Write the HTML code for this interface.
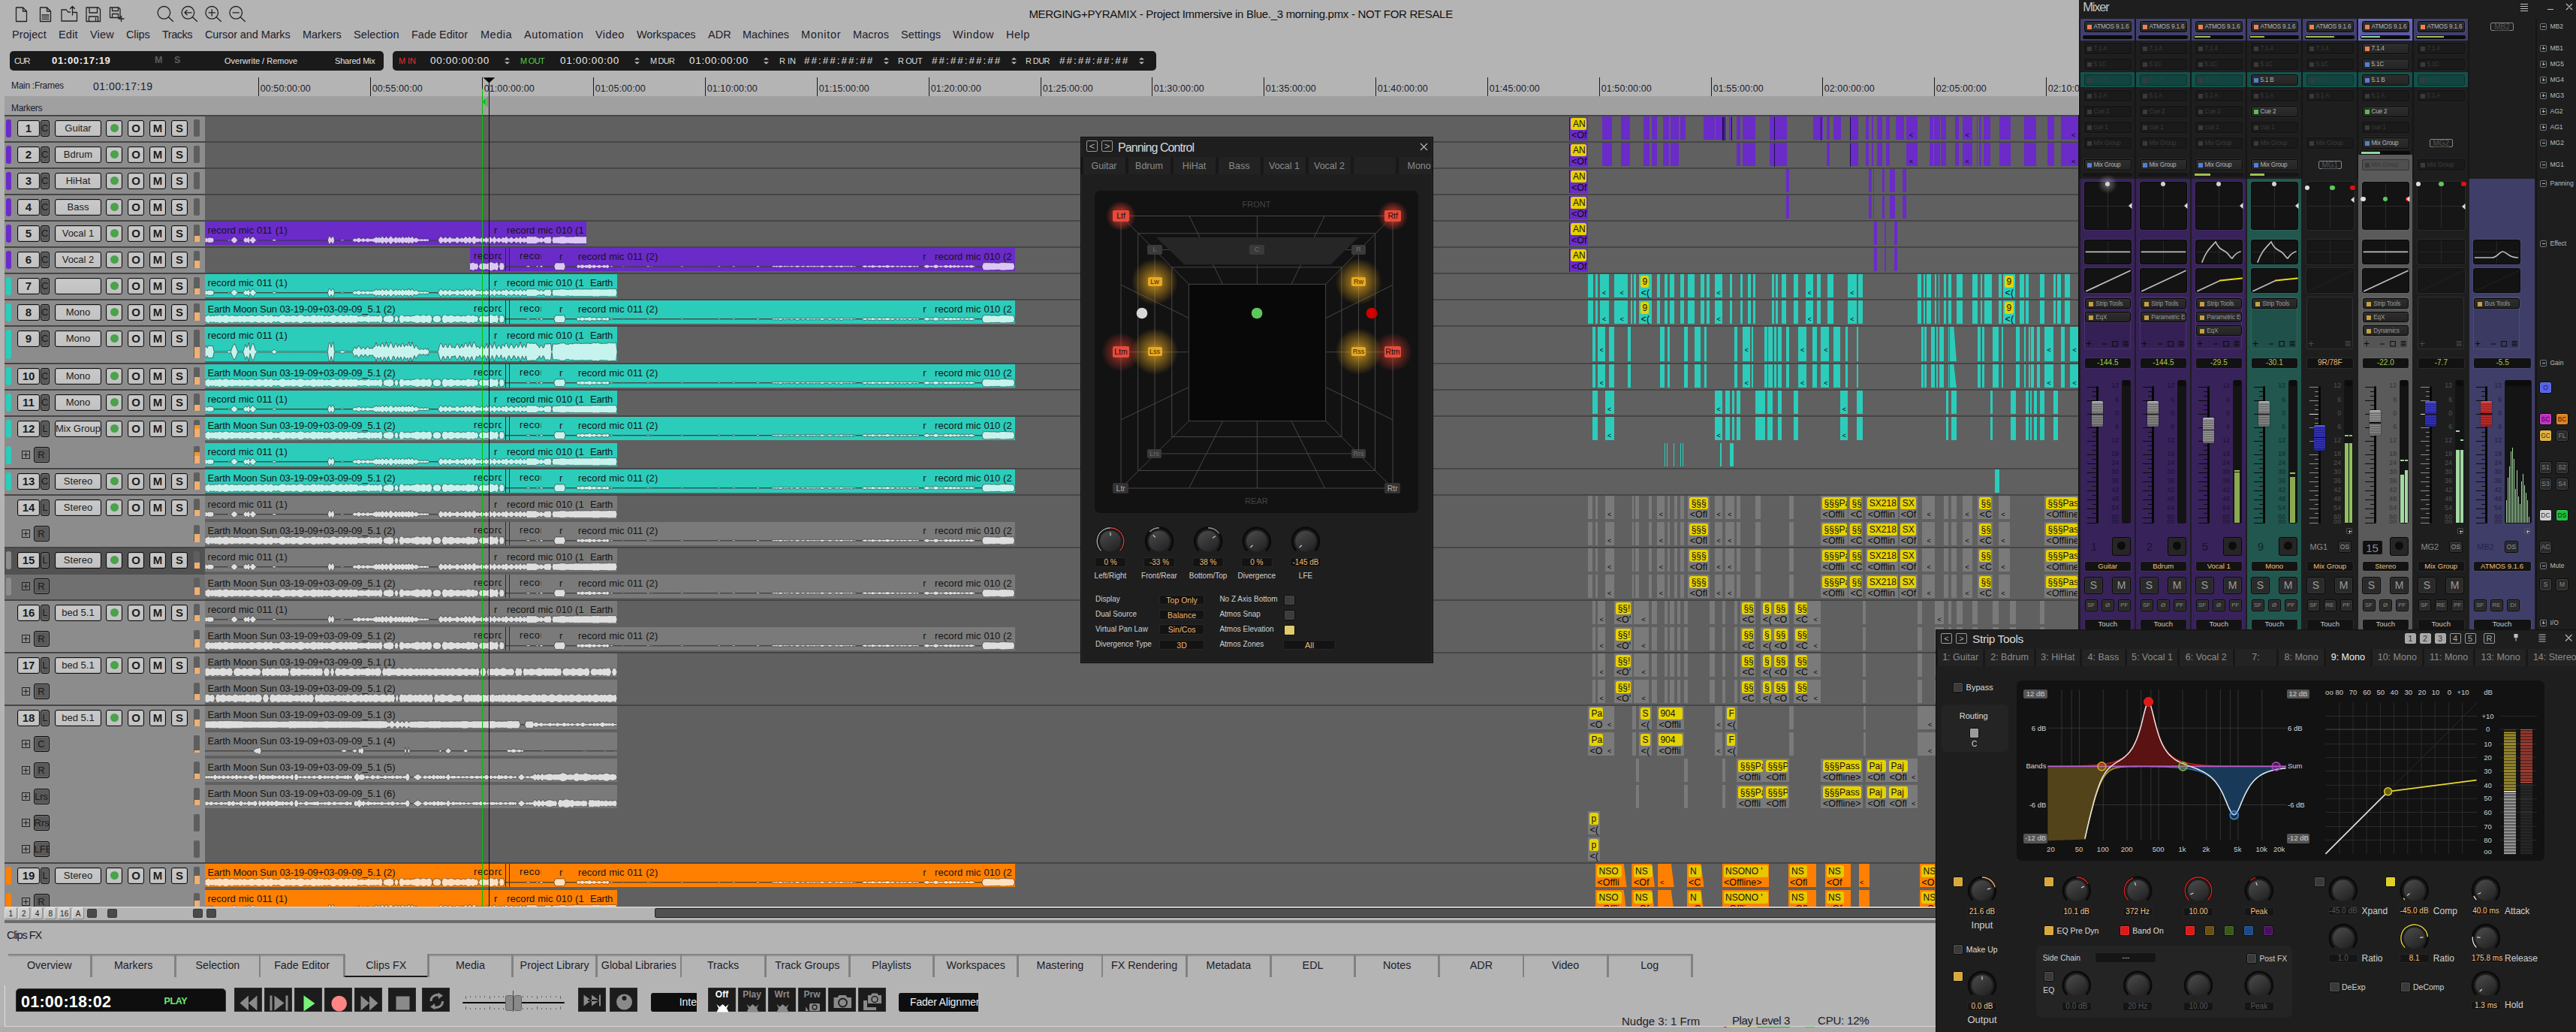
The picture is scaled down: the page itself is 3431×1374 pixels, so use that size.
<!DOCTYPE html><html><head><meta charset="utf-8"><title>Pyramix</title><style>
html,body{margin:0;padding:0;background:#b4b4b4}
body{width:3431px;height:1374px;position:relative;overflow:hidden;font-family:"Liberation Sans",sans-serif;font-size:12px;color:#111}
div{position:absolute;box-sizing:border-box}
.t{white-space:nowrap}
.b{border:1px solid #0c0c0c;border-radius:3px;background:linear-gradient(#c9c9c9,#c1c1c1);text-align:center;line-height:20px;font-size:13px;color:#1c1c1c;box-shadow:inset 0 0 0 1px rgba(120,120,120,.25);white-space:nowrap;overflow:hidden}
.b b{font-size:15px}
.n{font-size:13px}
.d{border:1px solid #0c0c0c;border-radius:3px;background:#595959;text-align:center;line-height:20px;font-size:13px;color:#1a1a1a;box-shadow:inset 0 0 0 1px rgba(255,255,255,.12);white-space:nowrap;overflow:hidden}
.g{display:inline-block;width:11px;height:11px;border-radius:6px;background:#4aa24a;vertical-align:-1px}
.pl{border:1px solid #222}
.pl:before{content:"";position:absolute;left:1px;right:1px;top:4px;height:1px;background:#222}
.pl:after{content:"";position:absolute;top:1px;bottom:1px;left:4px;width:1px;background:#222}
.ct{font-size:13px;line-height:18px;white-space:nowrap;color:#141414}
.yl{border-radius:2.5px;font-size:12px;line-height:16.5px;padding-left:2.5px;overflow:hidden;white-space:nowrap;color:#111}
.ys{font-size:12.5px;line-height:14px;overflow:hidden;white-space:nowrap;color:#0a0a0a}

.sq{border:1px solid #8c8c8c;border-top-color:#e8e8e8;border-left-color:#e0e0e0;background:linear-gradient(#d4d4d4,#c2c2c2);font-size:10px;line-height:15px;text-align:center;color:#222;border-radius:2px}
.tab{border-top:2px solid #858585;border-right:2px solid #858585;font-size:15px;line-height:29px;text-align:center;color:#222;white-space:nowrap;overflow:hidden}
.tb{background:#1c1c1c;border:1px solid #2c2c2c}
.tb svg{position:absolute;left:0;top:0}
.at{font-size:12px;font-weight:bold;line-height:13px;text-align:center;width:100%;top:2px;color:#8c8c8c}

.pt{font-size:12.5px;line-height:24px;color:#8c8c8c;text-align:center;background:#222;white-space:nowrap;overflow:hidden}
.sp{font-size:10.5px;line-height:14.5px;text-align:center;border-radius:2px;color:#111;white-space:nowrap}
.sps{font-size:9px;line-height:12px}
.vb{background:#131313;border-radius:2px;color:#f2b66e;font-size:10px;text-align:center;white-space:nowrap;box-shadow:0 0 0 1px #262626}
.cb{border:1px solid #0c0c0c;border-radius:2.5px;background:#3c3c3c;box-shadow:inset 0 0 0 1px rgba(255,255,255,.06)}
.nb{border:1px solid #9a9a9a;border-radius:2px;color:#aaa;font-size:13px;line-height:13px;text-align:center}

.mb{border:1px solid #080808;border-radius:2.5px;background:linear-gradient(#2e2e2e,#242424);font-size:8.2px;letter-spacing:-0.2px;line-height:13.5px;color:#b4b4b4;white-space:nowrap;overflow:hidden;padding-left:12px;box-shadow:0 0 0 1px rgba(255,255,255,.06)}
.mb i{position:absolute;left:3.5px;top:4px;width:6.300px;height:6.300px}
.mi{border:1px solid rgba(0,0,0,.35);border-radius:2.5px;background:rgba(0,0,0,.12);font-size:8.2px;letter-spacing:-0.2px;line-height:13.5px;color:#3a3a3a;white-space:nowrap;overflow:hidden;padding-left:12px;box-shadow:0 0 0 1px rgba(255,255,255,.025)}
.mi i{position:absolute;left:3.5px;top:4px;width:6.300px;height:6.300px;background:#3a3a3a}
.bx{background:#131313;border:1.5px solid #090909;border-radius:3px;box-shadow:0 0 0 1px rgba(255,255,255,.06)}
.gv{background:#121212;border-radius:2px;font-size:10px;line-height:12.500px;text-align:center;color:#a8c850;box-shadow:0 0 0 1px rgba(255,255,255,.05)}
.nm{background:#131313;border-radius:2px;font-size:9.5px;line-height:12.700px;text-align:center;color:#f0c080;white-space:nowrap;box-shadow:0 0 0 1px rgba(255,255,255,.05)}
.sm{background:#2a2a2a;border:1.5px solid #0a0a0a;border-radius:3px;font-size:14px;line-height:21px;text-align:center;color:#9a9a9a;box-shadow:inset 0 0 0 1px rgba(255,255,255,.05)}
.sf{background:#2a2a2a;border:1px solid #0a0a0a;border-radius:2.5px;font-size:8px;line-height:14px;text-align:center;color:#8a8a8a;box-shadow:inset 0 0 0 1px rgba(255,255,255,.05)}
.ol{border:1px solid #888;border-radius:2px;font-size:10px;line-height:9px;text-align:center;color:#555;text-decoration:underline}
.rl{font-size:8.5px;line-height:11px;color:#bdbdbd;white-space:nowrap}
.pm{width:9px;height:9px;border:1px solid #777;border-radius:1.5px}
.pm:before{content:"";position:absolute;left:1.5px;top:3px;width:4px;height:1px;background:#bbb}
.pp:after{content:"";position:absolute;left:3px;top:1.5px;width:1px;height:4px;background:#bbb}
.sn{font-size:8.7px;line-height:9px;text-align:right;width:14px;white-space:nowrap}
.cbt{border:1px solid #0a0a0a;border-radius:3px;font-size:8.5px;line-height:15px;text-align:center;box-shadow:inset 0 0 0 1px rgba(255,255,255,.12)}

.st{font-size:12.5px;line-height:23.400px;color:#8c8c8c;text-align:center;background:#232323;white-space:nowrap;overflow:hidden}
.nf{border:1px solid #aaa;background:#a8a8a8;border-radius:2px;color:#333;font-size:11px;line-height:13px;text-align:center}
.no{border:1px solid #9a9a9a;border-radius:2px;color:#aaa;font-size:11px;line-height:13px;text-align:center}
.led{border:1px solid #0c0c0c;border-radius:2.5px;box-shadow:inset 0 0 0 1px rgba(255,255,255,.12)}
.kv{background:#151515;border-radius:2px;color:#f5c080;font-size:10px;line-height:10.500px;text-align:center;white-space:nowrap;box-shadow:0 0 0 1px #262626}
.gl{font-size:9.5px;line-height:11px;color:#d0d0d0;white-space:nowrap}
.db{background:#555;border-radius:2px;font-size:9.5px;line-height:12.500px;color:#d0d0d0;text-align:center}
</style></head><body><div style="left:0px;top:0px;width:2768px;height:1374px;background:#b4b4b4;"></div><svg style="position:absolute;left:0;top:0" width="340" height="36" viewBox="0 0 340 36" stroke="#222" stroke-width="1.3" fill="none" stroke-linejoin="round" stroke-linecap="round"><path d="M21.5 10h9l5 5v13.5h-14z M30.5 10v5h5"/><path d="M53.5 10h9l5 5v13.5h-14z M62.5 10v5h5 M56 20h9 M56 22.7h9 M56 25.4h9"/><path d="M96.5 16.5h6v11.5h-20.5v-15h6.5l2 3h3 M96.5 20v-11 M93.5 11.5l3-3 3 3"/><path d="M115 10h16l2.500 2.500v16h-18.5z M119 10v7h10.500v-7 M118.500 28.500v-6.500h12v6.500 M127.500 24v3"/><path d="M146.500 10h11.500l2 2v11.500h-13.500z M149.500 10v4.500h8v-4.500 M149.500 23.500v-5h8v5 M158 25h7 M161.500 21.500v7"/><circle cx="218.400" cy="16.800" r="8.300"/><path d="M224.500 22.800l6 5.700"/><circle cx="250.400" cy="16.800" r="8.300"/><path d="M256.500 22.800l6 5.700 M246 16.800h9 M249 13.800l-3 3 3 3"/><circle cx="282.200" cy="16.800" r="8.300"/><path d="M288.300 22.800l6 5.700 M278 16.800h8.400 M282.200 12.600v8.400"/><circle cx="314.200" cy="16.800" r="8.300"/><path d="M320.300 22.800l6 5.700 M310 16.800h8.400"/></svg><div class="t" style="top:9.4px;font-size:15px;line-height:20px;color:#111;letter-spacing:-0.3px;left:1370.4px;">MERGING+PYRAMIX - Project Immersive in Blue._3 morning.pmx - NOT FOR RESALE</div><div class="t" style="top:36.5px;font-size:14.5px;line-height:19px;color:#1c1c2c;letter-spacing:0.1px;left:16px;">Project</div><div class="t" style="top:36.5px;font-size:14.5px;line-height:19px;color:#1c1c2c;letter-spacing:0.2px;left:78px;">Edit</div><div class="t" style="top:36.5px;font-size:14.5px;line-height:19px;color:#1c1c2c;letter-spacing:0.2px;left:120px;">View</div><div class="t" style="top:36.5px;font-size:14.5px;line-height:19px;color:#1c1c2c;letter-spacing:-0.1px;left:168px;">Clips</div><div class="t" style="top:36.5px;font-size:14.5px;line-height:19px;color:#1c1c2c;letter-spacing:-0.5px;left:216px;">Tracks</div><div class="t" style="top:36.5px;font-size:14.5px;line-height:19px;color:#1c1c2c;letter-spacing:-0.1px;left:273px;">Cursor and Marks</div><div class="t" style="top:36.5px;font-size:14.5px;line-height:19px;color:#1c1c2c;letter-spacing:-0.1px;left:403px;">Markers</div><div class="t" style="top:36.5px;font-size:14.5px;line-height:19px;color:#1c1c2c;letter-spacing:0.1px;left:471px;">Selection</div><div class="t" style="top:36.5px;font-size:14.5px;line-height:19px;color:#1c1c2c;letter-spacing:0px;left:548px;">Fade Editor</div><div class="t" style="top:36.5px;font-size:14.5px;line-height:19px;color:#1c1c2c;letter-spacing:0.5px;left:640px;">Media</div><div class="t" style="top:36.5px;font-size:14.5px;line-height:19px;color:#1c1c2c;letter-spacing:0.6px;left:698px;">Automation</div><div class="t" style="top:36.5px;font-size:14.5px;line-height:19px;color:#1c1c2c;letter-spacing:0.4px;left:793px;">Video</div><div class="t" style="top:36.5px;font-size:14.5px;line-height:19px;color:#1c1c2c;letter-spacing:-0.1px;left:848px;">Workspaces</div><div class="t" style="top:36.5px;font-size:14.5px;line-height:19px;color:#1c1c2c;letter-spacing:-0px;left:943px;">ADR</div><div class="t" style="top:36.5px;font-size:14.5px;line-height:19px;color:#1c1c2c;letter-spacing:-0px;left:989px;">Machines</div><div class="t" style="top:36.5px;font-size:14.5px;line-height:19px;color:#1c1c2c;letter-spacing:0.7px;left:1067px;">Monitor</div><div class="t" style="top:36.5px;font-size:14.5px;line-height:19px;color:#1c1c2c;letter-spacing:0.1px;left:1136px;">Macros</div><div class="t" style="top:36.5px;font-size:14.5px;line-height:19px;color:#1c1c2c;letter-spacing:0.1px;left:1200px;">Settings</div><div class="t" style="top:36.5px;font-size:14.5px;line-height:19px;color:#1c1c2c;letter-spacing:0.6px;left:1269px;">Window</div><div class="t" style="top:36.5px;font-size:14.5px;line-height:19px;color:#1c1c2c;letter-spacing:0.5px;left:1340px;">Help</div><div style="left:13px;top:68px;width:498px;height:26px;background:#1a1a1a;border-radius:5px"></div><div style="left:523px;top:68px;width:1017px;height:26px;background:#1a1a1a;border-radius:5px"></div><div class="t" style="top:73.5px;font-size:11px;line-height:14px;color:#ddd;letter-spacing:-1.2px;left:19px;">CUR</div><div class="t" style="top:72.3px;font-size:13px;line-height:17px;color:#eee;font-weight:bold;letter-spacing:0.7px;left:69px;">01:00:17:19</div><div class="t" style="top:72px;font-size:12.5px;line-height:16px;color:#5c5c5c;font-weight:bold;left:206px;">M</div><div class="t" style="top:72px;font-size:12.5px;line-height:16px;color:#5c5c5c;font-weight:bold;left:232px;">S</div><div class="t" style="top:74px;font-size:11px;line-height:14px;color:#e4e4e4;letter-spacing:-0px;left:299px;">Overwrite / Remove</div><div class="t" style="top:74px;font-size:11px;line-height:14px;color:#e4e4e4;letter-spacing:-0.2px;left:446px;">Shared Mix</div><div class="t" style="top:74px;font-size:11px;line-height:14px;color:#e03030;letter-spacing:-0.1px;left:531px;">M IN</div><div class="t" style="top:71.8px;font-size:13.5px;line-height:18px;color:#e6e6e6;letter-spacing:0.7px;left:573px;">00:00:00:00</div><svg style="position:absolute;left:671.5px;top:76px" width="8" height="10"><path d="M0 3.500l3.500-3 3.500 3z M0 6.500l3.500 3 3.500-3z" fill="#bbb"/></svg><div class="t" style="top:74px;font-size:11px;line-height:14px;color:#50d040;letter-spacing:-0.7px;left:693px;">M OUT</div><div class="t" style="top:71.8px;font-size:13.5px;line-height:18px;color:#e6e6e6;letter-spacing:0.7px;left:746px;">01:00:00:00</div><svg style="position:absolute;left:844.5px;top:76px" width="8" height="10"><path d="M0 3.500l3.500-3 3.500 3z M0 6.500l3.500 3 3.500-3z" fill="#bbb"/></svg><div class="t" style="top:74px;font-size:11px;line-height:14px;color:#ddd;letter-spacing:-0.8px;left:866px;">M DUR</div><div class="t" style="top:71.8px;font-size:13.5px;line-height:18px;color:#e6e6e6;letter-spacing:0.7px;left:918px;">01:00:00:00</div><svg style="position:absolute;left:1016.5px;top:76px" width="8" height="10"><path d="M0 3.500l3.500-3 3.500 3z M0 6.500l3.500 3 3.500-3z" fill="#bbb"/></svg><div class="t" style="top:74px;font-size:11px;line-height:14px;color:#ddd;letter-spacing:0px;left:1038px;">R IN</div><div class="t" style="top:71.8px;font-size:13.5px;line-height:18px;color:#e6e6e6;letter-spacing:2px;left:1071px;">##:##:##:##</div><svg style="position:absolute;left:1176.5px;top:76px" width="8" height="10"><path d="M0 3.500l3.500-3 3.500 3z M0 6.500l3.500 3 3.500-3z" fill="#bbb"/></svg><div class="t" style="top:74px;font-size:11px;line-height:14px;color:#ddd;letter-spacing:-0.4px;left:1196px;">R OUT</div><div class="t" style="top:71.8px;font-size:13.5px;line-height:18px;color:#e6e6e6;letter-spacing:2px;left:1241px;">##:##:##:##</div><svg style="position:absolute;left:1346.5px;top:76px" width="8" height="10"><path d="M0 3.500l3.500-3 3.500 3z M0 6.500l3.500 3 3.500-3z" fill="#bbb"/></svg><div class="t" style="top:74px;font-size:11px;line-height:14px;color:#ddd;letter-spacing:-0.6px;left:1366px;">R DUR</div><div class="t" style="top:71.8px;font-size:13.5px;line-height:18px;color:#e6e6e6;letter-spacing:2px;left:1411px;">##:##:##:##</div><svg style="position:absolute;left:1516.5px;top:76px" width="8" height="10"><path d="M0 3.500l3.500-3 3.500 3z M0 6.500l3.500 3 3.500-3z" fill="#bbb"/></svg><div class="t" style="top:105.7px;font-size:12px;line-height:16px;color:#1c1c2c;letter-spacing:-0.3px;left:15px;">Main :Frames</div><div class="t" style="top:106.3px;font-size:14px;line-height:18px;color:#1c1c2c;letter-spacing:0.5px;left:124px;">01:00:17:19</div><div style="left:344px;top:103px;width:1px;height:25px;background:#1a1a1a;"></div><div class="t" style="top:109.6px;font-size:12.5px;line-height:16px;color:#1c1c2c;letter-spacing:0.1px;left:346.7px;">00:50:00:00</div><div style="left:493px;top:103px;width:1px;height:25px;background:#1a1a1a;"></div><div class="t" style="top:109.6px;font-size:12.5px;line-height:16px;color:#1c1c2c;letter-spacing:0.1px;left:495.7px;">00:55:00:00</div><div style="left:642px;top:103px;width:1px;height:25px;background:#1a1a1a;"></div><div class="t" style="top:109.6px;font-size:12.5px;line-height:16px;color:#1c1c2c;letter-spacing:0.1px;left:644.7px;">01:00:00:00</div><div style="left:790px;top:103px;width:1px;height:25px;background:#1a1a1a;"></div><div class="t" style="top:109.6px;font-size:12.5px;line-height:16px;color:#1c1c2c;letter-spacing:0.1px;left:792.7px;">01:05:00:00</div><div style="left:939px;top:103px;width:1px;height:25px;background:#1a1a1a;"></div><div class="t" style="top:109.6px;font-size:12.5px;line-height:16px;color:#1c1c2c;letter-spacing:0.1px;left:941.7px;">01:10:00:00</div><div style="left:1088px;top:103px;width:1px;height:25px;background:#1a1a1a;"></div><div class="t" style="top:109.6px;font-size:12.5px;line-height:16px;color:#1c1c2c;letter-spacing:0.1px;left:1090.7px;">01:15:00:00</div><div style="left:1237px;top:103px;width:1px;height:25px;background:#1a1a1a;"></div><div class="t" style="top:109.6px;font-size:12.5px;line-height:16px;color:#1c1c2c;letter-spacing:0.1px;left:1239.7px;">01:20:00:00</div><div style="left:1386px;top:103px;width:1px;height:25px;background:#1a1a1a;"></div><div class="t" style="top:109.6px;font-size:12.5px;line-height:16px;color:#1c1c2c;letter-spacing:0.1px;left:1388.7px;">01:25:00:00</div><div style="left:1534px;top:103px;width:1px;height:25px;background:#1a1a1a;"></div><div class="t" style="top:109.6px;font-size:12.5px;line-height:16px;color:#1c1c2c;letter-spacing:0.1px;left:1536.7px;">01:30:00:00</div><div style="left:1683px;top:103px;width:1px;height:25px;background:#1a1a1a;"></div><div class="t" style="top:109.6px;font-size:12.5px;line-height:16px;color:#1c1c2c;letter-spacing:0.1px;left:1685.7px;">01:35:00:00</div><div style="left:1832px;top:103px;width:1px;height:25px;background:#1a1a1a;"></div><div class="t" style="top:109.6px;font-size:12.5px;line-height:16px;color:#1c1c2c;letter-spacing:0.1px;left:1834.7px;">01:40:00:00</div><div style="left:1981px;top:103px;width:1px;height:25px;background:#1a1a1a;"></div><div class="t" style="top:109.6px;font-size:12.5px;line-height:16px;color:#1c1c2c;letter-spacing:0.1px;left:1983.7px;">01:45:00:00</div><div style="left:2130px;top:103px;width:1px;height:25px;background:#1a1a1a;"></div><div class="t" style="top:109.6px;font-size:12.5px;line-height:16px;color:#1c1c2c;letter-spacing:0.1px;left:2132.7px;">01:50:00:00</div><div style="left:2279px;top:103px;width:1px;height:25px;background:#1a1a1a;"></div><div class="t" style="top:109.6px;font-size:12.5px;line-height:16px;color:#1c1c2c;letter-spacing:0.1px;left:2281.7px;">01:55:00:00</div><div style="left:2427px;top:103px;width:1px;height:25px;background:#1a1a1a;"></div><div class="t" style="top:109.6px;font-size:12.5px;line-height:16px;color:#1c1c2c;letter-spacing:0.1px;left:2429.7px;">02:00:00:00</div><div style="left:2576px;top:103px;width:1px;height:25px;background:#1a1a1a;"></div><div class="t" style="top:109.6px;font-size:12.5px;line-height:16px;color:#1c1c2c;letter-spacing:0.1px;left:2578.7px;">02:05:00:00</div><div style="left:2725px;top:103px;width:1px;height:25px;background:#1a1a1a;"></div><div class="t" style="top:109.6px;font-size:12.5px;line-height:16px;color:#1c1c2c;letter-spacing:0.1px;left:2727.7px;">02:10:00:00</div><div style="left:6px;top:128px;width:2762px;height:25.5px;background:#a0a0a0;"></div><div class="t" style="top:135.7px;font-size:12px;line-height:16px;color:#1c1c2c;letter-spacing:-0.3px;left:15px;">Markers</div><svg width="0" height="0" style="position:absolute"><defs><symbol id="wA" viewBox="0 0 549 10" preserveAspectRatio="none"><polygon points="0,3.1 1.5,1.8 3,3.1 4.5,2 6,2 7.5,2 9,2.2 10.5,2 12,4.8 13.5,4.8 15,4.8 16.5,4.8 18,4.8 19.5,4.8 21,4.8 22.5,4.8 24,4.8 25.5,4.8 27,4.8 28.5,4.8 30,4.8 31.5,4.4 33,4.4 34.5,4.8 36,3.2 37.5,1.9 39,1 40.5,1.9 42,3.2 43.5,4.8 45,4.8 46.5,4.8 48,4.8 49.5,4.8 51,4.8 52.5,2.9 54,1.3 55.5,2.9 57,2.3 58.5,0.4 60,4.2 61.5,2.6 63,1 64.5,1 66,2.6 67.5,4.2 69,4.8 70.5,4.8 72,4.8 73.5,4.8 75,4.8 76.5,4.8 78,4.8 79.5,4.8 81,4.8 82.5,4.8 84,4.8 85.5,4.8 87,4.8 88.5,4.8 90,4.6 91.5,3.9 93,3.9 94.5,4.6 96,4.8 97.5,4.8 99,4.8 100.5,4.8 102,4.8 103.5,4.8 105,4.8 106.5,4.8 108,4.8 109.5,4.8 111,4.8 112.5,4.8 114,4.8 115.5,4.8 117,4.8 118.5,4.8 120,4.8 121.5,4.8 123,4.8 124.5,4.8 126,4.8 127.5,4.8 129,4.8 130.5,4.8 132,4.8 133.5,4.8 135,4.8 136.5,4.8 138,4.8 139.5,4.8 141,4.8 142.5,4.8 144,4.8 145.5,4.8 147,4.8 148.5,4.8 150,4.8 151.5,4.8 153,4.8 154.5,4.8 156,4.8 157.5,4.8 159,4.8 160.5,4.8 162,4.8 163.5,4.8 165,0.6 166.5,0.5 168,2.8 169.5,1.2 171,0.1 172.5,4.8 174,4.8 175.5,4.8 177,4.8 178.5,4.8 180,4.7 181.5,4.5 183,4.2 184.5,4.5 186,4.7 187.5,4.8 189,4.8 190.5,4.8 192,4.8 193.5,4.8 195,4.8 196.5,4.8 198,3.5 199.5,2.5 201,3.5 202.5,3.3 204,2.1 205.5,2.1 207,3.3 208.5,3.7 210,2.7 211.5,2.7 213,3.7 214.5,3.5 216,2.5 217.5,2.5 219,3.5 220.5,3.2 222,3.2 223.5,3.4 225,2.3 226.5,2.3 228,0.3 229.5,2.3 231,1.6 232.5,1.6 234,2.5 235.5,0.7 237,0.7 238.5,2.5 240,2.1 241.5,0 243,2.1 244.5,2.8 246,1.2 247.5,0.1 249,1.2 250.5,2.8 252,2.7 253.5,1 255,1 256.5,2.7 258,1.5 259.5,1.5 261,2.6 262.5,0.9 264,0.9 265.5,2.6 267,1.5 268.5,1.5 270,2.1 271.5,0 273,2.1 274.5,2.1 276,0 277.5,2.1 279,3.2 280.5,1.9 282,1.9 283.5,3.2 285,3.8 286.5,3.8 288,3.5 289.5,3.5 291,4 292.5,3.4 294,3.4 295.5,4 297,3.2 298.5,4.8 300,4.8 301.5,4.8 303,4.8 304.5,4.8 306,4.8 307.5,4.8 309,4.8 310.5,4.8 312,2.6 313.5,0.8 315,0.8 316.5,2.6 318,2.8 319.5,1.2 321,1.2 322.5,2.8 324,2.8 325.5,1.1 327,1.1 328.5,2.8 330,2.7 331.5,2.7 333,3.2 334.5,1.9 336,0.9 337.5,1.9 339,3.2 340.5,2.8 342,1.2 343.5,2.8 345,2.5 346.5,0.7 348,0.7 349.5,2.5 351,2.1 352.5,0 354,2.1 355.5,2.8 357,1.1 358.5,0 360,1.1 361.5,2.8 363,2.4 364.5,2.4 366,3.4 367.5,2.3 369,1.5 370.5,2.3 372,3.4 373.5,2.5 375,0.7 376.5,3.2 378,1.8 379.5,0.9 381,1.8 382.5,3.2 384,2.1 385.5,0 387,2.1 388.5,3.5 390,2.4 391.5,1.6 393,2.4 394.5,3.5 396,1.5 397.5,1.5 399,2.5 400.5,0.7 402,0.7 403.5,2.5 405,3.2 406.5,1.9 408,1 409.5,1.9 411,3.2 412.5,2.9 414,1.4 415.5,1.4 417,2.9 418.5,2.1 420,0 421.5,2.1 423,3 424.5,1.5 426,1.5 427.5,3 429,0.5 430.5,0.6 432,0.7 433.5,0.8 435,0.7 436.5,0.8 438,0.9 439.5,0.7 441,0.7 442.5,1.8 444,1.8 445.5,3.1 447,1.7 448.5,1.7 450,3.1 451.5,2.8 453,1 454.5,1.1 456,1.1 457.5,1.1 459,0.9 460.5,0.9 462,4.8 463.5,1.1 465,1.1 466.5,1.2 468,1.2 469.5,1.1 471,1 472.5,1 474,0.6 475.5,0.7 477,0.6 478.5,0.7 480,0.9 481.5,1.4 483,1.1 484.5,1.4 486,0.8 487.5,1 489,1 490.5,1 492,0.8 493.5,0.7 495,0.8 496.5,0.8 498,0.7 499.5,0.9 501,0.9 502.5,0.9 504,0.8 505.5,0.8 507,0.8 508.5,0.8 510,0.7 511.5,0.9 513,0.9 514.5,0.9 516,0.7 517.5,0.5 519,0.5 520.5,0.7 522,0.5 523.5,0.4 525,0.7 526.5,0.8 528,0.9 529.5,0.9 531,0.7 532.5,0.9 534,0.7 535.5,0.8 537,0.6 538.5,0.4 540,0.6 541.5,0.6 543,0.6 544.5,0.7 546,0.5 547.5,0.4 549,4.8 549,5.2 547.5,9.6 546,9.5 544.5,9.3 543,9.4 541.5,9.4 540,9.4 538.5,9.6 537,9.4 535.5,9.2 534,9.3 532.5,9.1 531,9.3 529.5,9.1 528,9.1 526.5,9.2 525,9.3 523.5,9.6 522,9.5 520.5,9.3 519,9.5 517.5,9.5 516,9.3 514.5,9.1 513,9.1 511.5,9.1 510,9.3 508.5,9.2 507,9.2 505.5,9.2 504,9.2 502.5,9.1 501,9.1 499.5,9.1 498,9.3 496.5,9.2 495,9.2 493.5,9.3 492,9.2 490.5,9 489,9 487.5,9 486,9.2 484.5,8.6 483,8.9 481.5,8.6 480,9.1 478.5,9.3 477,9.4 475.5,9.3 474,9.4 472.5,9 471,9 469.5,8.9 468,8.8 466.5,8.8 465,8.9 463.5,8.9 462,5.2 460.5,9.1 459,9.1 457.5,8.9 456,8.9 454.5,8.9 453,9 451.5,7.2 450,6.9 448.5,8.3 447,8.3 445.5,6.9 444,8.2 442.5,8.2 441,9.3 439.5,9.3 438,9.1 436.5,9.2 435,9.3 433.5,9.2 432,9.3 430.5,9.4 429,9.5 427.5,7 426,8.5 424.5,8.5 423,7 421.5,7.9 420,10 418.5,7.9 417,7.1 415.5,8.6 414,8.6 412.5,7.1 411,6.8 409.5,8.1 408,9 406.5,8.1 405,6.8 403.5,7.5 402,9.3 400.5,9.3 399,7.5 397.5,8.5 396,8.5 394.5,6.5 393,7.6 391.5,8.4 390,7.6 388.5,6.5 387,7.9 385.5,10 384,7.9 382.5,6.8 381,8.2 379.5,9.1 378,8.2 376.5,6.8 375,9.3 373.5,7.5 372,6.6 370.5,7.7 369,8.5 367.5,7.7 366,6.6 364.5,7.6 363,7.6 361.5,7.2 360,8.9 358.5,10 357,8.9 355.5,7.2 354,7.9 352.5,10 351,7.9 349.5,7.5 348,9.3 346.5,9.3 345,7.5 343.5,7.2 342,8.8 340.5,7.2 339,6.8 337.5,8.1 336,9.1 334.5,8.1 333,6.8 331.5,7.3 330,7.3 328.5,7.2 327,8.9 325.5,8.9 324,7.2 322.5,7.2 321,8.8 319.5,8.8 318,7.2 316.5,7.4 315,9.2 313.5,9.2 312,7.4 310.5,5.2 309,5.2 307.5,5.2 306,5.2 304.5,5.2 303,5.2 301.5,5.2 300,5.2 298.5,5.2 297,6.8 295.5,6 294,6.6 292.5,6.6 291,6 289.5,6.5 288,6.5 286.5,6.2 285,6.2 283.5,6.8 282,8.1 280.5,8.1 279,6.8 277.5,7.9 276,10 274.5,7.9 273,7.9 271.5,10 270,7.9 268.5,8.5 267,8.5 265.5,7.4 264,9.1 262.5,9.1 261,7.4 259.5,8.5 258,8.5 256.5,7.3 255,9 253.5,9 252,7.3 250.5,7.2 249,8.8 247.5,9.9 246,8.8 244.5,7.2 243,7.9 241.5,10 240,7.9 238.5,7.5 237,9.3 235.5,9.3 234,7.5 232.5,8.4 231,8.4 229.5,7.7 228,9.7 226.5,7.7 225,7.7 223.5,6.6 222,6.8 220.5,6.8 219,6.5 217.5,7.5 216,7.5 214.5,6.5 213,6.3 211.5,7.3 210,7.3 208.5,6.3 207,6.7 205.5,7.9 204,7.9 202.5,6.7 201,6.5 199.5,7.5 198,6.5 196.5,5.2 195,5.2 193.5,5.2 192,5.2 190.5,5.2 189,5.2 187.5,5.2 186,5.3 184.5,5.5 183,5.8 181.5,5.5 180,5.3 178.5,5.2 177,5.2 175.5,5.2 174,5.2 172.5,5.2 171,9.9 169.5,8.8 168,7.2 166.5,9.5 165,9.4 163.5,5.2 162,5.2 160.5,5.2 159,5.2 157.5,5.2 156,5.2 154.5,5.2 153,5.2 151.5,5.2 150,5.2 148.5,5.2 147,5.2 145.5,5.2 144,5.2 142.5,5.2 141,5.2 139.5,5.2 138,5.2 136.5,5.2 135,5.2 133.5,5.2 132,5.2 130.5,5.2 129,5.2 127.5,5.2 126,5.2 124.5,5.2 123,5.2 121.5,5.2 120,5.2 118.5,5.2 117,5.2 115.5,5.2 114,5.2 112.5,5.2 111,5.2 109.5,5.2 108,5.2 106.5,5.2 105,5.2 103.5,5.2 102,5.2 100.5,5.2 99,5.2 97.5,5.2 96,5.2 94.5,5.4 93,6.1 91.5,6.1 90,5.4 88.5,5.2 87,5.2 85.5,5.2 84,5.2 82.5,5.2 81,5.2 79.5,5.2 78,5.2 76.5,5.2 75,5.2 73.5,5.2 72,5.2 70.5,5.2 69,5.2 67.5,5.8 66,7.4 64.5,9 63,9 61.5,7.4 60,5.8 58.5,9.6 57,7.7 55.5,7.1 54,8.7 52.5,7.1 51,5.2 49.5,5.2 48,5.2 46.5,5.2 45,5.2 43.5,5.2 42,6.8 40.5,8.1 39,9 37.5,8.1 36,6.8 34.5,5.2 33,5.6 31.5,5.6 30,5.2 28.5,5.2 27,5.2 25.5,5.2 24,5.2 22.5,5.2 21,5.2 19.5,5.2 18,5.2 16.5,5.2 15,5.2 13.5,5.2 12,5.2 10.5,8 9,7.8 7.5,8 6,8 4.5,8 3,6.9 1.5,8.2 0,6.9" stroke="#2a2a2a" stroke-width=".6" vector-effect="non-scaling-stroke"/></symbol><symbol id="wB" viewBox="0 0 1079 10" preserveAspectRatio="none"><polygon points="0,1.5 1.5,1.5 3,0.8 4.5,0 6,0.8 7.5,1.6 9,0.9 10.5,0.9 12,1.6 13.5,0.6 15,0.6 16.5,1.1 18,0.4 19.5,0.1 21,0.4 22.5,1.1 24,1.1 25.5,0.4 27,0.1 28.5,0.1 30,0.4 31.5,1.1 33,1.3 34.5,0.6 36,0.4 37.5,0.6 39,1.3 40.5,1 42,1 43.5,1.4 45,0.8 46.5,0.5 48,0.8 49.5,1.4 51,1 52.5,0.2 54,1 55.5,1.3 57,1.3 58.5,1.4 60,0.7 61.5,0.4 63,0.4 64.5,0.7 66,1.4 67.5,1.4 69,0.8 70.5,0.4 72,0.2 73.5,0.4 75,0.8 76.5,1.4 78,1 79.5,0.3 81,0 82.5,0.3 84,1 85.5,0.9 87,0.1 88.5,0.1 90,0.9 91.5,1.9 93,1.3 94.5,1 96,1.3 97.5,1.9 99,1.2 100.5,0.6 102,0.1 103.5,0 105,0.1 106.5,0.6 108,1.2 109.5,1.1 111,0.4 112.5,1.1 114,1.4 115.5,0.7 117,0.4 118.5,0.4 120,0.7 121.5,1.4 123,1.2 124.5,0.6 126,0.1 127.5,0 129,0.1 130.5,0.6 132,1.2 133.5,1.6 135,0.9 136.5,0.7 138,0.9 139.5,1.6 141,1.1 142.5,0.4 144,0.1 145.5,0.1 147,0.4 148.5,1.1 150,0.8 151.5,0 153,0.8 154.5,0.8 156,0 157.5,0.8 159,1.6 160.5,1 162,0.7 163.5,1 165,1.6 166.5,1.2 168,0.6 169.5,0.1 171,0 172.5,0.1 174,0.6 175.5,1.2 177,1.2 178.5,0.5 180,0.1 181.5,0.1 183,0.5 184.5,1.2 186,0.9 187.5,0.1 189,0.1 190.5,0.9 192,0.9 193.5,0.1 195,0.1 196.5,0.9 198,0.4 199.5,0.4 201,0.4 202.5,0.4 204,2 205.5,1.6 207,1.2 208.5,1.1 210,1.2 211.5,1.6 213,2 214.5,1.2 216,1.2 217.5,0.4 219,0.4 220.5,1.6 222,1 223.5,1 225,1.6 226.5,0.9 228,0.9 229.5,1.6 231,1.6 232.5,0.8 234,0 235.5,0.8 237,4.8 238.5,1.6 240,1.6 241.5,1 243,1 244.5,0.8 246,0 247.5,0.8 249,1 250.5,1 252,4.8 253.5,1.6 255,1 256.5,1.6 258,4.8 259.5,0.9 261,0.1 262.5,0.1 264,0.9 265.5,2 267,1.6 268.5,1.2 270,1.1 271.5,1.2 273,1.6 274.5,2 276,1.1 277.5,1.1 279,1.1 280.5,0.4 282,0.1 283.5,0.1 285,0.4 286.5,1.1 288,1 289.5,0.3 291,0 292.5,0.3 294,1 295.5,1 297,0.3 298.5,0 300,0.3 301.5,1 303,4.8 304.5,1.7 306,1.2 307.5,0.8 309,0.7 310.5,0.8 312,1.2 313.5,1.7 315,4.8 316.5,1 318,0.3 319.5,0 321,0.3 322.5,1 324,1.3 325.5,0.6 327,0.2 328.5,0.2 330,0.6 331.5,1.3 333,1.7 334.5,1.1 336,0.7 337.5,0.7 339,1.1 340.5,1.7 342,1.6 343.5,0.9 345,0.9 346.5,1.6 348,1.1 349.5,0.3 351,0.1 352.5,0.3 354,1.1 355.5,0.8 357,0 358.5,0.8 360,1.6 361.5,1 363,1.6 364.5,4.8 366,1.8 367.5,1.4 369,1 370.5,0.9 372,1 373.5,1.4 375,1.8 376.5,1.2 378,0.6 379.5,0.1 381,0 382.5,0.1 384,0.6 385.5,1.2 387,0.8 388.5,0 390,0.8 391.5,4.8 393,0.6 394.5,0.6 396,1.1 397.5,0.4 399,4.8 400.5,4.8 402,4.8 403.5,4.8 405,4.8 406.5,4.8 408,4.8 409.5,4.8 411,4.8 412.5,4.8 414,4.8 415.5,4.8 417,4.8 418.5,4.8 420,4.8 421.5,4.8 423,4.8 424.5,4.8 426,4.8 427.5,4.7 429,4.4 430.5,4 432,4.4 433.5,4.7 435,4.8 436.5,4.8 438,4.8 439.5,4.8 441,4.7 442.5,4 444,4.7 445.5,4.7 447,4.2 448.5,3.7 450,4.8 451.5,4.8 453,4.8 454.5,4.8 456,4.8 457.5,4.8 459,4.8 460.5,4.8 462,4.8 463.5,4.8 465,4.8 466.5,1 468,0.8 469.5,0.8 471,0.8 472.5,0.9 474,0.9 475.5,0.9 477,0.6 478.5,0.7 480,4.8 481.5,4.8 483,4.8 484.5,4.8 486,4.8 487.5,4.8 489,4.8 490.5,4.8 492,4.8 493.5,4.8 495,4.8 496.5,2.9 498,2.9 499.5,3.9 501,3.1 502.5,2.5 504,3.1 505.5,3.9 507,3 508.5,3 510,3.5 511.5,2.4 513,2.4 514.5,3.5 516,3.8 517.5,2.9 519,2.9 520.5,3.8 522,4.1 523.5,3.4 525,2.9 526.5,3.4 528,4.1 529.5,3.9 531,3.1 532.5,3.1 534,3.9 535.5,2.8 537,2.8 538.5,4.7 540,4.5 541.5,4.1 543,4.5 544.5,4.7 546,4.8 547.5,4.8 549,4.8 550.5,4.8 552,4.8 553.5,4.8 555,4.7 556.5,4.5 558,4.5 559.5,4.7 561,4.8 562.5,4.8 564,4.8 565.5,4.8 567,4.8 568.5,4.8 570,4.8 571.5,4.8 573,4.8 574.5,4.8 576,4.8 577.5,4.8 579,4.8 580.5,4.8 582,4.8 583.5,4.8 585,4.8 586.5,4.8 588,4.7 589.5,4.3 591,4.3 592.5,4.7 594,4.6 595.5,4.6 597,4.8 598.5,4.8 600,4.8 601.5,4.8 603,4.8 604.5,4.8 606,4.8 607.5,4.8 609,4.8 610.5,4.8 612,4.8 613.5,4.8 615,4.8 616.5,4.8 618,4.8 619.5,4.8 621,4.8 622.5,4.8 624,4.8 625.5,4.8 627,4.8 628.5,4.8 630,4.8 631.5,4.8 633,4.7 634.5,4.4 636,4.4 637.5,4.7 639,4.8 640.5,4.8 642,4.8 643.5,4.8 645,4.8 646.5,4.8 648,4.8 649.5,4.8 651,4.8 652.5,4.8 654,4.8 655.5,4.8 657,4.8 658.5,4.8 660,4.8 661.5,4.8 663,4.8 664.5,4.8 666,4.8 667.5,4.8 669,4.8 670.5,4.8 672,4.8 673.5,4.8 675,4.8 676.5,4.8 678,4.8 679.5,4.8 681,4.8 682.5,4.7 684,4.4 685.5,4.4 687,4.7 688.5,4.8 690,4.8 691.5,4.8 693,4.8 694.5,4.8 696,4.8 697.5,4.8 699,4.8 700.5,4.8 702,4.7 703.5,4.3 705,4.3 706.5,4.7 708,4.8 709.5,4.8 711,4.8 712.5,4.8 714,4.8 715.5,4.8 717,4.8 718.5,4.8 720,4.8 721.5,4.8 723,4.8 724.5,4.8 726,4.8 727.5,4.8 729,4.8 730.5,4.8 732,4.8 733.5,4.8 735,4.6 736.5,3.9 738,4.6 739.5,4.8 741,4.8 742.5,4.8 744,4.8 745.5,4.8 747,4.8 748.5,4.8 750,4.8 751.5,4.8 753,4.8 754.5,4.8 756,4.3 757.5,3.9 759,4.3 760.5,4 762,4 763.5,4.4 765,3.9 766.5,3.6 768,3.9 769.5,4.4 771,4.4 772.5,3.9 774,4.4 775.5,4.2 777,4.2 778.5,4.6 780,4.2 781.5,4 783,4.2 784.5,4.6 786,4.4 787.5,4 789,3.7 790.5,4 792,4.4 793.5,4.5 795,4.2 796.5,3.9 798,4.2 799.5,4.5 801,4.3 802.5,3.9 804,3.9 805.5,4.3 807,4.1 808.5,4.1 810,4.3 811.5,3.8 813,4.3 814.5,4.4 816,3.9 817.5,4.4 819,4.3 820.5,3.9 822,3.5 823.5,3.9 825,4.3 826.5,4.3 828,4.3 829.5,4.4 831,4 832.5,3.7 834,4 835.5,4.4 837,4.4 838.5,4.4 840,4.2 841.5,3.7 843,4.2 844.5,4.4 846,3.9 847.5,3.6 849,3.9 850.5,4.4 852,4.2 853.5,4.2 855,4.4 856.5,4 858,4.4 859.5,4.3 861,3.8 862.5,4.3 864,4.5 865.5,4.2 867,4.8 868.5,4.8 870,4.8 871.5,4.8 873,4.8 874.5,4.8 876,4.3 877.5,3.8 879,3.4 880.5,3.8 882,4.3 883.5,4.1 885,3.4 886.5,4.1 888,3.8 889.5,3 891,3.8 892.5,4 894,4 895.5,4.3 897,3.7 898.5,3.4 900,3.7 901.5,4.3 903,3.7 904.5,3.7 906,4.1 907.5,3.5 909,3 910.5,3.5 912,4.1 913.5,4.2 915,3.6 916.5,3.6 918,4.2 919.5,4.5 921,4.1 922.5,3.8 924,4.1 925.5,4.5 927,3.8 928.5,3.8 930,4.3 931.5,3.9 933,3.9 934.5,4.3 936,4.4 937.5,3.9 939,3.6 940.5,3.9 942,4.4 943.5,4.3 945,3.8 946.5,4.3 948,4.3 949.5,3.8 951,4.8 952.5,4.8 954,4.8 955.5,4.8 957,4.8 958.5,4 960,3.3 961.5,2.8 963,3.3 964.5,4 966,4.2 967.5,3.6 969,4.2 970.5,3.9 972,3.1 973.5,2.5 975,3.1 976.5,3.9 978,4.3 979.5,3.8 981,3.8 982.5,4.3 984,4.1 985.5,3.4 987,3 988.5,3.4 990,4.1 991.5,3.6 993,2.6 994.5,3.6 996,4 997.5,3.3 999,3.3 1000.5,4 1002,3.9 1003.5,3.1 1005,3.9 1006.5,4.3 1008,3.7 1009.5,3.7 1011,4.3 1012.5,4.1 1014,3.5 1015.5,3.5 1017,4.1 1018.5,3.9 1020,3.2 1021.5,3.2 1023,3.9 1024.5,4.1 1026,4.8 1027.5,4.8 1029,4.8 1030.5,4.8 1032,4.8 1033.5,4.8 1035,4.8 1036.5,0.9 1038,0.7 1039.5,0.7 1041,0.5 1042.5,0.6 1044,0.7 1045.5,0.6 1047,0.9 1048.5,0.9 1050,0.7 1051.5,0.7 1053,1 1054.5,1 1056,1 1057.5,1 1059,0.9 1060.5,0.4 1062,0.5 1063.5,0.5 1065,0.4 1066.5,0.6 1068,0.7 1069.5,0.7 1071,0.7 1072.5,0.9 1074,0.9 1075.5,0.9 1077,0.9 1078.5,4.8 1078.5,5.2 1077,9.1 1075.5,9.1 1074,9.1 1072.5,9.1 1071,9.3 1069.5,9.3 1068,9.3 1066.5,9.4 1065,9.6 1063.5,9.5 1062,9.5 1060.5,9.6 1059,9.1 1057.5,9 1056,9 1054.5,9 1053,9 1051.5,9.3 1050,9.3 1048.5,9.1 1047,9.1 1045.5,9.4 1044,9.3 1042.5,9.4 1041,9.5 1039.5,9.3 1038,9.3 1036.5,9.1 1035,5.2 1033.5,5.2 1032,5.2 1030.5,5.2 1029,5.2 1027.5,5.2 1026,5.2 1024.5,5.9 1023,6.1 1021.5,6.8 1020,6.8 1018.5,6.1 1017,5.9 1015.5,6.5 1014,6.5 1012.5,5.9 1011,5.7 1009.5,6.3 1008,6.3 1006.5,5.7 1005,6.1 1003.5,6.9 1002,6.1 1000.5,6 999,6.7 997.5,6.7 996,6 994.5,6.4 993,7.4 991.5,6.4 990,5.9 988.5,6.6 987,7 985.5,6.6 984,5.9 982.5,5.7 981,6.2 979.5,6.2 978,5.7 976.5,6.1 975,6.9 973.5,7.5 972,6.9 970.5,6.1 969,5.8 967.5,6.4 966,5.8 964.5,6 963,6.7 961.5,7.2 960,6.7 958.5,6 957,5.2 955.5,5.2 954,5.2 952.5,5.2 951,5.2 949.5,6.2 948,5.7 946.5,5.7 945,6.2 943.5,5.7 942,5.6 940.5,6.1 939,6.4 937.5,6.1 936,5.6 934.5,5.7 933,6.1 931.5,6.1 930,5.7 928.5,6.2 927,6.2 925.5,5.5 924,5.9 922.5,6.2 921,5.9 919.5,5.5 918,5.8 916.5,6.4 915,6.4 913.5,5.8 912,5.9 910.5,6.5 909,7 907.5,6.5 906,5.9 904.5,6.3 903,6.3 901.5,5.7 900,6.3 898.5,6.6 897,6.3 895.5,5.7 894,6 892.5,6 891,6.2 889.5,7 888,6.2 886.5,5.9 885,6.6 883.5,5.9 882,5.7 880.5,6.2 879,6.6 877.5,6.2 876,5.7 874.5,5.2 873,5.2 871.5,5.2 870,5.2 868.5,5.2 867,5.2 865.5,5.8 864,5.5 862.5,5.7 861,6.2 859.5,5.7 858,5.6 856.5,6 855,5.6 853.5,5.8 852,5.8 850.5,5.6 849,6.1 847.5,6.4 846,6.1 844.5,5.6 843,5.8 841.5,6.3 840,5.8 838.5,5.6 837,5.6 835.5,5.6 834,6 832.5,6.3 831,6 829.5,5.6 828,5.7 826.5,5.7 825,5.7 823.5,6.1 822,6.5 820.5,6.1 819,5.7 817.5,5.6 816,6.1 814.5,5.6 813,5.7 811.5,6.2 810,5.7 808.5,5.9 807,5.9 805.5,5.7 804,6.1 802.5,6.1 801,5.7 799.5,5.5 798,5.8 796.5,6.1 795,5.8 793.5,5.5 792,5.6 790.5,6 789,6.3 787.5,6 786,5.6 784.5,5.4 783,5.8 781.5,6 780,5.8 778.5,5.4 777,5.8 775.5,5.8 774,5.6 772.5,6.1 771,5.6 769.5,5.6 768,6.1 766.5,6.4 765,6.1 763.5,5.6 762,6 760.5,6 759,5.7 757.5,6.1 756,5.7 754.5,5.2 753,5.2 751.5,5.2 750,5.2 748.5,5.2 747,5.2 745.5,5.2 744,5.2 742.5,5.2 741,5.2 739.5,5.2 738,5.4 736.5,6.1 735,5.4 733.5,5.2 732,5.2 730.5,5.2 729,5.2 727.5,5.2 726,5.2 724.5,5.2 723,5.2 721.5,5.2 720,5.2 718.5,5.2 717,5.2 715.5,5.2 714,5.2 712.5,5.2 711,5.2 709.5,5.2 708,5.2 706.5,5.3 705,5.7 703.5,5.7 702,5.3 700.5,5.2 699,5.2 697.5,5.2 696,5.2 694.5,5.2 693,5.2 691.5,5.2 690,5.2 688.5,5.2 687,5.3 685.5,5.6 684,5.6 682.5,5.3 681,5.2 679.5,5.2 678,5.2 676.5,5.2 675,5.2 673.5,5.2 672,5.2 670.5,5.2 669,5.2 667.5,5.2 666,5.2 664.5,5.2 663,5.2 661.5,5.2 660,5.2 658.5,5.2 657,5.2 655.5,5.2 654,5.2 652.5,5.2 651,5.2 649.5,5.2 648,5.2 646.5,5.2 645,5.2 643.5,5.2 642,5.2 640.5,5.2 639,5.2 637.5,5.3 636,5.6 634.5,5.6 633,5.3 631.5,5.2 630,5.2 628.5,5.2 627,5.2 625.5,5.2 624,5.2 622.5,5.2 621,5.2 619.5,5.2 618,5.2 616.5,5.2 615,5.2 613.5,5.2 612,5.2 610.5,5.2 609,5.2 607.5,5.2 606,5.2 604.5,5.2 603,5.2 601.5,5.2 600,5.2 598.5,5.2 597,5.2 595.5,5.4 594,5.4 592.5,5.3 591,5.7 589.5,5.7 588,5.3 586.5,5.2 585,5.2 583.5,5.2 582,5.2 580.5,5.2 579,5.2 577.5,5.2 576,5.2 574.5,5.2 573,5.2 571.5,5.2 570,5.2 568.5,5.2 567,5.2 565.5,5.2 564,5.2 562.5,5.2 561,5.2 559.5,5.3 558,5.5 556.5,5.5 555,5.3 553.5,5.2 552,5.2 550.5,5.2 549,5.2 547.5,5.2 546,5.2 544.5,5.3 543,5.5 541.5,5.9 540,5.5 538.5,5.3 537,7.2 535.5,7.2 534,6.1 532.5,6.9 531,6.9 529.5,6.1 528,5.9 526.5,6.6 525,7.1 523.5,6.6 522,5.9 520.5,6.2 519,7.1 517.5,7.1 516,6.2 514.5,6.5 513,7.6 511.5,7.6 510,6.5 508.5,7 507,7 505.5,6.1 504,6.9 502.5,7.5 501,6.9 499.5,6.1 498,7.1 496.5,7.1 495,5.2 493.5,5.2 492,5.2 490.5,5.2 489,5.2 487.5,5.2 486,5.2 484.5,5.2 483,5.2 481.5,5.2 480,5.2 478.5,9.3 477,9.4 475.5,9.1 474,9.1 472.5,9.1 471,9.2 469.5,9.2 468,9.2 466.5,9 465,5.2 463.5,5.2 462,5.2 460.5,5.2 459,5.2 457.5,5.2 456,5.2 454.5,5.2 453,5.2 451.5,5.2 450,5.2 448.5,6.3 447,5.8 445.5,5.3 444,5.3 442.5,6 441,5.3 439.5,5.2 438,5.2 436.5,5.2 435,5.2 433.5,5.3 432,5.6 430.5,6 429,5.6 427.5,5.3 426,5.2 424.5,5.2 423,5.2 421.5,5.2 420,5.2 418.5,5.2 417,5.2 415.5,5.2 414,5.2 412.5,5.2 411,5.2 409.5,5.2 408,5.2 406.5,5.2 405,5.2 403.5,5.2 402,5.2 400.5,5.2 399,5.2 397.5,9.6 396,8.9 394.5,9.4 393,9.4 391.5,5.2 390,9.2 388.5,10 387,9.2 385.5,8.8 384,9.4 382.5,9.9 381,10 379.5,9.9 378,9.4 376.5,8.8 375,8.2 373.5,8.6 372,9 370.5,9.1 369,9 367.5,8.6 366,8.2 364.5,5.2 363,8.4 361.5,9 360,8.4 358.5,9.2 357,10 355.5,9.2 354,8.9 352.5,9.7 351,9.9 349.5,9.7 348,8.9 346.5,8.4 345,9.1 343.5,9.1 342,8.4 340.5,8.3 339,8.9 337.5,9.3 336,9.3 334.5,8.9 333,8.3 331.5,8.7 330,9.4 328.5,9.8 327,9.8 325.5,9.4 324,8.7 322.5,9 321,9.7 319.5,10 318,9.7 316.5,9 315,5.2 313.5,8.3 312,8.8 310.5,9.2 309,9.3 307.5,9.2 306,8.8 304.5,8.3 303,5.2 301.5,9 300,9.7 298.5,10 297,9.7 295.5,9 294,9 292.5,9.7 291,10 289.5,9.7 288,9 286.5,8.9 285,9.6 283.5,9.9 282,9.9 280.5,9.6 279,8.9 277.5,8.9 276,8.9 274.5,8 273,8.4 271.5,8.8 270,8.9 268.5,8.8 267,8.4 265.5,8 264,9.1 262.5,9.9 261,9.9 259.5,9.1 258,5.2 256.5,8.4 255,9 253.5,8.4 252,5.2 250.5,9 249,9 247.5,9.2 246,10 244.5,9.2 243,9 241.5,9 240,8.4 238.5,8.4 237,5.2 235.5,9.2 234,10 232.5,9.2 231,8.4 229.5,8.4 228,9.1 226.5,9.1 225,8.4 223.5,9 222,9 220.5,8.4 219,9.6 217.5,9.6 216,8.8 214.5,8.8 213,8 211.5,8.4 210,8.8 208.5,8.9 207,8.8 205.5,8.4 204,8 202.5,9.6 201,9.6 199.5,9.6 198,9.6 196.5,9.1 195,9.9 193.5,9.9 192,9.1 190.5,9.1 189,9.9 187.5,9.9 186,9.1 184.5,8.8 183,9.5 181.5,9.9 180,9.9 178.5,9.5 177,8.8 175.5,8.8 174,9.4 172.5,9.9 171,10 169.5,9.9 168,9.4 166.5,8.8 165,8.4 163.5,9 162,9.3 160.5,9 159,8.4 157.5,9.2 156,10 154.5,9.2 153,9.2 151.5,10 150,9.2 148.5,8.9 147,9.6 145.5,9.9 144,9.9 142.5,9.6 141,8.9 139.5,8.4 138,9.1 136.5,9.3 135,9.1 133.5,8.4 132,8.8 130.5,9.4 129,9.9 127.5,10 126,9.9 124.5,9.4 123,8.8 121.5,8.6 120,9.3 118.5,9.6 117,9.6 115.5,9.3 114,8.6 112.5,8.9 111,9.6 109.5,8.9 108,8.8 106.5,9.4 105,9.9 103.5,10 102,9.9 100.5,9.4 99,8.8 97.5,8.1 96,8.7 94.5,9 93,8.7 91.5,8.1 90,9.1 88.5,9.9 87,9.9 85.5,9.1 84,9 82.5,9.7 81,10 79.5,9.7 78,9 76.5,8.6 75,9.2 73.5,9.6 72,9.8 70.5,9.6 69,9.2 67.5,8.6 66,8.6 64.5,9.3 63,9.6 61.5,9.6 60,9.3 58.5,8.6 57,8.7 55.5,8.7 54,9 52.5,9.8 51,9 49.5,8.6 48,9.2 46.5,9.5 45,9.2 43.5,8.6 42,9 40.5,9 39,8.7 37.5,9.4 36,9.6 34.5,9.4 33,8.7 31.5,8.9 30,9.6 28.5,9.9 27,9.9 25.5,9.6 24,8.9 22.5,8.9 21,9.6 19.5,9.9 18,9.6 16.5,8.9 15,9.4 13.5,9.4 12,8.4 10.5,9.1 9,9.1 7.5,8.4 6,9.2 4.5,10 3,9.2 1.5,8.5 0,8.5" stroke="#2a2a2a" stroke-width=".6" vector-effect="non-scaling-stroke"/></symbol><symbol id="wE1" viewBox="0 0 549 10" preserveAspectRatio="none"><polygon points="0,1 1.5,0.3 3,0 4.5,0.3 6,1 7.5,1 9,0.3 10.5,0 12,0.3 13.5,1 15,0.9 16.5,0.2 18,0.9 19.5,1.2 21,0.6 22.5,0.1 24,0 25.5,0.1 27,0.6 28.5,1.2 30,1 31.5,0.3 33,0 34.5,0.3 36,1 37.5,4.8 39,1.2 40.5,0.6 42,0.1 43.5,0 45,0.1 46.5,0.6 48,1.2 49.5,1 51,0.3 52.5,0 54,0.3 55.5,1 57,1.1 58.5,0.4 60,0.1 61.5,0.1 63,0.4 64.5,1.1 66,1.5 67.5,0.9 69,0.5 70.5,0.5 72,0.9 73.5,1.5 75,4.8 76.5,0.8 78,0 79.5,0.8 81,0.9 82.5,0.1 84,0.1 85.5,0.9 87,1.2 88.5,0.5 90,0.1 91.5,0.1 93,0.5 94.5,1.2 96,0.4 97.5,0.4 99,0.9 100.5,0.1 102,0.1 103.5,0.9 105,0.4 106.5,0.4 108,0.8 109.5,0 111,0.8 112.5,4.8 114,1.1 115.5,0.4 117,0.1 118.5,0.1 120,0.4 121.5,1.1 123,0.9 124.5,0.1 126,0.1 127.5,0.9 129,1.6 130.5,1.1 132,0.7 133.5,0.6 135,0.7 136.5,1.1 138,1.6 139.5,0.4 141,0.4 142.5,1 144,0.3 145.5,0 147,0.3 148.5,1 150,0.8 151.5,0 153,0.8 154.5,0.4 156,0.4 157.5,4.8 159,1 160.5,0.3 162,0 163.5,0.3 165,1 166.5,4.8 168,0.8 169.5,0 171,0.8 172.5,4.8 174,1 175.5,0.3 177,0 178.5,0.3 180,1 181.5,1.2 183,0.6 184.5,0.2 186,0.2 187.5,0.6 189,1.2 190.5,1.2 192,0.6 193.5,0.1 195,0 196.5,0.1 198,0.6 199.5,1.2 201,1.3 202.5,0.6 204,0.3 205.5,0.6 207,1.3 208.5,1.3 210,0.6 211.5,1.3 213,1.1 214.5,0.4 216,0.1 217.5,0.1 219,0.4 220.5,1.1 222,0.9 223.5,0.2 225,0.9 226.5,1.1 228,0.4 229.5,0.1 231,0.1 232.5,0.4 234,1.1 235.5,4.8 237,0.8 238.5,0.1 240,0.8 241.5,1.1 243,0.4 244.5,0.1 246,0.1 247.5,0.4 249,1.1 250.5,0.8 252,0.8 253.5,1.2 255,0.6 256.5,0.2 258,0 259.5,0.2 261,0.6 262.5,1.2 264,0.9 265.5,0.1 267,0.1 268.5,0.9 270,1.1 271.5,0.4 273,0.1 274.5,0.1 276,0.4 277.5,1.1 279,1.2 280.5,0.5 282,0.2 283.5,0.5 285,1.2 286.5,0.8 288,0 289.5,0.8 291,1 292.5,0.2 294,1 295.5,1.2 297,0.6 298.5,0.2 300,0.2 301.5,0.6 303,1.2 304.5,1 306,0.3 307.5,0 309,0.3 310.5,1 312,0.8 313.5,0.8 315,1 316.5,0.2 318,0.2 319.5,1 321,0.9 322.5,0.1 324,0.1 325.5,0.9 327,1 328.5,0.3 330,0 331.5,0.3 333,1 334.5,1.2 336,0.6 337.5,0.1 339,0 340.5,0.1 342,0.6 343.5,1.2 345,1 346.5,0.3 348,0 349.5,0.3 351,1 352.5,1.5 354,0.8 355.5,0.5 357,0.5 358.5,0.8 360,1.5 361.5,0.8 363,0 364.5,0.8 366,4.8 367.5,1 369,0.3 370.5,0 372,0.3 373.5,1 375,4.8 376.5,0.8 378,0 379.5,0.8 381,1.1 382.5,0.4 384,1.1 385.5,1 387,0.3 388.5,0 390,0.3 391.5,1 393,1.2 394.5,0.6 396,0.1 397.5,0 399,0.1 400.5,0.6 402,1.2 403.5,1.5 405,0.9 406.5,0.6 408,0.6 409.5,0.9 411,1.5 412.5,4.8 414,0.9 415.5,0.1 417,0.1 418.5,0.9 420,0.4 421.5,0.4 423,4.8 424.5,0.4 426,0.4 427.5,0.8 429,0.8 430.5,1.6 432,1 433.5,0.6 435,0.5 436.5,0.6 438,1 439.5,1.6 441,1.2 442.5,0.6 444,0.1 445.5,0 447,0.1 448.5,0.6 450,1.2 451.5,0.9 453,0.1 454.5,0.1 456,0.9 457.5,0.4 459,0.4 460.5,0.4 462,0.4 463.5,1.1 465,0.4 466.5,0.1 468,0.1 469.5,0.4 471,1.1 472.5,0.4 474,0.4 475.5,4.8 477,1.4 478.5,0.9 480,0.5 481.5,0.3 483,0.5 484.5,0.9 486,1.4 487.5,1 489,0.3 490.5,0 492,0.3 493.5,1 495,1.2 496.5,0.6 498,0.1 499.5,0 501,0.1 502.5,0.6 504,1.2 505.5,1 507,0.3 508.5,0 510,0.3 511.5,1 513,4.8 514.5,1.5 516,0.9 517.5,0.6 519,0.6 520.5,0.9 522,1.5 523.5,1.5 525,0.8 526.5,0.6 528,0.8 529.5,1.5 531,0.4 532.5,0.4 534,1 535.5,0.3 537,0 538.5,0.3 540,1 541.5,4.8 543,1.1 544.5,0.4 546,0.4 547.5,1.1 549,4.8 549,5.2 547.5,8.9 546,9.6 544.5,9.6 543,8.9 541.5,5.2 540,9 538.5,9.7 537,10 535.5,9.7 534,9 532.5,9.6 531,9.6 529.5,8.5 528,9.2 526.5,9.4 525,9.2 523.5,8.5 522,8.5 520.5,9.1 519,9.4 517.5,9.4 516,9.1 514.5,8.5 513,5.2 511.5,9 510,9.7 508.5,10 507,9.7 505.5,9 504,8.8 502.5,9.4 501,9.9 499.5,10 498,9.9 496.5,9.4 495,8.8 493.5,9 492,9.7 490.5,10 489,9.7 487.5,9 486,8.6 484.5,9.1 483,9.5 481.5,9.7 480,9.5 478.5,9.1 477,8.6 475.5,5.2 474,9.6 472.5,9.6 471,8.9 469.5,9.6 468,9.9 466.5,9.9 465,9.6 463.5,8.9 462,9.6 460.5,9.6 459,9.6 457.5,9.6 456,9.1 454.5,9.9 453,9.9 451.5,9.1 450,8.8 448.5,9.4 447,9.9 445.5,10 444,9.9 442.5,9.4 441,8.8 439.5,8.4 438,9 436.5,9.4 435,9.5 433.5,9.4 432,9 430.5,8.4 429,9.2 427.5,9.2 426,9.6 424.5,9.6 423,5.2 421.5,9.6 420,9.6 418.5,9.1 417,9.9 415.5,9.9 414,9.1 412.5,5.2 411,8.5 409.5,9.1 408,9.4 406.5,9.4 405,9.1 403.5,8.5 402,8.8 400.5,9.4 399,9.9 397.5,10 396,9.9 394.5,9.4 393,8.8 391.5,9 390,9.7 388.5,10 387,9.7 385.5,9 384,8.9 382.5,9.6 381,8.9 379.5,9.2 378,10 376.5,9.2 375,5.2 373.5,9 372,9.7 370.5,10 369,9.7 367.5,9 366,5.2 364.5,9.2 363,10 361.5,9.2 360,8.5 358.5,9.2 357,9.5 355.5,9.5 354,9.2 352.5,8.5 351,9 349.5,9.7 348,10 346.5,9.7 345,9 343.5,8.8 342,9.4 340.5,9.9 339,10 337.5,9.9 336,9.4 334.5,8.8 333,9 331.5,9.7 330,10 328.5,9.7 327,9 325.5,9.1 324,9.9 322.5,9.9 321,9.1 319.5,9 318,9.8 316.5,9.8 315,9 313.5,9.2 312,9.2 310.5,9 309,9.7 307.5,10 306,9.7 304.5,9 303,8.8 301.5,9.4 300,9.8 298.5,9.8 297,9.4 295.5,8.8 294,9 292.5,9.8 291,9 289.5,9.2 288,10 286.5,9.2 285,8.8 283.5,9.5 282,9.8 280.5,9.5 279,8.8 277.5,8.9 276,9.6 274.5,9.9 273,9.9 271.5,9.6 270,8.9 268.5,9.1 267,9.9 265.5,9.9 264,9.1 262.5,8.8 261,9.4 259.5,9.8 258,10 256.5,9.8 255,9.4 253.5,8.8 252,9.2 250.5,9.2 249,8.9 247.5,9.6 246,9.9 244.5,9.9 243,9.6 241.5,8.9 240,9.2 238.5,9.9 237,9.2 235.5,5.2 234,8.9 232.5,9.6 231,9.9 229.5,9.9 228,9.6 226.5,8.9 225,9.1 223.5,9.8 222,9.1 220.5,8.9 219,9.6 217.5,9.9 216,9.9 214.5,9.6 213,8.9 211.5,8.7 210,9.4 208.5,8.7 207,8.7 205.5,9.4 204,9.7 202.5,9.4 201,8.7 199.5,8.8 198,9.4 196.5,9.9 195,10 193.5,9.9 192,9.4 190.5,8.8 189,8.8 187.5,9.4 186,9.8 184.5,9.8 183,9.4 181.5,8.8 180,9 178.5,9.7 177,10 175.5,9.7 174,9 172.5,5.2 171,9.2 169.5,10 168,9.2 166.5,5.2 165,9 163.5,9.7 162,10 160.5,9.7 159,9 157.5,5.2 156,9.6 154.5,9.6 153,9.2 151.5,10 150,9.2 148.5,9 147,9.7 145.5,10 144,9.7 142.5,9 141,9.6 139.5,9.6 138,8.4 136.5,8.9 135,9.3 133.5,9.4 132,9.3 130.5,8.9 129,8.4 127.5,9.1 126,9.9 124.5,9.9 123,9.1 121.5,8.9 120,9.6 118.5,9.9 117,9.9 115.5,9.6 114,8.9 112.5,5.2 111,9.2 109.5,10 108,9.2 106.5,9.6 105,9.6 103.5,9.1 102,9.9 100.5,9.9 99,9.1 97.5,9.6 96,9.6 94.5,8.8 93,9.5 91.5,9.9 90,9.9 88.5,9.5 87,8.8 85.5,9.1 84,9.9 82.5,9.9 81,9.1 79.5,9.2 78,10 76.5,9.2 75,5.2 73.5,8.5 72,9.1 70.5,9.5 69,9.5 67.5,9.1 66,8.5 64.5,8.9 63,9.6 61.5,9.9 60,9.9 58.5,9.6 57,8.9 55.5,9 54,9.7 52.5,10 51,9.7 49.5,9 48,8.8 46.5,9.4 45,9.9 43.5,10 42,9.9 40.5,9.4 39,8.8 37.5,5.2 36,9 34.5,9.7 33,10 31.5,9.7 30,9 28.5,8.8 27,9.4 25.5,9.9 24,10 22.5,9.9 21,9.4 19.5,8.8 18,9.1 16.5,9.8 15,9.1 13.5,9 12,9.7 10.5,10 9,9.7 7.5,9 6,9 4.5,9.7 3,10 1.5,9.7 0,9" stroke="#2a2a2a" stroke-width=".6" vector-effect="non-scaling-stroke"/></symbol><symbol id="wE2" viewBox="0 0 549 10" preserveAspectRatio="none"><polygon points="0,1 1.5,0.3 3,0 4.5,0.3 6,1 7.5,1.2 9,0.4 10.5,0.4 12,1.2 13.5,4.8 15,0.9 16.5,0.1 18,0.1 19.5,0.9 21,1 22.5,0.3 24,0 25.5,0.3 27,1 28.5,1.6 30,1 31.5,0.7 33,0.7 34.5,1 36,1.6 37.5,1 39,0.3 40.5,0 42,0.3 43.5,1 45,1.2 46.5,0.5 48,1.2 49.5,0.4 51,0.4 52.5,1.2 54,0.6 55.5,0.1 57,0 58.5,0.1 60,0.6 61.5,1.2 63,0.4 64.5,0.4 66,1.2 67.5,0.6 69,0.1 70.5,0 72,0.1 73.5,0.6 75,1.2 76.5,4.8 78,1 79.5,0.3 81,0 82.5,0.3 84,1 85.5,4.8 87,1 88.5,0.3 90,0 91.5,0.3 93,1 94.5,1.1 96,0.4 97.5,0.1 99,0.1 100.5,0.4 102,1.1 103.5,0.4 105,0.4 106.5,0.4 108,0.4 109.5,1.1 111,0.4 112.5,0.1 114,0.1 115.5,0.4 117,1.1 118.5,1.5 120,0.9 121.5,0.6 123,0.6 124.5,0.9 126,1.5 127.5,0.8 129,0 130.5,0.8 132,0.9 133.5,0.1 135,0.1 136.5,0.9 138,1 139.5,0.3 141,0 142.5,0.3 144,1 145.5,4.8 147,0.8 148.5,0 150,0.8 151.5,1.1 153,0.4 154.5,0.1 156,0.1 157.5,0.4 159,1.1 160.5,0.4 162,0.4 163.5,0.4 165,0.4 166.5,1.4 168,0.8 169.5,0.5 171,0.8 172.5,1.4 174,1.4 175.5,0.8 177,0.4 178.5,0.4 180,0.8 181.5,1.4 183,1.1 184.5,0.4 186,1.1 187.5,1 189,0.3 190.5,0 192,0.3 193.5,1 195,1.2 196.5,0.6 198,0.1 199.5,0 201,0.1 202.5,0.6 204,1.2 205.5,1 207,0.2 208.5,0.2 210,1 211.5,1 213,0.3 214.5,0 216,0.3 217.5,1 219,0.8 220.5,0 222,0.8 223.5,1.1 225,0.4 226.5,0.1 228,0.1 229.5,0.4 231,1.1 232.5,1.2 234,0.6 235.5,0.2 237,0.1 238.5,0.2 240,0.6 241.5,1.2 243,0.9 244.5,0.1 246,0.1 247.5,0.9 249,0.8 250.5,0 252,0.8 253.5,4.8 255,0.5 256.5,0.5 258,4.8 259.5,0.9 261,0.1 262.5,0.1 264,0.9 265.5,0.4 267,0.4 268.5,1.2 270,0.6 271.5,0.1 273,0 274.5,0.1 276,0.6 277.5,1.2 279,0.8 280.5,0 282,0.8 283.5,1 285,0.3 286.5,0 288,0.3 289.5,1 291,1 292.5,0.3 294,0 295.5,0.3 297,1 298.5,0.9 300,0.1 301.5,0.1 303,0.9 304.5,4.8 306,0.9 307.5,0.1 309,0.1 310.5,0.9 312,1.2 313.5,0.6 315,0.1 316.5,0 318,0.1 319.5,0.6 321,1.2 322.5,1.2 324,0.6 325.5,0.1 327,0 328.5,0.1 330,0.6 331.5,1.2 333,1.6 334.5,1.1 336,0.7 337.5,0.6 339,0.7 340.5,1.1 342,1.6 343.5,4.8 345,1.1 346.5,0.4 348,0.1 349.5,0.1 351,0.4 352.5,1.1 354,0.9 355.5,0.1 357,0.9 358.5,0.4 360,0.4 361.5,0.9 363,0.1 364.5,0.1 366,0.9 367.5,1.4 369,0.8 370.5,0.4 372,0.4 373.5,0.8 375,1.4 376.5,0.8 378,0 379.5,0.8 381,0.9 382.5,0.1 384,0.1 385.5,0.9 387,1.2 388.5,0.6 390,1.2 391.5,0.4 393,0.4 394.5,1 396,0.3 397.5,0 399,0.3 400.5,1 402,1 403.5,0.3 405,0 406.5,0.3 408,1 409.5,0.8 411,0 412.5,0.8 414,1.2 415.5,0.6 417,0.1 418.5,0 420,0.1 421.5,0.6 423,1.2 424.5,1.4 426,0.7 427.5,0.4 429,0.4 430.5,0.7 432,1.4 433.5,1.2 435,0.6 436.5,0.1 438,0 439.5,0.1 441,0.6 442.5,1.2 444,0.4 445.5,0.4 447,1.2 448.5,0.6 450,0.1 451.5,0 453,0.1 454.5,0.6 456,1.2 457.5,1.2 459,0.6 460.5,0.1 462,0 463.5,0.1 465,0.6 466.5,1.2 468,1.2 469.5,0.6 471,0.1 472.5,0 474,0.1 475.5,0.6 477,1.2 478.5,1.1 480,0.3 481.5,0.3 483,1.1 484.5,1.1 486,0.4 487.5,0.1 489,0.1 490.5,0.4 492,1.1 493.5,1.2 495,0.6 496.5,0.1 498,0 499.5,0.1 501,0.6 502.5,1.2 504,1.2 505.5,0.5 507,0.5 508.5,1.2 510,0.9 511.5,0.1 513,0.1 514.5,0.9 516,1.2 517.5,0.6 519,0.1 520.5,0 522,0.1 523.5,0.6 525,1.2 526.5,0.8 528,0 529.5,0.8 531,0.8 532.5,0 534,0.8 535.5,1.1 537,0.4 538.5,0.1 540,0.1 541.5,0.4 543,1.1 544.5,1 546,0.3 547.5,0 549,4.8 549,5.2 547.5,10 546,9.7 544.5,9 543,8.9 541.5,9.6 540,9.9 538.5,9.9 537,9.6 535.5,8.9 534,9.2 532.5,10 531,9.2 529.5,9.2 528,10 526.5,9.2 525,8.8 523.5,9.4 522,9.9 520.5,10 519,9.9 517.5,9.4 516,8.8 514.5,9.1 513,9.9 511.5,9.9 510,9.1 508.5,8.8 507,9.5 505.5,9.5 504,8.8 502.5,8.8 501,9.4 499.5,9.9 498,10 496.5,9.9 495,9.4 493.5,8.8 492,8.9 490.5,9.6 489,9.9 487.5,9.9 486,9.6 484.5,8.9 483,8.9 481.5,9.7 480,9.7 478.5,8.9 477,8.8 475.5,9.4 474,9.9 472.5,10 471,9.9 469.5,9.4 468,8.8 466.5,8.8 465,9.4 463.5,9.9 462,10 460.5,9.9 459,9.4 457.5,8.8 456,8.8 454.5,9.4 453,9.9 451.5,10 450,9.9 448.5,9.4 447,8.8 445.5,9.6 444,9.6 442.5,8.8 441,9.4 439.5,9.9 438,10 436.5,9.9 435,9.4 433.5,8.8 432,8.6 430.5,9.3 429,9.6 427.5,9.6 426,9.3 424.5,8.6 423,8.8 421.5,9.4 420,9.9 418.5,10 417,9.9 415.5,9.4 414,8.8 412.5,9.2 411,10 409.5,9.2 408,9 406.5,9.7 405,10 403.5,9.7 402,9 400.5,9 399,9.7 397.5,10 396,9.7 394.5,9 393,9.6 391.5,9.6 390,8.8 388.5,9.4 387,8.8 385.5,9.1 384,9.9 382.5,9.9 381,9.1 379.5,9.2 378,10 376.5,9.2 375,8.6 373.5,9.2 372,9.6 370.5,9.6 369,9.2 367.5,8.6 366,9.1 364.5,9.9 363,9.9 361.5,9.1 360,9.6 358.5,9.6 357,9.1 355.5,9.9 354,9.1 352.5,8.9 351,9.6 349.5,9.9 348,9.9 346.5,9.6 345,8.9 343.5,5.2 342,8.4 340.5,8.9 339,9.3 337.5,9.4 336,9.3 334.5,8.9 333,8.4 331.5,8.8 330,9.4 328.5,9.9 327,10 325.5,9.9 324,9.4 322.5,8.8 321,8.8 319.5,9.4 318,9.9 316.5,10 315,9.9 313.5,9.4 312,8.8 310.5,9.1 309,9.9 307.5,9.9 306,9.1 304.5,5.2 303,9.1 301.5,9.9 300,9.9 298.5,9.1 297,9 295.5,9.7 294,10 292.5,9.7 291,9 289.5,9 288,9.7 286.5,10 285,9.7 283.5,9 282,9.2 280.5,10 279,9.2 277.5,8.8 276,9.4 274.5,9.9 273,10 271.5,9.9 270,9.4 268.5,8.8 267,9.6 265.5,9.6 264,9.1 262.5,9.9 261,9.9 259.5,9.1 258,5.2 256.5,9.5 255,9.5 253.5,5.2 252,9.2 250.5,10 249,9.2 247.5,9.1 246,9.9 244.5,9.9 243,9.1 241.5,8.8 240,9.4 238.5,9.8 237,9.9 235.5,9.8 234,9.4 232.5,8.8 231,8.9 229.5,9.6 228,9.9 226.5,9.9 225,9.6 223.5,8.9 222,9.2 220.5,10 219,9.2 217.5,9 216,9.7 214.5,10 213,9.7 211.5,9 210,9 208.5,9.8 207,9.8 205.5,9 204,8.8 202.5,9.4 201,9.9 199.5,10 198,9.9 196.5,9.4 195,8.8 193.5,9 192,9.7 190.5,10 189,9.7 187.5,9 186,8.9 184.5,9.6 183,8.9 181.5,8.6 180,9.2 178.5,9.6 177,9.6 175.5,9.2 174,8.6 172.5,8.6 171,9.2 169.5,9.5 168,9.2 166.5,8.6 165,9.6 163.5,9.6 162,9.6 160.5,9.6 159,8.9 157.5,9.6 156,9.9 154.5,9.9 153,9.6 151.5,8.9 150,9.2 148.5,10 147,9.2 145.5,5.2 144,9 142.5,9.7 141,10 139.5,9.7 138,9 136.5,9.1 135,9.9 133.5,9.9 132,9.1 130.5,9.2 129,10 127.5,9.2 126,8.5 124.5,9.1 123,9.4 121.5,9.4 120,9.1 118.5,8.5 117,8.9 115.5,9.6 114,9.9 112.5,9.9 111,9.6 109.5,8.9 108,9.6 106.5,9.6 105,9.6 103.5,9.6 102,8.9 100.5,9.6 99,9.9 97.5,9.9 96,9.6 94.5,8.9 93,9 91.5,9.7 90,10 88.5,9.7 87,9 85.5,5.2 84,9 82.5,9.7 81,10 79.5,9.7 78,9 76.5,5.2 75,8.8 73.5,9.4 72,9.9 70.5,10 69,9.9 67.5,9.4 66,8.8 64.5,9.6 63,9.6 61.5,8.8 60,9.4 58.5,9.9 57,10 55.5,9.9 54,9.4 52.5,8.8 51,9.6 49.5,9.6 48,8.8 46.5,9.5 45,8.8 43.5,9 42,9.7 40.5,10 39,9.7 37.5,9 36,8.4 34.5,9 33,9.3 31.5,9.3 30,9 28.5,8.4 27,9 25.5,9.7 24,10 22.5,9.7 21,9 19.5,9.1 18,9.9 16.5,9.9 15,9.1 13.5,5.2 12,8.8 10.5,9.6 9,9.6 7.5,8.8 6,9 4.5,9.7 3,10 1.5,9.7 0,9" stroke="#2a2a2a" stroke-width=".6" vector-effect="non-scaling-stroke"/></symbol><symbol id="wE3" viewBox="0 0 549 10" preserveAspectRatio="none"><polygon points="0,0.8 1.5,0.8 3,0.8 4.5,0.9 6,0.9 7.5,0.8 9,0.8 10.5,0.6 12,0.6 13.5,0.7 15,0.8 16.5,1 18,0.7 19.5,0.4 21,0.4 22.5,0.6 24,0.6 25.5,0.4 27,0.6 28.5,0.3 30,0.5 31.5,0.4 33,0.5 34.5,0.5 36,0.6 37.5,0.6 39,0.7 40.5,0.6 42,0.6 43.5,0.6 45,0.6 46.5,0.8 48,0.6 49.5,0.7 51,1 52.5,1 54,1 55.5,1 57,1 58.5,0.9 60,0.9 61.5,0.9 63,1 64.5,1.1 66,1 67.5,1 69,1.2 70.5,1.1 72,1 73.5,0.9 75,1 76.5,1 78,0.9 79.5,0.9 81,0.9 82.5,1.1 84,0.8 85.5,1 87,0.7 88.5,0.8 90,0.8 91.5,1 93,0.8 94.5,0.8 96,1.1 97.5,1.1 99,1.2 100.5,1.2 102,1 103.5,1.1 105,1 106.5,1 108,1.1 109.5,1.1 111,1.2 112.5,0.5 114,0.5 115.5,0.7 117,0.6 118.5,0.6 120,0.4 121.5,0.9 123,0.7 124.5,0.8 126,0.6 127.5,0.9 129,0.8 130.5,0.7 132,0.8 133.5,0.7 135,0.8 136.5,0.9 138,0.8 139.5,0.6 141,0.7 142.5,0.7 144,0.9 145.5,0.9 147,0.9 148.5,0.7 150,1 151.5,1 153,1.1 154.5,1 156,1.1 157.5,0.8 159,0.9 160.5,0.7 162,0.7 163.5,0.5 165,1 166.5,0.9 168,1 169.5,0.8 171,1 172.5,0.8 174,0.9 175.5,1 177,1 178.5,1 180,0.7 181.5,0.7 183,1 184.5,0.8 186,1 187.5,0.7 189,0.9 190.5,0.9 192,0.9 193.5,0.9 195,0.9 196.5,1 198,1.1 199.5,1.1 201,0.9 202.5,1.1 204,0.9 205.5,1 207,0.9 208.5,0.5 210,0.7 211.5,0.6 213,0.8 214.5,0.6 216,0.8 217.5,0.5 219,0.7 220.5,0.6 222,0.7 223.5,0.6 225,0.7 226.5,0.7 228,0.4 229.5,0.8 231,0.5 232.5,0.5 234,0.4 235.5,0.8 237,0.7 238.5,0.8 240,0.9 241.5,0.7 243,2.1 244.5,2.1 246,2.8 247.5,1.1 249,0 250.5,1.1 252,2.8 253.5,2.8 255,1.1 256.5,0 258,1.1 259.5,2.8 261,2.1 262.5,0 264,2.1 265.5,2.9 267,1.3 268.5,0.3 270,1.3 271.5,2.9 273,1.2 274.5,1.2 276,1 277.5,1.2 279,1 280.5,1 282,1.1 283.5,1 285,0.8 286.5,0.7 288,0.9 289.5,0.8 291,0.8 292.5,1 294,1.1 295.5,1.1 297,1.2 298.5,0.8 300,0.6 301.5,0.7 303,0.8 304.5,0.6 306,0.5 307.5,0.6 309,0.8 310.5,0.6 312,0.5 313.5,0.9 315,1.1 316.5,1.2 318,1 319.5,0.9 321,1.1 322.5,1 324,1 325.5,0.9 327,0.9 328.5,0.8 330,0.8 331.5,1.1 333,0.9 334.5,1 336,0.8 337.5,0.9 339,1.1 340.5,0.8 342,0.8 343.5,0.5 345,0.5 346.5,0.5 348,0.5 349.5,0.6 351,1.1 352.5,1.2 354,1 355.5,1.2 357,0.7 358.5,0.6 360,0.8 361.5,0.7 363,0.8 364.5,0.7 366,0.8 367.5,0.6 369,0.8 370.5,0.8 372,0.9 373.5,0.9 375,0.8 376.5,0.7 378,0.6 379.5,0.3 381,0.7 382.5,0.4 384,0.5 385.5,0.5 387,1.2 388.5,1.2 390,1.1 391.5,0.9 393,1 394.5,1.1 396,1.1 397.5,1.1 399,0.8 400.5,1.1 402,1.1 403.5,0.4 405,0.4 406.5,0.5 408,0.3 409.5,0.8 411,0.7 412.5,0.6 414,0.5 415.5,0.6 417,0.8 418.5,0.6 420,4.8 421.5,4.8 423,4.8 424.5,4.8 426,4.8 427.5,1 429,0.9 430.5,1.1 432,0.9 433.5,0.9 435,0.9 436.5,0.7 438,3.5 439.5,2.4 441,1.7 442.5,2.4 444,3.5 445.5,3.5 447,2.4 448.5,2.4 450,3.5 451.5,3.8 453,3 454.5,3.8 456,3.5 457.5,3.5 459,2.6 460.5,2.6 462,3.9 463.5,3.2 465,3.2 466.5,3.9 468,3.3 469.5,2.1 471,3.3 472.5,3.5 474,3.5 475.5,3.7 477,2.8 478.5,2.2 480,2.8 481.5,3.7 483,2.9 484.5,2.9 486,4.1 487.5,3.4 489,2.9 490.5,3.4 492,4.1 493.5,4 495,3.2 496.5,2.7 498,3.2 499.5,4 501,3.4 502.5,2.2 504,2.2 505.5,3.4 507,3.7 508.5,3.7 510,4.1 511.5,3.4 513,3 514.5,3.4 516,4.1 517.5,2.8 519,2.8 520.5,3.7 522,2.8 523.5,2.8 525,3.7 526.5,3.5 528,2.4 529.5,1.7 531,2.4 532.5,3.5 534,3 535.5,3 537,3.7 538.5,2.7 540,3.7 541.5,3.5 543,2.4 544.5,3.5 546,4.1 547.5,3.5 549,4.8 549,5.2 547.5,6.5 546,5.9 544.5,6.5 543,7.6 541.5,6.5 540,6.3 538.5,7.3 537,6.3 535.5,7 534,7 532.5,6.5 531,7.6 529.5,8.3 528,7.6 526.5,6.5 525,6.3 523.5,7.2 522,7.2 520.5,6.3 519,7.2 517.5,7.2 516,5.9 514.5,6.6 513,7 511.5,6.6 510,5.9 508.5,6.3 507,6.3 505.5,6.6 504,7.8 502.5,7.8 501,6.6 499.5,6 498,6.8 496.5,7.3 495,6.8 493.5,6 492,5.9 490.5,6.6 489,7.1 487.5,6.6 486,5.9 484.5,7.1 483,7.1 481.5,6.3 480,7.2 478.5,7.8 477,7.2 475.5,6.3 474,6.5 472.5,6.5 471,6.7 469.5,7.9 468,6.7 466.5,6.1 465,6.8 463.5,6.8 462,6.1 460.5,7.4 459,7.4 457.5,6.5 456,6.5 454.5,6.2 453,7 451.5,6.2 450,6.5 448.5,7.6 447,7.6 445.5,6.5 444,6.5 442.5,7.6 441,8.3 439.5,7.6 438,6.5 436.5,9.3 435,9.1 433.5,9.1 432,9.1 430.5,8.9 429,9.1 427.5,9 426,5.2 424.5,5.2 423,5.2 421.5,5.2 420,5.2 418.5,9.4 417,9.2 415.5,9.4 414,9.5 412.5,9.4 411,9.3 409.5,9.2 408,9.7 406.5,9.5 405,9.6 403.5,9.6 402,8.9 400.5,8.9 399,9.2 397.5,8.9 396,8.9 394.5,8.9 393,9 391.5,9.1 390,8.9 388.5,8.8 387,8.8 385.5,9.5 384,9.5 382.5,9.6 381,9.3 379.5,9.7 378,9.4 376.5,9.3 375,9.2 373.5,9.1 372,9.1 370.5,9.2 369,9.2 367.5,9.4 366,9.2 364.5,9.3 363,9.2 361.5,9.3 360,9.2 358.5,9.4 357,9.3 355.5,8.8 354,9 352.5,8.8 351,8.9 349.5,9.4 348,9.5 346.5,9.5 345,9.5 343.5,9.5 342,9.2 340.5,9.2 339,8.9 337.5,9.1 336,9.2 334.5,9 333,9.1 331.5,8.9 330,9.2 328.5,9.2 327,9.1 325.5,9.1 324,9 322.5,9 321,8.9 319.5,9.1 318,9 316.5,8.8 315,8.9 313.5,9.1 312,9.5 310.5,9.4 309,9.2 307.5,9.4 306,9.5 304.5,9.4 303,9.2 301.5,9.3 300,9.4 298.5,9.2 297,8.8 295.5,8.9 294,8.9 292.5,9 291,9.2 289.5,9.2 288,9.1 286.5,9.3 285,9.2 283.5,9 282,8.9 280.5,9 279,9 277.5,8.8 276,9 274.5,8.8 273,8.8 271.5,7.1 270,8.7 268.5,9.7 267,8.7 265.5,7.1 264,7.9 262.5,10 261,7.9 259.5,7.2 258,8.9 256.5,10 255,8.9 253.5,7.2 252,7.2 250.5,8.9 249,10 247.5,8.9 246,7.2 244.5,7.9 243,7.9 241.5,9.3 240,9.1 238.5,9.2 237,9.3 235.5,9.2 234,9.6 232.5,9.5 231,9.5 229.5,9.2 228,9.6 226.5,9.3 225,9.3 223.5,9.4 222,9.3 220.5,9.4 219,9.3 217.5,9.5 216,9.2 214.5,9.4 213,9.2 211.5,9.4 210,9.3 208.5,9.5 207,9.1 205.5,9 204,9.1 202.5,8.9 201,9.1 199.5,8.9 198,8.9 196.5,9 195,9.1 193.5,9.1 192,9.1 190.5,9.1 189,9.1 187.5,9.3 186,9 184.5,9.2 183,9 181.5,9.3 180,9.3 178.5,9 177,9 175.5,9 174,9.1 172.5,9.2 171,9 169.5,9.2 168,9 166.5,9.1 165,9 163.5,9.5 162,9.3 160.5,9.3 159,9.1 157.5,9.2 156,8.9 154.5,9 153,8.9 151.5,9 150,9 148.5,9.3 147,9.1 145.5,9.1 144,9.1 142.5,9.3 141,9.3 139.5,9.4 138,9.2 136.5,9.1 135,9.2 133.5,9.3 132,9.2 130.5,9.3 129,9.2 127.5,9.1 126,9.4 124.5,9.2 123,9.3 121.5,9.1 120,9.6 118.5,9.4 117,9.4 115.5,9.3 114,9.5 112.5,9.5 111,8.8 109.5,8.9 108,8.9 106.5,9 105,9 103.5,8.9 102,9 100.5,8.8 99,8.8 97.5,8.9 96,8.9 94.5,9.2 93,9.2 91.5,9 90,9.2 88.5,9.2 87,9.3 85.5,9 84,9.2 82.5,8.9 81,9.1 79.5,9.1 78,9.1 76.5,9 75,9 73.5,9.1 72,9 70.5,8.9 69,8.8 67.5,9 66,9 64.5,8.9 63,9 61.5,9.1 60,9.1 58.5,9.1 57,9 55.5,9 54,9 52.5,9 51,9 49.5,9.3 48,9.4 46.5,9.2 45,9.4 43.5,9.4 42,9.4 40.5,9.4 39,9.3 37.5,9.4 36,9.4 34.5,9.5 33,9.5 31.5,9.6 30,9.5 28.5,9.7 27,9.4 25.5,9.6 24,9.4 22.5,9.4 21,9.6 19.5,9.6 18,9.3 16.5,9 15,9.2 13.5,9.3 12,9.4 10.5,9.4 9,9.2 7.5,9.2 6,9.1 4.5,9.1 3,9.2 1.5,9.2 0,9.2" stroke="#2a2a2a" stroke-width=".6" vector-effect="non-scaling-stroke"/></symbol><symbol id="wE4" viewBox="0 0 549 10" preserveAspectRatio="none"><polygon points="0,4.7 1.5,4.7 3,4.7 4.5,4.8 6,4.8 7.5,4.8 9,4.8 10.5,4.8 12,4.8 13.5,4.8 15,4.8 16.5,4.8 18,4.8 19.5,4.8 21,4.8 22.5,4.8 24,4.8 25.5,4.8 27,4.8 28.5,4.8 30,4.8 31.5,4.8 33,4.8 34.5,4.8 36,4.8 37.5,4.8 39,4.8 40.5,4.8 42,4.8 43.5,4.8 45,4.7 46.5,4.7 48,4.7 49.5,4.7 51,4.8 52.5,4.8 54,4.8 55.5,4.8 57,4.7 58.5,4.5 60,4.7 61.5,4.8 63,4.8 64.5,4.8 66,3.5 67.5,2.5 69,1.7 70.5,2.5 72,0.7 73.5,0.9 75,4.8 76.5,4.8 78,4.8 79.5,4.8 81,4.8 82.5,4.8 84,4.8 85.5,4.8 87,4.8 88.5,4.8 90,4.8 91.5,4.8 93,4.8 94.5,4.8 96,4.8 97.5,4.8 99,4.8 100.5,4.8 102,4.8 103.5,4.8 105,4.8 106.5,4.8 108,4.8 109.5,4.8 111,4.8 112.5,4.8 114,4.7 115.5,4.7 117,4.7 118.5,4.5 120,4.7 121.5,4.7 123,4.7 124.5,4.8 126,4.8 127.5,4.8 129,4.8 130.5,4.8 132,4.8 133.5,4.8 135,4.8 136.5,4.8 138,4.8 139.5,4.8 141,4.8 142.5,4.8 144,4.8 145.5,4.8 147,4.8 148.5,4.8 150,4.8 151.5,4.8 153,4.8 154.5,4.8 156,4.8 157.5,4.8 159,4.8 160.5,4.8 162,4.8 163.5,4.8 165,4.8 166.5,4.8 168,4.8 169.5,4.8 171,4.8 172.5,4.8 174,4.8 175.5,4.8 177,4.8 178.5,4.8 180,4.8 181.5,4.7 183,4 184.5,3.3 186,3.3 187.5,4 189,4.7 190.5,4.8 192,4.8 193.5,4.8 195,4.8 196.5,4.5 198,3.6 199.5,2.8 201,3.6 202.5,4.5 204,4.8 205.5,1.2 207,3 208.5,1.5 210,0.5 211.5,4.8 213,4.8 214.5,4.8 216,4.8 217.5,4.8 219,4.8 220.5,4.8 222,4.8 223.5,4.8 225,4.8 226.5,4.8 228,4.8 229.5,4.8 231,4.8 232.5,4.8 234,4.8 235.5,4.8 237,4.8 238.5,4.8 240,4.8 241.5,4.8 243,4.8 244.5,4.8 246,4.8 247.5,4.8 249,4.8 250.5,4.8 252,4.8 253.5,4.8 255,4.8 256.5,4.8 258,4.8 259.5,4.8 261,4.8 262.5,4.8 264,4.8 265.5,4.8 267,0.8 268.5,4.8 270,4.8 271.5,1.1 273,4.8 274.5,4.8 276,4.8 277.5,4.8 279,4.8 280.5,4.8 282,4.8 283.5,4.8 285,4.8 286.5,4.8 288,4.8 289.5,4.8 291,4.8 292.5,4.8 294,4.8 295.5,4.8 297,4.8 298.5,4.8 300,4.8 301.5,4.8 303,4.8 304.5,4.8 306,4.8 307.5,4.8 309,4.8 310.5,4.8 312,4.5 313.5,3.5 315,4.5 316.5,4.8 318,4.8 319.5,4.8 321,4.2 322.5,2.8 324,1.2 325.5,2.7 327,4.2 328.5,4.8 330,4.8 331.5,4.8 333,4.8 334.5,4.8 336,4.8 337.5,4.8 339,4.8 340.5,4.8 342,4.8 343.5,4.8 345,4.4 346.5,3.1 348,3.1 349.5,4.4 351,4.8 352.5,4.8 354,4.8 355.5,4.8 357,4.8 358.5,4.8 360,4.8 361.5,4.8 363,4.8 364.5,4.8 366,4.8 367.5,4.8 369,4.8 370.5,4.8 372,4.8 373.5,4.8 375,4.8 376.5,4.8 378,4.8 379.5,4.8 381,4.8 382.5,4.8 384,4.8 385.5,4.8 387,4.8 388.5,4.8 390,4.8 391.5,4.8 393,4.8 394.5,4.8 396,4.8 397.5,4.8 399,4.8 400.5,4.8 402,4.8 403.5,3.7 405,2.8 406.5,3.7 408,3.8 409.5,3 411,2.4 412.5,3 414,3.8 415.5,4.1 417,3.5 418.5,3 420,3.5 421.5,4.1 423,3.4 424.5,4.8 426,4.8 427.5,4.8 429,4.8 430.5,4.8 432,4.8 433.5,4.8 435,4.8 436.5,4.8 438,4.8 439.5,4.8 441,4.8 442.5,4.8 444,4.8 445.5,4.8 447,4.8 448.5,4.7 450,4.3 451.5,4.7 453,4.8 454.5,4.8 456,4.8 457.5,4.8 459,4.8 460.5,4.8 462,4.8 463.5,4.8 465,4.8 466.5,4.8 468,4.8 469.5,4.8 471,4.8 472.5,4.8 474,4.8 475.5,4.8 477,4.8 478.5,4.8 480,4.8 481.5,4.8 483,4.8 484.5,4.8 486,4.8 487.5,4.8 489,4.8 490.5,4.8 492,4.8 493.5,4.8 495,4.8 496.5,4.8 498,4.8 499.5,4.8 501,4.8 502.5,4.8 504,4.6 505.5,4.6 507,4.6 508.5,4.6 510,4.8 511.5,4.8 513,4.8 514.5,4.7 516,4.7 517.5,4.7 519,4.7 520.5,4.8 522,4.8 523.5,4.8 525,4.8 526.5,4.8 528,4.8 529.5,4.7 531,4.7 532.5,4.4 534,4.7 535.5,4.7 537,4.8 538.5,4.8 540,4.8 541.5,4.8 543,4.8 544.5,4.8 546,4.6 547.5,4.6 549,4.8 549,5.2 547.5,5.4 546,5.4 544.5,5.2 543,5.2 541.5,5.2 540,5.2 538.5,5.2 537,5.2 535.5,5.3 534,5.3 532.5,5.6 531,5.3 529.5,5.3 528,5.2 526.5,5.2 525,5.2 523.5,5.2 522,5.2 520.5,5.2 519,5.3 517.5,5.3 516,5.3 514.5,5.3 513,5.2 511.5,5.2 510,5.2 508.5,5.4 507,5.4 505.5,5.4 504,5.4 502.5,5.2 501,5.2 499.5,5.2 498,5.2 496.5,5.2 495,5.2 493.5,5.2 492,5.2 490.5,5.2 489,5.2 487.5,5.2 486,5.2 484.5,5.2 483,5.2 481.5,5.2 480,5.2 478.5,5.2 477,5.2 475.5,5.2 474,5.2 472.5,5.2 471,5.2 469.5,5.2 468,5.2 466.5,5.2 465,5.2 463.5,5.2 462,5.2 460.5,5.2 459,5.2 457.5,5.2 456,5.2 454.5,5.2 453,5.2 451.5,5.3 450,5.7 448.5,5.3 447,5.2 445.5,5.2 444,5.2 442.5,5.2 441,5.2 439.5,5.2 438,5.2 436.5,5.2 435,5.2 433.5,5.2 432,5.2 430.5,5.2 429,5.2 427.5,5.2 426,5.2 424.5,5.2 423,6.6 421.5,5.9 420,6.5 418.5,7 417,6.5 415.5,5.9 414,6.2 412.5,7 411,7.6 409.5,7 408,6.2 406.5,6.3 405,7.2 403.5,6.3 402,5.2 400.5,5.2 399,5.2 397.5,5.2 396,5.2 394.5,5.2 393,5.2 391.5,5.2 390,5.2 388.5,5.2 387,5.2 385.5,5.2 384,5.2 382.5,5.2 381,5.2 379.5,5.2 378,5.2 376.5,5.2 375,5.2 373.5,5.2 372,5.2 370.5,5.2 369,5.2 367.5,5.2 366,5.2 364.5,5.2 363,5.2 361.5,5.2 360,5.2 358.5,5.2 357,5.2 355.5,5.2 354,5.2 352.5,5.2 351,5.2 349.5,5.6 348,6.9 346.5,6.9 345,5.6 343.5,5.2 342,5.2 340.5,5.2 339,5.2 337.5,5.2 336,5.2 334.5,5.2 333,5.2 331.5,5.2 330,5.2 328.5,5.2 327,5.8 325.5,7.2 324,8.8 322.5,7.2 321,5.8 319.5,5.2 318,5.2 316.5,5.2 315,5.5 313.5,6.5 312,5.5 310.5,5.2 309,5.2 307.5,5.2 306,5.2 304.5,5.2 303,5.2 301.5,5.2 300,5.2 298.5,5.2 297,5.2 295.5,5.2 294,5.2 292.5,5.2 291,5.2 289.5,5.2 288,5.2 286.5,5.2 285,5.2 283.5,5.2 282,5.2 280.5,5.2 279,5.2 277.5,5.2 276,5.2 274.5,5.2 273,5.2 271.5,8.9 270,5.2 268.5,5.2 267,9.2 265.5,5.2 264,5.2 262.5,5.2 261,5.2 259.5,5.2 258,5.2 256.5,5.2 255,5.2 253.5,5.2 252,5.2 250.5,5.2 249,5.2 247.5,5.2 246,5.2 244.5,5.2 243,5.2 241.5,5.2 240,5.2 238.5,5.2 237,5.2 235.5,5.2 234,5.2 232.5,5.2 231,5.2 229.5,5.2 228,5.2 226.5,5.2 225,5.2 223.5,5.2 222,5.2 220.5,5.2 219,5.2 217.5,5.2 216,5.2 214.5,5.2 213,5.2 211.5,5.2 210,9.5 208.5,8.5 207,7 205.5,8.8 204,5.2 202.5,5.5 201,6.4 199.5,7.2 198,6.3 196.5,5.5 195,5.2 193.5,5.2 192,5.2 190.5,5.2 189,5.3 187.5,6 186,6.7 184.5,6.7 183,6 181.5,5.3 180,5.2 178.5,5.2 177,5.2 175.5,5.2 174,5.2 172.5,5.2 171,5.2 169.5,5.2 168,5.2 166.5,5.2 165,5.2 163.5,5.2 162,5.2 160.5,5.2 159,5.2 157.5,5.2 156,5.2 154.5,5.2 153,5.2 151.5,5.2 150,5.2 148.5,5.2 147,5.2 145.5,5.2 144,5.2 142.5,5.2 141,5.2 139.5,5.2 138,5.2 136.5,5.2 135,5.2 133.5,5.2 132,5.2 130.5,5.2 129,5.2 127.5,5.2 126,5.2 124.5,5.2 123,5.3 121.5,5.3 120,5.3 118.5,5.5 117,5.3 115.5,5.3 114,5.3 112.5,5.2 111,5.2 109.5,5.2 108,5.2 106.5,5.2 105,5.2 103.5,5.2 102,5.2 100.5,5.2 99,5.2 97.5,5.2 96,5.2 94.5,5.2 93,5.2 91.5,5.2 90,5.2 88.5,5.2 87,5.2 85.5,5.2 84,5.2 82.5,5.2 81,5.2 79.5,5.2 78,5.2 76.5,5.2 75,5.2 73.5,9.1 72,9.3 70.5,7.5 69,8.3 67.5,7.5 66,6.5 64.5,5.2 63,5.2 61.5,5.2 60,5.3 58.5,5.5 57,5.3 55.5,5.2 54,5.2 52.5,5.2 51,5.2 49.5,5.3 48,5.3 46.5,5.3 45,5.3 43.5,5.2 42,5.2 40.5,5.2 39,5.2 37.5,5.2 36,5.2 34.5,5.2 33,5.2 31.5,5.2 30,5.2 28.5,5.2 27,5.2 25.5,5.2 24,5.2 22.5,5.2 21,5.2 19.5,5.2 18,5.2 16.5,5.2 15,5.2 13.5,5.2 12,5.2 10.5,5.2 9,5.2 7.5,5.2 6,5.2 4.5,5.2 3,5.3 1.5,5.3 0,5.3" stroke="#2a2a2a" stroke-width=".6" vector-effect="non-scaling-stroke"/></symbol><symbol id="wE5" viewBox="0 0 549 10" preserveAspectRatio="none"><polygon points="0,3.7 1.5,2.8 3,3.7 4.5,3.2 6,3.2 7.5,3.7 9,2.8 10.5,3.7 12,2.8 13.5,1.2 15,2.8 16.5,3.7 18,2.7 19.5,2.7 21,3.7 22.5,3.5 24,2.4 25.5,2.4 27,3.5 28.5,3.6 30,2.6 31.5,2.6 33,3.6 34.5,3.6 36,2.5 37.5,2.5 39,3.6 40.5,2.8 42,1.2 43.5,2.8 45,3.7 46.5,2.7 48,2.7 49.5,3.7 51,3.8 52.5,3 54,2.4 55.5,3 57,3.8 58.5,3.3 60,2.1 61.5,1.3 63,2.1 64.5,3.3 66,3.9 67.5,3.2 69,2.6 70.5,4.8 72,0.8 73.5,0.9 75,3.5 76.5,2.4 78,1.6 79.5,2.4 81,3.5 82.5,2.5 84,2.5 85.5,2.9 87,2.9 88.5,2.8 90,1.2 91.5,2.8 93,2.8 94.5,2.8 96,3.7 97.5,2.8 99,2.2 100.5,2.8 102,3.7 103.5,1.9 105,1.9 106.5,3.8 108,3 109.5,2.4 111,3 112.5,3.8 114,3.2 115.5,1.9 117,1 118.5,4.8 120,1 121.5,1.2 123,1.1 124.5,4 126,3.3 127.5,3.3 129,4 130.5,3.8 132,2.9 133.5,2.9 135,3.8 136.5,3.8 138,2.8 139.5,2.8 141,3.8 142.5,3.9 144,3.1 145.5,2.6 147,3.1 148.5,3.9 150,3.6 151.5,2.6 153,1.9 154.5,2.6 156,3.6 157.5,3.7 159,2.7 160.5,2.7 162,3.7 163.5,2.9 165,2.9 166.5,3.9 168,3.1 169.5,2.5 171,3.1 172.5,3.9 174,3.3 175.5,2.1 177,2.1 178.5,3.3 180,3.3 181.5,3.3 183,3.2 184.5,3.2 186,2.6 187.5,2.6 189,3.2 190.5,1.8 192,3.2 193.5,3.5 195,2.5 196.5,4.8 198,4.8 199.5,2.8 201,1.1 202.5,0 204,1.1 205.5,2.8 207,1.5 208.5,1.5 210,1.5 211.5,1.5 213,4 214.5,3.3 216,2.7 217.5,3.3 219,4 220.5,3.7 222,2.7 223.5,2 225,2.7 226.5,3.7 228,3.5 229.5,2.4 231,2.4 232.5,3.5 234,3.6 235.5,3.6 237,3.9 238.5,3 240,2.4 241.5,3 243,3.9 244.5,3 246,3 247.5,3.6 249,2.6 250.5,2.6 252,3.6 253.5,3.6 255,2.6 256.5,2.6 258,3.6 259.5,2.8 261,2.8 262.5,4.1 264,3.5 265.5,3.1 267,3.5 268.5,0.7 270,0.6 271.5,0.9 273,4.8 274.5,4.8 276,4.8 277.5,4.6 279,3.7 280.5,2.8 282,1.9 283.5,1 285,1.9 286.5,2.8 288,3.7 289.5,4.6 291,3.7 292.5,2.7 294,2.7 295.5,3.7 297,3.6 298.5,2.6 300,2.6 301.5,3.6 303,3 304.5,1.5 306,3 307.5,3.4 309,2.3 310.5,2.3 312,3.4 313.5,2.7 315,2.7 316.5,3.4 318,2.2 319.5,3.4 321,4.1 322.5,2.3 324,0.5 325.5,2.3 327,4.1 328.5,3.1 330,3.1 331.5,3 333,3 334.5,4.1 336,3.4 337.5,3 339,3.4 340.5,4.1 342,3.8 343.5,3 345,3.8 346.5,4 348,3.2 349.5,3.2 351,4 352.5,4 354,3.2 355.5,2.7 357,3.2 358.5,4 360,3.5 361.5,2.8 363,2.8 364.5,3.5 366,3.5 367.5,3.3 369,2 370.5,3.3 372,3.6 373.5,2.5 375,1.8 376.5,2.5 378,3.6 379.5,3.4 381,2.2 382.5,3.4 384,3.8 385.5,2.9 387,2.9 388.5,3.8 390,3 391.5,1.6 393,3 394.5,2.6 396,2.6 397.5,3.7 399,2.8 400.5,2.2 402,2.8 403.5,3.7 405,3.7 406.5,2.7 408,2.7 409.5,3.7 411,4.1 412.5,3.5 414,3.1 415.5,4.8 417,4.4 418.5,3.3 420,2.1 421.5,1 423,2.1 424.5,3.3 426,4.4 427.5,4 429,3.2 430.5,3.2 432,4 433.5,3.8 435,2.9 436.5,2.9 438,2.1 439.5,0 441,2.1 442.5,2.1 444,0 445.5,2.1 447,2.5 448.5,0.7 450,0.7 451.5,2.5 453,1.5 454.5,1.8 456,1.2 457.5,0.9 459,0.8 460.5,0.9 462,1.2 463.5,1.8 465,1.6 466.5,1 468,1.6 469.5,1.3 471,1.3 472.5,1.2 474,0.6 475.5,0.1 477,0 478.5,0.1 480,0.6 481.5,1.2 483,2.1 484.5,1.6 486,1.4 487.5,1.4 489,1.6 490.5,2.1 492,1 493.5,0.3 495,0 496.5,0.3 498,1 499.5,1.4 501,0.8 502.5,1.4 504,1 505.5,0.3 507,0 508.5,0.3 510,1 511.5,1.1 513,1.1 514.5,2.1 516,1.7 517.5,1.4 519,1.3 520.5,1.4 522,1.7 523.5,2.1 525,0.9 526.5,0.9 528,1.3 529.5,1.3 531,1.2 532.5,0.6 534,0.2 535.5,0.2 537,0.6 538.5,1.2 540,1.7 541.5,1.1 543,0.8 544.5,1.1 546,1.7 547.5,1.6 549,4.8 549,5.2 547.5,8.4 546,8.3 544.5,8.9 543,9.2 541.5,8.9 540,8.3 538.5,8.8 537,9.4 535.5,9.8 534,9.8 532.5,9.4 531,8.8 529.5,8.7 528,8.7 526.5,9.1 525,9.1 523.5,7.9 522,8.3 520.5,8.6 519,8.7 517.5,8.6 516,8.3 514.5,7.9 513,8.9 511.5,8.9 510,9 508.5,9.7 507,10 505.5,9.7 504,9 502.5,8.6 501,9.2 499.5,8.6 498,9 496.5,9.7 495,10 493.5,9.7 492,9 490.5,7.9 489,8.4 487.5,8.6 486,8.6 484.5,8.4 483,7.9 481.5,8.8 480,9.4 478.5,9.9 477,10 475.5,9.9 474,9.4 472.5,8.8 471,8.7 469.5,8.7 468,8.4 466.5,9 465,8.4 463.5,8.2 462,8.8 460.5,9.1 459,9.2 457.5,9.1 456,8.8 454.5,8.2 453,8.5 451.5,7.5 450,9.3 448.5,9.3 447,7.5 445.5,7.9 444,10 442.5,7.9 441,7.9 439.5,10 438,7.9 436.5,7.1 435,7.1 433.5,6.2 432,6 430.5,6.8 429,6.8 427.5,6 426,5.6 424.5,6.7 423,7.9 421.5,9 420,7.9 418.5,6.7 417,5.6 415.5,5.2 414,6.9 412.5,6.5 411,5.9 409.5,6.3 408,7.3 406.5,7.3 405,6.3 403.5,6.3 402,7.2 400.5,7.8 399,7.2 397.5,6.3 396,7.4 394.5,7.4 393,7 391.5,8.4 390,7 388.5,6.2 387,7.1 385.5,7.1 384,6.2 382.5,6.6 381,7.8 379.5,6.6 378,6.4 376.5,7.5 375,8.2 373.5,7.5 372,6.4 370.5,6.7 369,8 367.5,6.7 366,6.5 364.5,6.5 363,7.2 361.5,7.2 360,6.5 358.5,6 357,6.8 355.5,7.3 354,6.8 352.5,6 351,6 349.5,6.8 348,6.8 346.5,6 345,6.2 343.5,7 342,6.2 340.5,5.9 339,6.6 337.5,7 336,6.6 334.5,5.9 333,7 331.5,7 330,6.9 328.5,6.9 327,5.9 325.5,7.7 324,9.5 322.5,7.7 321,5.9 319.5,6.6 318,7.8 316.5,6.6 315,7.3 313.5,7.3 312,6.6 310.5,7.7 309,7.7 307.5,6.6 306,7 304.5,8.5 303,7 301.5,6.4 300,7.4 298.5,7.4 297,6.4 295.5,6.3 294,7.3 292.5,7.3 291,6.3 289.5,5.4 288,6.3 286.5,7.2 285,8.1 283.5,9 282,8.1 280.5,7.2 279,6.3 277.5,5.4 276,5.2 274.5,5.2 273,5.2 271.5,9.1 270,9.4 268.5,9.3 267,6.5 265.5,6.9 264,6.5 262.5,5.9 261,7.2 259.5,7.2 258,6.4 256.5,7.4 255,7.4 253.5,6.4 252,6.4 250.5,7.4 249,7.4 247.5,6.4 246,7 244.5,7 243,6.1 241.5,7 240,7.6 238.5,7 237,6.1 235.5,6.4 234,6.4 232.5,6.5 231,7.6 229.5,7.6 228,6.5 226.5,6.3 225,7.3 223.5,8 222,7.3 220.5,6.3 219,6 217.5,6.7 216,7.3 214.5,6.7 213,6 211.5,8.5 210,8.5 208.5,8.5 207,8.5 205.5,7.2 204,8.9 202.5,10 201,8.9 199.5,7.2 198,5.2 196.5,5.2 195,7.5 193.5,6.5 192,6.8 190.5,8.2 189,6.8 187.5,7.4 186,7.4 184.5,6.8 183,6.8 181.5,6.7 180,6.7 178.5,6.7 177,7.9 175.5,7.9 174,6.7 172.5,6.1 171,6.9 169.5,7.5 168,6.9 166.5,6.1 165,7.1 163.5,7.1 162,6.3 160.5,7.3 159,7.3 157.5,6.3 156,6.4 154.5,7.4 153,8.1 151.5,7.4 150,6.4 148.5,6.1 147,6.9 145.5,7.4 144,6.9 142.5,6.1 141,6.2 139.5,7.2 138,7.2 136.5,6.2 135,6.2 133.5,7.1 132,7.1 130.5,6.2 129,6 127.5,6.7 126,6.7 124.5,6 123,8.9 121.5,8.8 120,9 118.5,5.2 117,9 115.5,8.1 114,6.8 112.5,6.2 111,7 109.5,7.6 108,7 106.5,6.2 105,8.1 103.5,8.1 102,6.3 100.5,7.2 99,7.8 97.5,7.2 96,6.3 94.5,7.2 93,7.2 91.5,7.2 90,8.8 88.5,7.2 87,7.1 85.5,7.1 84,7.5 82.5,7.5 81,6.5 79.5,7.6 78,8.4 76.5,7.6 75,6.5 73.5,9.1 72,9.2 70.5,5.2 69,7.4 67.5,6.8 66,6.1 64.5,6.7 63,7.9 61.5,8.7 60,7.9 58.5,6.7 57,6.2 55.5,7 54,7.6 52.5,7 51,6.2 49.5,6.3 48,7.3 46.5,7.3 45,6.3 43.5,7.2 42,8.8 40.5,7.2 39,6.4 37.5,7.5 36,7.5 34.5,6.4 33,6.4 31.5,7.4 30,7.4 28.5,6.4 27,6.5 25.5,7.6 24,7.6 22.5,6.5 21,6.3 19.5,7.3 18,7.3 16.5,6.3 15,7.2 13.5,8.8 12,7.2 10.5,6.3 9,7.2 7.5,6.3 6,6.8 4.5,6.8 3,6.3 1.5,7.2 0,6.3" stroke="#2a2a2a" stroke-width=".6" vector-effect="non-scaling-stroke"/></symbol><symbol id="wE6" viewBox="0 0 549 10" preserveAspectRatio="none"><polygon points="0,3.5 1.5,2.3 3,2.3 4.5,3.5 6,3.5 7.5,2.4 9,2.4 10.5,3.5 12,4 13.5,3.3 15,2.8 16.5,3.3 18,4 19.5,3.7 21,2.7 22.5,2.7 24,3.7 25.5,3.7 27,2.8 28.5,3.7 30,3.2 31.5,1.8 33,1.8 34.5,3.2 36,2.7 37.5,1.1 39,2.7 40.5,3.9 42,3 43.5,3 45,3.9 46.5,2.7 48,1.1 49.5,2.7 51,3.9 52.5,3.1 54,3.1 55.5,3.9 57,2.9 58.5,1.3 60,2.9 61.5,2.8 63,2.8 64.5,3 66,1.5 67.5,1.5 69,3 70.5,4.8 72,1.1 73.5,1.2 75,3.5 76.5,2.4 78,1.6 79.5,2.4 81,3.5 82.5,2.4 84,0.5 85.5,2.4 87,3.1 88.5,1.8 90,1.8 91.5,3.1 93,2.7 94.5,1.1 96,1.1 97.5,2.7 99,2.4 100.5,2.4 102,3 103.5,1.5 105,3 106.5,3.4 108,2.3 109.5,2.3 111,3.4 112.5,3.4 114,2.3 115.5,1.5 117,2.3 118.5,4.8 120,0.8 121.5,1 123,0.8 124.5,4.1 126,3.5 127.5,3.1 129,3.5 130.5,4.1 132,3.7 133.5,2.7 135,2 136.5,2.7 138,3.7 139.5,3.2 141,3.2 142.5,3.1 144,3.1 145.5,2.6 147,2.6 148.5,3.1 150,1.7 151.5,3.1 153,4 154.5,3.3 156,3.3 157.5,4 159,2.9 160.5,2.9 162,3.7 163.5,2.8 165,2.2 166.5,2.8 168,3.7 169.5,3.8 171,2.9 172.5,2.3 174,2.9 175.5,3.8 177,3.4 178.5,3.4 180,2.9 181.5,2.9 183,3.4 184.5,3.4 186,3.7 187.5,2.8 189,2.1 190.5,2.8 192,3.7 193.5,2.8 195,2.8 196.5,4.8 198,4.8 199.5,1.5 201,1.5 202.5,2.8 204,1.1 205.5,0 207,1.1 208.5,2.8 210,2.5 211.5,0.7 213,3.4 214.5,3.4 216,3.1 217.5,1.7 219,3.1 220.5,3 222,3 223.5,3.7 225,2.8 226.5,2.8 228,3.7 229.5,3.2 231,3.2 232.5,3.8 234,3 235.5,2.4 237,3 238.5,3.8 240,3.6 241.5,3.6 243,3.5 244.5,2.4 246,3.5 247.5,3.3 249,2.1 250.5,2.1 252,3.3 253.5,4.1 255,3.4 256.5,2.9 258,3.4 259.5,4.1 261,3.8 262.5,2.9 264,3.8 265.5,3.3 267,3.3 268.5,0.9 270,1.1 271.5,0.9 273,4.8 274.5,4.8 276,4.8 277.5,4.6 279,3.7 280.5,2.8 282,1.9 283.5,1 285,1.9 286.5,2.8 288,3.7 289.5,4.6 291,3.7 292.5,2.7 294,2 295.5,2.7 297,3.7 298.5,3.3 300,2.1 301.5,3.3 303,3.3 304.5,2 306,2 307.5,3.3 309,2.8 310.5,1.2 312,2.8 313.5,3 315,1.6 316.5,3 318,2.8 319.5,2.8 321,4.1 322.5,2.3 324,0.5 325.5,2.3 327,4.1 328.5,3.6 330,2.5 331.5,2.5 333,3.6 334.5,3.2 336,3.2 337.5,3.7 339,2.8 340.5,2.8 342,3.7 343.5,3.7 345,2.7 346.5,3.7 348,4.2 349.5,3.6 351,3.1 352.5,3.6 354,4.2 355.5,4 357,3.3 358.5,2.8 360,3.3 361.5,2.8 363,2.8 364.5,3.8 366,2.9 367.5,2.2 369,2.9 370.5,3.8 372,2.9 373.5,2.9 375,4 376.5,3.3 378,3.3 379.5,4 381,2.8 382.5,2.8 384,3.1 385.5,3.1 387,3.8 388.5,2.9 390,3.8 391.5,3.7 393,2.8 394.5,2.8 396,3.7 397.5,4.1 399,3.5 400.5,3 402,3.5 403.5,4.1 405,3.5 406.5,2.4 408,3.5 409.5,3 411,3 412.5,3.6 414,2.6 415.5,4.8 417,4.4 418.5,3.3 420,2.1 421.5,1 423,2.1 424.5,3.3 426,4.4 427.5,3.9 429,3 430.5,3.9 432,3.2 433.5,3.2 435,3.5 436.5,3.5 438,2.1 439.5,0 441,2.1 442.5,2.5 444,0.7 445.5,0.7 447,2.5 448.5,2.1 450,0 451.5,2.1 453,2.8 454.5,1.7 456,1.2 457.5,0.9 459,0.7 460.5,0.9 462,1.2 463.5,1.7 465,1.9 466.5,1.4 468,1.9 469.5,4.8 471,1.1 472.5,0.4 474,0.4 475.5,1.1 477,1.2 478.5,0.6 480,0.1 481.5,0 483,0.1 484.5,0.6 486,1.2 487.5,0.8 489,0 490.5,0.8 492,2.2 493.5,1.8 495,1.5 496.5,1.4 498,1.5 499.5,1.8 501,2.2 502.5,1.6 504,1 505.5,1.6 507,1.6 508.5,1.6 510,4.8 511.5,0.4 513,0.4 514.5,1 516,0.3 517.5,1 519,1.4 520.5,0.8 522,1.4 523.5,0.7 525,0.7 526.5,2 528,1.4 529.5,1.4 531,2 532.5,1.5 534,0.9 535.5,1.5 537,2.3 538.5,1.8 540,1.6 541.5,1.8 543,2.3 544.5,1.5 546,1.5 547.5,0.9 549,4.8 549,5.2 547.5,9.1 546,8.5 544.5,8.5 543,7.7 541.5,8.2 540,8.4 538.5,8.2 537,7.7 535.5,8.5 534,9.1 532.5,8.5 531,8 529.5,8.6 528,8.6 526.5,8 525,9.3 523.5,9.3 522,8.6 520.5,9.2 519,8.6 517.5,9 516,9.7 514.5,9 513,9.6 511.5,9.6 510,5.2 508.5,8.4 507,8.4 505.5,8.4 504,9 502.5,8.4 501,7.8 499.5,8.2 498,8.5 496.5,8.6 495,8.5 493.5,8.2 492,7.8 490.5,9.2 489,10 487.5,9.2 486,8.8 484.5,9.4 483,9.9 481.5,10 480,9.9 478.5,9.4 477,8.8 475.5,8.9 474,9.6 472.5,9.6 471,8.9 469.5,5.2 468,8.1 466.5,8.6 465,8.1 463.5,8.3 462,8.8 460.5,9.1 459,9.3 457.5,9.1 456,8.8 454.5,8.3 453,7.2 451.5,7.9 450,10 448.5,7.9 447,7.5 445.5,9.3 444,9.3 442.5,7.5 441,7.9 439.5,10 438,7.9 436.5,6.5 435,6.5 433.5,6.8 432,6.8 430.5,6.1 429,7 427.5,6.1 426,5.6 424.5,6.7 423,7.9 421.5,9 420,7.9 418.5,6.7 417,5.6 415.5,5.2 414,7.4 412.5,6.4 411,7 409.5,7 408,6.5 406.5,7.6 405,6.5 403.5,5.9 402,6.5 400.5,7 399,6.5 397.5,5.9 396,6.3 394.5,7.2 393,7.2 391.5,6.3 390,6.2 388.5,7.1 387,6.2 385.5,6.9 384,6.9 382.5,7.2 381,7.2 379.5,6 378,6.7 376.5,6.7 375,6 373.5,7.1 372,7.1 370.5,6.2 369,7.1 367.5,7.8 366,7.1 364.5,6.2 363,7.2 361.5,7.2 360,6.7 358.5,7.2 357,6.7 355.5,6 354,5.8 352.5,6.4 351,6.9 349.5,6.4 348,5.8 346.5,6.3 345,7.3 343.5,6.3 342,6.3 340.5,7.2 339,7.2 337.5,6.3 336,6.8 334.5,6.8 333,6.4 331.5,7.5 330,7.5 328.5,6.4 327,5.9 325.5,7.7 324,9.5 322.5,7.7 321,5.9 319.5,7.2 318,7.2 316.5,7 315,8.4 313.5,7 312,7.2 310.5,8.8 309,7.2 307.5,6.7 306,8 304.5,8 303,6.7 301.5,6.7 300,7.9 298.5,6.7 297,6.3 295.5,7.3 294,8 292.5,7.3 291,6.3 289.5,5.4 288,6.3 286.5,7.2 285,8.1 283.5,9 282,8.1 280.5,7.2 279,6.3 277.5,5.4 276,5.2 274.5,5.2 273,5.2 271.5,9.1 270,8.9 268.5,9.1 267,6.7 265.5,6.7 264,6.2 262.5,7.1 261,6.2 259.5,5.9 258,6.6 256.5,7.1 255,6.6 253.5,5.9 252,6.7 250.5,7.9 249,7.9 247.5,6.7 246,6.5 244.5,7.6 243,6.5 241.5,6.4 240,6.4 238.5,6.2 237,7 235.5,7.6 234,7 232.5,6.2 231,6.8 229.5,6.8 228,6.3 226.5,7.2 225,7.2 223.5,6.3 222,7 220.5,7 219,6.9 217.5,8.3 216,6.9 214.5,6.6 213,6.6 211.5,9.3 210,7.5 208.5,7.2 207,8.9 205.5,10 204,8.9 202.5,7.2 201,8.5 199.5,8.5 198,5.2 196.5,5.2 195,7.2 193.5,7.2 192,6.3 190.5,7.2 189,7.9 187.5,7.2 186,6.3 184.5,6.6 183,6.6 181.5,7.1 180,7.1 178.5,6.6 177,6.6 175.5,6.2 174,7.1 172.5,7.7 171,7.1 169.5,6.2 168,6.3 166.5,7.2 165,7.8 163.5,7.2 162,6.3 160.5,7.1 159,7.1 157.5,6 156,6.7 154.5,6.7 153,6 151.5,6.9 150,8.3 148.5,6.9 147,7.4 145.5,7.4 144,6.9 142.5,6.9 141,6.8 139.5,6.8 138,6.3 136.5,7.3 135,8 133.5,7.3 132,6.3 130.5,5.9 129,6.5 127.5,6.9 126,6.5 124.5,5.9 123,9.2 121.5,9 120,9.2 118.5,5.2 117,7.7 115.5,8.5 114,7.7 112.5,6.6 111,6.6 109.5,7.7 108,7.7 106.5,6.6 105,7 103.5,8.5 102,7 100.5,7.6 99,7.6 97.5,7.3 96,8.9 94.5,8.9 93,7.3 91.5,6.9 90,8.2 88.5,8.2 87,6.9 85.5,7.6 84,9.5 82.5,7.6 81,6.5 79.5,7.6 78,8.4 76.5,7.6 75,6.5 73.5,8.8 72,8.9 70.5,5.2 69,7 67.5,8.5 66,8.5 64.5,7 63,7.2 61.5,7.2 60,7.1 58.5,8.7 57,7.1 55.5,6.1 54,6.9 52.5,6.9 51,6.1 49.5,7.3 48,8.9 46.5,7.3 45,6.1 43.5,7 42,7 40.5,6.1 39,7.3 37.5,8.9 36,7.3 34.5,6.8 33,8.2 31.5,8.2 30,6.8 28.5,6.3 27,7.2 25.5,6.3 24,6.3 22.5,7.3 21,7.3 19.5,6.3 18,6 16.5,6.7 15,7.2 13.5,6.7 12,6 10.5,6.5 9,7.6 7.5,7.6 6,6.5 4.5,6.5 3,7.7 1.5,7.7 0,6.5" stroke="#2a2a2a" stroke-width=".6" vector-effect="non-scaling-stroke"/></symbol></defs></svg><div style="left:273px;top:153.5px;width:2495px;height:1054px;background:#606060;"></div><div style="left:6px;top:153.5px;width:267px;height:1054px;background:#8c8c8c;"></div><div style="left:6px;top:154.5px;width:267px;height:35px;background:#8c8c8c;"></div><div style="left:8px;top:159px;width:7px;height:24px;background:#6a2bc9;border-radius:3px"></div><div class="b" style="left:23px;top:159.5px;width:30px;height:22px;"><b>1</b></div><div class="d" style="left:53.5px;top:159.5px;width:12.5px;height:22px;">C</div><div class="b n" style="left:73px;top:159.5px;width:62px;height:22px;">Guitar</div><div class="b" style="left:141px;top:159.5px;width:22px;height:22px;"><i class="g"></i></div><div class="b" style="left:170px;top:159.5px;width:22px;height:22px;"><b>O</b></div><div class="b" style="left:199px;top:159.5px;width:22px;height:22px;"><b>M</b></div><div class="b" style="left:228px;top:159.5px;width:22px;height:22px;"><b>S</b></div><div style="left:258px;top:159px;width:8px;height:23px;background:#5e5e5e;border-radius:2px"></div><div style="left:6px;top:189.5px;width:267px;height:35px;background:#8c8c8c;"></div><div style="left:8px;top:194px;width:7px;height:24px;background:#6a2bc9;border-radius:3px"></div><div class="b" style="left:23px;top:194.5px;width:30px;height:22px;"><b>2</b></div><div class="d" style="left:53.5px;top:194.5px;width:12.5px;height:22px;">C</div><div class="b n" style="left:73px;top:194.5px;width:62px;height:22px;">Bdrum</div><div class="b" style="left:141px;top:194.5px;width:22px;height:22px;"><i class="g"></i></div><div class="b" style="left:170px;top:194.5px;width:22px;height:22px;"><b>O</b></div><div class="b" style="left:199px;top:194.5px;width:22px;height:22px;"><b>M</b></div><div class="b" style="left:228px;top:194.5px;width:22px;height:22px;"><b>S</b></div><div style="left:258px;top:194px;width:8px;height:23px;background:#5e5e5e;border-radius:2px"></div><div style="left:6px;top:224.5px;width:267px;height:35px;background:#8c8c8c;"></div><div style="left:8px;top:229px;width:7px;height:24px;background:#6a2bc9;border-radius:3px"></div><div class="b" style="left:23px;top:229.5px;width:30px;height:22px;"><b>3</b></div><div class="d" style="left:53.5px;top:229.5px;width:12.5px;height:22px;">C</div><div class="b n" style="left:73px;top:229.5px;width:62px;height:22px;">HiHat</div><div class="b" style="left:141px;top:229.5px;width:22px;height:22px;"><i class="g"></i></div><div class="b" style="left:170px;top:229.5px;width:22px;height:22px;"><b>O</b></div><div class="b" style="left:199px;top:229.5px;width:22px;height:22px;"><b>M</b></div><div class="b" style="left:228px;top:229.5px;width:22px;height:22px;"><b>S</b></div><div style="left:258px;top:229px;width:8px;height:23px;background:#5e5e5e;border-radius:2px"></div><div style="left:6px;top:259.5px;width:267px;height:35px;background:#8c8c8c;"></div><div style="left:8px;top:264px;width:7px;height:24px;background:#6a2bc9;border-radius:3px"></div><div class="b" style="left:23px;top:264.5px;width:30px;height:22px;"><b>4</b></div><div class="d" style="left:53.5px;top:264.5px;width:12.5px;height:22px;">C</div><div class="b n" style="left:73px;top:264.5px;width:62px;height:22px;">Bass</div><div class="b" style="left:141px;top:264.5px;width:22px;height:22px;"><i class="g"></i></div><div class="b" style="left:170px;top:264.5px;width:22px;height:22px;"><b>O</b></div><div class="b" style="left:199px;top:264.5px;width:22px;height:22px;"><b>M</b></div><div class="b" style="left:228px;top:264.5px;width:22px;height:22px;"><b>S</b></div><div style="left:258px;top:264px;width:8px;height:23px;background:#5e5e5e;border-radius:2px"></div><div style="left:6px;top:294.5px;width:267px;height:35px;background:#8c8c8c;"></div><div style="left:8px;top:299px;width:7px;height:24px;background:#6a2bc9;border-radius:3px"></div><div class="b" style="left:23px;top:299.5px;width:30px;height:22px;"><b>5</b></div><div class="d" style="left:53.5px;top:299.5px;width:12.5px;height:22px;">C</div><div class="b n" style="left:73px;top:299.5px;width:62px;height:22px;">Vocal 1</div><div class="b" style="left:141px;top:299.5px;width:22px;height:22px;"><i class="g"></i></div><div class="b" style="left:170px;top:299.5px;width:22px;height:22px;"><b>O</b></div><div class="b" style="left:199px;top:299.5px;width:22px;height:22px;"><b>M</b></div><div class="b" style="left:228px;top:299.5px;width:22px;height:22px;"><b>S</b></div><div style="left:258px;top:299px;width:8px;height:23px;background:#5e5e5e;border-radius:2px"></div><div style="left:258.5px;top:314px;width:7px;height:8px;background:#f0b070;"></div><div style="left:273px;top:295px;width:508px;height:31px;background:#6a2bc9;"></div><div style="left:273px;top:319.4px;width:508px;height:0.8px;background:#333;"></div><svg style="position:absolute;left:273px;top:314px;overflow:hidden" width="508" height="11.5"><use href="#wA" width="549" height="11.5" fill="#dcc8f4"/></svg><div class="t" style="top:297.8px;font-size:13px;line-height:17px;color:#141414;letter-spacing:0.1px;left:276.5px;">record mic 011 (1)</div><div class="t" style="top:297.8px;font-size:13px;line-height:17px;color:#141414;left:658px;">r</div><div class="t" style="top:297.8px;font-size:13px;line-height:17px;color:#141414;letter-spacing:0.1px;left:675px;">record mic 010 (1</div><div style="left:6px;top:329.5px;width:267px;height:35px;background:#8c8c8c;"></div><div style="left:8px;top:334px;width:7px;height:24px;background:#6a2bc9;border-radius:3px"></div><div class="b" style="left:23px;top:334.5px;width:30px;height:22px;"><b>6</b></div><div class="d" style="left:53.5px;top:334.5px;width:12.5px;height:22px;">C</div><div class="b n" style="left:73px;top:334.5px;width:62px;height:22px;">Vocal 2</div><div class="b" style="left:141px;top:334.5px;width:22px;height:22px;"><i class="g"></i></div><div class="b" style="left:170px;top:334.5px;width:22px;height:22px;"><b>O</b></div><div class="b" style="left:199px;top:334.5px;width:22px;height:22px;"><b>M</b></div><div class="b" style="left:228px;top:334.5px;width:22px;height:22px;"><b>S</b></div><div style="left:258px;top:334px;width:8px;height:23px;background:#5e5e5e;border-radius:2px"></div><div style="left:258.5px;top:347px;width:7px;height:10px;background:#f0b070;"></div><div style="left:626px;top:330px;width:726px;height:31px;background:#6a2bc9;"></div><div style="left:626px;top:354.4px;width:726px;height:0.8px;background:#333;"></div><svg style="position:absolute;left:626px;top:349px;overflow:hidden" width="726" height="11.5"><use href="#wB" x="-353" width="1079" height="11.5" fill="#dcc8f4"/></svg><div style="left:673px;top:330px;width:1.3px;height:31px;background:#2a2a2a;"></div><div style="left:677.5px;top:330px;width:1.3px;height:31px;background:#2a2a2a;"></div><div style="left:631px;top:332.3px;width:37px;height:18px;overflow:hidden"><span class="ct" style="letter-spacing:0.6px">record</span></div><div style="left:692px;top:332.3px;width:28.5px;height:18px;overflow:hidden"><span class="ct" style="letter-spacing:0.6px">record</span></div><div class="t" style="top:332.8px;font-size:13px;line-height:17px;color:#141414;left:745px;">r</div><div class="t" style="top:332.8px;font-size:13px;line-height:17px;color:#141414;letter-spacing:0.1px;left:770px;">record mic 011 (2)</div><div class="t" style="top:332.8px;font-size:13px;line-height:17px;color:#141414;left:1229.3px;">r</div><div class="t" style="top:332.8px;font-size:13px;line-height:17px;color:#141414;letter-spacing:0.1px;left:1245px;">record mic 010 (2</div><div style="left:6px;top:364.5px;width:267px;height:35px;background:#8c8c8c;"></div><div style="left:8px;top:369px;width:7px;height:24px;background:#2cccbb;border-radius:3px"></div><div class="b" style="left:23px;top:369.5px;width:30px;height:22px;"><b>7</b></div><div class="d" style="left:53.5px;top:369.5px;width:12.5px;height:22px;">C</div><div class="b n" style="left:73px;top:369.5px;width:62px;height:22px;"></div><div class="b" style="left:141px;top:369.5px;width:22px;height:22px;"><i class="g"></i></div><div class="b" style="left:170px;top:369.5px;width:22px;height:22px;"><b>O</b></div><div class="b" style="left:199px;top:369.5px;width:22px;height:22px;"><b>M</b></div><div class="b" style="left:228px;top:369.5px;width:22px;height:22px;"><b>S</b></div><div style="left:258px;top:369px;width:8px;height:23px;background:#5e5e5e;border-radius:2px"></div><div style="left:258.5px;top:384px;width:7px;height:8px;background:#f0b070;"></div><div style="left:273px;top:365px;width:549px;height:31px;background:#2cccbb;"></div><div style="left:273px;top:389.4px;width:549px;height:0.8px;background:#333;"></div><svg style="position:absolute;left:273px;top:384px" width="549" height="11.5"><use href="#wA" width="549" height="11.5" fill="#c6f3ed"/></svg><div class="t" style="top:367.8px;font-size:13px;line-height:17px;color:#141414;letter-spacing:0.1px;left:276.5px;">record mic 011 (1)</div><div class="t" style="top:367.8px;font-size:13px;line-height:17px;color:#141414;left:658px;">r</div><div class="t" style="top:367.8px;font-size:13px;line-height:17px;color:#141414;letter-spacing:0.1px;left:675px;">record mic 010 (1</div><div class="t" style="top:367.8px;font-size:13px;line-height:17px;color:#141414;letter-spacing:-0.2px;left:786px;">Earth</div><div style="left:6px;top:399.5px;width:267px;height:35px;background:#8c8c8c;"></div><div style="left:8px;top:404px;width:7px;height:24px;background:#2cccbb;border-radius:3px"></div><div class="b" style="left:23px;top:404.5px;width:30px;height:22px;"><b>8</b></div><div class="d" style="left:53.5px;top:404.5px;width:12.5px;height:22px;">C</div><div class="b n" style="left:73px;top:404.5px;width:62px;height:22px;">Mono</div><div class="b" style="left:141px;top:404.5px;width:22px;height:22px;"><i class="g"></i></div><div class="b" style="left:170px;top:404.5px;width:22px;height:22px;"><b>O</b></div><div class="b" style="left:199px;top:404.5px;width:22px;height:22px;"><b>M</b></div><div class="b" style="left:228px;top:404.5px;width:22px;height:22px;"><b>S</b></div><div style="left:258px;top:404px;width:8px;height:23px;background:#5e5e5e;border-radius:2px"></div><div style="left:258.5px;top:416px;width:7px;height:11px;background:#f0b070;"></div><div style="left:273px;top:400px;width:1079px;height:31px;background:#2cccbb;"></div><div style="left:273px;top:424.4px;width:1079px;height:0.8px;background:#333;"></div><svg style="position:absolute;left:273px;top:419px" width="1079" height="11.5"><use href="#wB" width="1079" height="11.5" fill="#c6f3ed"/></svg><div class="t" style="top:402.8px;font-size:13px;line-height:17px;color:#141414;letter-spacing:-0.1px;left:276.4px;">Earth Moon Sun 03-19-09+03-09-09_5.1 (2)</div><div style="left:673px;top:400px;width:1.3px;height:31px;background:#2a2a2a;"></div><div style="left:677.5px;top:400px;width:1.3px;height:31px;background:#2a2a2a;"></div><div style="left:631px;top:402.3px;width:37px;height:18px;overflow:hidden"><span class="ct" style="letter-spacing:0.6px">record</span></div><div style="left:692px;top:402.3px;width:28.5px;height:18px;overflow:hidden"><span class="ct" style="letter-spacing:0.6px">record</span></div><div class="t" style="top:402.8px;font-size:13px;line-height:17px;color:#141414;left:745px;">r</div><div class="t" style="top:402.8px;font-size:13px;line-height:17px;color:#141414;letter-spacing:0.1px;left:770px;">record mic 011 (2)</div><div class="t" style="top:402.8px;font-size:13px;line-height:17px;color:#141414;left:1229.3px;">r</div><div class="t" style="top:402.8px;font-size:13px;line-height:17px;color:#141414;letter-spacing:0.1px;left:1245px;">record mic 010 (2</div><div style="left:6px;top:434.5px;width:267px;height:50px;background:#8c8c8c;"></div><div style="left:8px;top:439px;width:7px;height:39px;background:#2cccbb;border-radius:3px"></div><div class="b" style="left:23px;top:439.5px;width:30px;height:22px;"><b>9</b></div><div class="d" style="left:53.5px;top:439.5px;width:12.5px;height:22px;">C</div><div class="b n" style="left:73px;top:439.5px;width:62px;height:22px;">Mono</div><div class="b" style="left:141px;top:439.5px;width:22px;height:22px;"><i class="g"></i></div><div class="b" style="left:170px;top:439.5px;width:22px;height:22px;"><b>O</b></div><div class="b" style="left:199px;top:439.5px;width:22px;height:22px;"><b>M</b></div><div class="b" style="left:228px;top:439.5px;width:22px;height:22px;"><b>S</b></div><div style="left:258px;top:439px;width:8px;height:38px;background:#5e5e5e;border-radius:2px"></div><div style="left:258.5px;top:462px;width:7px;height:15px;background:#f0b070;"></div><div style="left:273px;top:435px;width:549px;height:46px;background:#2cccbb;"></div><div style="left:273px;top:467.6px;width:549px;height:0.8px;background:#333;"></div><svg style="position:absolute;left:273px;top:454.5px" width="549" height="27"><use href="#wA" width="549" height="27" fill="#c6f3ed"/></svg><div class="t" style="top:437.8px;font-size:13px;line-height:17px;color:#141414;letter-spacing:0.1px;left:276.5px;">record mic 011 (1)</div><div class="t" style="top:437.8px;font-size:13px;line-height:17px;color:#141414;left:658px;">r</div><div class="t" style="top:437.8px;font-size:13px;line-height:17px;color:#141414;letter-spacing:0.1px;left:675px;">record mic 010 (1</div><div class="t" style="top:437.8px;font-size:13px;line-height:17px;color:#141414;letter-spacing:-0.2px;left:786px;">Earth</div><div style="left:6px;top:484.5px;width:267px;height:35px;background:#8c8c8c;"></div><div style="left:8px;top:489px;width:7px;height:24px;background:#2cccbb;border-radius:3px"></div><div class="b" style="left:23px;top:489.5px;width:30px;height:22px;"><b>10</b></div><div class="d" style="left:53.5px;top:489.5px;width:12.5px;height:22px;">C</div><div class="b n" style="left:73px;top:489.5px;width:62px;height:22px;">Mono</div><div class="b" style="left:141px;top:489.5px;width:22px;height:22px;"><i class="g"></i></div><div class="b" style="left:170px;top:489.5px;width:22px;height:22px;"><b>O</b></div><div class="b" style="left:199px;top:489.5px;width:22px;height:22px;"><b>M</b></div><div class="b" style="left:228px;top:489.5px;width:22px;height:22px;"><b>S</b></div><div style="left:258px;top:489px;width:8px;height:23px;background:#5e5e5e;border-radius:2px"></div><div style="left:258.5px;top:502px;width:7px;height:10px;background:#f0b070;"></div><div style="left:273px;top:485px;width:1079px;height:31px;background:#2cccbb;"></div><div style="left:273px;top:509.4px;width:1079px;height:0.8px;background:#333;"></div><svg style="position:absolute;left:273px;top:504px" width="1079" height="11.5"><use href="#wB" width="1079" height="11.5" fill="#c6f3ed"/></svg><div class="t" style="top:487.8px;font-size:13px;line-height:17px;color:#141414;letter-spacing:-0.1px;left:276.4px;">Earth Moon Sun 03-19-09+03-09-09_5.1 (2)</div><div style="left:673px;top:485px;width:1.3px;height:31px;background:#2a2a2a;"></div><div style="left:677.5px;top:485px;width:1.3px;height:31px;background:#2a2a2a;"></div><div style="left:631px;top:487.3px;width:37px;height:18px;overflow:hidden"><span class="ct" style="letter-spacing:0.6px">record</span></div><div style="left:692px;top:487.3px;width:28.5px;height:18px;overflow:hidden"><span class="ct" style="letter-spacing:0.6px">record</span></div><div class="t" style="top:487.8px;font-size:13px;line-height:17px;color:#141414;left:745px;">r</div><div class="t" style="top:487.8px;font-size:13px;line-height:17px;color:#141414;letter-spacing:0.1px;left:770px;">record mic 011 (2)</div><div class="t" style="top:487.8px;font-size:13px;line-height:17px;color:#141414;left:1229.3px;">r</div><div class="t" style="top:487.8px;font-size:13px;line-height:17px;color:#141414;letter-spacing:0.1px;left:1245px;">record mic 010 (2</div><div style="left:6px;top:519.5px;width:267px;height:35px;background:#8c8c8c;"></div><div style="left:8px;top:524px;width:7px;height:24px;background:#2cccbb;border-radius:3px"></div><div class="b" style="left:23px;top:524.5px;width:30px;height:22px;"><b>11</b></div><div class="d" style="left:53.5px;top:524.5px;width:12.5px;height:22px;">C</div><div class="b n" style="left:73px;top:524.5px;width:62px;height:22px;">Mono</div><div class="b" style="left:141px;top:524.5px;width:22px;height:22px;"><i class="g"></i></div><div class="b" style="left:170px;top:524.5px;width:22px;height:22px;"><b>O</b></div><div class="b" style="left:199px;top:524.5px;width:22px;height:22px;"><b>M</b></div><div class="b" style="left:228px;top:524.5px;width:22px;height:22px;"><b>S</b></div><div style="left:258px;top:524px;width:8px;height:23px;background:#5e5e5e;border-radius:2px"></div><div style="left:258.5px;top:539px;width:7px;height:8px;background:#f0b070;"></div><div style="left:273px;top:520px;width:549px;height:31px;background:#2cccbb;"></div><div style="left:273px;top:544.4px;width:549px;height:0.8px;background:#333;"></div><svg style="position:absolute;left:273px;top:539px" width="549" height="11.5"><use href="#wA" width="549" height="11.5" fill="#c6f3ed"/></svg><div class="t" style="top:522.8px;font-size:13px;line-height:17px;color:#141414;letter-spacing:0.1px;left:276.5px;">record mic 011 (1)</div><div class="t" style="top:522.8px;font-size:13px;line-height:17px;color:#141414;left:658px;">r</div><div class="t" style="top:522.8px;font-size:13px;line-height:17px;color:#141414;letter-spacing:0.1px;left:675px;">record mic 010 (1</div><div class="t" style="top:522.8px;font-size:13px;line-height:17px;color:#141414;letter-spacing:-0.2px;left:786px;">Earth</div><div style="left:6px;top:554.5px;width:267px;height:35px;background:#8c8c8c;"></div><div style="left:8px;top:559px;width:7px;height:24px;background:#2cccbb;border-radius:3px"></div><div class="b" style="left:23px;top:559.5px;width:30px;height:22px;"><b>12</b></div><div class="d" style="left:53.5px;top:559.5px;width:12.5px;height:22px;">L</div><div class="b n" style="left:73px;top:559.5px;width:62px;height:22px;">Mix Group</div><div class="b" style="left:141px;top:559.5px;width:22px;height:22px;"><i class="g"></i></div><div class="b" style="left:170px;top:559.5px;width:22px;height:22px;"><b>O</b></div><div class="b" style="left:199px;top:559.5px;width:22px;height:22px;"><b>M</b></div><div class="b" style="left:228px;top:559.5px;width:22px;height:22px;"><b>S</b></div><div style="left:258px;top:559px;width:8px;height:23px;background:#5e5e5e;border-radius:2px"></div><div style="left:258.5px;top:566px;width:7px;height:16px;background:#f0b070;"></div><div style="left:258.5px;top:566px;width:7px;height:5px;background:#ff9428;"></div><div style="left:273px;top:555px;width:1079px;height:31px;background:#2cccbb;"></div><div style="left:273px;top:579.4px;width:1079px;height:0.8px;background:#333;"></div><svg style="position:absolute;left:273px;top:574px" width="1079" height="11.5"><use href="#wB" width="1079" height="11.5" fill="#c6f3ed"/></svg><div class="t" style="top:557.8px;font-size:13px;line-height:17px;color:#141414;letter-spacing:-0.1px;left:276.4px;">Earth Moon Sun 03-19-09+03-09-09_5.1 (2)</div><div style="left:673px;top:555px;width:1.3px;height:31px;background:#2a2a2a;"></div><div style="left:677.5px;top:555px;width:1.3px;height:31px;background:#2a2a2a;"></div><div style="left:631px;top:557.3px;width:37px;height:18px;overflow:hidden"><span class="ct" style="letter-spacing:0.6px">record</span></div><div style="left:692px;top:557.3px;width:28.5px;height:18px;overflow:hidden"><span class="ct" style="letter-spacing:0.6px">record</span></div><div class="t" style="top:557.8px;font-size:13px;line-height:17px;color:#141414;left:745px;">r</div><div class="t" style="top:557.8px;font-size:13px;line-height:17px;color:#141414;letter-spacing:0.1px;left:770px;">record mic 011 (2)</div><div class="t" style="top:557.8px;font-size:13px;line-height:17px;color:#141414;left:1229.3px;">r</div><div class="t" style="top:557.8px;font-size:13px;line-height:17px;color:#141414;letter-spacing:0.1px;left:1245px;">record mic 010 (2</div><div style="left:6px;top:589.5px;width:267px;height:35px;background:#8c8c8c;"></div><div style="left:8px;top:594px;width:7px;height:24px;background:#2cccbb;border-radius:3px"></div><div class="pl" style="left:29px;top:600px;width:11px;height:11px;"></div><div class="d" style="left:44.5px;top:595px;width:21px;height:21px;">R</div><div style="left:258px;top:594px;width:8px;height:23px;background:#5e5e5e;border-radius:2px"></div><div style="left:258.5px;top:602px;width:7px;height:15px;background:#f0b070;"></div><div style="left:258.5px;top:602px;width:7px;height:5px;background:#ff9428;"></div><div style="left:273px;top:590px;width:549px;height:31px;background:#2cccbb;"></div><div style="left:273px;top:614.4px;width:549px;height:0.8px;background:#333;"></div><svg style="position:absolute;left:273px;top:609px" width="549" height="11.5"><use href="#wA" width="549" height="11.5" fill="#c6f3ed"/></svg><div class="t" style="top:592.8px;font-size:13px;line-height:17px;color:#141414;letter-spacing:0.1px;left:276.5px;">record mic 011 (1)</div><div class="t" style="top:592.8px;font-size:13px;line-height:17px;color:#141414;left:658px;">r</div><div class="t" style="top:592.8px;font-size:13px;line-height:17px;color:#141414;letter-spacing:0.1px;left:675px;">record mic 010 (1</div><div class="t" style="top:592.8px;font-size:13px;line-height:17px;color:#141414;letter-spacing:-0.2px;left:786px;">Earth</div><div style="left:6px;top:624.5px;width:267px;height:35px;background:#8c8c8c;"></div><div style="left:8px;top:629px;width:7px;height:24px;background:#2cccbb;border-radius:3px"></div><div class="b" style="left:23px;top:629.5px;width:30px;height:22px;"><b>13</b></div><div class="d" style="left:53.5px;top:629.5px;width:12.5px;height:22px;">C</div><div class="b n" style="left:73px;top:629.5px;width:62px;height:22px;">Stereo</div><div class="b" style="left:141px;top:629.5px;width:22px;height:22px;"><i class="g"></i></div><div class="b" style="left:170px;top:629.5px;width:22px;height:22px;"><b>O</b></div><div class="b" style="left:199px;top:629.5px;width:22px;height:22px;"><b>M</b></div><div class="b" style="left:228px;top:629.5px;width:22px;height:22px;"><b>S</b></div><div style="left:258px;top:629px;width:8px;height:23px;background:#5e5e5e;border-radius:2px"></div><div style="left:258.5px;top:641px;width:7px;height:11px;background:#f0b070;"></div><div style="left:273px;top:625px;width:1079px;height:31px;background:#2cccbb;"></div><div style="left:273px;top:649.4px;width:1079px;height:0.8px;background:#333;"></div><svg style="position:absolute;left:273px;top:644px" width="1079" height="11.5"><use href="#wB" width="1079" height="11.5" fill="#c6f3ed"/></svg><div class="t" style="top:627.8px;font-size:13px;line-height:17px;color:#141414;letter-spacing:-0.1px;left:276.4px;">Earth Moon Sun 03-19-09+03-09-09_5.1 (2)</div><div style="left:673px;top:625px;width:1.3px;height:31px;background:#2a2a2a;"></div><div style="left:677.5px;top:625px;width:1.3px;height:31px;background:#2a2a2a;"></div><div style="left:631px;top:627.3px;width:37px;height:18px;overflow:hidden"><span class="ct" style="letter-spacing:0.6px">record</span></div><div style="left:692px;top:627.3px;width:28.5px;height:18px;overflow:hidden"><span class="ct" style="letter-spacing:0.6px">record</span></div><div class="t" style="top:627.8px;font-size:13px;line-height:17px;color:#141414;left:745px;">r</div><div class="t" style="top:627.8px;font-size:13px;line-height:17px;color:#141414;letter-spacing:0.1px;left:770px;">record mic 011 (2)</div><div class="t" style="top:627.8px;font-size:13px;line-height:17px;color:#141414;left:1229.3px;">r</div><div class="t" style="top:627.8px;font-size:13px;line-height:17px;color:#141414;letter-spacing:0.1px;left:1245px;">record mic 010 (2</div><div style="left:6px;top:659.5px;width:267px;height:35px;background:#8c8c8c;"></div><div style="left:8px;top:664px;width:7px;height:24px;background:#8c8c8c;border-radius:3px"></div><div class="b" style="left:23px;top:664.5px;width:30px;height:22px;"><b>14</b></div><div class="d" style="left:53.5px;top:664.5px;width:12.5px;height:22px;">L</div><div class="b n" style="left:73px;top:664.5px;width:62px;height:22px;">Stereo</div><div class="b" style="left:141px;top:664.5px;width:22px;height:22px;"><i class="g"></i></div><div class="b" style="left:170px;top:664.5px;width:22px;height:22px;"><b>O</b></div><div class="b" style="left:199px;top:664.5px;width:22px;height:22px;"><b>M</b></div><div class="b" style="left:228px;top:664.5px;width:22px;height:22px;"><b>S</b></div><div style="left:258px;top:664px;width:8px;height:23px;background:#5e5e5e;border-radius:2px"></div><div style="left:258.5px;top:679px;width:7px;height:8px;background:#f0b070;"></div><div style="left:273px;top:660px;width:549px;height:31px;background:#7a7a7a;"></div><div style="left:273px;top:684.4px;width:549px;height:0.8px;background:#333;"></div><svg style="position:absolute;left:273px;top:679px" width="549" height="11.5"><use href="#wA" width="549" height="11.5" fill="#dedede"/></svg><div class="t" style="top:662.8px;font-size:13px;line-height:17px;color:#141414;letter-spacing:0.1px;left:276.5px;">record mic 011 (1)</div><div class="t" style="top:662.8px;font-size:13px;line-height:17px;color:#141414;left:658px;">r</div><div class="t" style="top:662.8px;font-size:13px;line-height:17px;color:#141414;letter-spacing:0.1px;left:675px;">record mic 010 (1</div><div class="t" style="top:662.8px;font-size:13px;line-height:17px;color:#141414;letter-spacing:-0.2px;left:786px;">Earth</div><div style="left:6px;top:694.5px;width:267px;height:35px;background:#8c8c8c;"></div><div style="left:8px;top:699px;width:7px;height:24px;background:#8c8c8c;border-radius:3px"></div><div class="pl" style="left:29px;top:705px;width:11px;height:11px;"></div><div class="d" style="left:44.5px;top:700px;width:21px;height:21px;">R</div><div style="left:258px;top:699px;width:8px;height:23px;background:#5e5e5e;border-radius:2px"></div><div style="left:258.5px;top:711px;width:7px;height:11px;background:#f0b070;"></div><div style="left:273px;top:695px;width:1079px;height:31px;background:#7a7a7a;"></div><div style="left:273px;top:719.4px;width:1079px;height:0.8px;background:#333;"></div><svg style="position:absolute;left:273px;top:714px" width="1079" height="11.5"><use href="#wB" width="1079" height="11.5" fill="#dedede"/></svg><div class="t" style="top:697.8px;font-size:13px;line-height:17px;color:#141414;letter-spacing:-0.1px;left:276.4px;">Earth Moon Sun 03-19-09+03-09-09_5.1 (2)</div><div style="left:673px;top:695px;width:1.3px;height:31px;background:#2a2a2a;"></div><div style="left:677.5px;top:695px;width:1.3px;height:31px;background:#2a2a2a;"></div><div style="left:631px;top:697.3px;width:37px;height:18px;overflow:hidden"><span class="ct" style="letter-spacing:0.6px">record</span></div><div style="left:692px;top:697.3px;width:28.5px;height:18px;overflow:hidden"><span class="ct" style="letter-spacing:0.6px">record</span></div><div class="t" style="top:697.8px;font-size:13px;line-height:17px;color:#141414;left:745px;">r</div><div class="t" style="top:697.8px;font-size:13px;line-height:17px;color:#141414;letter-spacing:0.1px;left:770px;">record mic 011 (2)</div><div class="t" style="top:697.8px;font-size:13px;line-height:17px;color:#141414;left:1229.3px;">r</div><div class="t" style="top:697.8px;font-size:13px;line-height:17px;color:#141414;letter-spacing:0.1px;left:1245px;">record mic 010 (2</div><div style="left:6px;top:729.5px;width:267px;height:35px;background:#525252;"></div><div style="left:8px;top:734px;width:7px;height:24px;background:#8c8c8c;border-radius:3px"></div><div class="b" style="left:23px;top:734.5px;width:30px;height:22px;"><b>15</b></div><div class="d" style="left:53.5px;top:734.5px;width:12.5px;height:22px;">L</div><div class="b n" style="left:73px;top:734.5px;width:62px;height:22px;">Stereo</div><div class="b" style="left:141px;top:734.5px;width:22px;height:22px;"><i class="g"></i></div><div class="b" style="left:170px;top:734.5px;width:22px;height:22px;"><b>O</b></div><div class="b" style="left:199px;top:734.5px;width:22px;height:22px;"><b>M</b></div><div class="b" style="left:228px;top:734.5px;width:22px;height:22px;"><b>S</b></div><div style="left:258px;top:734px;width:8px;height:23px;background:#5e5e5e;border-radius:2px"></div><div style="left:258.5px;top:749px;width:7px;height:8px;background:#f0b070;"></div><div style="left:273px;top:730px;width:549px;height:31px;background:#7a7a7a;"></div><div style="left:273px;top:754.4px;width:549px;height:0.8px;background:#333;"></div><svg style="position:absolute;left:273px;top:749px" width="549" height="11.5"><use href="#wA" width="549" height="11.5" fill="#dedede"/></svg><div class="t" style="top:732.8px;font-size:13px;line-height:17px;color:#141414;letter-spacing:0.1px;left:276.5px;">record mic 011 (1)</div><div class="t" style="top:732.8px;font-size:13px;line-height:17px;color:#141414;left:658px;">r</div><div class="t" style="top:732.8px;font-size:13px;line-height:17px;color:#141414;letter-spacing:0.1px;left:675px;">record mic 010 (1</div><div class="t" style="top:732.8px;font-size:13px;line-height:17px;color:#141414;letter-spacing:-0.2px;left:786px;">Earth</div><div style="left:6px;top:764.5px;width:267px;height:35px;background:#707070;"></div><div style="left:8px;top:769px;width:7px;height:24px;background:#8c8c8c;border-radius:3px"></div><div class="pl" style="left:29px;top:775px;width:11px;height:11px;"></div><div class="d" style="left:44.5px;top:770px;width:21px;height:21px;">R</div><div style="left:258px;top:769px;width:8px;height:23px;background:#5e5e5e;border-radius:2px"></div><div style="left:258.5px;top:782px;width:7px;height:10px;background:#f0b070;"></div><div style="left:273px;top:765px;width:1079px;height:31px;background:#7a7a7a;"></div><div style="left:273px;top:789.4px;width:1079px;height:0.8px;background:#333;"></div><svg style="position:absolute;left:273px;top:784px" width="1079" height="11.5"><use href="#wB" width="1079" height="11.5" fill="#dedede"/></svg><div class="t" style="top:767.8px;font-size:13px;line-height:17px;color:#141414;letter-spacing:-0.1px;left:276.4px;">Earth Moon Sun 03-19-09+03-09-09_5.1 (2)</div><div style="left:673px;top:765px;width:1.3px;height:31px;background:#2a2a2a;"></div><div style="left:677.5px;top:765px;width:1.3px;height:31px;background:#2a2a2a;"></div><div style="left:631px;top:767.3px;width:37px;height:18px;overflow:hidden"><span class="ct" style="letter-spacing:0.6px">record</span></div><div style="left:692px;top:767.3px;width:28.5px;height:18px;overflow:hidden"><span class="ct" style="letter-spacing:0.6px">record</span></div><div class="t" style="top:767.8px;font-size:13px;line-height:17px;color:#141414;left:745px;">r</div><div class="t" style="top:767.8px;font-size:13px;line-height:17px;color:#141414;letter-spacing:0.1px;left:770px;">record mic 011 (2)</div><div class="t" style="top:767.8px;font-size:13px;line-height:17px;color:#141414;left:1229.3px;">r</div><div class="t" style="top:767.8px;font-size:13px;line-height:17px;color:#141414;letter-spacing:0.1px;left:1245px;">record mic 010 (2</div><div style="left:6px;top:799.5px;width:267px;height:35px;background:#8c8c8c;"></div><div style="left:8px;top:804px;width:7px;height:24px;background:#8c8c8c;border-radius:3px"></div><div class="b" style="left:23px;top:804.5px;width:30px;height:22px;"><b>16</b></div><div class="d" style="left:53.5px;top:804.5px;width:12.5px;height:22px;">L</div><div class="b n" style="left:73px;top:804.5px;width:62px;height:22px;">bed 5.1</div><div class="b" style="left:141px;top:804.5px;width:22px;height:22px;"><i class="g"></i></div><div class="b" style="left:170px;top:804.5px;width:22px;height:22px;"><b>O</b></div><div class="b" style="left:199px;top:804.5px;width:22px;height:22px;"><b>M</b></div><div class="b" style="left:228px;top:804.5px;width:22px;height:22px;"><b>S</b></div><div style="left:258px;top:804px;width:8px;height:23px;background:#5e5e5e;border-radius:2px"></div><div style="left:258.5px;top:819px;width:7px;height:8px;background:#f0b070;"></div><div style="left:273px;top:800px;width:549px;height:31px;background:#7a7a7a;"></div><div style="left:273px;top:824.4px;width:549px;height:0.8px;background:#333;"></div><svg style="position:absolute;left:273px;top:819px" width="549" height="11.5"><use href="#wA" width="549" height="11.5" fill="#dedede"/></svg><div class="t" style="top:802.8px;font-size:13px;line-height:17px;color:#141414;letter-spacing:0.1px;left:276.5px;">record mic 011 (1)</div><div class="t" style="top:802.8px;font-size:13px;line-height:17px;color:#141414;left:658px;">r</div><div class="t" style="top:802.8px;font-size:13px;line-height:17px;color:#141414;letter-spacing:0.1px;left:675px;">record mic 010 (1</div><div class="t" style="top:802.8px;font-size:13px;line-height:17px;color:#141414;letter-spacing:-0.2px;left:786px;">Earth</div><div style="left:6px;top:834.5px;width:267px;height:35px;background:#8c8c8c;"></div><div style="left:8px;top:839px;width:7px;height:24px;background:#8c8c8c;border-radius:3px"></div><div class="pl" style="left:29px;top:845px;width:11px;height:11px;"></div><div class="d" style="left:44.5px;top:840px;width:21px;height:21px;">R</div><div style="left:258px;top:839px;width:8px;height:23px;background:#5e5e5e;border-radius:2px"></div><div style="left:258.5px;top:851px;width:7px;height:11px;background:#f0b070;"></div><div style="left:273px;top:835px;width:1079px;height:31px;background:#7a7a7a;"></div><div style="left:273px;top:859.4px;width:1079px;height:0.8px;background:#333;"></div><svg style="position:absolute;left:273px;top:854px" width="1079" height="11.5"><use href="#wB" width="1079" height="11.5" fill="#dedede"/></svg><div class="t" style="top:837.8px;font-size:13px;line-height:17px;color:#141414;letter-spacing:-0.1px;left:276.4px;">Earth Moon Sun 03-19-09+03-09-09_5.1 (2)</div><div style="left:673px;top:835px;width:1.3px;height:31px;background:#2a2a2a;"></div><div style="left:677.5px;top:835px;width:1.3px;height:31px;background:#2a2a2a;"></div><div style="left:631px;top:837.3px;width:37px;height:18px;overflow:hidden"><span class="ct" style="letter-spacing:0.6px">record</span></div><div style="left:692px;top:837.3px;width:28.5px;height:18px;overflow:hidden"><span class="ct" style="letter-spacing:0.6px">record</span></div><div class="t" style="top:837.8px;font-size:13px;line-height:17px;color:#141414;left:745px;">r</div><div class="t" style="top:837.8px;font-size:13px;line-height:17px;color:#141414;letter-spacing:0.1px;left:770px;">record mic 011 (2)</div><div class="t" style="top:837.8px;font-size:13px;line-height:17px;color:#141414;left:1229.3px;">r</div><div class="t" style="top:837.8px;font-size:13px;line-height:17px;color:#141414;letter-spacing:0.1px;left:1245px;">record mic 010 (2</div><div style="left:6px;top:869.5px;width:267px;height:35px;background:#8c8c8c;"></div><div style="left:8px;top:874px;width:7px;height:24px;background:#8c8c8c;border-radius:3px"></div><div class="b" style="left:23px;top:874.5px;width:30px;height:22px;"><b>17</b></div><div class="d" style="left:53.5px;top:874.5px;width:12.5px;height:22px;">L</div><div class="b n" style="left:73px;top:874.5px;width:62px;height:22px;">bed 5.1</div><div class="b" style="left:141px;top:874.5px;width:22px;height:22px;"><i class="g"></i></div><div class="b" style="left:170px;top:874.5px;width:22px;height:22px;"><b>O</b></div><div class="b" style="left:199px;top:874.5px;width:22px;height:22px;"><b>M</b></div><div class="b" style="left:228px;top:874.5px;width:22px;height:22px;"><b>S</b></div><div style="left:258px;top:874px;width:8px;height:23px;background:#5e5e5e;border-radius:2px"></div><div style="left:258.5px;top:889px;width:7px;height:8px;background:#f0b070;"></div><div style="left:273px;top:870px;width:549px;height:31px;background:#7a7a7a;"></div><div style="left:273px;top:894.4px;width:549px;height:0.8px;background:#333;"></div><svg style="position:absolute;left:273px;top:889px" width="549" height="11.5"><use href="#wE1" width="549" height="11.5" fill="#dedede"/></svg><div class="t" style="top:872.8px;font-size:13px;line-height:17px;color:#141414;letter-spacing:-0.1px;left:276.4px;">Earth Moon Sun 03-19-09+03-09-09_5.1 (1)</div><div style="left:6px;top:904.5px;width:267px;height:35px;background:#8c8c8c;"></div><div style="left:8px;top:909px;width:7px;height:24px;background:#8c8c8c;border-radius:3px"></div><div class="pl" style="left:29px;top:915px;width:11px;height:11px;"></div><div class="d" style="left:44.5px;top:910px;width:21px;height:21px;">R</div><div style="left:258px;top:909px;width:8px;height:23px;background:#5e5e5e;border-radius:2px"></div><div style="left:258.5px;top:924px;width:7px;height:8px;background:#f0b070;"></div><div style="left:273px;top:905px;width:549px;height:31px;background:#7a7a7a;"></div><div style="left:273px;top:929.4px;width:549px;height:0.8px;background:#333;"></div><svg style="position:absolute;left:273px;top:924px" width="549" height="11.5"><use href="#wE2" width="549" height="11.5" fill="#dedede"/></svg><div class="t" style="top:907.8px;font-size:13px;line-height:17px;color:#141414;letter-spacing:-0.1px;left:276.4px;">Earth Moon Sun 03-19-09+03-09-09_5.1 (2)</div><div style="left:6px;top:939.5px;width:267px;height:35px;background:#8c8c8c;"></div><div style="left:8px;top:944px;width:7px;height:24px;background:#8c8c8c;border-radius:3px"></div><div class="b" style="left:23px;top:944.5px;width:30px;height:22px;"><b>18</b></div><div class="d" style="left:53.5px;top:944.5px;width:12.5px;height:22px;">L</div><div class="b n" style="left:73px;top:944.5px;width:62px;height:22px;">bed 5.1</div><div class="b" style="left:141px;top:944.5px;width:22px;height:22px;"><i class="g"></i></div><div class="b" style="left:170px;top:944.5px;width:22px;height:22px;"><b>O</b></div><div class="b" style="left:199px;top:944.5px;width:22px;height:22px;"><b>M</b></div><div class="b" style="left:228px;top:944.5px;width:22px;height:22px;"><b>S</b></div><div style="left:258px;top:944px;width:8px;height:23px;background:#5e5e5e;border-radius:2px"></div><div style="left:258.5px;top:958px;width:7px;height:9px;background:#f0b070;"></div><div style="left:273px;top:940px;width:549px;height:31px;background:#7a7a7a;"></div><div style="left:273px;top:964.4px;width:549px;height:0.8px;background:#333;"></div><svg style="position:absolute;left:273px;top:959px" width="549" height="11.5"><use href="#wE3" width="549" height="11.5" fill="#dedede"/></svg><div class="t" style="top:942.8px;font-size:13px;line-height:17px;color:#141414;letter-spacing:-0.1px;left:276.4px;">Earth Moon Sun 03-19-09+03-09-09_5.1 (3)</div><div style="left:6px;top:974.5px;width:267px;height:35px;background:#8c8c8c;"></div><div style="left:8px;top:979px;width:7px;height:24px;background:#8c8c8c;border-radius:3px"></div><div class="pl" style="left:29px;top:985px;width:11px;height:11px;"></div><div class="d" style="left:44.5px;top:980px;width:21px;height:21px;">C</div><div style="left:258px;top:979px;width:8px;height:23px;background:#5e5e5e;border-radius:2px"></div><div style="left:258.5px;top:999px;width:7px;height:3px;background:#f0b070;"></div><div style="left:273px;top:975px;width:549px;height:31px;background:#7a7a7a;"></div><div style="left:273px;top:999.4px;width:549px;height:0.8px;background:#333;"></div><svg style="position:absolute;left:273px;top:994px" width="549" height="11.5"><use href="#wE4" width="549" height="11.5" fill="#dedede"/></svg><div class="t" style="top:977.8px;font-size:13px;line-height:17px;color:#141414;letter-spacing:-0.1px;left:276.4px;">Earth Moon Sun 03-19-09+03-09-09_5.1 (4)</div><div style="left:6px;top:1009.5px;width:267px;height:35px;background:#8c8c8c;"></div><div style="left:8px;top:1014px;width:7px;height:24px;background:#8c8c8c;border-radius:3px"></div><div class="pl" style="left:29px;top:1020px;width:11px;height:11px;"></div><div class="d" style="left:44.5px;top:1015px;width:21px;height:21px;">R</div><div style="left:258px;top:1014px;width:8px;height:23px;background:#5e5e5e;border-radius:2px"></div><div style="left:258.5px;top:1030px;width:7px;height:7px;background:#f0b070;"></div><div style="left:273px;top:1010px;width:549px;height:31px;background:#7a7a7a;"></div><div style="left:273px;top:1034.3px;width:549px;height:0.8px;background:#333;"></div><svg style="position:absolute;left:273px;top:1029px" width="549" height="11.5"><use href="#wE5" width="549" height="11.5" fill="#dedede"/></svg><div class="t" style="top:1012.8px;font-size:13px;line-height:17px;color:#141414;letter-spacing:-0.1px;left:276.4px;">Earth Moon Sun 03-19-09+03-09-09_5.1 (5)</div><div style="left:6px;top:1044.5px;width:267px;height:35px;background:#8c8c8c;"></div><div style="left:8px;top:1049px;width:7px;height:24px;background:#8c8c8c;border-radius:3px"></div><div class="pl" style="left:29px;top:1055px;width:11px;height:11px;"></div><div class="d" style="left:44.5px;top:1050px;width:21px;height:21px;">Lrs</div><div style="left:258px;top:1049px;width:8px;height:23px;background:#5e5e5e;border-radius:2px"></div><div style="left:258.5px;top:1065px;width:7px;height:7px;background:#f0b070;"></div><div style="left:273px;top:1045px;width:549px;height:31px;background:#7a7a7a;"></div><div style="left:273px;top:1069.3px;width:549px;height:0.8px;background:#333;"></div><svg style="position:absolute;left:273px;top:1064px" width="549" height="11.5"><use href="#wE6" width="549" height="11.5" fill="#dedede"/></svg><div class="t" style="top:1047.8px;font-size:13px;line-height:17px;color:#141414;letter-spacing:-0.1px;left:276.4px;">Earth Moon Sun 03-19-09+03-09-09_5.1 (6)</div><div style="left:6px;top:1079.5px;width:267px;height:35px;background:#8c8c8c;"></div><div style="left:8px;top:1084px;width:7px;height:24px;background:#8c8c8c;border-radius:3px"></div><div class="pl" style="left:29px;top:1090px;width:11px;height:11px;"></div><div class="d" style="left:44.5px;top:1085px;width:21px;height:21px;">Rrs</div><div style="left:258px;top:1084px;width:8px;height:23px;background:#5e5e5e;border-radius:2px"></div><div style="left:6px;top:1114.5px;width:267px;height:35px;background:#8c8c8c;"></div><div style="left:8px;top:1119px;width:7px;height:24px;background:#8c8c8c;border-radius:3px"></div><div class="pl" style="left:29px;top:1125px;width:11px;height:11px;"></div><div class="d" style="left:44.5px;top:1120px;width:21px;height:21px;">LFE</div><div style="left:258px;top:1119px;width:8px;height:23px;background:#5e5e5e;border-radius:2px"></div><div style="left:6px;top:1149.5px;width:267px;height:35px;background:#8c8c8c;"></div><div style="left:8px;top:1154px;width:7px;height:24px;background:#ff8000;border-radius:3px"></div><div class="b" style="left:23px;top:1154.5px;width:30px;height:22px;"><b>19</b></div><div class="d" style="left:53.5px;top:1154.5px;width:12.5px;height:22px;">L</div><div class="b n" style="left:73px;top:1154.5px;width:62px;height:22px;">Stereo</div><div class="b" style="left:141px;top:1154.5px;width:22px;height:22px;"><i class="g"></i></div><div class="b" style="left:170px;top:1154.5px;width:22px;height:22px;"><b>O</b></div><div class="b" style="left:199px;top:1154.5px;width:22px;height:22px;"><b>M</b></div><div class="b" style="left:228px;top:1154.5px;width:22px;height:22px;"><b>S</b></div><div style="left:258px;top:1154px;width:8px;height:23px;background:#5e5e5e;border-radius:2px"></div><div style="left:258.5px;top:1166px;width:7px;height:11px;background:#f0b070;"></div><div style="left:273px;top:1150px;width:1079px;height:31px;background:#ff8000;"></div><div style="left:273px;top:1174.3px;width:1079px;height:0.8px;background:#333;"></div><svg style="position:absolute;left:273px;top:1169px" width="1079" height="11.5"><use href="#wB" width="1079" height="11.5" fill="#ffdfc0"/></svg><div class="t" style="top:1152.8px;font-size:13px;line-height:17px;color:#141414;letter-spacing:-0.1px;left:276.4px;">Earth Moon Sun 03-19-09+03-09-09_5.1 (2)</div><div style="left:673px;top:1150px;width:1.3px;height:31px;background:#2a2a2a;"></div><div style="left:677.5px;top:1150px;width:1.3px;height:31px;background:#2a2a2a;"></div><div style="left:631px;top:1152.3px;width:37px;height:18px;overflow:hidden"><span class="ct" style="letter-spacing:0.6px">record</span></div><div style="left:692px;top:1152.3px;width:28.5px;height:18px;overflow:hidden"><span class="ct" style="letter-spacing:0.6px">record</span></div><div class="t" style="top:1152.8px;font-size:13px;line-height:17px;color:#141414;left:745px;">r</div><div class="t" style="top:1152.8px;font-size:13px;line-height:17px;color:#141414;letter-spacing:0.1px;left:770px;">record mic 011 (2)</div><div class="t" style="top:1152.8px;font-size:13px;line-height:17px;color:#141414;left:1229.3px;">r</div><div class="t" style="top:1152.8px;font-size:13px;line-height:17px;color:#141414;letter-spacing:0.1px;left:1245px;">record mic 010 (2</div><div style="left:6px;top:1184.5px;width:267px;height:24px;background:#8c8c8c;"></div><div style="left:8px;top:1189px;width:7px;height:19px;background:#ff8000;border-radius:3px"></div><div class="pl" style="left:29px;top:1195px;width:11px;height:11px;"></div><div class="d" style="left:44.5px;top:1190px;width:21px;height:21px;">R</div><div style="left:258px;top:1189px;width:8px;height:18px;background:#5e5e5e;border-radius:2px"></div><div style="left:258.5px;top:1199px;width:7px;height:8px;background:#f0b070;"></div><div style="left:273px;top:1185px;width:549px;height:24px;background:#ff8000;"></div><div style="left:273px;top:1209.3px;width:549px;height:0.8px;background:#333;"></div><svg style="position:absolute;left:273px;top:1204px" width="549" height="11.5"><use href="#wA" width="549" height="11.5" fill="#ffdfc0"/></svg><div class="t" style="top:1187.8px;font-size:13px;line-height:17px;color:#141414;letter-spacing:0.1px;left:276.5px;">record mic 011 (1)</div><div class="t" style="top:1187.8px;font-size:13px;line-height:17px;color:#141414;left:658px;">r</div><div class="t" style="top:1187.8px;font-size:13px;line-height:17px;color:#141414;letter-spacing:0.1px;left:675px;">record mic 010 (1</div><div class="t" style="top:1187.8px;font-size:13px;line-height:17px;color:#141414;letter-spacing:-0.2px;left:786px;">Earth</div><div style="left:6px;top:153px;width:2762px;height:2px;background:#464646;"></div><div style="left:6px;top:188px;width:2762px;height:2px;background:#464646;"></div><div style="left:6px;top:223px;width:2762px;height:2px;background:#464646;"></div><div style="left:6px;top:258px;width:2762px;height:2px;background:#464646;"></div><div style="left:6px;top:293px;width:2762px;height:2px;background:#464646;"></div><div style="left:6px;top:328px;width:2762px;height:2px;background:#464646;"></div><div style="left:6px;top:363px;width:2762px;height:2px;background:#464646;"></div><div style="left:6px;top:398px;width:2762px;height:2px;background:#464646;"></div><div style="left:6px;top:433px;width:2762px;height:2px;background:#464646;"></div><div style="left:6px;top:483px;width:2762px;height:2px;background:#464646;"></div><div style="left:6px;top:518px;width:2762px;height:2px;background:#464646;"></div><div style="left:6px;top:553px;width:2762px;height:2px;background:#464646;"></div><div style="left:6px;top:623px;width:2762px;height:2px;background:#464646;"></div><div style="left:6px;top:658px;width:2762px;height:2px;background:#464646;"></div><div style="left:6px;top:728px;width:2762px;height:2px;background:#464646;"></div><div style="left:6px;top:798px;width:2762px;height:2px;background:#464646;"></div><div style="left:6px;top:868px;width:2762px;height:2px;background:#464646;"></div><div style="left:6px;top:938px;width:2762px;height:2px;background:#464646;"></div><div style="left:6px;top:1148px;width:2762px;height:2px;background:#464646;"></div><div style="left:6px;top:153px;width:2762px;height:2px;background:#464646;"></div><div style="left:2090.2px;top:155.5px;width:24.8px;height:31px;background:#6a2bc9;border-left:1px solid #222"></div><div class="yl" style="left:2092.4px;top:156.7px;width:20.6px;height:16.3px;background:#e6d200;">AN</div><div class="ys" style="left:2093px;top:172.5px;width:22px;height:14px;">&lt;Of</div><div style="left:2090.2px;top:190.5px;width:24.8px;height:31px;background:#6a2bc9;border-left:1px solid #222"></div><div class="yl" style="left:2092.4px;top:191.7px;width:20.6px;height:16.3px;background:#e6d200;">AN</div><div class="ys" style="left:2093px;top:207.5px;width:22px;height:14px;">&lt;Of</div><div style="left:2090.2px;top:225.5px;width:24.8px;height:31px;background:#6a2bc9;border-left:1px solid #222"></div><div class="yl" style="left:2092.4px;top:226.7px;width:20.6px;height:16.3px;background:#e6d200;">AN</div><div class="ys" style="left:2093px;top:242.5px;width:22px;height:14px;">&lt;Of</div><div style="left:2090.2px;top:260.5px;width:24.8px;height:31px;background:#6a2bc9;border-left:1px solid #222"></div><div class="yl" style="left:2092.4px;top:261.7px;width:20.6px;height:16.3px;background:#e6d200;">AN</div><div class="ys" style="left:2093px;top:277.5px;width:22px;height:14px;">&lt;Of</div><div style="left:2090.2px;top:295.5px;width:24.8px;height:31px;background:#6a2bc9;border-left:1px solid #222"></div><div class="yl" style="left:2092.4px;top:296.7px;width:20.6px;height:16.3px;background:#e6d200;">AN</div><div class="ys" style="left:2093px;top:312.5px;width:22px;height:14px;">&lt;Of</div><div style="left:2090.2px;top:330.5px;width:24.8px;height:31px;background:#6a2bc9;border-left:1px solid #222"></div><div class="yl" style="left:2092.4px;top:331.7px;width:20.6px;height:16.3px;background:#e6d200;">AN</div><div class="ys" style="left:2093px;top:347.5px;width:22px;height:14px;">&lt;Of</div><div style="left:2133.9px;top:155px;width:13px;height:31px;background:#6a2bc9;"></div><div style="left:2158.9px;top:155px;width:12.1px;height:31px;background:#6a2bc9;"></div><div style="left:2188.9px;top:155px;width:8.1px;height:31px;background:#6a2bc9;"></div><div style="left:2200px;top:155px;width:7.1px;height:31px;background:#6a2bc9;"></div><div style="left:2214.9px;top:155px;width:8.1px;height:31px;background:#6a2bc9;"></div><div style="left:2225px;top:155px;width:11px;height:31px;background:#6a2bc9;"></div><div style="left:2238px;top:155px;width:7px;height:31px;background:#6a2bc9;"></div><div style="left:2269.1px;top:155px;width:14.9px;height:31px;background:#6a2bc9;"></div><div style="left:2285.1px;top:155px;width:13.4px;height:31px;background:#6a2bc9;"></div><div style="left:2303.2px;top:155px;width:3.4px;height:31px;background:#6a2bc9;"></div><div style="left:2313px;top:155px;width:5.1px;height:31px;background:#6a2bc9;"></div><div style="left:2320.9px;top:155px;width:17.3px;height:31px;background:#6a2bc9;"></div><div style="left:2356.9px;top:155px;width:23.2px;height:31px;background:#6a2bc9;"></div><div style="left:2414.9px;top:155px;width:13.4px;height:31px;background:#6a2bc9;"></div><div style="left:2420px;top:155px;width:8.1px;height:31px;background:#6a2bc9;"></div><div style="left:2432.8px;top:155px;width:4.3px;height:31px;background:#6a2bc9;"></div><div style="left:2442px;top:155px;width:10px;height:31px;background:#6a2bc9;"></div><div style="left:2464.1px;top:155px;width:10.9px;height:31px;background:#6a2bc9;"></div><div style="left:2485px;top:155px;width:4.1px;height:31px;background:#6a2bc9;"></div><div style="left:2493.1px;top:155px;width:1.9px;height:31px;background:#6a2bc9;"></div><div style="left:2499.9px;top:155px;width:7.1px;height:31px;background:#6a2bc9;"></div><div style="left:2511.9px;top:155px;width:5.1px;height:31px;background:#6a2bc9;"></div><div style="left:2524.9px;top:155px;width:11.1px;height:31px;background:#6a2bc9;"></div><div style="left:2539px;top:155px;width:14.9px;height:31px;background:#6a2bc9;"></div><div class="t" style="top:173.5px;font-size:9px;line-height:12px;color:#0a0a0a;left:2542.8px;max-width:11.1px;overflow:hidden">&lt;</div><div style="left:2569.9px;top:155px;width:5.1px;height:31px;background:#6a2bc9;"></div><div style="left:2576px;top:155px;width:8.1px;height:31px;background:#6a2bc9;"></div><div style="left:2585px;top:155px;width:6.8px;height:31px;background:#6a2bc9;"></div><div style="left:2604px;top:155px;width:4.9px;height:31px;background:#6a2bc9;"></div><div style="left:2614px;top:155px;width:12.8px;height:31px;background:#6a2bc9;"></div><div class="t" style="top:173.5px;font-size:9px;line-height:12px;color:#0a0a0a;left:2617.4px;max-width:9.4px;overflow:hidden">&lt;</div><div style="left:2632.7px;top:155px;width:1.3px;height:31px;background:#6a2bc9;"></div><div style="left:2635.9px;top:155px;width:3px;height:31px;background:#6a2bc9;"></div><div style="left:2642.1px;top:155px;width:8.8px;height:31px;background:#6a2bc9;"></div><div style="left:2663px;top:155px;width:14.9px;height:31px;background:#6a2bc9;"></div><div style="left:2696.1px;top:155px;width:15.7px;height:31px;background:#6a2bc9;"></div><div style="left:2727px;top:155px;width:8.9px;height:31px;background:#6a2bc9;"></div><div style="left:2745.1px;top:155px;width:23.2px;height:31px;background:#6a2bc9;"></div><div class="t" style="top:173.5px;font-size:9px;line-height:12px;color:#0a0a0a;left:2759.1px;max-width:9.2px;overflow:hidden">&lt;</div><div style="left:2293.8px;top:155.5px;width:1px;height:31px;background:#1c1050;"></div><div style="left:2294.9px;top:155.5px;width:1px;height:31px;background:#1c1050;"></div><div style="left:2297.4px;top:155.5px;width:1px;height:31px;background:#1c1050;"></div><div style="left:2305.5px;top:155.5px;width:1px;height:31px;background:#1c1050;"></div><div style="left:2362.7px;top:155.5px;width:1px;height:31px;background:#1c1050;"></div><div style="left:2425.3px;top:155.5px;width:1px;height:31px;background:#1c1050;"></div><div style="left:2425.3px;top:155.5px;width:1px;height:31px;background:#1c1050;"></div><div style="left:2464.3px;top:155.5px;width:1px;height:31px;background:#1c1050;"></div><div style="left:2133.9px;top:190px;width:13px;height:31px;background:#6a2bc9;"></div><div style="left:2158.9px;top:190px;width:12.1px;height:31px;background:#6a2bc9;"></div><div style="left:2188.9px;top:190px;width:8.1px;height:31px;background:#6a2bc9;"></div><div style="left:2200px;top:190px;width:7.1px;height:31px;background:#6a2bc9;"></div><div style="left:2214.9px;top:190px;width:8.1px;height:31px;background:#6a2bc9;"></div><div style="left:2225px;top:190px;width:11px;height:31px;background:#6a2bc9;"></div><div style="left:2313px;top:190px;width:5.1px;height:31px;background:#6a2bc9;"></div><div style="left:2320.9px;top:190px;width:17.3px;height:31px;background:#6a2bc9;"></div><div style="left:2356.9px;top:190px;width:23.2px;height:31px;background:#6a2bc9;"></div><div style="left:2432.8px;top:190px;width:4.3px;height:31px;background:#6a2bc9;"></div><div style="left:2464.1px;top:190px;width:10.9px;height:31px;background:#6a2bc9;"></div><div style="left:2485px;top:190px;width:4.1px;height:31px;background:#6a2bc9;"></div><div style="left:2493.1px;top:190px;width:1.9px;height:31px;background:#6a2bc9;"></div><div style="left:2499.9px;top:190px;width:7.1px;height:31px;background:#6a2bc9;"></div><div style="left:2511.9px;top:190px;width:5.1px;height:31px;background:#6a2bc9;"></div><div style="left:2539px;top:190px;width:14.9px;height:31px;background:#6a2bc9;"></div><div class="t" style="top:208.5px;font-size:9px;line-height:12px;color:#0a0a0a;left:2542.8px;max-width:11.1px;overflow:hidden">&lt;</div><div style="left:2569.9px;top:190px;width:5.1px;height:31px;background:#6a2bc9;"></div><div style="left:2576px;top:190px;width:8.1px;height:31px;background:#6a2bc9;"></div><div style="left:2585px;top:190px;width:6.8px;height:31px;background:#6a2bc9;"></div><div style="left:2604px;top:190px;width:4.9px;height:31px;background:#6a2bc9;"></div><div style="left:2614px;top:190px;width:12.8px;height:31px;background:#6a2bc9;"></div><div class="t" style="top:208.5px;font-size:9px;line-height:12px;color:#0a0a0a;left:2617.4px;max-width:9.4px;overflow:hidden">&lt;</div><div style="left:2632.7px;top:190px;width:1.3px;height:31px;background:#6a2bc9;"></div><div style="left:2635.9px;top:190px;width:3px;height:31px;background:#6a2bc9;"></div><div style="left:2642.1px;top:190px;width:8.8px;height:31px;background:#6a2bc9;"></div><div style="left:2663px;top:190px;width:14.9px;height:31px;background:#6a2bc9;"></div><div style="left:2696.1px;top:190px;width:15.7px;height:31px;background:#6a2bc9;"></div><div style="left:2727px;top:190px;width:8.9px;height:31px;background:#6a2bc9;"></div><div style="left:2745.1px;top:190px;width:23.2px;height:31px;background:#6a2bc9;"></div><div class="t" style="top:208.5px;font-size:9px;line-height:12px;color:#0a0a0a;left:2759.1px;max-width:9.2px;overflow:hidden">&lt;</div><div style="left:2362.7px;top:190.5px;width:1px;height:31px;background:#1c1050;"></div><div style="left:2464.3px;top:190.5px;width:1px;height:31px;background:#1c1050;"></div><div style="left:2379.1px;top:225px;width:3.8px;height:31px;background:#6a2bc9;"></div><div style="left:2489.1px;top:225px;width:3.8px;height:31px;background:#6a2bc9;"></div><div style="left:2494.8px;top:225px;width:1.1px;height:31px;background:#6a2bc9;"></div><div style="left:2507px;top:225px;width:3px;height:31px;background:#6a2bc9;"></div><div style="left:2517px;top:225px;width:7px;height:31px;background:#6a2bc9;"></div><div style="left:2533.8px;top:225px;width:5.2px;height:31px;background:#6a2bc9;"></div><div style="left:2379.1px;top:260px;width:3.8px;height:31px;background:#6a2bc9;"></div><div style="left:2489.1px;top:260px;width:3.8px;height:31px;background:#6a2bc9;"></div><div style="left:2494.8px;top:260px;width:1.1px;height:31px;background:#6a2bc9;"></div><div style="left:2507px;top:260px;width:3px;height:31px;background:#6a2bc9;"></div><div style="left:2517px;top:260px;width:7px;height:31px;background:#6a2bc9;"></div><div style="left:2533.8px;top:260px;width:5.2px;height:31px;background:#6a2bc9;"></div><div style="left:2496.1px;top:295px;width:3.8px;height:31px;background:#6a2bc9;"></div><div style="left:2510px;top:295px;width:1.9px;height:31px;background:#6a2bc9;"></div><div style="left:2523px;top:295px;width:3.8px;height:31px;background:#6a2bc9;"></div><div style="left:2496.1px;top:330px;width:3.8px;height:31px;background:#6a2bc9;"></div><div style="left:2510px;top:330px;width:1.9px;height:31px;background:#6a2bc9;"></div><div style="left:2523px;top:330px;width:3.8px;height:31px;background:#6a2bc9;"></div><div style="left:2115px;top:365px;width:6.7px;height:31px;background:#2cccbb;"></div><div style="left:2124.9px;top:365px;width:2.9px;height:31px;background:#2cccbb;"></div><div style="left:2131px;top:365px;width:11.9px;height:31px;background:#2cccbb;"></div><div class="t" style="top:383.5px;font-size:9px;line-height:12px;color:#0a0a0a;left:2134.1px;max-width:8.8px;overflow:hidden">&lt;</div><div style="left:2149.9px;top:365px;width:17.7px;height:31px;background:#2cccbb;"></div><div class="t" style="top:383.5px;font-size:9px;line-height:12px;color:#0a0a0a;left:2157.6px;max-width:10px;overflow:hidden">&lt;</div><div style="left:2172.3px;top:365px;width:1.7px;height:31px;background:#2cccbb;"></div><div style="left:2176px;top:365px;width:3px;height:31px;background:#2cccbb;"></div><div style="left:2183px;top:365px;width:16.9px;height:31px;background:#2cccbb;"></div><div class="yl" style="left:2185.1px;top:366.7px;width:11.3px;height:16.3px;background:#e6d200;">9</div><div class="ys" style="left:2185.6px;top:382.5px;width:13.3px;height:14px;">&lt;(</div><div style="left:2206.9px;top:365px;width:3.7px;height:31px;background:#2cccbb;"></div><div style="left:2217.3px;top:365px;width:3.5px;height:31px;background:#2cccbb;"></div><div style="left:2223.7px;top:365px;width:6.1px;height:31px;background:#2cccbb;"></div><div style="left:2238px;top:365px;width:4.6px;height:31px;background:#2cccbb;"></div><div style="left:2247.8px;top:365px;width:9.1px;height:31px;background:#2cccbb;"></div><div style="left:2264.7px;top:365px;width:5.2px;height:31px;background:#2cccbb;"></div><div style="left:2272.6px;top:365px;width:4px;height:31px;background:#2cccbb;"></div><div style="left:2283.9px;top:365px;width:9.9px;height:31px;background:#2cccbb;"></div><div class="t" style="top:383.5px;font-size:9px;line-height:12px;color:#0a0a0a;left:2286.4px;max-width:7.4px;overflow:hidden">&lt;</div><div style="left:2304.2px;top:365px;width:2.7px;height:31px;background:#2cccbb;"></div><div style="left:2317.9px;top:365px;width:2.9px;height:31px;background:#2cccbb;"></div><div style="left:2328.1px;top:365px;width:4.3px;height:31px;background:#2cccbb;"></div><div style="left:2335.1px;top:365px;width:2.6px;height:31px;background:#2cccbb;"></div><div style="left:2360.1px;top:365px;width:2.9px;height:31px;background:#2cccbb;"></div><div style="left:2365.3px;top:365px;width:2.6px;height:31px;background:#2cccbb;"></div><div style="left:2373.1px;top:365px;width:5.9px;height:31px;background:#2cccbb;"></div><div style="left:2389.1px;top:365px;width:5.6px;height:31px;background:#2cccbb;"></div><div style="left:2405.1px;top:365px;width:9.9px;height:31px;background:#2cccbb;"></div><div class="t" style="top:383.5px;font-size:9px;line-height:12px;color:#0a0a0a;left:2407.6px;max-width:7.4px;overflow:hidden">&lt;</div><div style="left:2419.9px;top:365px;width:5px;height:31px;background:#2cccbb;"></div><div style="left:2434.1px;top:365px;width:7.8px;height:31px;background:#2cccbb;"></div><div style="left:2461.1px;top:365px;width:11.9px;height:31px;background:#2cccbb;"></div><div class="t" style="top:383.5px;font-size:9px;line-height:12px;color:#0a0a0a;left:2464.2px;max-width:8.8px;overflow:hidden">&lt;</div><div style="left:2475.1px;top:365px;width:5.8px;height:31px;background:#2cccbb;"></div><div style="left:2554.1px;top:365px;width:5px;height:31px;background:#2cccbb;"></div><div style="left:2562px;top:365px;width:2px;height:31px;background:#2cccbb;"></div><div style="left:2566px;top:365px;width:5.9px;height:31px;background:#2cccbb;"></div><div style="left:2577.1px;top:365px;width:1.7px;height:31px;background:#2cccbb;"></div><div style="left:2581.5px;top:365px;width:1.7px;height:31px;background:#2cccbb;"></div><div style="left:2588.7px;top:365px;width:3.2px;height:31px;background:#2cccbb;"></div><div style="left:2595.1px;top:365px;width:3.8px;height:31px;background:#2cccbb;"></div><div style="left:2605.9px;top:365px;width:7.8px;height:31px;background:#2cccbb;"></div><div style="left:2627.1px;top:365px;width:6.7px;height:31px;background:#2cccbb;"></div><div style="left:2638.1px;top:365px;width:1.8px;height:31px;background:#2cccbb;"></div><div style="left:2643.1px;top:365px;width:9.9px;height:31px;background:#2cccbb;"></div><div style="left:2661.7px;top:365px;width:4.1px;height:31px;background:#2cccbb;"></div><div style="left:2668.4px;top:365px;width:15.4px;height:31px;background:#2cccbb;"></div><div class="yl" style="left:2670.1px;top:366.7px;width:11.6px;height:16.3px;background:#e6d200;">9</div><div class="ys" style="left:2670.6px;top:382.5px;width:12.2px;height:14px;">&lt;(</div><div style="left:2689.9px;top:365px;width:5.8px;height:31px;background:#2cccbb;"></div><div style="left:2698px;top:365px;width:3.8px;height:31px;background:#2cccbb;"></div><div style="left:2716.9px;top:365px;width:5.8px;height:31px;background:#2cccbb;"></div><div style="left:2734.9px;top:365px;width:2.7px;height:31px;background:#2cccbb;"></div><div style="left:2740.2px;top:365px;width:4.6px;height:31px;background:#2cccbb;"></div><div style="left:2750.1px;top:365px;width:6.9px;height:31px;background:#2cccbb;"></div><div style="left:2115px;top:400px;width:6.7px;height:31px;background:#2cccbb;"></div><div style="left:2124.9px;top:400px;width:2.9px;height:31px;background:#2cccbb;"></div><div style="left:2131px;top:400px;width:11.9px;height:31px;background:#2cccbb;"></div><div class="t" style="top:418.5px;font-size:9px;line-height:12px;color:#0a0a0a;left:2134.1px;max-width:8.8px;overflow:hidden">&lt;</div><div style="left:2149.9px;top:400px;width:17.7px;height:31px;background:#2cccbb;"></div><div class="t" style="top:418.5px;font-size:9px;line-height:12px;color:#0a0a0a;left:2157.6px;max-width:10px;overflow:hidden">&lt;</div><div style="left:2172.3px;top:400px;width:1.7px;height:31px;background:#2cccbb;"></div><div style="left:2176px;top:400px;width:3px;height:31px;background:#2cccbb;"></div><div style="left:2183px;top:400px;width:16.9px;height:31px;background:#2cccbb;"></div><div class="yl" style="left:2185.1px;top:401.7px;width:11.3px;height:16.3px;background:#e6d200;">9</div><div class="ys" style="left:2185.6px;top:417.5px;width:13.3px;height:14px;">&lt;(</div><div style="left:2206.9px;top:400px;width:3.7px;height:31px;background:#2cccbb;"></div><div style="left:2217.3px;top:400px;width:3.5px;height:31px;background:#2cccbb;"></div><div style="left:2223.7px;top:400px;width:6.1px;height:31px;background:#2cccbb;"></div><div style="left:2238px;top:400px;width:4.6px;height:31px;background:#2cccbb;"></div><div style="left:2247.8px;top:400px;width:9.1px;height:31px;background:#2cccbb;"></div><div style="left:2264.7px;top:400px;width:5.2px;height:31px;background:#2cccbb;"></div><div style="left:2272.6px;top:400px;width:4px;height:31px;background:#2cccbb;"></div><div style="left:2283.9px;top:400px;width:9.9px;height:31px;background:#2cccbb;"></div><div class="t" style="top:418.5px;font-size:9px;line-height:12px;color:#0a0a0a;left:2286.4px;max-width:7.4px;overflow:hidden">&lt;</div><div style="left:2304.2px;top:400px;width:2.7px;height:31px;background:#2cccbb;"></div><div style="left:2317.9px;top:400px;width:2.9px;height:31px;background:#2cccbb;"></div><div style="left:2328.1px;top:400px;width:4.3px;height:31px;background:#2cccbb;"></div><div style="left:2335.1px;top:400px;width:2.6px;height:31px;background:#2cccbb;"></div><div style="left:2360.1px;top:400px;width:2.9px;height:31px;background:#2cccbb;"></div><div style="left:2365.3px;top:400px;width:2.6px;height:31px;background:#2cccbb;"></div><div style="left:2373.1px;top:400px;width:5.9px;height:31px;background:#2cccbb;"></div><div style="left:2389.1px;top:400px;width:5.6px;height:31px;background:#2cccbb;"></div><div style="left:2405.1px;top:400px;width:9.9px;height:31px;background:#2cccbb;"></div><div class="t" style="top:418.5px;font-size:9px;line-height:12px;color:#0a0a0a;left:2407.6px;max-width:7.4px;overflow:hidden">&lt;</div><div style="left:2419.9px;top:400px;width:5px;height:31px;background:#2cccbb;"></div><div style="left:2434.1px;top:400px;width:7.8px;height:31px;background:#2cccbb;"></div><div style="left:2461.1px;top:400px;width:11.9px;height:31px;background:#2cccbb;"></div><div class="t" style="top:418.5px;font-size:9px;line-height:12px;color:#0a0a0a;left:2464.2px;max-width:8.8px;overflow:hidden">&lt;</div><div style="left:2475.1px;top:400px;width:5.8px;height:31px;background:#2cccbb;"></div><div style="left:2554.1px;top:400px;width:5px;height:31px;background:#2cccbb;"></div><div style="left:2562px;top:400px;width:2px;height:31px;background:#2cccbb;"></div><div style="left:2566px;top:400px;width:5.9px;height:31px;background:#2cccbb;"></div><div style="left:2577.1px;top:400px;width:1.7px;height:31px;background:#2cccbb;"></div><div style="left:2581.5px;top:400px;width:1.7px;height:31px;background:#2cccbb;"></div><div style="left:2588.7px;top:400px;width:3.2px;height:31px;background:#2cccbb;"></div><div style="left:2595.1px;top:400px;width:3.8px;height:31px;background:#2cccbb;"></div><div style="left:2605.9px;top:400px;width:7.8px;height:31px;background:#2cccbb;"></div><div style="left:2627.1px;top:400px;width:6.7px;height:31px;background:#2cccbb;"></div><div style="left:2638.1px;top:400px;width:1.8px;height:31px;background:#2cccbb;"></div><div style="left:2643.1px;top:400px;width:9.9px;height:31px;background:#2cccbb;"></div><div style="left:2661.7px;top:400px;width:4.1px;height:31px;background:#2cccbb;"></div><div style="left:2668.4px;top:400px;width:15.4px;height:31px;background:#2cccbb;"></div><div class="yl" style="left:2670.1px;top:401.7px;width:11.6px;height:16.3px;background:#e6d200;">9</div><div class="ys" style="left:2670.6px;top:417.5px;width:12.2px;height:14px;">&lt;(</div><div style="left:2689.9px;top:400px;width:5.8px;height:31px;background:#2cccbb;"></div><div style="left:2698px;top:400px;width:3.8px;height:31px;background:#2cccbb;"></div><div style="left:2716.9px;top:400px;width:5.8px;height:31px;background:#2cccbb;"></div><div style="left:2734.9px;top:400px;width:2.7px;height:31px;background:#2cccbb;"></div><div style="left:2740.2px;top:400px;width:4.6px;height:31px;background:#2cccbb;"></div><div style="left:2750.1px;top:400px;width:6.9px;height:31px;background:#2cccbb;"></div><div style="left:2121.1px;top:435px;width:3.8px;height:46px;background:#2cccbb;"></div><div style="left:2128.1px;top:435px;width:9.9px;height:46px;background:#2cccbb;"></div><div class="t" style="top:459.5px;font-size:9px;line-height:12px;color:#0a0a0a;left:2130.6px;max-width:7.4px;overflow:hidden">&lt;</div><div style="left:2142.9px;top:435px;width:7px;height:46px;background:#2cccbb;"></div><div style="left:2168.2px;top:435px;width:3.8px;height:46px;background:#2cccbb;"></div><div style="left:2210.9px;top:435px;width:6.1px;height:46px;background:#2cccbb;"></div><div style="left:2221.1px;top:435px;width:2.9px;height:46px;background:#2cccbb;"></div><div style="left:2242.9px;top:435px;width:4.9px;height:46px;background:#2cccbb;"></div><div style="left:2257.2px;top:435px;width:7.5px;height:46px;background:#2cccbb;"></div><div style="left:2269.9px;top:435px;width:2.9px;height:46px;background:#2cccbb;"></div><div style="left:2310.3px;top:435px;width:3.5px;height:46px;background:#2cccbb;"></div><div style="left:2321.1px;top:435px;width:9.9px;height:46px;background:#2cccbb;"></div><div class="t" style="top:459.5px;font-size:9px;line-height:12px;color:#0a0a0a;left:2323.6px;max-width:7.4px;overflow:hidden">&lt;</div><div style="left:2332.7px;top:435px;width:2.4px;height:46px;background:#2cccbb;"></div><div style="left:2349.6px;top:435px;width:4.1px;height:46px;background:#2cccbb;"></div><div style="left:2354.8px;top:435px;width:5.8px;height:46px;background:#2cccbb;"></div><div style="left:2362.7px;top:435px;width:3.5px;height:46px;background:#2cccbb;"></div><div style="left:2367.9px;top:435px;width:4.9px;height:46px;background:#2cccbb;"></div><div style="left:2379px;top:435px;width:3.7px;height:46px;background:#2cccbb;"></div><div style="left:2394.9px;top:435px;width:10.8px;height:46px;background:#2cccbb;"></div><div class="t" style="top:459.5px;font-size:9px;line-height:12px;color:#0a0a0a;left:2398px;max-width:7.7px;overflow:hidden">&lt;</div><div style="left:2413.8px;top:435px;width:6.1px;height:46px;background:#2cccbb;"></div><div style="left:2424.8px;top:435px;width:11px;height:46px;background:#2cccbb;"></div><div class="t" style="top:459.5px;font-size:9px;line-height:12px;color:#0a0a0a;left:2429.3px;max-width:6.5px;overflow:hidden">&lt;</div><div style="left:2441.9px;top:435px;width:9px;height:46px;background:#2cccbb;"></div><div style="left:2457.9px;top:435px;width:2.9px;height:46px;background:#2cccbb;"></div><div style="left:2473px;top:435px;width:1.8px;height:46px;background:#2cccbb;"></div><div style="left:2559.1px;top:435px;width:2.6px;height:46px;background:#2cccbb;"></div><div style="left:2563.4px;top:435px;width:2.4px;height:46px;background:#2cccbb;"></div><div style="left:2572.2px;top:435px;width:4.9px;height:46px;background:#2cccbb;"></div><div style="left:2579.1px;top:435px;width:2.4px;height:46px;background:#2cccbb;"></div><div style="left:2583.2px;top:435px;width:5.5px;height:46px;background:#2cccbb;"></div><div style="left:2594.8px;top:435px;width:1.2px;height:46px;background:#2cccbb;"></div><div style="left:2596.9px;top:435px;width:9px;height:46px;background:#2cccbb;clip-path:polygon(0 0,60% 0,100% 100%,0 100%)"></div><div style="left:2634.1px;top:435px;width:4px;height:46px;background:#2cccbb;"></div><div style="left:2639.9px;top:435px;width:3.2px;height:46px;background:#2cccbb;"></div><div style="left:2654.1px;top:435px;width:7.9px;height:46px;background:#2cccbb;"></div><div style="left:2665.8px;top:435px;width:2px;height:46px;background:#2cccbb;"></div><div style="left:2684.9px;top:435px;width:5px;height:46px;background:#2cccbb;"></div><div style="left:2695.7px;top:435px;width:2px;height:46px;background:#2cccbb;"></div><div style="left:2701.8px;top:435px;width:2.3px;height:46px;background:#2cccbb;"></div><div style="left:2705.3px;top:435px;width:3.5px;height:46px;background:#2cccbb;"></div><div style="left:2712.8px;top:435px;width:3.8px;height:46px;background:#2cccbb;"></div><div style="left:2723px;top:435px;width:11.7px;height:46px;background:#2cccbb;"></div><div class="t" style="top:459.5px;font-size:9px;line-height:12px;color:#0a0a0a;left:2726.4px;max-width:8.3px;overflow:hidden">&lt;</div><div style="left:2745.1px;top:435px;width:4.7px;height:46px;background:#2cccbb;"></div><div style="left:2757px;top:435px;width:11.1px;height:46px;background:#2cccbb;"></div><div class="t" style="top:459.5px;font-size:9px;line-height:12px;color:#0a0a0a;left:2760.4px;max-width:7.7px;overflow:hidden">&lt;</div><div style="left:2121.1px;top:485px;width:3.8px;height:31px;background:#2cccbb;"></div><div style="left:2128.1px;top:485px;width:9.9px;height:31px;background:#2cccbb;"></div><div class="t" style="top:503.5px;font-size:9px;line-height:12px;color:#0a0a0a;left:2130.6px;max-width:7.4px;overflow:hidden">&lt;</div><div style="left:2142.9px;top:485px;width:7px;height:31px;background:#2cccbb;"></div><div style="left:2168.2px;top:485px;width:3.8px;height:31px;background:#2cccbb;"></div><div style="left:2210.9px;top:485px;width:6.1px;height:31px;background:#2cccbb;"></div><div style="left:2221.1px;top:485px;width:2.9px;height:31px;background:#2cccbb;"></div><div style="left:2242.9px;top:485px;width:4.9px;height:31px;background:#2cccbb;"></div><div style="left:2257.2px;top:485px;width:7.5px;height:31px;background:#2cccbb;"></div><div style="left:2269.9px;top:485px;width:2.9px;height:31px;background:#2cccbb;"></div><div style="left:2310.3px;top:485px;width:3.5px;height:31px;background:#2cccbb;"></div><div style="left:2321.1px;top:485px;width:9.9px;height:31px;background:#2cccbb;"></div><div class="t" style="top:503.5px;font-size:9px;line-height:12px;color:#0a0a0a;left:2323.6px;max-width:7.4px;overflow:hidden">&lt;</div><div style="left:2332.7px;top:485px;width:2.4px;height:31px;background:#2cccbb;"></div><div style="left:2349.6px;top:485px;width:4.1px;height:31px;background:#2cccbb;"></div><div style="left:2354.8px;top:485px;width:5.8px;height:31px;background:#2cccbb;"></div><div style="left:2362.7px;top:485px;width:3.5px;height:31px;background:#2cccbb;"></div><div style="left:2367.9px;top:485px;width:4.9px;height:31px;background:#2cccbb;"></div><div style="left:2379px;top:485px;width:3.7px;height:31px;background:#2cccbb;"></div><div style="left:2394.9px;top:485px;width:10.8px;height:31px;background:#2cccbb;"></div><div class="t" style="top:503.5px;font-size:9px;line-height:12px;color:#0a0a0a;left:2398px;max-width:7.7px;overflow:hidden">&lt;</div><div style="left:2413.8px;top:485px;width:6.1px;height:31px;background:#2cccbb;"></div><div style="left:2424.8px;top:485px;width:11px;height:31px;background:#2cccbb;"></div><div class="t" style="top:503.5px;font-size:9px;line-height:12px;color:#0a0a0a;left:2429.3px;max-width:6.5px;overflow:hidden">&lt;</div><div style="left:2441.9px;top:485px;width:9px;height:31px;background:#2cccbb;"></div><div style="left:2457.9px;top:485px;width:2.9px;height:31px;background:#2cccbb;"></div><div style="left:2473px;top:485px;width:1.8px;height:31px;background:#2cccbb;"></div><div style="left:2559.1px;top:485px;width:2.6px;height:31px;background:#2cccbb;"></div><div style="left:2563.4px;top:485px;width:2.4px;height:31px;background:#2cccbb;"></div><div style="left:2572.2px;top:485px;width:4.9px;height:31px;background:#2cccbb;"></div><div style="left:2579.1px;top:485px;width:2.4px;height:31px;background:#2cccbb;"></div><div style="left:2583.2px;top:485px;width:5.5px;height:31px;background:#2cccbb;"></div><div style="left:2594.8px;top:485px;width:1.2px;height:31px;background:#2cccbb;"></div><div style="left:2596.9px;top:485px;width:9px;height:31px;background:#2cccbb;clip-path:polygon(0 0,60% 0,100% 100%,0 100%)"></div><div style="left:2634.1px;top:485px;width:4px;height:31px;background:#2cccbb;"></div><div style="left:2639.9px;top:485px;width:3.2px;height:31px;background:#2cccbb;"></div><div style="left:2654.1px;top:485px;width:7.9px;height:31px;background:#2cccbb;"></div><div style="left:2665.8px;top:485px;width:2px;height:31px;background:#2cccbb;"></div><div style="left:2684.9px;top:485px;width:5px;height:31px;background:#2cccbb;"></div><div style="left:2695.7px;top:485px;width:2px;height:31px;background:#2cccbb;"></div><div style="left:2701.8px;top:485px;width:2.3px;height:31px;background:#2cccbb;"></div><div style="left:2705.3px;top:485px;width:3.5px;height:31px;background:#2cccbb;"></div><div style="left:2712.8px;top:485px;width:3.8px;height:31px;background:#2cccbb;"></div><div style="left:2723px;top:485px;width:11.7px;height:31px;background:#2cccbb;"></div><div class="t" style="top:503.5px;font-size:9px;line-height:12px;color:#0a0a0a;left:2726.4px;max-width:8.3px;overflow:hidden">&lt;</div><div style="left:2745.1px;top:485px;width:4.7px;height:31px;background:#2cccbb;"></div><div style="left:2757px;top:485px;width:11.1px;height:31px;background:#2cccbb;"></div><div class="t" style="top:503.5px;font-size:9px;line-height:12px;color:#0a0a0a;left:2760.4px;max-width:7.7px;overflow:hidden">&lt;</div><div style="left:2121.1px;top:520px;width:6.7px;height:31px;background:#2cccbb;"></div><div style="left:2138px;top:520px;width:11.9px;height:31px;background:#2cccbb;"></div><div class="t" style="top:538.5px;font-size:9px;line-height:12px;color:#0a0a0a;left:2141.1px;max-width:8.8px;overflow:hidden">&lt;</div><div style="left:2283.9px;top:520px;width:9.9px;height:31px;background:#2cccbb;"></div><div class="t" style="top:538.5px;font-size:9px;line-height:12px;color:#0a0a0a;left:2286.4px;max-width:7.4px;overflow:hidden">&lt;</div><div style="left:2298.1px;top:520px;width:5.6px;height:31px;background:#2cccbb;"></div><div style="left:2307.2px;top:520px;width:2.9px;height:31px;background:#2cccbb;"></div><div style="left:2312.7px;top:520px;width:4.9px;height:31px;background:#2cccbb;"></div><div style="left:2338px;top:520px;width:12.8px;height:31px;background:#2cccbb;"></div><div style="left:2353.7px;top:520px;width:6.9px;height:31px;background:#2cccbb;"></div><div style="left:2367.9px;top:520px;width:4.9px;height:31px;background:#2cccbb;"></div><div style="left:2389.1px;top:520px;width:5.6px;height:31px;background:#2cccbb;"></div><div style="left:2450.9px;top:520px;width:9.9px;height:31px;background:#2cccbb;"></div><div class="t" style="top:538.5px;font-size:9px;line-height:12px;color:#0a0a0a;left:2453.7px;max-width:7.1px;overflow:hidden">&lt;</div><div style="left:2473px;top:520px;width:7.9px;height:31px;background:#2cccbb;"></div><div style="left:2591.9px;top:520px;width:2.9px;height:31px;background:#2cccbb;"></div><div style="left:2598.9px;top:520px;width:7px;height:31px;background:#2cccbb;"></div><div style="left:2651.2px;top:520px;width:2.6px;height:31px;background:#2cccbb;"></div><div style="left:2678px;top:520px;width:6.9px;height:31px;background:#2cccbb;"></div><div style="left:2697.7px;top:520px;width:4.1px;height:31px;background:#2cccbb;"></div><div style="left:2703.8px;top:520px;width:1.8px;height:31px;background:#2cccbb;"></div><div style="left:2708.8px;top:520px;width:4px;height:31px;background:#2cccbb;"></div><div style="left:2716.9px;top:520px;width:5.8px;height:31px;background:#2cccbb;"></div><div style="left:2734.9px;top:520px;width:5.9px;height:31px;background:#2cccbb;"></div><div style="left:2121.1px;top:555px;width:6.7px;height:31px;background:#2cccbb;"></div><div style="left:2138px;top:555px;width:11.9px;height:31px;background:#2cccbb;"></div><div class="t" style="top:573.5px;font-size:9px;line-height:12px;color:#0a0a0a;left:2141.1px;max-width:8.8px;overflow:hidden">&lt;</div><div style="left:2283.9px;top:555px;width:9.9px;height:31px;background:#2cccbb;"></div><div class="t" style="top:573.5px;font-size:9px;line-height:12px;color:#0a0a0a;left:2286.4px;max-width:7.4px;overflow:hidden">&lt;</div><div style="left:2298.1px;top:555px;width:5.6px;height:31px;background:#2cccbb;"></div><div style="left:2307.2px;top:555px;width:2.9px;height:31px;background:#2cccbb;"></div><div style="left:2312.7px;top:555px;width:4.9px;height:31px;background:#2cccbb;"></div><div style="left:2338px;top:555px;width:12.8px;height:31px;background:#2cccbb;"></div><div style="left:2353.7px;top:555px;width:6.9px;height:31px;background:#2cccbb;"></div><div style="left:2367.9px;top:555px;width:4.9px;height:31px;background:#2cccbb;"></div><div style="left:2389.1px;top:555px;width:5.6px;height:31px;background:#2cccbb;"></div><div style="left:2450.9px;top:555px;width:9.9px;height:31px;background:#2cccbb;"></div><div class="t" style="top:573.5px;font-size:9px;line-height:12px;color:#0a0a0a;left:2453.7px;max-width:7.1px;overflow:hidden">&lt;</div><div style="left:2473px;top:555px;width:7.9px;height:31px;background:#2cccbb;"></div><div style="left:2591.9px;top:555px;width:2.9px;height:31px;background:#2cccbb;"></div><div style="left:2598.9px;top:555px;width:7px;height:31px;background:#2cccbb;"></div><div style="left:2651.2px;top:555px;width:2.6px;height:31px;background:#2cccbb;"></div><div style="left:2678px;top:555px;width:6.9px;height:31px;background:#2cccbb;"></div><div style="left:2697.7px;top:555px;width:4.1px;height:31px;background:#2cccbb;"></div><div style="left:2703.8px;top:555px;width:1.8px;height:31px;background:#2cccbb;"></div><div style="left:2708.8px;top:555px;width:4px;height:31px;background:#2cccbb;"></div><div style="left:2716.9px;top:555px;width:5.8px;height:31px;background:#2cccbb;"></div><div style="left:2734.9px;top:555px;width:5.9px;height:31px;background:#2cccbb;"></div><div style="left:2217px;top:590px;width:0.9px;height:31px;background:#2cccbb;"></div><div style="left:2219.7px;top:590px;width:1.1px;height:31px;background:#2cccbb;"></div><div style="left:2229.2px;top:590px;width:0.6px;height:31px;background:#2cccbb;"></div><div style="left:2238.3px;top:590px;width:1.1px;height:31px;background:#2cccbb;"></div><div style="left:2240.9px;top:590px;width:0.8px;height:31px;background:#2cccbb;"></div><div style="left:2291.2px;top:590px;width:1.4px;height:31px;background:#2cccbb;"></div><div style="left:2304.2px;top:590px;width:4.4px;height:31px;background:#2cccbb;"></div><div style="left:2657px;top:625px;width:5.8px;height:31px;background:#2cccbb;"></div><div style="left:2115px;top:660px;width:5.8px;height:31px;background:#7a7a7a;"></div><div style="left:2124.9px;top:660px;width:2.9px;height:31px;background:#7a7a7a;"></div><div style="left:2138px;top:660px;width:11.9px;height:31px;background:#7a7a7a;"></div><div class="t" style="top:678.5px;font-size:9px;line-height:12px;color:#0a0a0a;left:2141.1px;max-width:8.8px;overflow:hidden">&lt;</div><div style="left:2174.3px;top:660px;width:1.7px;height:31px;background:#7a7a7a;"></div><div style="left:2178.1px;top:660px;width:4.9px;height:31px;background:#7a7a7a;"></div><div style="left:2196.4px;top:660px;width:3.5px;height:31px;background:#7a7a7a;"></div><div style="left:2206.9px;top:660px;width:10.1px;height:31px;background:#7a7a7a;"></div><div class="t" style="top:678.5px;font-size:9px;line-height:12px;color:#0a0a0a;left:2209.7px;max-width:7.3px;overflow:hidden">&lt;</div><div style="left:2221.1px;top:660px;width:2.9px;height:31px;background:#7a7a7a;"></div><div style="left:2229.8px;top:660px;width:4.1px;height:31px;background:#7a7a7a;"></div><div style="left:2238px;top:660px;width:4.9px;height:31px;background:#7a7a7a;"></div><div style="left:2247.8px;top:660px;width:29.1px;height:31px;background:#7a7a7a;"></div><div class="yl" style="left:2250.2px;top:661.7px;width:24.7px;height:16.3px;background:#e6d200;">§§§</div><div class="ys" style="left:2250.7px;top:677.5px;width:25.2px;height:14px;">&lt;Ofl</div><div style="left:2283.9px;top:660px;width:9.9px;height:31px;background:#7a7a7a;"></div><div class="t" style="top:678.5px;font-size:9px;line-height:12px;color:#0a0a0a;left:2286.4px;max-width:7.4px;overflow:hidden">&lt;</div><div style="left:2298.1px;top:660px;width:12px;height:31px;background:#7a7a7a;"></div><div class="t" style="top:678.5px;font-size:9px;line-height:12px;color:#0a0a0a;left:2301.2px;max-width:8.9px;overflow:hidden">&lt;</div><div style="left:2313.3px;top:660px;width:4.3px;height:31px;background:#7a7a7a;"></div><div style="left:2338px;top:660px;width:6.9px;height:31px;background:#7a7a7a;"></div><div style="left:2383px;top:660px;width:5.8px;height:31px;background:#7a7a7a;"></div><div style="left:2424.8px;top:660px;width:36px;height:31px;background:#7a7a7a;"></div><div class="yl" style="left:2427.1px;top:661.7px;width:32.6px;height:16.3px;background:#e6d200;">§§§Pa</div><div class="ys" style="left:2427.6px;top:677.5px;width:32.2px;height:14px;">&lt;Offli</div><div style="left:2462px;top:660px;width:18.9px;height:31px;background:#7a7a7a;"></div><div class="yl" style="left:2464px;top:661.7px;width:14.8px;height:16.3px;background:#e6d200;">§§</div><div class="ys" style="left:2464.5px;top:677.5px;width:15.4px;height:14px;">&lt;C</div><div style="left:2485.2px;top:660px;width:42.8px;height:31px;background:#7a7a7a;"></div><div class="yl" style="left:2487.3px;top:661.7px;width:39.5px;height:16.3px;background:#e6d200;">SX218</div><div class="ys" style="left:2487.8px;top:677.5px;width:39.2px;height:14px;">&lt;Offlin</div><div style="left:2529.7px;top:660px;width:24.4px;height:31px;background:#7a7a7a;"></div><div class="yl" style="left:2531.2px;top:661.7px;width:20.9px;height:16.3px;background:#e6d200;">SX</div><div class="ys" style="left:2531.7px;top:677.5px;width:21.4px;height:14px;">&lt;Of</div><div style="left:2559.9px;top:660px;width:16.9px;height:31px;background:#7a7a7a;"></div><div class="t" style="top:678.5px;font-size:9px;line-height:12px;color:#0a0a0a;left:2566.5px;max-width:10.3px;overflow:hidden">&lt;</div><div style="left:2589px;top:660px;width:5.8px;height:31px;background:#7a7a7a;"></div><div style="left:2598.9px;top:660px;width:7px;height:31px;background:#7a7a7a;"></div><div style="left:2614px;top:660px;width:12.8px;height:31px;background:#7a7a7a;"></div><div class="t" style="top:678.5px;font-size:9px;line-height:12px;color:#0a0a0a;left:2617.4px;max-width:9.4px;overflow:hidden">&lt;</div><div style="left:2634.1px;top:660px;width:19.7px;height:31px;background:#7a7a7a;"></div><div class="yl" style="left:2636.1px;top:661.7px;width:16px;height:16.3px;background:#e6d200;">§§</div><div class="ys" style="left:2636.6px;top:677.5px;width:16.2px;height:14px;">&lt;C</div><div style="left:2661.7px;top:660px;width:15.1px;height:31px;background:#7a7a7a;"></div><div class="t" style="top:678.5px;font-size:9px;line-height:12px;color:#0a0a0a;left:2665.4px;max-width:11.4px;overflow:hidden">&lt;</div><div style="left:2723px;top:660px;width:45.1px;height:31px;background:#7a7a7a;"></div><div class="yl" style="left:2725.1px;top:661.7px;width:42.1px;height:16.3px;background:#e6d200;">§§§Pas</div><div class="ys" style="left:2725.6px;top:677.5px;width:41.5px;height:14px;">&lt;Offline</div><div style="left:2115px;top:695px;width:5.8px;height:31px;background:#7a7a7a;"></div><div style="left:2124.9px;top:695px;width:2.9px;height:31px;background:#7a7a7a;"></div><div style="left:2138px;top:695px;width:11.9px;height:31px;background:#7a7a7a;"></div><div class="t" style="top:713.5px;font-size:9px;line-height:12px;color:#0a0a0a;left:2141.1px;max-width:8.8px;overflow:hidden">&lt;</div><div style="left:2174.3px;top:695px;width:1.7px;height:31px;background:#7a7a7a;"></div><div style="left:2178.1px;top:695px;width:4.9px;height:31px;background:#7a7a7a;"></div><div style="left:2196.4px;top:695px;width:3.5px;height:31px;background:#7a7a7a;"></div><div style="left:2206.9px;top:695px;width:10.1px;height:31px;background:#7a7a7a;"></div><div class="t" style="top:713.5px;font-size:9px;line-height:12px;color:#0a0a0a;left:2209.7px;max-width:7.3px;overflow:hidden">&lt;</div><div style="left:2221.1px;top:695px;width:2.9px;height:31px;background:#7a7a7a;"></div><div style="left:2229.8px;top:695px;width:4.1px;height:31px;background:#7a7a7a;"></div><div style="left:2238px;top:695px;width:4.9px;height:31px;background:#7a7a7a;"></div><div style="left:2247.8px;top:695px;width:29.1px;height:31px;background:#7a7a7a;"></div><div class="yl" style="left:2250.2px;top:696.7px;width:24.7px;height:16.3px;background:#e6d200;">§§§</div><div class="ys" style="left:2250.7px;top:712.5px;width:25.2px;height:14px;">&lt;Ofl</div><div style="left:2283.9px;top:695px;width:9.9px;height:31px;background:#7a7a7a;"></div><div class="t" style="top:713.5px;font-size:9px;line-height:12px;color:#0a0a0a;left:2286.4px;max-width:7.4px;overflow:hidden">&lt;</div><div style="left:2298.1px;top:695px;width:12px;height:31px;background:#7a7a7a;"></div><div class="t" style="top:713.5px;font-size:9px;line-height:12px;color:#0a0a0a;left:2301.2px;max-width:8.9px;overflow:hidden">&lt;</div><div style="left:2313.3px;top:695px;width:4.3px;height:31px;background:#7a7a7a;"></div><div style="left:2338px;top:695px;width:6.9px;height:31px;background:#7a7a7a;"></div><div style="left:2383px;top:695px;width:5.8px;height:31px;background:#7a7a7a;"></div><div style="left:2424.8px;top:695px;width:36px;height:31px;background:#7a7a7a;"></div><div class="yl" style="left:2427.1px;top:696.7px;width:32.6px;height:16.3px;background:#e6d200;">§§§Pa</div><div class="ys" style="left:2427.6px;top:712.5px;width:32.2px;height:14px;">&lt;Offli</div><div style="left:2462px;top:695px;width:18.9px;height:31px;background:#7a7a7a;"></div><div class="yl" style="left:2464px;top:696.7px;width:14.8px;height:16.3px;background:#e6d200;">§§</div><div class="ys" style="left:2464.5px;top:712.5px;width:15.4px;height:14px;">&lt;C</div><div style="left:2485.2px;top:695px;width:42.8px;height:31px;background:#7a7a7a;"></div><div class="yl" style="left:2487.3px;top:696.7px;width:39.5px;height:16.3px;background:#e6d200;">SX218</div><div class="ys" style="left:2487.8px;top:712.5px;width:39.2px;height:14px;">&lt;Offlin</div><div style="left:2529.7px;top:695px;width:24.4px;height:31px;background:#7a7a7a;"></div><div class="yl" style="left:2531.2px;top:696.7px;width:20.9px;height:16.3px;background:#e6d200;">SX</div><div class="ys" style="left:2531.7px;top:712.5px;width:21.4px;height:14px;">&lt;Of</div><div style="left:2559.9px;top:695px;width:16.9px;height:31px;background:#7a7a7a;"></div><div class="t" style="top:713.5px;font-size:9px;line-height:12px;color:#0a0a0a;left:2566.5px;max-width:10.3px;overflow:hidden">&lt;</div><div style="left:2589px;top:695px;width:5.8px;height:31px;background:#7a7a7a;"></div><div style="left:2598.9px;top:695px;width:7px;height:31px;background:#7a7a7a;"></div><div style="left:2614px;top:695px;width:12.8px;height:31px;background:#7a7a7a;"></div><div class="t" style="top:713.5px;font-size:9px;line-height:12px;color:#0a0a0a;left:2617.4px;max-width:9.4px;overflow:hidden">&lt;</div><div style="left:2634.1px;top:695px;width:19.7px;height:31px;background:#7a7a7a;"></div><div class="yl" style="left:2636.1px;top:696.7px;width:16px;height:16.3px;background:#e6d200;">§§</div><div class="ys" style="left:2636.6px;top:712.5px;width:16.2px;height:14px;">&lt;C</div><div style="left:2661.7px;top:695px;width:15.1px;height:31px;background:#7a7a7a;"></div><div class="t" style="top:713.5px;font-size:9px;line-height:12px;color:#0a0a0a;left:2665.4px;max-width:11.4px;overflow:hidden">&lt;</div><div style="left:2723px;top:695px;width:45.1px;height:31px;background:#7a7a7a;"></div><div class="yl" style="left:2725.1px;top:696.7px;width:42.1px;height:16.3px;background:#e6d200;">§§§Pas</div><div class="ys" style="left:2725.6px;top:712.5px;width:41.5px;height:14px;">&lt;Offline</div><div style="left:2115px;top:730px;width:5.8px;height:31px;background:#7a7a7a;"></div><div style="left:2124.9px;top:730px;width:2.9px;height:31px;background:#7a7a7a;"></div><div style="left:2138px;top:730px;width:11.9px;height:31px;background:#7a7a7a;"></div><div class="t" style="top:748.5px;font-size:9px;line-height:12px;color:#0a0a0a;left:2141.1px;max-width:8.8px;overflow:hidden">&lt;</div><div style="left:2174.3px;top:730px;width:1.7px;height:31px;background:#7a7a7a;"></div><div style="left:2178.1px;top:730px;width:4.9px;height:31px;background:#7a7a7a;"></div><div style="left:2196.4px;top:730px;width:3.5px;height:31px;background:#7a7a7a;"></div><div style="left:2206.9px;top:730px;width:10.1px;height:31px;background:#7a7a7a;"></div><div class="t" style="top:748.5px;font-size:9px;line-height:12px;color:#0a0a0a;left:2209.7px;max-width:7.3px;overflow:hidden">&lt;</div><div style="left:2221.1px;top:730px;width:2.9px;height:31px;background:#7a7a7a;"></div><div style="left:2229.8px;top:730px;width:4.1px;height:31px;background:#7a7a7a;"></div><div style="left:2238px;top:730px;width:4.9px;height:31px;background:#7a7a7a;"></div><div style="left:2247.8px;top:730px;width:29.1px;height:31px;background:#7a7a7a;"></div><div class="yl" style="left:2250.2px;top:731.7px;width:24.7px;height:16.3px;background:#e6d200;">§§§</div><div class="ys" style="left:2250.7px;top:747.5px;width:25.2px;height:14px;">&lt;Ofl</div><div style="left:2283.9px;top:730px;width:9.9px;height:31px;background:#7a7a7a;"></div><div class="t" style="top:748.5px;font-size:9px;line-height:12px;color:#0a0a0a;left:2286.4px;max-width:7.4px;overflow:hidden">&lt;</div><div style="left:2298.1px;top:730px;width:12px;height:31px;background:#7a7a7a;"></div><div class="t" style="top:748.5px;font-size:9px;line-height:12px;color:#0a0a0a;left:2301.2px;max-width:8.9px;overflow:hidden">&lt;</div><div style="left:2313.3px;top:730px;width:4.3px;height:31px;background:#7a7a7a;"></div><div style="left:2338px;top:730px;width:6.9px;height:31px;background:#7a7a7a;"></div><div style="left:2383px;top:730px;width:5.8px;height:31px;background:#7a7a7a;"></div><div style="left:2424.8px;top:730px;width:36px;height:31px;background:#7a7a7a;"></div><div class="yl" style="left:2427.1px;top:731.7px;width:32.6px;height:16.3px;background:#e6d200;">§§§Pa</div><div class="ys" style="left:2427.6px;top:747.5px;width:32.2px;height:14px;">&lt;Offli</div><div style="left:2462px;top:730px;width:18.9px;height:31px;background:#7a7a7a;"></div><div class="yl" style="left:2464px;top:731.7px;width:14.8px;height:16.3px;background:#e6d200;">§§</div><div class="ys" style="left:2464.5px;top:747.5px;width:15.4px;height:14px;">&lt;C</div><div style="left:2485.2px;top:730px;width:42.8px;height:31px;background:#7a7a7a;"></div><div class="yl" style="left:2487.3px;top:731.7px;width:39.5px;height:16.3px;background:#e6d200;">SX218</div><div class="ys" style="left:2487.8px;top:747.5px;width:39.2px;height:14px;">&lt;Offlin</div><div style="left:2529.7px;top:730px;width:24.4px;height:31px;background:#7a7a7a;"></div><div class="yl" style="left:2531.2px;top:731.7px;width:20.9px;height:16.3px;background:#e6d200;">SX</div><div class="ys" style="left:2531.7px;top:747.5px;width:21.4px;height:14px;">&lt;Of</div><div style="left:2559.9px;top:730px;width:16.9px;height:31px;background:#7a7a7a;"></div><div class="t" style="top:748.5px;font-size:9px;line-height:12px;color:#0a0a0a;left:2566.5px;max-width:10.3px;overflow:hidden">&lt;</div><div style="left:2589px;top:730px;width:5.8px;height:31px;background:#7a7a7a;"></div><div style="left:2598.9px;top:730px;width:7px;height:31px;background:#7a7a7a;"></div><div style="left:2614px;top:730px;width:12.8px;height:31px;background:#7a7a7a;"></div><div class="t" style="top:748.5px;font-size:9px;line-height:12px;color:#0a0a0a;left:2617.4px;max-width:9.4px;overflow:hidden">&lt;</div><div style="left:2634.1px;top:730px;width:19.7px;height:31px;background:#7a7a7a;"></div><div class="yl" style="left:2636.1px;top:731.7px;width:16px;height:16.3px;background:#e6d200;">§§</div><div class="ys" style="left:2636.6px;top:747.5px;width:16.2px;height:14px;">&lt;C</div><div style="left:2661.7px;top:730px;width:15.1px;height:31px;background:#7a7a7a;"></div><div class="t" style="top:748.5px;font-size:9px;line-height:12px;color:#0a0a0a;left:2665.4px;max-width:11.4px;overflow:hidden">&lt;</div><div style="left:2723px;top:730px;width:45.1px;height:31px;background:#7a7a7a;"></div><div class="yl" style="left:2725.1px;top:731.7px;width:42.1px;height:16.3px;background:#e6d200;">§§§Pas</div><div class="ys" style="left:2725.6px;top:747.5px;width:41.5px;height:14px;">&lt;Offline</div><div style="left:2115px;top:765px;width:5.8px;height:31px;background:#7a7a7a;"></div><div style="left:2124.9px;top:765px;width:2.9px;height:31px;background:#7a7a7a;"></div><div style="left:2138px;top:765px;width:11.9px;height:31px;background:#7a7a7a;"></div><div class="t" style="top:783.5px;font-size:9px;line-height:12px;color:#0a0a0a;left:2141.1px;max-width:8.8px;overflow:hidden">&lt;</div><div style="left:2174.3px;top:765px;width:1.7px;height:31px;background:#7a7a7a;"></div><div style="left:2178.1px;top:765px;width:4.9px;height:31px;background:#7a7a7a;"></div><div style="left:2196.4px;top:765px;width:3.5px;height:31px;background:#7a7a7a;"></div><div style="left:2206.9px;top:765px;width:10.1px;height:31px;background:#7a7a7a;"></div><div class="t" style="top:783.5px;font-size:9px;line-height:12px;color:#0a0a0a;left:2209.7px;max-width:7.3px;overflow:hidden">&lt;</div><div style="left:2221.1px;top:765px;width:2.9px;height:31px;background:#7a7a7a;"></div><div style="left:2229.8px;top:765px;width:4.1px;height:31px;background:#7a7a7a;"></div><div style="left:2238px;top:765px;width:4.9px;height:31px;background:#7a7a7a;"></div><div style="left:2247.8px;top:765px;width:29.1px;height:31px;background:#7a7a7a;"></div><div class="yl" style="left:2250.2px;top:766.7px;width:24.7px;height:16.3px;background:#e6d200;">§§§</div><div class="ys" style="left:2250.7px;top:782.5px;width:25.2px;height:14px;">&lt;Ofl</div><div style="left:2283.9px;top:765px;width:9.9px;height:31px;background:#7a7a7a;"></div><div class="t" style="top:783.5px;font-size:9px;line-height:12px;color:#0a0a0a;left:2286.4px;max-width:7.4px;overflow:hidden">&lt;</div><div style="left:2298.1px;top:765px;width:12px;height:31px;background:#7a7a7a;"></div><div class="t" style="top:783.5px;font-size:9px;line-height:12px;color:#0a0a0a;left:2301.2px;max-width:8.9px;overflow:hidden">&lt;</div><div style="left:2313.3px;top:765px;width:4.3px;height:31px;background:#7a7a7a;"></div><div style="left:2338px;top:765px;width:6.9px;height:31px;background:#7a7a7a;"></div><div style="left:2383px;top:765px;width:5.8px;height:31px;background:#7a7a7a;"></div><div style="left:2424.8px;top:765px;width:36px;height:31px;background:#7a7a7a;"></div><div class="yl" style="left:2427.1px;top:766.7px;width:32.6px;height:16.3px;background:#e6d200;">§§§Pa</div><div class="ys" style="left:2427.6px;top:782.5px;width:32.2px;height:14px;">&lt;Offli</div><div style="left:2462px;top:765px;width:18.9px;height:31px;background:#7a7a7a;"></div><div class="yl" style="left:2464px;top:766.7px;width:14.8px;height:16.3px;background:#e6d200;">§§</div><div class="ys" style="left:2464.5px;top:782.5px;width:15.4px;height:14px;">&lt;C</div><div style="left:2485.2px;top:765px;width:42.8px;height:31px;background:#7a7a7a;"></div><div class="yl" style="left:2487.3px;top:766.7px;width:39.5px;height:16.3px;background:#e6d200;">SX218</div><div class="ys" style="left:2487.8px;top:782.5px;width:39.2px;height:14px;">&lt;Offlin</div><div style="left:2529.7px;top:765px;width:24.4px;height:31px;background:#7a7a7a;"></div><div class="yl" style="left:2531.2px;top:766.7px;width:20.9px;height:16.3px;background:#e6d200;">SX</div><div class="ys" style="left:2531.7px;top:782.5px;width:21.4px;height:14px;">&lt;Of</div><div style="left:2559.9px;top:765px;width:16.9px;height:31px;background:#7a7a7a;"></div><div class="t" style="top:783.5px;font-size:9px;line-height:12px;color:#0a0a0a;left:2566.5px;max-width:10.3px;overflow:hidden">&lt;</div><div style="left:2589px;top:765px;width:5.8px;height:31px;background:#7a7a7a;"></div><div style="left:2598.9px;top:765px;width:7px;height:31px;background:#7a7a7a;"></div><div style="left:2614px;top:765px;width:12.8px;height:31px;background:#7a7a7a;"></div><div class="t" style="top:783.5px;font-size:9px;line-height:12px;color:#0a0a0a;left:2617.4px;max-width:9.4px;overflow:hidden">&lt;</div><div style="left:2634.1px;top:765px;width:19.7px;height:31px;background:#7a7a7a;"></div><div class="yl" style="left:2636.1px;top:766.7px;width:16px;height:16.3px;background:#e6d200;">§§</div><div class="ys" style="left:2636.6px;top:782.5px;width:16.2px;height:14px;">&lt;C</div><div style="left:2661.7px;top:765px;width:15.1px;height:31px;background:#7a7a7a;"></div><div class="t" style="top:783.5px;font-size:9px;line-height:12px;color:#0a0a0a;left:2665.4px;max-width:11.4px;overflow:hidden">&lt;</div><div style="left:2723px;top:765px;width:45.1px;height:31px;background:#7a7a7a;"></div><div class="yl" style="left:2725.1px;top:766.7px;width:42.1px;height:16.3px;background:#e6d200;">§§§Pas</div><div class="ys" style="left:2725.6px;top:782.5px;width:41.5px;height:14px;">&lt;Offline</div><div style="left:2121.1px;top:800px;width:3.8px;height:31px;background:#7a7a7a;"></div><div style="left:2128.1px;top:800px;width:9.9px;height:31px;background:#7a7a7a;"></div><div class="t" style="top:818.5px;font-size:9px;line-height:12px;color:#0a0a0a;left:2130.6px;max-width:7.4px;overflow:hidden">&lt;</div><div style="left:2149.9px;top:800px;width:24.1px;height:31px;background:#7a7a7a;"></div><div class="yl" style="left:2152.2px;top:801.7px;width:19.8px;height:16.3px;background:#e6d200;">§§!</div><div class="ys" style="left:2152.7px;top:817.5px;width:20.3px;height:14px;">&lt;O&#x27;</div><div style="left:2176px;top:800px;width:20.1px;height:31px;background:#7a7a7a;"></div><div class="t" style="top:818.5px;font-size:9px;line-height:12px;color:#0a0a0a;left:2186.4px;max-width:9.7px;overflow:hidden">&lt;</div><div style="left:2199.9px;top:800px;width:7px;height:31px;background:#7a7a7a;"></div><div style="left:2217px;top:800px;width:4.1px;height:31px;background:#7a7a7a;"></div><div style="left:2224px;top:800px;width:5.8px;height:31px;background:#7a7a7a;"></div><div style="left:2233.9px;top:800px;width:4.1px;height:31px;background:#7a7a7a;"></div><div style="left:2242.9px;top:800px;width:4.9px;height:31px;background:#7a7a7a;"></div><div style="left:2276.9px;top:800px;width:7px;height:31px;background:#7a7a7a;"></div><div style="left:2294.1px;top:800px;width:4px;height:31px;background:#7a7a7a;"></div><div style="left:2310.1px;top:800px;width:3.7px;height:31px;background:#7a7a7a;"></div><div style="left:2318.2px;top:800px;width:19.8px;height:31px;background:#7a7a7a;"></div><div class="yl" style="left:2319.9px;top:801.7px;width:16px;height:16.3px;background:#e6d200;">§§</div><div class="ys" style="left:2320.4px;top:817.5px;width:16.6px;height:14px;">&lt;C</div><div style="left:2344.9px;top:800px;width:38.1px;height:31px;background:#7a7a7a;"></div><div class="yl" style="left:2347.6px;top:801.7px;width:11.3px;height:16.3px;background:#e6d200;">§</div><div class="ys" style="left:2348.1px;top:817.5px;width:13.6px;height:14px;">&lt;(</div><div class="yl" style="left:2362.7px;top:801.7px;width:18.3px;height:16.3px;background:#e6d200;">§§</div><div class="ys" style="left:2363.2px;top:817.5px;width:18.8px;height:14px;">&lt;O</div><div style="left:2388.8px;top:800px;width:36.1px;height:31px;background:#7a7a7a;"></div><div class="yl" style="left:2391.2px;top:801.7px;width:15.7px;height:16.3px;background:#e6d200;">§§</div><div class="ys" style="left:2391.7px;top:817.5px;width:32.2px;height:14px;">&lt;C</div><div class="t" style="top:818.5px;font-size:9px;line-height:12px;color:#0a0a0a;left:2415.5px;max-width:9.4px;overflow:hidden">&lt;</div><div style="left:2481.2px;top:800px;width:3.7px;height:31px;background:#7a7a7a;"></div><div style="left:2554.1px;top:800px;width:5.8px;height:31px;background:#7a7a7a;"></div><div style="left:2576.8px;top:800px;width:12.2px;height:31px;background:#7a7a7a;"></div><div class="t" style="top:818.5px;font-size:9px;line-height:12px;color:#0a0a0a;left:2580.5px;max-width:8.5px;overflow:hidden">&lt;</div><div style="left:2594.8px;top:800px;width:4.1px;height:31px;background:#7a7a7a;"></div><div style="left:2605.9px;top:800px;width:8.1px;height:31px;background:#7a7a7a;"></div><div style="left:2626.8px;top:800px;width:7.3px;height:31px;background:#7a7a7a;"></div><div style="left:2653.8px;top:800px;width:7.9px;height:31px;background:#7a7a7a;"></div><div style="left:2676.8px;top:800px;width:8.1px;height:31px;background:#7a7a7a;"></div><div style="left:2716.9px;top:800px;width:5.8px;height:31px;background:#7a7a7a;"></div><div style="left:2121.1px;top:835px;width:3.8px;height:31px;background:#7a7a7a;"></div><div style="left:2128.1px;top:835px;width:9.9px;height:31px;background:#7a7a7a;"></div><div class="t" style="top:853.5px;font-size:9px;line-height:12px;color:#0a0a0a;left:2130.6px;max-width:7.4px;overflow:hidden">&lt;</div><div style="left:2149.9px;top:835px;width:24.1px;height:31px;background:#7a7a7a;"></div><div class="yl" style="left:2152.2px;top:836.7px;width:19.8px;height:16.3px;background:#e6d200;">§§!</div><div class="ys" style="left:2152.7px;top:852.5px;width:20.3px;height:14px;">&lt;O&#x27;</div><div style="left:2176px;top:835px;width:20.1px;height:31px;background:#7a7a7a;"></div><div class="t" style="top:853.5px;font-size:9px;line-height:12px;color:#0a0a0a;left:2186.4px;max-width:9.7px;overflow:hidden">&lt;</div><div style="left:2199.9px;top:835px;width:7px;height:31px;background:#7a7a7a;"></div><div style="left:2217px;top:835px;width:4.1px;height:31px;background:#7a7a7a;"></div><div style="left:2224px;top:835px;width:5.8px;height:31px;background:#7a7a7a;"></div><div style="left:2233.9px;top:835px;width:4.1px;height:31px;background:#7a7a7a;"></div><div style="left:2242.9px;top:835px;width:4.9px;height:31px;background:#7a7a7a;"></div><div style="left:2276.9px;top:835px;width:7px;height:31px;background:#7a7a7a;"></div><div style="left:2294.1px;top:835px;width:4px;height:31px;background:#7a7a7a;"></div><div style="left:2310.1px;top:835px;width:3.7px;height:31px;background:#7a7a7a;"></div><div style="left:2318.2px;top:835px;width:19.8px;height:31px;background:#7a7a7a;"></div><div class="yl" style="left:2319.9px;top:836.7px;width:16px;height:16.3px;background:#e6d200;">§§</div><div class="ys" style="left:2320.4px;top:852.5px;width:16.6px;height:14px;">&lt;C</div><div style="left:2344.9px;top:835px;width:38.1px;height:31px;background:#7a7a7a;"></div><div class="yl" style="left:2347.6px;top:836.7px;width:11.3px;height:16.3px;background:#e6d200;">§</div><div class="ys" style="left:2348.1px;top:852.5px;width:13.6px;height:14px;">&lt;(</div><div class="yl" style="left:2362.7px;top:836.7px;width:18.3px;height:16.3px;background:#e6d200;">§§</div><div class="ys" style="left:2363.2px;top:852.5px;width:18.8px;height:14px;">&lt;O</div><div style="left:2388.8px;top:835px;width:36.1px;height:31px;background:#7a7a7a;"></div><div class="yl" style="left:2391.2px;top:836.7px;width:15.7px;height:16.3px;background:#e6d200;">§§</div><div class="ys" style="left:2391.7px;top:852.5px;width:32.2px;height:14px;">&lt;C</div><div class="t" style="top:853.5px;font-size:9px;line-height:12px;color:#0a0a0a;left:2415.5px;max-width:9.4px;overflow:hidden">&lt;</div><div style="left:2481.2px;top:835px;width:3.7px;height:31px;background:#7a7a7a;"></div><div style="left:2554.1px;top:835px;width:5.8px;height:31px;background:#7a7a7a;"></div><div style="left:2576.8px;top:835px;width:12.2px;height:31px;background:#7a7a7a;"></div><div class="t" style="top:853.5px;font-size:9px;line-height:12px;color:#0a0a0a;left:2580.5px;max-width:8.5px;overflow:hidden">&lt;</div><div style="left:2594.8px;top:835px;width:4.1px;height:31px;background:#7a7a7a;"></div><div style="left:2605.9px;top:835px;width:8.1px;height:31px;background:#7a7a7a;"></div><div style="left:2626.8px;top:835px;width:7.3px;height:31px;background:#7a7a7a;"></div><div style="left:2653.8px;top:835px;width:7.9px;height:31px;background:#7a7a7a;"></div><div style="left:2676.8px;top:835px;width:8.1px;height:31px;background:#7a7a7a;"></div><div style="left:2716.9px;top:835px;width:5.8px;height:31px;background:#7a7a7a;"></div><div style="left:2121.1px;top:870px;width:3.8px;height:31px;background:#7a7a7a;"></div><div style="left:2128.1px;top:870px;width:9.9px;height:31px;background:#7a7a7a;"></div><div class="t" style="top:888.5px;font-size:9px;line-height:12px;color:#0a0a0a;left:2130.6px;max-width:7.4px;overflow:hidden">&lt;</div><div style="left:2149.9px;top:870px;width:24.1px;height:31px;background:#7a7a7a;"></div><div class="yl" style="left:2152.2px;top:871.7px;width:19.8px;height:16.3px;background:#e6d200;">§§!</div><div class="ys" style="left:2152.7px;top:887.5px;width:20.3px;height:14px;">&lt;O&#x27;</div><div style="left:2176px;top:870px;width:20.1px;height:31px;background:#7a7a7a;"></div><div class="t" style="top:888.5px;font-size:9px;line-height:12px;color:#0a0a0a;left:2186.4px;max-width:9.7px;overflow:hidden">&lt;</div><div style="left:2199.9px;top:870px;width:7px;height:31px;background:#7a7a7a;"></div><div style="left:2217px;top:870px;width:4.1px;height:31px;background:#7a7a7a;"></div><div style="left:2224px;top:870px;width:5.8px;height:31px;background:#7a7a7a;"></div><div style="left:2233.9px;top:870px;width:4.1px;height:31px;background:#7a7a7a;"></div><div style="left:2242.9px;top:870px;width:4.9px;height:31px;background:#7a7a7a;"></div><div style="left:2276.9px;top:870px;width:7px;height:31px;background:#7a7a7a;"></div><div style="left:2294.1px;top:870px;width:4px;height:31px;background:#7a7a7a;"></div><div style="left:2310.1px;top:870px;width:3.7px;height:31px;background:#7a7a7a;"></div><div style="left:2318.2px;top:870px;width:19.8px;height:31px;background:#7a7a7a;"></div><div class="yl" style="left:2319.9px;top:871.7px;width:16px;height:16.3px;background:#e6d200;">§§</div><div class="ys" style="left:2320.4px;top:887.5px;width:16.6px;height:14px;">&lt;C</div><div style="left:2344.9px;top:870px;width:38.1px;height:31px;background:#7a7a7a;"></div><div class="yl" style="left:2347.6px;top:871.7px;width:11.3px;height:16.3px;background:#e6d200;">§</div><div class="ys" style="left:2348.1px;top:887.5px;width:13.6px;height:14px;">&lt;(</div><div class="yl" style="left:2362.7px;top:871.7px;width:18.3px;height:16.3px;background:#e6d200;">§§</div><div class="ys" style="left:2363.2px;top:887.5px;width:18.8px;height:14px;">&lt;O</div><div style="left:2388.8px;top:870px;width:36.1px;height:31px;background:#7a7a7a;"></div><div class="yl" style="left:2391.2px;top:871.7px;width:15.7px;height:16.3px;background:#e6d200;">§§</div><div class="ys" style="left:2391.7px;top:887.5px;width:32.2px;height:14px;">&lt;C</div><div class="t" style="top:888.5px;font-size:9px;line-height:12px;color:#0a0a0a;left:2415.5px;max-width:9.4px;overflow:hidden">&lt;</div><div style="left:2481.2px;top:870px;width:3.7px;height:31px;background:#7a7a7a;"></div><div style="left:2554.1px;top:870px;width:5.8px;height:31px;background:#7a7a7a;"></div><div style="left:2576.8px;top:870px;width:12.2px;height:31px;background:#7a7a7a;"></div><div class="t" style="top:888.5px;font-size:9px;line-height:12px;color:#0a0a0a;left:2580.5px;max-width:8.5px;overflow:hidden">&lt;</div><div style="left:2594.8px;top:870px;width:4.1px;height:31px;background:#7a7a7a;"></div><div style="left:2605.9px;top:870px;width:8.1px;height:31px;background:#7a7a7a;"></div><div style="left:2626.8px;top:870px;width:7.3px;height:31px;background:#7a7a7a;"></div><div style="left:2653.8px;top:870px;width:7.9px;height:31px;background:#7a7a7a;"></div><div style="left:2676.8px;top:870px;width:8.1px;height:31px;background:#7a7a7a;"></div><div style="left:2716.9px;top:870px;width:5.8px;height:31px;background:#7a7a7a;"></div><div style="left:2121.1px;top:905px;width:3.8px;height:31px;background:#7a7a7a;"></div><div style="left:2128.1px;top:905px;width:9.9px;height:31px;background:#7a7a7a;"></div><div class="t" style="top:923.5px;font-size:9px;line-height:12px;color:#0a0a0a;left:2130.6px;max-width:7.4px;overflow:hidden">&lt;</div><div style="left:2149.9px;top:905px;width:24.1px;height:31px;background:#7a7a7a;"></div><div class="yl" style="left:2152.2px;top:906.7px;width:19.8px;height:16.3px;background:#e6d200;">§§!</div><div class="ys" style="left:2152.7px;top:922.5px;width:20.3px;height:14px;">&lt;O&#x27;</div><div style="left:2176px;top:905px;width:20.1px;height:31px;background:#7a7a7a;"></div><div class="t" style="top:923.5px;font-size:9px;line-height:12px;color:#0a0a0a;left:2186.4px;max-width:9.7px;overflow:hidden">&lt;</div><div style="left:2199.9px;top:905px;width:7px;height:31px;background:#7a7a7a;"></div><div style="left:2217px;top:905px;width:4.1px;height:31px;background:#7a7a7a;"></div><div style="left:2224px;top:905px;width:5.8px;height:31px;background:#7a7a7a;"></div><div style="left:2233.9px;top:905px;width:4.1px;height:31px;background:#7a7a7a;"></div><div style="left:2242.9px;top:905px;width:4.9px;height:31px;background:#7a7a7a;"></div><div style="left:2276.9px;top:905px;width:7px;height:31px;background:#7a7a7a;"></div><div style="left:2294.1px;top:905px;width:4px;height:31px;background:#7a7a7a;"></div><div style="left:2310.1px;top:905px;width:3.7px;height:31px;background:#7a7a7a;"></div><div style="left:2318.2px;top:905px;width:19.8px;height:31px;background:#7a7a7a;"></div><div class="yl" style="left:2319.9px;top:906.7px;width:16px;height:16.3px;background:#e6d200;">§§</div><div class="ys" style="left:2320.4px;top:922.5px;width:16.6px;height:14px;">&lt;C</div><div style="left:2344.9px;top:905px;width:38.1px;height:31px;background:#7a7a7a;"></div><div class="yl" style="left:2347.6px;top:906.7px;width:11.3px;height:16.3px;background:#e6d200;">§</div><div class="ys" style="left:2348.1px;top:922.5px;width:13.6px;height:14px;">&lt;(</div><div class="yl" style="left:2362.7px;top:906.7px;width:18.3px;height:16.3px;background:#e6d200;">§§</div><div class="ys" style="left:2363.2px;top:922.5px;width:18.8px;height:14px;">&lt;O</div><div style="left:2388.8px;top:905px;width:36.1px;height:31px;background:#7a7a7a;"></div><div class="yl" style="left:2391.2px;top:906.7px;width:15.7px;height:16.3px;background:#e6d200;">§§</div><div class="ys" style="left:2391.7px;top:922.5px;width:32.2px;height:14px;">&lt;C</div><div class="t" style="top:923.5px;font-size:9px;line-height:12px;color:#0a0a0a;left:2415.5px;max-width:9.4px;overflow:hidden">&lt;</div><div style="left:2481.2px;top:905px;width:3.7px;height:31px;background:#7a7a7a;"></div><div style="left:2554.1px;top:905px;width:5.8px;height:31px;background:#7a7a7a;"></div><div style="left:2576.8px;top:905px;width:12.2px;height:31px;background:#7a7a7a;"></div><div class="t" style="top:923.5px;font-size:9px;line-height:12px;color:#0a0a0a;left:2580.5px;max-width:8.5px;overflow:hidden">&lt;</div><div style="left:2594.8px;top:905px;width:4.1px;height:31px;background:#7a7a7a;"></div><div style="left:2605.9px;top:905px;width:8.1px;height:31px;background:#7a7a7a;"></div><div style="left:2626.8px;top:905px;width:7.3px;height:31px;background:#7a7a7a;"></div><div style="left:2653.8px;top:905px;width:7.9px;height:31px;background:#7a7a7a;"></div><div style="left:2676.8px;top:905px;width:8.1px;height:31px;background:#7a7a7a;"></div><div style="left:2716.9px;top:905px;width:5.8px;height:31px;background:#7a7a7a;"></div><div style="left:2115px;top:940px;width:34.9px;height:31px;background:#7a7a7a;"></div><div class="yl" style="left:2117px;top:941.7px;width:17.8px;height:16.3px;background:#e6d200;">Pa</div><div class="ys" style="left:2117.5px;top:957.5px;width:31.4px;height:14px;">&lt;O</div><div class="t" style="top:958.5px;font-size:9px;line-height:12px;color:#0a0a0a;left:2141.1px;max-width:8.8px;overflow:hidden">&lt;</div><div style="left:2174.3px;top:940px;width:4.7px;height:31px;background:#7a7a7a;"></div><div style="left:2183px;top:940px;width:16.9px;height:31px;background:#7a7a7a;"></div><div class="yl" style="left:2185.1px;top:941.7px;width:12.7px;height:16.3px;background:#e6d200;">S</div><div class="ys" style="left:2185.6px;top:957.5px;width:13.3px;height:14px;">&lt;(</div><div style="left:2206.9px;top:940px;width:36px;height:31px;background:#7a7a7a;"></div><div class="yl" style="left:2208.9px;top:941.7px;width:32px;height:16.3px;background:#e6d200;">904</div><div class="ys" style="left:2209.4px;top:957.5px;width:32.5px;height:14px;">&lt;Offli</div><div style="left:2283.9px;top:940px;width:9.9px;height:31px;background:#7a7a7a;"></div><div class="t" style="top:958.5px;font-size:9px;line-height:12px;color:#0a0a0a;left:2286.4px;max-width:7.4px;overflow:hidden">&lt;</div><div style="left:2298.1px;top:940px;width:15.7px;height:31px;background:#7a7a7a;"></div><div class="yl" style="left:2299.9px;top:941.7px;width:11px;height:16.3px;background:#e6d200;">F</div><div class="ys" style="left:2300.4px;top:957.5px;width:12.4px;height:14px;">&lt;(</div><div style="left:2383px;top:940px;width:5.8px;height:31px;background:#7a7a7a;"></div><div style="left:2481.5px;top:940px;width:3.2px;height:31px;background:#7a7a7a;"></div><div style="left:2554px;top:940px;width:23.5px;height:31px;background:#7a7a7a;"></div><div class="t" style="top:958.5px;font-size:9px;line-height:12px;color:#0a0a0a;left:2568px;max-width:9.5px;overflow:hidden">&lt;</div><div style="left:2115px;top:975px;width:34.9px;height:31px;background:#7a7a7a;"></div><div class="yl" style="left:2117px;top:976.7px;width:17.8px;height:16.3px;background:#e6d200;">Pa</div><div class="ys" style="left:2117.5px;top:992.5px;width:31.4px;height:14px;">&lt;O</div><div class="t" style="top:993.5px;font-size:9px;line-height:12px;color:#0a0a0a;left:2141.1px;max-width:8.8px;overflow:hidden">&lt;</div><div style="left:2174.3px;top:975px;width:4.7px;height:31px;background:#7a7a7a;"></div><div style="left:2183px;top:975px;width:16.9px;height:31px;background:#7a7a7a;"></div><div class="yl" style="left:2185.1px;top:976.7px;width:12.7px;height:16.3px;background:#e6d200;">S</div><div class="ys" style="left:2185.6px;top:992.5px;width:13.3px;height:14px;">&lt;(</div><div style="left:2206.9px;top:975px;width:36px;height:31px;background:#7a7a7a;"></div><div class="yl" style="left:2208.9px;top:976.7px;width:32px;height:16.3px;background:#e6d200;">904</div><div class="ys" style="left:2209.4px;top:992.5px;width:32.5px;height:14px;">&lt;Offli</div><div style="left:2283.9px;top:975px;width:9.9px;height:31px;background:#7a7a7a;"></div><div class="t" style="top:993.5px;font-size:9px;line-height:12px;color:#0a0a0a;left:2286.4px;max-width:7.4px;overflow:hidden">&lt;</div><div style="left:2298.1px;top:975px;width:15.7px;height:31px;background:#7a7a7a;"></div><div class="yl" style="left:2299.9px;top:976.7px;width:11px;height:16.3px;background:#e6d200;">F</div><div class="ys" style="left:2300.4px;top:992.5px;width:12.4px;height:14px;">&lt;(</div><div style="left:2383px;top:975px;width:5.8px;height:31px;background:#7a7a7a;"></div><div style="left:2481.5px;top:975px;width:3.2px;height:31px;background:#7a7a7a;"></div><div style="left:2554px;top:975px;width:23.5px;height:31px;background:#7a7a7a;"></div><div class="t" style="top:993.5px;font-size:9px;line-height:12px;color:#0a0a0a;left:2568px;max-width:9.5px;overflow:hidden">&lt;</div><div style="left:2179px;top:1010px;width:4px;height:31px;background:#7a7a7a;"></div><div style="left:2242.9px;top:1010px;width:4.9px;height:31px;background:#7a7a7a;"></div><div style="left:2294.1px;top:1010px;width:4px;height:31px;background:#7a7a7a;"></div><div style="left:2313.3px;top:1010px;width:69.4px;height:31px;background:#7a7a7a;"></div><div class="yl" style="left:2315.3px;top:1011.7px;width:32.3px;height:16.3px;background:#e6d200;">§§§Pa</div><div class="ys" style="left:2315.8px;top:1027.5px;width:35.1px;height:14px;">&lt;Offli</div><div class="yl" style="left:2351.9px;top:1011.7px;width:29.1px;height:16.3px;background:#e6d200;">§§§P</div><div class="ys" style="left:2352.4px;top:1027.5px;width:29.3px;height:14px;">&lt;Offl</div><div style="left:2425.3px;top:1010px;width:55.4px;height:31px;background:#7a7a7a;"></div><div class="yl" style="left:2427.5px;top:1011.7px;width:51.5px;height:16.3px;background:#e6d200;">§§§Pass</div><div class="ys" style="left:2428px;top:1027.5px;width:51.7px;height:14px;">&lt;Offline&gt;</div><div style="left:2484.7px;top:1010px;width:69.3px;height:31px;background:#7a7a7a;"></div><div class="yl" style="left:2487px;top:1011.7px;width:25px;height:16.3px;background:#e6d200;">Paj</div><div class="ys" style="left:2487.5px;top:1027.5px;width:27.5px;height:14px;">&lt;Ofl</div><div class="yl" style="left:2516px;top:1011.7px;width:25px;height:16.3px;background:#e6d200;">Paj</div><div class="ys" style="left:2516.5px;top:1027.5px;width:36.5px;height:14px;">&lt;Ofl</div><div class="t" style="top:1028.5px;font-size:9px;line-height:12px;color:#0a0a0a;left:2546px;max-width:8px;overflow:hidden">&lt;</div><div style="left:2179px;top:1045px;width:4px;height:31px;background:#7a7a7a;"></div><div style="left:2242.9px;top:1045px;width:4.9px;height:31px;background:#7a7a7a;"></div><div style="left:2294.1px;top:1045px;width:4px;height:31px;background:#7a7a7a;"></div><div style="left:2313.3px;top:1045px;width:69.4px;height:31px;background:#7a7a7a;"></div><div class="yl" style="left:2315.3px;top:1046.7px;width:32.3px;height:16.3px;background:#e6d200;">§§§Pa</div><div class="ys" style="left:2315.8px;top:1062.5px;width:35.1px;height:14px;">&lt;Offli</div><div class="yl" style="left:2351.9px;top:1046.7px;width:29.1px;height:16.3px;background:#e6d200;">§§§P</div><div class="ys" style="left:2352.4px;top:1062.5px;width:29.3px;height:14px;">&lt;Offl</div><div style="left:2425.3px;top:1045px;width:55.4px;height:31px;background:#7a7a7a;"></div><div class="yl" style="left:2427.5px;top:1046.7px;width:51.5px;height:16.3px;background:#e6d200;">§§§Pass</div><div class="ys" style="left:2428px;top:1062.5px;width:51.7px;height:14px;">&lt;Offline&gt;</div><div style="left:2484.7px;top:1045px;width:69.3px;height:31px;background:#7a7a7a;"></div><div class="yl" style="left:2487px;top:1046.7px;width:25px;height:16.3px;background:#e6d200;">Paj</div><div class="ys" style="left:2487.5px;top:1062.5px;width:27.5px;height:14px;">&lt;Ofl</div><div class="yl" style="left:2516px;top:1046.7px;width:25px;height:16.3px;background:#e6d200;">Paj</div><div class="ys" style="left:2516.5px;top:1062.5px;width:36.5px;height:14px;">&lt;Ofl</div><div class="t" style="top:1063.5px;font-size:9px;line-height:12px;color:#0a0a0a;left:2546px;max-width:8px;overflow:hidden">&lt;</div><div style="left:2115px;top:1080px;width:15.7px;height:31px;background:#7a7a7a;"></div><div class="yl" style="left:2117px;top:1081.7px;width:11.7px;height:16.3px;background:#e6d200;">p</div><div class="ys" style="left:2117.5px;top:1097.5px;width:12.2px;height:14px;">&lt;(</div><div style="left:2115px;top:1115px;width:15.7px;height:31px;background:#7a7a7a;"></div><div class="yl" style="left:2117px;top:1116.7px;width:11.7px;height:16.3px;background:#e6d200;">p</div><div class="ys" style="left:2117.5px;top:1132.5px;width:12.2px;height:14px;">&lt;(</div><div style="left:2124.7px;top:1150px;width:42px;height:31px;background:#ff8000;clip-path:polygon(0 0,calc(100% - 4px) 0,100% 100%,0 100%)"></div><div class="yl" style="left:2127px;top:1151.7px;width:33px;height:16.3px;background:#e8c800;">NSO</div><div class="ys" style="left:2127.5px;top:1167.5px;width:38.2px;height:14px;">&lt;Offli</div><div style="left:2173.4px;top:1150px;width:30.7px;height:31px;background:#ff8000;clip-path:polygon(0 0,calc(100% - 4px) 0,100% 100%,0 100%)"></div><div class="yl" style="left:2175.5px;top:1151.7px;width:25.5px;height:16.3px;background:#e8c800;">NS</div><div class="ys" style="left:2176px;top:1167.5px;width:27.1px;height:14px;">&lt;Of</div><div style="left:2208.1px;top:1150px;width:21.7px;height:31px;background:#ff8000;clip-path:polygon(0 0,calc(100% - 4px) 0,100% 100%,0 100%)"></div><div class="t" style="top:1168.5px;font-size:9px;line-height:12px;color:#0a0a0a;left:2211px;max-width:18.8px;overflow:hidden">&lt;</div><div style="left:2246.9px;top:1150px;width:22.7px;height:31px;background:#ff8000;clip-path:polygon(0 0,calc(100% - 4px) 0,100% 100%,0 100%)"></div><div class="yl" style="left:2248.5px;top:1151.7px;width:17.5px;height:16.3px;background:#e8c800;">N</div><div class="ys" style="left:2249px;top:1167.5px;width:19.6px;height:14px;">&lt;C</div><div style="left:2293.6px;top:1150px;width:62.4px;height:31px;background:#ff8000;"></div><div class="yl" style="left:2295.5px;top:1151.7px;width:59px;height:16.3px;background:#e8c800;">NSONO &#x27;</div><div class="ys" style="left:2296px;top:1167.5px;width:59px;height:14px;">&lt;Offline&gt;</div><div style="left:2381.8px;top:1150px;width:37px;height:31px;background:#ff8000;"></div><div class="yl" style="left:2383.5px;top:1151.7px;width:23.5px;height:16.3px;background:#e8c800;">NS</div><div class="ys" style="left:2384px;top:1167.5px;width:33.8px;height:14px;">&lt;Ofl</div><div style="left:2430.5px;top:1150px;width:34.7px;height:31px;background:#ff8000;"></div><div class="yl" style="left:2432.5px;top:1151.7px;width:23.5px;height:16.3px;background:#e8c800;">NS</div><div class="ys" style="left:2433px;top:1167.5px;width:31.2px;height:14px;">&lt;Of</div><div style="left:2475.6px;top:1150px;width:14.7px;height:31px;background:#ff8000;"></div><div class="t" style="top:1168.5px;font-size:9px;line-height:12px;color:#0a0a0a;left:2477px;max-width:13.3px;overflow:hidden">&lt;</div><div style="left:2557.4px;top:1150px;width:20.1px;height:31px;background:#ff8000;"></div><div class="yl" style="left:2559px;top:1151.7px;width:18px;height:16.3px;background:#e8c800;">NS</div><div class="ys" style="left:2559.5px;top:1167.5px;width:17px;height:14px;">&lt;O</div><div style="left:2124.7px;top:1185px;width:42px;height:31px;background:#ff8000;clip-path:polygon(0 0,calc(100% - 4px) 0,100% 100%,0 100%)"></div><div class="yl" style="left:2127px;top:1186.7px;width:33px;height:16.3px;background:#e8c800;">NSO</div><div class="ys" style="left:2127.5px;top:1202.5px;width:38.2px;height:14px;">&lt;Offli</div><div style="left:2173.4px;top:1185px;width:30.7px;height:31px;background:#ff8000;clip-path:polygon(0 0,calc(100% - 4px) 0,100% 100%,0 100%)"></div><div class="yl" style="left:2175.5px;top:1186.7px;width:25.5px;height:16.3px;background:#e8c800;">NS</div><div class="ys" style="left:2176px;top:1202.5px;width:27.1px;height:14px;">&lt;Of</div><div style="left:2208.1px;top:1185px;width:21.7px;height:31px;background:#ff8000;clip-path:polygon(0 0,calc(100% - 4px) 0,100% 100%,0 100%)"></div><div class="t" style="top:1203.5px;font-size:9px;line-height:12px;color:#0a0a0a;left:2211px;max-width:18.8px;overflow:hidden">&lt;</div><div style="left:2246.9px;top:1185px;width:22.7px;height:31px;background:#ff8000;clip-path:polygon(0 0,calc(100% - 4px) 0,100% 100%,0 100%)"></div><div class="yl" style="left:2248.5px;top:1186.7px;width:17.5px;height:16.3px;background:#e8c800;">N</div><div class="ys" style="left:2249px;top:1202.5px;width:19.6px;height:14px;">&lt;C</div><div style="left:2293.6px;top:1185px;width:62.4px;height:31px;background:#ff8000;"></div><div class="yl" style="left:2295.5px;top:1186.7px;width:59px;height:16.3px;background:#e8c800;">NSONO &#x27;</div><div class="ys" style="left:2296px;top:1202.5px;width:59px;height:14px;">&lt;Offline&gt;</div><div style="left:2381.8px;top:1185px;width:37px;height:31px;background:#ff8000;"></div><div class="yl" style="left:2383.5px;top:1186.7px;width:23.5px;height:16.3px;background:#e8c800;">NS</div><div class="ys" style="left:2384px;top:1202.5px;width:33.8px;height:14px;">&lt;Ofl</div><div style="left:2430.5px;top:1185px;width:34.7px;height:31px;background:#ff8000;"></div><div class="yl" style="left:2432.5px;top:1186.7px;width:23.5px;height:16.3px;background:#e8c800;">NS</div><div class="ys" style="left:2433px;top:1202.5px;width:31.2px;height:14px;">&lt;Of</div><div style="left:2475.6px;top:1185px;width:14.7px;height:31px;background:#ff8000;"></div><div class="t" style="top:1203.5px;font-size:9px;line-height:12px;color:#0a0a0a;left:2477px;max-width:13.3px;overflow:hidden">&lt;</div><div style="left:2557.4px;top:1185px;width:20.1px;height:31px;background:#ff8000;"></div><div class="yl" style="left:2559px;top:1186.7px;width:18px;height:16.3px;background:#e8c800;">NS</div><div class="ys" style="left:2559.5px;top:1202.5px;width:17px;height:14px;">&lt;O</div><div style="left:642px;top:118px;width:1.2px;height:1089.5px;background:#00c000;"></div><div style="left:650.8px;top:103px;width:1.3px;height:1104.5px;background:#0a0a0a;"></div><svg style="position:absolute;left:640px;top:102px" width="22" height="42"><path d="M3.600 1.200h15.600l-7.800 7.400z" fill="#0a0a0a"/><path d="M9 27v13" stroke="#00c000" stroke-width="1"/><path d="M6.700 28.500v10l-3.900-5z" fill="#00c000"/></svg><div style="left:0px;top:1206.7px;width:2768px;height:168px;background:#b4b4b4;"></div><div style="left:6px;top:1206.7px;width:2762px;height:2.3px;background:#cacaca;"></div><div class="sq" style="left:6px;top:1207.6px;width:16.7px;height:16.6px;border-radius:3px">1</div><div class="sq" style="left:24px;top:1207.6px;width:15.5px;height:16.6px;border-radius:3px">2</div><div class="sq" style="left:41.7px;top:1207.6px;width:15.7px;height:16.6px;border-radius:3px">4</div><div class="sq" style="left:59.4px;top:1207.6px;width:15.6px;height:16.6px;border-radius:3px">8</div><div class="sq" style="left:76.8px;top:1207.6px;width:17.7px;height:16.6px;border-radius:3px">16</div><div class="sq" style="left:95.8px;top:1207.6px;width:16.7px;height:16.6px;border-radius:3px">A</div><div style="left:116px;top:1209.6px;width:13px;height:12.2px;background:#4a4a4a;border-radius:2px;border:1px solid #3a3a3a"></div><div style="left:143px;top:1209.6px;width:13px;height:12.2px;background:#4a4a4a;border-radius:2px;border:1px solid #3a3a3a"></div><div style="left:257px;top:1209.6px;width:13px;height:12.2px;background:#4a4a4a;border-radius:2px;border:1px solid #3a3a3a"></div><div style="left:275px;top:1209.6px;width:13px;height:12.2px;background:#4a4a4a;border-radius:2px;border:1px solid #3a3a3a"></div><div style="left:872px;top:1209px;width:1710px;height:12.5px;background:#505050;border:1px solid #222;border-radius:2px"></div><div style="left:6px;top:1225px;width:2762px;height:3.6px;background:#6c6c6c;"></div><div class="t" style="top:1235.9px;font-size:14.5px;line-height:19px;color:#1c1c2c;letter-spacing:-1.1px;left:9px;">Clips FX</div><div style="left:11.2px;top:1270.3px;width:2243.6px;height:4px;background:linear-gradient(#7e7e7e,#8c8c8c 45%,#b4b4b4)"></div><div style="left:120.2px;top:1271px;width:2.8px;height:29.6px;background:#828282;"></div><div class="t" style="top:1276.2px;font-size:14.3px;line-height:19px;color:#1e1e2a;left:-134.3px;width:400px;text-align:center;">Overview</div><div style="left:232.4px;top:1271px;width:2.8px;height:29.6px;background:#828282;"></div><div class="t" style="top:1276.2px;font-size:14.3px;line-height:19px;color:#1e1e2a;left:-22.3px;width:400px;text-align:center;">Markers</div><div style="left:344.6px;top:1271px;width:2.8px;height:29.6px;background:#828282;"></div><div class="t" style="top:1276.2px;font-size:14.3px;line-height:19px;color:#1e1e2a;left:89.9px;width:400px;text-align:center;">Selection</div><div style="left:456.8px;top:1271px;width:2.8px;height:29.6px;background:#828282;"></div><div class="t" style="top:1276.2px;font-size:14.3px;line-height:19px;color:#1e1e2a;left:202.1px;width:400px;text-align:center;">Fade Editor</div><div style="left:459.6px;top:1270.3px;width:109.4px;height:4.3px;background:#b4b4b4;"></div><div style="left:459.1px;top:1298.8px;width:112.2px;height:1.8px;background:#1a1a1a;"></div><div style="left:569px;top:1271px;width:2.8px;height:29.6px;background:#828282;"></div><div class="t" style="top:1276.2px;font-size:14.3px;line-height:19px;color:#1e1e2a;left:314.3px;width:400px;text-align:center;">Clips FX</div><div style="left:681.2px;top:1271px;width:2.8px;height:29.6px;background:#828282;"></div><div class="t" style="top:1276.2px;font-size:14.3px;line-height:19px;color:#1e1e2a;left:426.5px;width:400px;text-align:center;">Media</div><div style="left:793.4px;top:1271px;width:2.8px;height:29.6px;background:#828282;"></div><div class="t" style="top:1276.2px;font-size:14.3px;line-height:19px;color:#1e1e2a;left:538.7px;width:400px;text-align:center;">Project Library</div><div style="left:905.6px;top:1271px;width:2.8px;height:29.6px;background:#828282;"></div><div class="t" style="top:1276.2px;font-size:14.3px;line-height:19px;color:#1e1e2a;left:650.9px;width:400px;text-align:center;">Global Libraries</div><div style="left:1017.8px;top:1271px;width:2.8px;height:29.6px;background:#828282;"></div><div class="t" style="top:1276.2px;font-size:14.3px;line-height:19px;color:#1e1e2a;left:763.1px;width:400px;text-align:center;">Tracks</div><div style="left:1130px;top:1271px;width:2.8px;height:29.6px;background:#828282;"></div><div class="t" style="top:1276.2px;font-size:14.3px;line-height:19px;color:#1e1e2a;left:875.3px;width:400px;text-align:center;">Track Groups</div><div style="left:1242.2px;top:1271px;width:2.8px;height:29.6px;background:#828282;"></div><div class="t" style="top:1276.2px;font-size:14.3px;line-height:19px;color:#1e1e2a;left:987.5px;width:400px;text-align:center;">Playlists</div><div style="left:1354.4px;top:1271px;width:2.8px;height:29.6px;background:#828282;"></div><div class="t" style="top:1276.2px;font-size:14.3px;line-height:19px;color:#1e1e2a;left:1099.7px;width:400px;text-align:center;">Workspaces</div><div style="left:1466.6px;top:1271px;width:2.8px;height:29.6px;background:#828282;"></div><div class="t" style="top:1276.2px;font-size:14.3px;line-height:19px;color:#1e1e2a;left:1211.9px;width:400px;text-align:center;">Mastering</div><div style="left:1578.8px;top:1271px;width:2.8px;height:29.6px;background:#828282;"></div><div class="t" style="top:1276.2px;font-size:14.3px;line-height:19px;color:#1e1e2a;left:1324.1px;width:400px;text-align:center;">FX Rendering</div><div style="left:1691px;top:1271px;width:2.8px;height:29.6px;background:#828282;"></div><div class="t" style="top:1276.2px;font-size:14.3px;line-height:19px;color:#1e1e2a;left:1436.3px;width:400px;text-align:center;">Metadata</div><div style="left:1803.2px;top:1271px;width:2.8px;height:29.6px;background:#828282;"></div><div class="t" style="top:1276.2px;font-size:14.3px;line-height:19px;color:#1e1e2a;left:1548.5px;width:400px;text-align:center;">EDL</div><div style="left:1915.4px;top:1271px;width:2.8px;height:29.6px;background:#828282;"></div><div class="t" style="top:1276.2px;font-size:14.3px;line-height:19px;color:#1e1e2a;left:1660.7px;width:400px;text-align:center;">Notes</div><div style="left:2027.6px;top:1271px;width:2.8px;height:29.6px;background:#828282;"></div><div class="t" style="top:1276.2px;font-size:14.3px;line-height:19px;color:#1e1e2a;left:1772.9px;width:400px;text-align:center;">ADR</div><div style="left:2139.8px;top:1271px;width:2.8px;height:29.6px;background:#828282;"></div><div class="t" style="top:1276.2px;font-size:14.3px;line-height:19px;color:#1e1e2a;left:1885.1px;width:400px;text-align:center;">Video</div><div style="left:2252px;top:1271px;width:2.8px;height:29.6px;background:#828282;"></div><div class="t" style="top:1276.2px;font-size:14.3px;line-height:19px;color:#1e1e2a;left:1997.3px;width:400px;text-align:center;">Log</div><div style="left:6px;top:1312px;width:1px;height:55px;background:#e0e0e0;"></div><div style="left:6px;top:1366px;width:2762px;height:1.3px;background:#d6d6d6;"></div><div style="left:0px;top:1367.3px;width:2768px;height:7px;background:#adadad;"></div><div style="left:20.5px;top:1315.5px;width:280.5px;height:31px;background:#0e0e0e;border-radius:5px 5px 0 0;border:1px solid #333"></div><div class="t" style="top:1320.2px;font-size:21.5px;line-height:28px;color:#fff;font-weight:bold;letter-spacing:0.3px;left:27.9px;">01:00:18:02</div><div class="t" style="top:1325.3px;font-size:12.5px;line-height:16px;color:#70e870;font-weight:bold;letter-spacing:-0.3px;left:218.4px;">PLAY</div><div class="tb" style="left:312px;top:1315px;width:37px;height:32px;"><svg width="37" height="32" viewBox="0 0 37 32"><path d="M18 9.500v20l-11.500-10z M29.500 9.500v20l-11.500-10z" fill="#8a8a8a"/></svg></div><div class="tb" style="left:352px;top:1315px;width:37px;height:32px;"><svg width="37" height="32" viewBox="0 0 37 32"><path d="M6.500 9.500h3v20h-3z M27.500 9.500h3v20h-3z M12.500 9.500v20l13-10z" fill="#8a8a8a"/></svg></div><div class="tb" style="left:392px;top:1315px;width:37px;height:32px;"><svg width="37" height="32" viewBox="0 0 37 32"><path d="M11.500 9.300v21.200l15-10.600z" fill="#7af07a"/></svg></div><div class="tb" style="left:432px;top:1315px;width:37px;height:32px;"><svg width="37" height="32" viewBox="0 0 37 32"><circle cx="18.700" cy="20.100" r="10.300" fill="#ff8484"/></svg></div><div class="tb" style="left:472px;top:1315px;width:37px;height:32px;"><svg width="37" height="32" viewBox="0 0 37 32"><path d="M7.500 9.500v20l11.500-10z M19 9.500v20l11.500-10z" fill="#8a8a8a"/></svg></div><div class="tb" style="left:517px;top:1315px;width:37px;height:32px;"><svg width="37" height="32" viewBox="0 0 37 32"><rect x="9.500" y="10.500" width="18" height="18" fill="#8a8a8a"/></svg></div><div class="tb" style="left:562px;top:1315px;width:37px;height:32px;"><svg width="37" height="32" viewBox="0 0 37 32"><path d="M11 17a8 8 0 0 1 13-6.500 M26.500 17a8 8 0 0 1-13 6.500" fill="none" stroke="#8a8a8a" stroke-width="3"/><path d="M20.500 5.500l6.500 4-6 4.500z M16.500 28.500l-6.500-4 6-4.500z" fill="#8a8a8a"/></svg></div><div style="left:616px;top:1333.5px;width:136px;height:2.4px;background:#0a0a0a;border-radius:1px"></div><div style="left:620px;top:1326px;width:0.8px;height:4px;background:#666;"></div><div style="left:620px;top:1340px;width:0.8px;height:4px;background:#666;"></div><div style="left:626.3px;top:1326px;width:0.8px;height:2px;background:#666;"></div><div style="left:626.3px;top:1342px;width:0.8px;height:2px;background:#666;"></div><div style="left:632.6px;top:1326px;width:0.8px;height:2px;background:#666;"></div><div style="left:632.6px;top:1342px;width:0.8px;height:2px;background:#666;"></div><div style="left:638.9px;top:1326px;width:0.8px;height:2px;background:#666;"></div><div style="left:638.9px;top:1342px;width:0.8px;height:2px;background:#666;"></div><div style="left:645.2px;top:1326px;width:0.8px;height:2px;background:#666;"></div><div style="left:645.2px;top:1342px;width:0.8px;height:2px;background:#666;"></div><div style="left:651.5px;top:1326px;width:0.8px;height:4px;background:#666;"></div><div style="left:651.5px;top:1340px;width:0.8px;height:4px;background:#666;"></div><div style="left:657.8px;top:1326px;width:0.8px;height:2px;background:#666;"></div><div style="left:657.8px;top:1342px;width:0.8px;height:2px;background:#666;"></div><div style="left:664.1px;top:1326px;width:0.8px;height:2px;background:#666;"></div><div style="left:664.1px;top:1342px;width:0.8px;height:2px;background:#666;"></div><div style="left:670.4px;top:1326px;width:0.8px;height:2px;background:#666;"></div><div style="left:670.4px;top:1342px;width:0.8px;height:2px;background:#666;"></div><div style="left:676.7px;top:1326px;width:0.8px;height:2px;background:#666;"></div><div style="left:676.7px;top:1342px;width:0.8px;height:2px;background:#666;"></div><div style="left:683px;top:1326px;width:0.8px;height:4px;background:#666;"></div><div style="left:683px;top:1340px;width:0.8px;height:4px;background:#666;"></div><div style="left:689.3px;top:1326px;width:0.8px;height:2px;background:#666;"></div><div style="left:689.3px;top:1342px;width:0.8px;height:2px;background:#666;"></div><div style="left:695.6px;top:1326px;width:0.8px;height:2px;background:#666;"></div><div style="left:695.6px;top:1342px;width:0.8px;height:2px;background:#666;"></div><div style="left:701.9px;top:1326px;width:0.8px;height:2px;background:#666;"></div><div style="left:701.9px;top:1342px;width:0.8px;height:2px;background:#666;"></div><div style="left:708.2px;top:1326px;width:0.8px;height:2px;background:#666;"></div><div style="left:708.2px;top:1342px;width:0.8px;height:2px;background:#666;"></div><div style="left:714.5px;top:1326px;width:0.8px;height:4px;background:#666;"></div><div style="left:714.5px;top:1340px;width:0.8px;height:4px;background:#666;"></div><div style="left:720.8px;top:1326px;width:0.8px;height:2px;background:#666;"></div><div style="left:720.8px;top:1342px;width:0.8px;height:2px;background:#666;"></div><div style="left:727.1px;top:1326px;width:0.8px;height:2px;background:#666;"></div><div style="left:727.1px;top:1342px;width:0.8px;height:2px;background:#666;"></div><div style="left:733.4px;top:1326px;width:0.8px;height:2px;background:#666;"></div><div style="left:733.4px;top:1342px;width:0.8px;height:2px;background:#666;"></div><div style="left:739.7px;top:1326px;width:0.8px;height:2px;background:#666;"></div><div style="left:739.7px;top:1342px;width:0.8px;height:2px;background:#666;"></div><div style="left:746px;top:1326px;width:0.8px;height:4px;background:#666;"></div><div style="left:746px;top:1340px;width:0.8px;height:4px;background:#666;"></div><div style="left:673px;top:1324.5px;width:10.5px;height:21px;background:#8a8a8a;border-radius:3px;border:1px solid #666"></div><div style="left:684px;top:1324.5px;width:10.5px;height:21px;background:#8a8a8a;border-radius:3px;border:1px solid #666"></div><div style="left:683.4px;top:1319px;width:1px;height:28px;background:#444;"></div><div class="tb" style="left:770px;top:1315px;width:37px;height:32px;"><svg width="37" height="32" viewBox="0 0 37 32"><path d="M6.500 8.500v15l10-7.500z M17 8.500v15l10-7.500z M12 15h16v2h-16z M27 8.500h2v15h-2z" fill="#8a8a8a"/></svg></div><div class="tb" style="left:812px;top:1315px;width:37px;height:32px;"><svg width="37" height="32" viewBox="0 0 37 32"><circle cx="18.500" cy="18" r="10.500" fill="#8a8a8a"/><circle cx="18.500" cy="13" r="3" fill="#1c1c1c"/></svg></div><div style="left:866.7px;top:1322px;width:61.3px;height:24.5px;background:#0e0e0e;border-radius:3px 0 0 3px;overflow:hidden"><div class="t" style="left:38px;top:3px;font-size:14px;line-height:18px;color:#eee">Inte</div></div><div class="tb" style="left:943px;top:1315px;width:37px;height:32px;"><div class="at" style="color:#fff">Off</div><svg width="37" height="32" viewBox="0 0 37 32"><path d="M10.500 21l4 3.500 4-3.500 4 3.500 4-3.500-2.500 5.500 2.500 5h-16l2.500-5z" fill="#fff"/></svg></div><div class="tb" style="left:983px;top:1315px;width:37px;height:32px;"><div class="at" style="color:#8a8a8a">Play</div><svg width="37" height="32" viewBox="0 0 37 32"><path d="M10.500 21l4 3.500 4-3.500 4 3.500 4-3.500-2.500 5.500 2.500 5h-16l2.500-5z" fill="#8a8a8a"/></svg></div><div class="tb" style="left:1023px;top:1315px;width:37px;height:32px;"><div class="at" style="color:#8a8a8a">Wrt</div><svg width="37" height="32" viewBox="0 0 37 32"><path d="M10.500 21l4 3.500 4-3.500 4 3.500 4-3.500-2.500 5.500 2.500 5h-16l2.500-5z" fill="#8a8a8a"/></svg></div><div class="tb" style="left:1063px;top:1315px;width:37px;height:32px;"><div class="at" style="color:#8a8a8a">Prw</div><svg width="37" height="32" viewBox="0 0 37 32"><rect x="14" y="20" width="14" height="10" rx="1.500" fill="#8a8a8a"/><circle cx="21" cy="25" r="3" fill="none" stroke="#1c1c1c" stroke-width="1.300"/><path d="M9 24l4 6h-4z" fill="#8a8a8a"/></svg></div><div class="tb" style="left:1103px;top:1315px;width:37px;height:32px;"><svg width="37" height="32" viewBox="0 0 37 32"><path d="M6.500 12h5l2-3h9l2 3h5.500v14h-23.500z" fill="#8a8a8a"/><circle cx="18.500" cy="19" r="5.500" fill="#8a8a8a" stroke="#1c1c1c" stroke-width="1.800"/></svg></div><div class="tb" style="left:1143px;top:1315px;width:37px;height:32px;"><svg width="37" height="32" viewBox="0 0 37 32"><path d="M12 9h4l1.500-2.500h7l1.500 2.500h4v11h-18z" fill="#8a8a8a"/><circle cx="21" cy="14.500" r="4" fill="#8a8a8a" stroke="#1c1c1c" stroke-width="1.500"/><path d="M6 16h5v9h12v4h-17z" fill="#8a8a8a"/></svg></div><div style="left:1196.6px;top:1322px;width:106.4px;height:24.5px;background:#0e0e0e;border-radius:3px 0 0 3px;overflow:hidden"><div class="t" style="left:15.500px;top:3px;font-size:14px;line-height:18px;color:#eee;letter-spacing:-0.2px">Fader Alignment</div></div><div class="t" style="top:1349.5px;font-size:15px;line-height:20px;color:#1c1c2c;letter-spacing:-0px;left:2160px;">Nudge 3: 1 Frm</div><div class="t" style="top:1348.5px;font-size:15px;line-height:20px;color:#1c1c2c;letter-spacing:-0.4px;left:2307px;">Play Level 3</div><div class="t" style="top:1348.5px;font-size:15px;line-height:20px;color:#1c1c2c;letter-spacing:-0.2px;left:2421px;">CPU: 12%</div><div style="left:2296px;top:1366.6px;width:4px;height:1.2px;background:#c02020;"></div><div style="left:2300px;top:1366.6px;width:40px;height:1.2px;background:#c8c020;"></div><div style="left:2340px;top:1366.6px;width:44px;height:1.2px;background:#20b020;"></div><div style="left:2404px;top:1366.6px;width:13px;height:1.2px;background:#30d030;"></div><div style="left:1439px;top:182.3px;width:470px;height:701px;background:#1e1e1e;border:1px solid #0a0a0a;box-shadow:0 0 0 1px #2a2a2a inset"></div><div class="nb" style="left:1447px;top:187.2px;width:15px;height:15px;">&lt;</div><div class="nb" style="left:1467px;top:187.2px;width:15px;height:15px;">&gt;</div><div class="t" style="top:185.5px;font-size:16px;line-height:21px;color:#d8d8d8;letter-spacing:-0.9px;left:1489px;">Panning Control</div><svg style="position:absolute;left:1891px;top:190px" width="11" height="11"><path d="M1 1l9 9M10 1l-9 9" stroke="#bbb" stroke-width="1.1"/></svg><div style="left:1440px;top:209.3px;width:468px;height:23px;background:#181818;"></div><div class="pt" style="left:1442.5px;top:209.3px;width:56px;height:23px;">Guitar</div><div class="pt" style="left:1502.5px;top:209.3px;width:56px;height:23px;">Bdrum</div><div class="pt" style="left:1562.5px;top:209.3px;width:56px;height:23px;">HiHat</div><div class="pt" style="left:1622.5px;top:209.3px;width:56px;height:23px;">Bass</div><div class="pt" style="left:1682.5px;top:209.3px;width:56px;height:23px;">Vocal 1</div><div class="pt" style="left:1742.5px;top:209.3px;width:56px;height:23px;">Vocal 2</div><div class="pt" style="left:1802.5px;top:209.3px;width:56px;height:23px;"></div><div class="pt" style="left:1862.5px;top:209.3px;width:45.5px;height:23px;text-align:left;padding-left:12px">Mono</div><div style="left:1458.2px;top:253.5px;width:431px;height:429.7px;background:#121212;border-radius:7px"></div><div class="t" style="top:265.4px;font-size:11px;line-height:14px;color:#444;left:1473.5px;width:400px;text-align:center;">FRONT</div><div class="t" style="top:659.5px;font-size:11px;line-height:14px;color:#444;left:1473.5px;width:400px;text-align:center;">REAR</div><svg style="position:absolute;left:1439px;top:182px" width="470" height="701" viewBox="1439 182 470 701"><defs><radialGradient id="gr"><stop offset="0" stop-color="#e84030" stop-opacity="1"/><stop offset="1" stop-color="#e84030" stop-opacity="0"/></radialGradient><radialGradient id="gy"><stop offset="0" stop-color="#e8a820" stop-opacity=".85"/><stop offset="1" stop-color="#e8a820" stop-opacity="0"/></radialGradient></defs><g fill="none" stroke="#4c4c4c" stroke-width="0.9"><rect x="1493" y="287.5" width="362" height="362.5"/><rect x="1515.7" y="310.7" width="315.9" height="315.7"/><rect x="1538" y="332.5" width="271.5" height="271.5"/><rect x="1560.8" y="355.8" width="226.1" height="225.8"/><path d="M1493 287.5L1583.4 378.4"/><path d="M1855 287.5L1765.7 378.4"/><path d="M1493 650L1583.4 560.6"/><path d="M1855 650L1765.7 560.6"/><path d="M1584 287.500L1628.500 378.400M1764.200 287.500L1720 378.400M1674.400 287.500V378.400M1628.700 560.600L1583.600 650M1720 560.600L1764.500 650M1674.400 560.600V650M1493 379.300L1583.400 423.500M1493 468.700H1583.400M1493 558.900L1583.400 515.500M1855 379.300L1765.700 423.500M1855 468.700H1765.700M1855 558.900L1765.700 515.500"/></g><rect x="1583.4" y="378.4" width="182.3" height="182.2" fill="#080808" stroke="#4c4c4c" stroke-width="0.9"/><path d="M1539.900 316H1809.200L1772.300 352.300H1577.600Z" fill="#262626"/><circle cx="1493" cy="287.5" r="20" fill="url(#gr)"/><circle cx="1855.2" cy="287.5" r="20" fill="url(#gr)"/><circle cx="1493" cy="468.7" r="26" fill="url(#gr)" opacity=".75"/><circle cx="1855" cy="468.7" r="26" fill="url(#gr)" opacity=".75"/><circle cx="1538" cy="375.2" r="31" fill="url(#gy)"/><circle cx="1809.5" cy="375.2" r="31" fill="url(#gy)"/><circle cx="1538" cy="468" r="31" fill="url(#gy)"/><circle cx="1809.5" cy="468" r="31" fill="url(#gy)"/><circle cx="1521" cy="417" r="7.300" fill="#d8d8d8"/><circle cx="1674.100" cy="417" r="7.300" fill="#5cc85c"/><circle cx="1827" cy="417" r="7.300" fill="#d00000"/></svg><div class="sp" style="left:1482.2px;top:280.2px;width:21.6px;height:14.6px;background:#e84a3a;">Ltf</div><div class="sp" style="left:1844.4px;top:280.2px;width:21.6px;height:14.6px;background:#e84a3a;">Rtf</div><div class="sp sps" style="left:1528.2px;top:326.2px;width:19.6px;height:12.6px;background:#3a3a3a;color:#6e6e6e">L</div><div class="sp sps" style="left:1664.3px;top:326.2px;width:19.6px;height:12.6px;background:#3a3a3a;color:#6e6e6e">C</div><div class="sp sps" style="left:1799.7px;top:326.2px;width:19.6px;height:12.6px;background:#3a3a3a;color:#6e6e6e">R</div><div class="sp sps" style="left:1528.5px;top:369.2px;width:19px;height:12px;background:#e8a820;color:#3a2a00">Lw</div><div class="sp sps" style="left:1800px;top:369.2px;width:19px;height:12px;background:#e8a820;color:#3a2a00">Rw</div><div class="sp" style="left:1482.2px;top:461.4px;width:21.6px;height:14.6px;background:#e84a3a;">Ltm</div><div class="sp" style="left:1844.2px;top:461.4px;width:21.6px;height:14.6px;background:#e84a3a;">Rtm</div><div class="sp sps" style="left:1528.5px;top:462px;width:19px;height:12px;background:#e8a820;color:#3a2a00">Lss</div><div class="sp sps" style="left:1800px;top:462px;width:19px;height:12px;background:#e8a820;color:#3a2a00">Rss</div><div class="sp sps" style="left:1527.7px;top:597.7px;width:19.6px;height:12.6px;background:#3a3a3a;color:#6e6e6e">Lrs</div><div class="sp sps" style="left:1799.8px;top:597.7px;width:19.6px;height:12.6px;background:#3a3a3a;color:#6e6e6e">Rrs</div><div class="sp" style="left:1481.9px;top:642.5px;width:21.6px;height:14.6px;background:#333;color:#aaa">Ltr</div><div class="sp" style="left:1843.9px;top:642.5px;width:21.6px;height:14.6px;background:#333;color:#aaa">Rtr</div><svg style="position:absolute;left:1439px;top:690px" width="470" height="60" viewBox="1439 690 470 60"><defs><linearGradient id="kgrad" x1="0" y1="0" x2="0.6" y2="1"><stop offset="0" stop-color="#4c4c4c"/><stop offset="1" stop-color="#262626"/></linearGradient></defs><path d="M1466.4 733.2A17.8 17.8 0 1 1 1491.6 733.2" fill="none" stroke="#0b0b0b" stroke-width="3.0"/><path d="M1466.4 733.2A17.8 17.8 0 0 1 1479.0 702.8" fill="none" stroke="#aaa" stroke-width="1.4"/><path d="M1479.0 702.8A17.8 17.8 0 0 1 1491.6 733.2" fill="none" stroke="#d04040" stroke-width="1.4"/><circle cx="1479.0" cy="720.6" r="13.8" fill="url(#kgrad)"/><path d="M1479.0 713.3L1479.0 708.8" stroke="#ddd" stroke-width="1.1"/><path d="M1531.4 733.2A17.8 17.8 0 1 1 1556.6 733.2" fill="none" stroke="#0b0b0b" stroke-width="3.0"/><path d="M1531.4 708.0A17.8 17.8 0 0 1 1544.0 702.8" fill="none" stroke="#999" stroke-width="1.4"/><circle cx="1544.0" cy="720.6" r="13.8" fill="url(#kgrad)"/><path d="M1538.8 715.4L1535.7 712.3" stroke="#ddd" stroke-width="1.1"/><path d="M1596.5 733.2A17.8 17.8 0 1 1 1621.7 733.2" fill="none" stroke="#0b0b0b" stroke-width="3.0"/><path d="M1609.1 702.8A17.8 17.8 0 0 1 1623.7 710.4" fill="none" stroke="#999" stroke-width="1.4"/><circle cx="1609.1" cy="720.6" r="13.8" fill="url(#kgrad)"/><path d="M1615.1 716.4L1618.8 713.8" stroke="#ddd" stroke-width="1.1"/><path d="M1661.2 733.2A17.8 17.8 0 1 1 1686.4 733.2" fill="none" stroke="#0b0b0b" stroke-width="3.0"/><circle cx="1673.8" cy="720.6" r="13.8" fill="url(#kgrad)"/><path d="M1668.6 725.8L1665.5 728.9" stroke="#ddd" stroke-width="1.1"/><path d="M1726.4 733.2A17.8 17.8 0 1 1 1751.6 733.2" fill="none" stroke="#0b0b0b" stroke-width="3.0"/><circle cx="1739.0" cy="720.6" r="13.8" fill="url(#kgrad)"/><path d="M1733.8 725.8L1730.7 728.9" stroke="#ddd" stroke-width="1.1"/></svg><div class="vb" style="left:1459px;top:742.7px;width:40px;height:11px;line-height:11.500px">0 %</div><div class="t" style="top:760.3px;font-size:10px;line-height:13px;color:#d0d0d0;left:1279px;width:400px;text-align:center;">Left/Right</div><div class="vb" style="left:1524px;top:742.7px;width:40px;height:11px;line-height:11.500px">-33 %</div><div class="t" style="top:760.3px;font-size:10px;line-height:13px;color:#d0d0d0;left:1344px;width:400px;text-align:center;">Front/Rear</div><div class="vb" style="left:1589.1px;top:742.7px;width:40px;height:11px;line-height:11.500px">38 %</div><div class="t" style="top:760.3px;font-size:10px;line-height:13px;color:#d0d0d0;left:1409.1px;width:400px;text-align:center;">Bottom/Top</div><div class="vb" style="left:1653.8px;top:742.7px;width:40px;height:11px;line-height:11.500px">0 %</div><div class="t" style="top:760.3px;font-size:10px;line-height:13px;color:#d0d0d0;left:1473.8px;width:400px;text-align:center;">Divergence</div><div class="vb" style="left:1719px;top:742.7px;width:40px;height:11px;line-height:11.500px">-145 dB</div><div class="t" style="top:760.3px;font-size:10px;line-height:13px;color:#d0d0d0;left:1539px;width:400px;text-align:center;">LFE</div><div class="t" style="top:791.3px;font-size:10px;line-height:13px;color:#d0d0d0;left:1459px;">Display</div><div class="vb" style="left:1544.7px;top:792.5px;width:58.8px;height:11.6px;line-height:12.500px;font-size:10.500px">Top Only</div><div class="t" style="top:791.3px;font-size:10px;line-height:13px;color:#d0d0d0;left:1624.4px;">No Z Axis Bottom</div><div class="t" style="top:811.4px;font-size:10px;line-height:13px;color:#d0d0d0;left:1459px;">Dual Source</div><div class="vb" style="left:1544.7px;top:812.6px;width:58.8px;height:11.6px;line-height:12.500px;font-size:10.500px">Balance</div><div class="t" style="top:811.4px;font-size:10px;line-height:13px;color:#d0d0d0;left:1624.4px;">Atmos Snap</div><div class="t" style="top:831.2px;font-size:10px;line-height:13px;color:#d0d0d0;left:1459px;">Virtual Pan Law</div><div class="vb" style="left:1544.7px;top:832.4px;width:58.8px;height:11.6px;line-height:12.500px;font-size:10.500px">Sin/Cos</div><div class="t" style="top:831.2px;font-size:10px;line-height:13px;color:#d0d0d0;left:1624.4px;">Atmos Elevation</div><div class="t" style="top:851.4px;font-size:10px;line-height:13px;color:#d0d0d0;left:1459px;">Divergence Type</div><div class="vb" style="left:1544.7px;top:852.6px;width:58.8px;height:11.6px;line-height:12.500px;font-size:10.500px">3D</div><div class="t" style="top:851.4px;font-size:10px;line-height:13px;color:#d0d0d0;left:1624.4px;">Atmos Zones</div><div class="cb" style="left:1709.7px;top:791.8px;width:15px;height:14.5px;"></div><div class="cb" style="left:1709.7px;top:811.9px;width:15px;height:14.5px;"></div><div class="cb" style="left:1709.7px;top:831.7px;width:15px;height:14.5px;background:#e0cc6a"></div><div class="vb" style="left:1709.7px;top:852.6px;width:68.8px;height:11.6px;line-height:12.500px;font-size:11px">All</div><div style="left:2768.5px;top:0px;width:662.5px;height:838px;background:#1e1e1e;"></div><div style="left:2767.5px;top:153px;width:1.5px;height:685px;background:#151515;"></div><div class="t" style="top:-1px;font-size:16.5px;line-height:21px;color:#c8c8c8;letter-spacing:-1.2px;left:2774.3px;">Mixer</div><svg style="position:absolute;left:3355px;top:2px" width="76" height="16"><path d="M2 3.500h10M2 6.500h10M2 9.500h10M2 12.500h10M38 10.500h8M63 3l8 8M71 3l-8 8" stroke="#c0c0c0" stroke-width="1.100" fill="none"/></svg><div style="left:2769.3px;top:24.9px;width:2px;height:213px;background:#161616;"></div><div style="left:2771.3px;top:24.9px;width:72px;height:29.3px;background:#413f70;"></div><div class="mb" style="left:2775.5px;top:27.9px;width:63.5px;height:15.1px;"><i style="background:#f08050"></i>ATMOS 9.1.6</div><div style="left:2774.3px;top:46.5px;width:65.6px;height:5.1px;background:#0b0b0b;border-radius:2.5px"></div><div style="left:2771.3px;top:96px;width:72px;height:20.3px;background:#145049;"></div><div class="mi" style="left:2775.5px;top:56.7px;width:63.5px;height:15px;"><i></i>7.1.4</div><div class="mi" style="left:2775.5px;top:77.9px;width:63.5px;height:15px;"><i></i>5.1C</div><div class="mi" style="left:2775.5px;top:98.8px;width:63.5px;height:15px;"><i></i>5.1 B</div><div class="mi" style="left:2775.5px;top:119.8px;width:63.5px;height:15px;"><i></i>5.1 A</div><div class="mi" style="left:2775.5px;top:140.7px;width:63.5px;height:15px;"><i></i>Cue 2</div><div class="mi" style="left:2775.5px;top:161.9px;width:63.5px;height:15px;"><i></i>cue 1</div><div class="mi" style="left:2775.5px;top:182.8px;width:63.5px;height:15px;"><i></i>Mix Group</div><div class="mb" style="left:2775.5px;top:211.6px;width:63.5px;height:15px;"><i style="background:#5080d8"></i>Mix Group</div><div style="left:2774.3px;top:230.3px;width:65.6px;height:5.1px;background:#151515;border-radius:2.5px"></div><div style="left:2771.3px;top:238.1px;width:72px;height:599.9px;background:#38225a;"></div><div style="left:2843.3px;top:24.9px;width:2px;height:213px;background:#161616;"></div><div style="left:2845.3px;top:24.9px;width:72px;height:29.3px;background:#413f70;"></div><div class="mb" style="left:2849.5px;top:27.9px;width:63.5px;height:15.1px;"><i style="background:#f08050"></i>ATMOS 9.1.6</div><div style="left:2848.3px;top:46.5px;width:65.6px;height:5.1px;background:#0b0b0b;border-radius:2.5px"></div><div style="left:2845.3px;top:96px;width:72px;height:20.3px;background:#145049;"></div><div class="mi" style="left:2849.5px;top:56.7px;width:63.5px;height:15px;"><i></i>7.1.4</div><div class="mi" style="left:2849.5px;top:77.9px;width:63.5px;height:15px;"><i></i>5.1C</div><div class="mi" style="left:2849.5px;top:98.8px;width:63.5px;height:15px;"><i></i>5.1 B</div><div class="mi" style="left:2849.5px;top:119.8px;width:63.5px;height:15px;"><i></i>5.1 A</div><div class="mi" style="left:2849.5px;top:140.7px;width:63.5px;height:15px;"><i></i>Cue 2</div><div class="mi" style="left:2849.5px;top:161.9px;width:63.5px;height:15px;"><i></i>cue 1</div><div class="mi" style="left:2849.5px;top:182.8px;width:63.5px;height:15px;"><i></i>Mix Group</div><div class="mb" style="left:2849.5px;top:211.6px;width:63.5px;height:15px;"><i style="background:#5080d8"></i>Mix Group</div><div style="left:2848.3px;top:230.3px;width:65.6px;height:5.1px;background:#151515;border-radius:2.5px"></div><div style="left:2845.3px;top:238.1px;width:72px;height:599.9px;background:#38225a;"></div><div style="left:2917.3px;top:24.9px;width:2px;height:213px;background:#161616;"></div><div style="left:2919.3px;top:24.9px;width:72px;height:29.3px;background:#413f70;"></div><div class="mb" style="left:2923.5px;top:27.9px;width:63.5px;height:15.1px;"><i style="background:#f08050"></i>ATMOS 9.1.6</div><div style="left:2922.3px;top:46.5px;width:65.6px;height:5.1px;background:#0b0b0b;border-radius:2.5px"></div><div style="left:2919.3px;top:96px;width:72px;height:20.3px;background:#145049;"></div><div class="mi" style="left:2923.5px;top:56.7px;width:63.5px;height:15px;"><i></i>7.1.4</div><div class="mi" style="left:2923.5px;top:77.9px;width:63.5px;height:15px;"><i></i>5.1C</div><div class="mi" style="left:2923.5px;top:98.8px;width:63.5px;height:15px;"><i></i>5.1 B</div><div class="mi" style="left:2923.5px;top:119.8px;width:63.5px;height:15px;"><i></i>5.1 A</div><div class="mi" style="left:2923.5px;top:140.7px;width:63.5px;height:15px;"><i></i>Cue 2</div><div class="mi" style="left:2923.5px;top:161.9px;width:63.5px;height:15px;"><i></i>cue 1</div><div class="mi" style="left:2923.5px;top:182.8px;width:63.5px;height:15px;"><i></i>Mix Group</div><div class="mb" style="left:2923.5px;top:211.6px;width:63.5px;height:15px;"><i style="background:#5080d8"></i>Mix Group</div><div style="left:2922.3px;top:230.3px;width:65.6px;height:5.1px;background:#151515;border-radius:2.5px"></div><div style="left:2919.3px;top:238.1px;width:72px;height:599.9px;background:#38225a;"></div><div style="left:2991.3px;top:24.9px;width:2px;height:213px;background:#161616;"></div><div style="left:2993.3px;top:24.9px;width:72px;height:29.3px;background:#413f70;"></div><div class="mb" style="left:2997.5px;top:27.9px;width:63.5px;height:15.1px;"><i style="background:#f08050"></i>ATMOS 9.1.6</div><div style="left:2996.3px;top:46.5px;width:65.6px;height:5.1px;background:#0b0b0b;border-radius:2.5px"></div><div style="left:2993.3px;top:96px;width:72px;height:20.3px;background:#145049;"></div><div class="mi" style="left:2997.5px;top:56.7px;width:63.5px;height:15px;"><i></i>7.1.4</div><div class="mi" style="left:2997.5px;top:77.9px;width:63.5px;height:15px;"><i></i>5.1C</div><div class="mb" style="left:2997.5px;top:98.8px;width:63.5px;height:15px;"><i style="background:#5080d8"></i>5.1 B</div><div class="mi" style="left:2997.5px;top:119.8px;width:63.5px;height:15px;"><i></i>5.1 A</div><div class="mb" style="left:2997.5px;top:140.7px;width:63.5px;height:15px;"><i style="background:#50c050"></i>Cue 2</div><div class="mi" style="left:2997.5px;top:161.9px;width:63.5px;height:15px;"><i></i>cue 1</div><div class="mi" style="left:2997.5px;top:182.8px;width:63.5px;height:15px;"><i></i>Mix Group</div><div class="mb" style="left:2997.5px;top:211.6px;width:63.5px;height:15px;"><i style="background:#5080d8"></i>Mix Group</div><div style="left:2996.3px;top:230.3px;width:65.6px;height:5.1px;background:#151515;border-radius:2.5px"></div><div style="left:2993.3px;top:238.1px;width:72px;height:599.9px;background:#21574f;"></div><div style="left:3065.3px;top:24.9px;width:2px;height:213px;background:#161616;"></div><div style="left:3067.3px;top:24.9px;width:72px;height:29.3px;background:#413f70;"></div><div class="mb" style="left:3071.5px;top:27.9px;width:63.5px;height:15.1px;"><i style="background:#f08050"></i>ATMOS 9.1.6</div><div style="left:3070.3px;top:46.5px;width:65.6px;height:5.1px;background:#0b0b0b;border-radius:2.5px"></div><div style="left:3067.3px;top:96px;width:72px;height:20.3px;background:#145049;"></div><div class="mi" style="left:3071.5px;top:56.7px;width:63.5px;height:15px;"><i></i>7.1.4</div><div class="mi" style="left:3071.5px;top:77.9px;width:63.5px;height:15px;"><i></i>5.1C</div><div class="mi" style="left:3071.5px;top:98.8px;width:63.5px;height:15px;"><i></i>5.1 B</div><div class="mi" style="left:3071.5px;top:119.8px;width:63.5px;height:15px;"><i></i>5.1 A</div><div class="mi" style="left:3071.5px;top:182.8px;width:63.5px;height:15px;"><i></i>Mix Group</div><div style="left:3067.3px;top:238.1px;width:72px;height:599.9px;background:#1e1e1e;"></div><div style="left:3139.3px;top:24.9px;width:2px;height:213px;background:#161616;"></div><div style="left:3141.3px;top:24.9px;width:72px;height:29.3px;background:#5b58a6;box-shadow:inset 0 0 6px rgba(160,150,255,.6)"></div><div class="mb" style="left:3145.5px;top:27.9px;width:63.5px;height:15.1px;"><i style="background:#f08050"></i>ATMOS 9.1.6</div><div style="left:3144.3px;top:46.5px;width:65.6px;height:5.1px;background:#0b0b0b;border-radius:2.5px"></div><div style="left:3141.3px;top:96px;width:72px;height:20.3px;background:#145049;"></div><div class="mb" style="left:3145.5px;top:56.7px;width:63.5px;height:15px;"><i style="background:#f08050"></i>7.1.4</div><div class="mb" style="left:3145.5px;top:77.9px;width:63.5px;height:15px;"><i style="background:#5080d8"></i>5.1C</div><div class="mb" style="left:3145.5px;top:98.8px;width:63.5px;height:15px;"><i style="background:#5080d8"></i>5.1 B</div><div class="mi" style="left:3145.5px;top:119.8px;width:63.5px;height:15px;"><i></i>5.1 A</div><div class="mb" style="left:3145.5px;top:140.7px;width:63.5px;height:15px;"><i style="background:#50c050"></i>Cue 2</div><div class="mi" style="left:3145.5px;top:161.9px;width:63.5px;height:15px;"><i></i>cue 1</div><div class="mb" style="left:3145.5px;top:182.8px;width:63.5px;height:15px;"><i style="background:#5080d8"></i>Mix Group</div><div style="left:3141.3px;top:206px;width:72px;height:632px;background:#5a5a5a;"></div><div class="mi" style="left:3145.5px;top:211.6px;width:63.5px;height:15px;"><i></i>Mix Group</div><div style="left:3213.3px;top:24.9px;width:2px;height:213px;background:#161616;"></div><div style="left:3215.3px;top:24.9px;width:72px;height:29.3px;background:#413f70;"></div><div class="mb" style="left:3219.5px;top:27.9px;width:63.5px;height:15.1px;"><i style="background:#f08050"></i>ATMOS 9.1.6</div><div style="left:3218.3px;top:46.5px;width:65.6px;height:5.1px;background:#0b0b0b;border-radius:2.5px"></div><div style="left:3215.3px;top:96px;width:72px;height:20.3px;background:#145049;"></div><div class="mi" style="left:3219.5px;top:56.7px;width:63.5px;height:15px;"><i></i>7.1.4</div><div class="mi" style="left:3219.5px;top:77.9px;width:63.5px;height:15px;"><i></i>5.1C</div><div class="mi" style="left:3219.5px;top:98.8px;width:63.5px;height:15px;"><i></i>5.1 B</div><div class="mi" style="left:3219.5px;top:119.8px;width:63.5px;height:15px;"><i></i>5.1 A</div><div class="mi" style="left:3219.5px;top:211.6px;width:63.5px;height:15px;"><i></i>Mix Group</div><div style="left:3215.3px;top:238.1px;width:72px;height:599.9px;background:#1e1e1e;"></div><div style="left:3287.3px;top:24.9px;width:2px;height:213px;background:#161616;"></div><div style="left:3289.3px;top:238.1px;width:87px;height:599.9px;background:#3f3e69;"></div><div style="left:2922.8px;top:47.5px;width:21px;height:2.8px;background:#a0c050;"></div><div style="left:2996.8px;top:47.5px;width:19px;height:2.8px;background:#a0c050;"></div><div style="left:3070.8px;top:47.5px;width:38px;height:2.8px;background:#a0c050;"></div><div style="left:3218.8px;top:47.5px;width:36px;height:2.8px;background:#a0c050;"></div><div style="left:3144.8px;top:47.5px;width:25px;height:2.8px;background:#90d8a0;"></div><div style="left:2922.8px;top:231.4px;width:21px;height:2.8px;background:#a0c050;"></div><div style="left:2996.8px;top:231.4px;width:19px;height:2.8px;background:#a0c050;"></div><div style="left:3144.3px;top:201px;width:65.6px;height:5.1px;background:#0b0b0b;border-radius:2.500px"></div><div style="left:3144.8px;top:202.1px;width:25px;height:2.8px;background:#90d8a0;"></div><div class="ol" style="left:3088px;top:213.6px;width:30.6px;height:11px;">MG1</div><div class="ol" style="left:3236px;top:184.8px;width:30.6px;height:11px;">MG2</div><div class="ol" style="left:3317.2px;top:29.5px;width:30.6px;height:11px;">MB2</div><div style="left:3376.5px;top:25px;width:2px;height:813px;background:#151515;"></div><div class="pm" style="left:3383px;top:30.5px;width:9px;height:9px;"></div><div class="rl" style="left:3396.5px;top:29.5px;width:34px;height:11px;">MB2</div><div class="pm pp" style="left:3383px;top:59.7px;width:9px;height:9px;"></div><div class="rl" style="left:3396.5px;top:58.7px;width:34px;height:11px;">MB1</div><div class="pm pp" style="left:3383px;top:80.9px;width:9px;height:9px;"></div><div class="rl" style="left:3396.5px;top:79.9px;width:34px;height:11px;">MG5</div><div class="pm pp" style="left:3383px;top:101.8px;width:9px;height:9px;"></div><div class="rl" style="left:3396.5px;top:100.8px;width:34px;height:11px;">MG4</div><div class="pm pp" style="left:3383px;top:122.8px;width:9px;height:9px;"></div><div class="rl" style="left:3396.5px;top:121.8px;width:34px;height:11px;">MG3</div><div class="pm pp" style="left:3383px;top:143.7px;width:9px;height:9px;"></div><div class="rl" style="left:3396.5px;top:142.7px;width:34px;height:11px;">AG2</div><div class="pm pp" style="left:3383px;top:164.9px;width:9px;height:9px;"></div><div class="rl" style="left:3396.5px;top:163.9px;width:34px;height:11px;">AG1</div><div class="pm" style="left:3383px;top:185.8px;width:9px;height:9px;"></div><div class="rl" style="left:3396.5px;top:184.8px;width:34px;height:11px;">MG2</div><div class="pm" style="left:3383px;top:214.6px;width:9px;height:9px;"></div><div class="rl" style="left:3396.5px;top:213.6px;width:34px;height:11px;">MG1</div><div class="pm" style="left:3383px;top:239.5px;width:9px;height:9px;"></div><div class="rl" style="left:3396.5px;top:238.5px;width:34px;height:11px;">Panning</div><div class="pm" style="left:3383px;top:319.5px;width:9px;height:9px;"></div><div class="rl" style="left:3396.5px;top:318.5px;width:34px;height:11px;">Effect</div><div class="pm" style="left:3383px;top:478.5px;width:9px;height:9px;"></div><div class="rl" style="left:3396.5px;top:477.5px;width:34px;height:11px;">Gain</div><div class="pm" style="left:3383px;top:749px;width:9px;height:9px;"></div><div class="rl" style="left:3396.5px;top:748px;width:34px;height:11px;">Mute</div><div class="pm pp" style="left:3383px;top:824.9px;width:9px;height:9px;"></div><div class="rl" style="left:3396.5px;top:823.9px;width:34px;height:11px;">I/O</div><div class="bx" style="left:2775.5px;top:241.6px;width:63.5px;height:64px;"></div><div style="left:2806.8px;top:243.5px;width:1px;height:60px;background:#2b2b2b;"></div><div style="left:2777.3px;top:273.7px;width:60px;height:1px;background:#2b2b2b;"></div><div style="left:2794.3px;top:231.7px;width:26px;height:26px;border-radius:13px;background:radial-gradient(rgba(255,255,255,.35),rgba(255,255,255,0) 70%)"></div><div style="left:2804.1px;top:241.5px;width:6.4px;height:6.4px;background:#d2d2d2;border-radius:4px"></div><svg style="position:absolute;left:2835.3px;top:270.2px" width="5" height="8"><path d="M4.500 0v8l-4.500-4z" fill="#ddd"/></svg><div class="bx" style="left:2849.5px;top:241.6px;width:63.5px;height:64px;"></div><div style="left:2880.8px;top:243.5px;width:1px;height:60px;background:#2b2b2b;"></div><div style="left:2851.3px;top:273.7px;width:60px;height:1px;background:#2b2b2b;"></div><div style="left:2878.1px;top:241.5px;width:6.4px;height:6.4px;background:#d2d2d2;border-radius:4px"></div><svg style="position:absolute;left:2909.3px;top:270.2px" width="5" height="8"><path d="M4.500 0v8l-4.500-4z" fill="#ddd"/></svg><div class="bx" style="left:2923.5px;top:241.6px;width:63.5px;height:64px;"></div><div style="left:2954.8px;top:243.5px;width:1px;height:60px;background:#2b2b2b;"></div><div style="left:2925.3px;top:273.7px;width:60px;height:1px;background:#2b2b2b;"></div><div style="left:2952.1px;top:241.5px;width:6.4px;height:6.4px;background:#d2d2d2;border-radius:4px"></div><svg style="position:absolute;left:2983.3px;top:270.2px" width="5" height="8"><path d="M4.500 0v8l-4.500-4z" fill="#ddd"/></svg><div class="bx" style="left:2997.5px;top:241.6px;width:63.5px;height:64px;"></div><div style="left:3028.8px;top:243.5px;width:1px;height:60px;background:#2b2b2b;"></div><div style="left:2999.3px;top:273.7px;width:60px;height:1px;background:#2b2b2b;"></div><div style="left:3026.1px;top:241.5px;width:6.4px;height:6.4px;background:#d2d2d2;border-radius:4px"></div><svg style="position:absolute;left:3057.3px;top:270.2px" width="5" height="8"><path d="M4.500 0v8l-4.500-4z" fill="#ddd"/></svg><div class="bx" style="left:3071.5px;top:241.6px;width:63.5px;height:64px;background:#161616;border-color:#121212"></div><div style="left:3102.8px;top:243.5px;width:1px;height:60px;background:#2b2b2b;"></div><div style="left:3073.3px;top:273.7px;width:60px;height:1px;background:#2b2b2b;"></div><div style="left:3069.8px;top:246.8px;width:6.4px;height:6.4px;background:#e0e0e0;border-radius:4px"></div><div style="left:3103.2px;top:246.8px;width:6.4px;height:6.4px;background:#5cc85c;border-radius:4px"></div><div style="left:3130.3px;top:246.8px;width:6.4px;height:6.4px;background:#e01010;border-radius:4px"></div><svg style="position:absolute;left:3131.3px;top:262px" width="5" height="8"><path d="M4.500 0v8l-4.500-4z" fill="#ddd"/></svg><div class="bx" style="left:3145.5px;top:241.6px;width:63.5px;height:64px;"></div><div style="left:3176.8px;top:243.5px;width:1px;height:60px;background:#2b2b2b;"></div><div style="left:3147.3px;top:273.7px;width:60px;height:1px;background:#2b2b2b;"></div><div style="left:3144.3px;top:261.5px;width:6.4px;height:6.4px;background:#e0e0e0;border-radius:4px"></div><div style="left:3174.1px;top:261.5px;width:6.4px;height:6.4px;background:#5cc85c;border-radius:4px"></div><div style="left:3203.8px;top:261.5px;width:6.4px;height:6.4px;background:#e01010;border-radius:4px"></div><svg style="position:absolute;left:3205.3px;top:261px" width="5" height="8"><path d="M4.500 0v8l-4.500-4z" fill="#ddd"/></svg><div class="bx" style="left:3219.5px;top:241.6px;width:63.5px;height:64px;background:#161616;border-color:#121212"></div><div style="left:3250.8px;top:243.5px;width:1px;height:60px;background:#2b2b2b;"></div><div style="left:3221.3px;top:273.7px;width:60px;height:1px;background:#2b2b2b;"></div><div style="left:3217.8px;top:241.5px;width:6.4px;height:6.4px;background:#e0e0e0;border-radius:4px"></div><div style="left:3248.2px;top:241.5px;width:6.4px;height:6.4px;background:#5cc85c;border-radius:4px"></div><div style="left:3278.3px;top:241.5px;width:6.4px;height:6.4px;background:#e01010;border-radius:4px"></div><svg style="position:absolute;left:3279.3px;top:270.5px" width="5" height="8"><path d="M4.500 0v8l-4.500-4z" fill="#ddd"/></svg><div class="bx" style="left:2775.5px;top:319.1px;width:63.5px;height:32.6px;"></div><div class="bx" style="left:2775.5px;top:357.3px;width:63.5px;height:32.7px;"></div><div style="left:2806.8px;top:321px;width:1px;height:29px;background:#262626;"></div><div style="left:2777.3px;top:335px;width:60px;height:1px;background:#262626;"></div><svg style="position:absolute;left:2775.5px;top:319px" width="64" height="72" fill="none" stroke-linecap="round"><path d="M2.500 16.400h58" stroke="#bcbcbc" stroke-width="1.900"/><path d="M3 68.500l58-27" stroke="#bcbcbc" stroke-width="1.900"/></svg><div class="bx" style="left:2849.5px;top:319.1px;width:63.5px;height:32.6px;"></div><div class="bx" style="left:2849.5px;top:357.3px;width:63.5px;height:32.7px;"></div><div style="left:2880.8px;top:321px;width:1px;height:29px;background:#262626;"></div><div style="left:2851.3px;top:335px;width:60px;height:1px;background:#262626;"></div><svg style="position:absolute;left:2849.5px;top:319px" width="64" height="72" fill="none" stroke-linecap="round"><path d="M2.500 16.400h58" stroke="#bcbcbc" stroke-width="1.900"/><path d="M3 68.500l58-27" stroke="#bcbcbc" stroke-width="1.900"/></svg><div class="bx" style="left:2923.5px;top:319.1px;width:63.5px;height:32.6px;"></div><div class="bx" style="left:2923.5px;top:357.3px;width:63.5px;height:32.7px;"></div><div style="left:2954.8px;top:321px;width:1px;height:29px;background:#262626;"></div><div style="left:2925.3px;top:335px;width:60px;height:1px;background:#262626;"></div><svg style="position:absolute;left:2923.5px;top:319px" width="64" height="72" fill="none" stroke-linecap="round"><path d="M9 30c5-14 10-18 18-27 4 9 8 10 13 13s6 8 9 9c4-6 7-8 11-9" stroke="#bcbcbc" stroke-width="1.700"/><path d="M3 68.500l30-14" stroke="#bcbcbc" stroke-width="1.900"/><path d="M33 54.500l29-3" stroke="#e8d820" stroke-width="1.900"/></svg><div class="bx" style="left:2997.5px;top:319.1px;width:63.5px;height:32.6px;"></div><div class="bx" style="left:2997.5px;top:357.3px;width:63.5px;height:32.7px;"></div><div style="left:3028.8px;top:321px;width:1px;height:29px;background:#262626;"></div><div style="left:2999.3px;top:335px;width:60px;height:1px;background:#262626;"></div><svg style="position:absolute;left:2997.5px;top:319px" width="64" height="72" fill="none" stroke-linecap="round"><path d="M9 30c5-14 10-18 18-27 4 9 8 10 13 13s6 8 9 9c4-6 7-8 11-9" stroke="#bcbcbc" stroke-width="1.700"/><path d="M3 68.500l30-14" stroke="#bcbcbc" stroke-width="1.900"/><path d="M33 54.500l29-3" stroke="#e8d820" stroke-width="1.900"/></svg><div class="bx" style="left:3071.5px;top:319.1px;width:63.5px;height:32.6px;background:#171717;border-color:#131313"></div><div class="bx" style="left:3071.5px;top:357.3px;width:63.5px;height:32.7px;background:#171717;border-color:#131313"></div><div style="left:3102.8px;top:321px;width:1px;height:29px;background:#262626;"></div><div style="left:3073.3px;top:335px;width:60px;height:1px;background:#262626;"></div><svg style="position:absolute;left:3071.5px;top:319px" width="64" height="72" fill="none" stroke-linecap="round"><path d="M3 68.500l58-27" stroke="#222" stroke-width="1"/></svg><div class="bx" style="left:3145.5px;top:319.1px;width:63.5px;height:32.6px;"></div><div class="bx" style="left:3145.5px;top:357.3px;width:63.5px;height:32.7px;"></div><div style="left:3176.8px;top:321px;width:1px;height:29px;background:#262626;"></div><div style="left:3147.3px;top:335px;width:60px;height:1px;background:#262626;"></div><svg style="position:absolute;left:3145.5px;top:319px" width="64" height="72" fill="none" stroke-linecap="round"><path d="M2.500 16.400h58" stroke="#bcbcbc" stroke-width="1.900"/><path d="M3 68.500l58-27" stroke="#bcbcbc" stroke-width="1.900"/></svg><div class="bx" style="left:3219.5px;top:319.1px;width:63.5px;height:32.6px;background:#171717;border-color:#131313"></div><div class="bx" style="left:3219.5px;top:357.3px;width:63.5px;height:32.7px;background:#171717;border-color:#131313"></div><div style="left:3250.8px;top:321px;width:1px;height:29px;background:#262626;"></div><div style="left:3221.3px;top:335px;width:60px;height:1px;background:#262626;"></div><svg style="position:absolute;left:3219.5px;top:319px" width="64" height="72" fill="none" stroke-linecap="round"><path d="M3 68.500l58-27" stroke="#222" stroke-width="1"/></svg><div class="bx" style="left:3293.5px;top:319.1px;width:63.5px;height:32.6px;"></div><div class="bx" style="left:3293.5px;top:357.3px;width:63.5px;height:32.7px;"></div><div style="left:3324.8px;top:321px;width:1px;height:29px;background:#262626;"></div><div style="left:3295.3px;top:335px;width:60px;height:1px;background:#262626;"></div><svg style="position:absolute;left:3293.5px;top:319px" width="64" height="72" fill="none" stroke-linecap="round"><path d="M2.500 24h22c8 0 10-8 15-8s7 8 20 8" stroke="#bcbcbc" stroke-width="1.700"/><path d="M3 68.500l58-27" stroke="#222" stroke-width="1"/></svg><div style="left:2775.8px;top:395.2px;width:62.7px;height:70px;border:1px solid rgba(255,255,255,.09);border-radius:3px;background:rgba(0,0,0,.06)"></div><div class="mb" style="left:2777.3px;top:397px;width:60.5px;height:13.5px;color:#9a9a9a;padding-left:13px"><i style="background:#c8a040;top:3.500px"></i>Strip Tools</div><div class="mb" style="left:2777.3px;top:415px;width:60.5px;height:13.5px;color:#9a9a9a;padding-left:13px"><i style="background:#c8a040;top:3.500px"></i>EqX</div><svg style="position:absolute;left:2775.3px;top:452px" width="64" height="12" stroke="#0c0c0c" fill="none" stroke-width="1"><path d="M3.600 5.500h7M7.100 2v7"/><path d="M52.700 2.500h7M52.700 4.500h7M52.700 6.500h7M52.700 8.500h7"/><path d="M25 6h6"/><rect x="38.800" y="2.500" width="6.500" height="6.500"/></svg><div style="left:2849.8px;top:395.2px;width:62.7px;height:70px;border:1px solid rgba(255,255,255,.09);border-radius:3px;background:rgba(0,0,0,.06)"></div><div class="mb" style="left:2851.3px;top:397px;width:60.5px;height:13.5px;color:#9a9a9a;padding-left:13px"><i style="background:#c8a040;top:3.500px"></i>Strip Tools</div><div class="mb" style="left:2851.3px;top:415px;width:60.5px;height:13.5px;color:#9a9a9a;padding-left:13px"><i style="background:#c8a040;top:3.500px"></i>Parametric Eq</div><svg style="position:absolute;left:2849.3px;top:452px" width="64" height="12" stroke="#0c0c0c" fill="none" stroke-width="1"><path d="M3.600 5.500h7M7.100 2v7"/><path d="M52.700 2.500h7M52.700 4.500h7M52.700 6.500h7M52.700 8.500h7"/><path d="M25 6h6"/><rect x="38.800" y="2.500" width="6.500" height="6.500"/></svg><div style="left:2923.8px;top:395.2px;width:62.7px;height:70px;border:1px solid rgba(255,255,255,.09);border-radius:3px;background:rgba(0,0,0,.06)"></div><div class="mb" style="left:2925.3px;top:397px;width:60.5px;height:13.5px;color:#9a9a9a;padding-left:13px"><i style="background:#c8a040;top:3.500px"></i>Strip Tools</div><div class="mb" style="left:2925.3px;top:415px;width:60.5px;height:13.5px;color:#9a9a9a;padding-left:13px"><i style="background:#c8a040;top:3.500px"></i>Parametric Eq</div><div class="mb" style="left:2925.3px;top:433px;width:60.5px;height:13.5px;color:#9a9a9a;padding-left:13px"><i style="background:#c8a040;top:3.500px"></i>EqX</div><svg style="position:absolute;left:2923.3px;top:452px" width="64" height="12" stroke="#0c0c0c" fill="none" stroke-width="1"><path d="M3.600 5.500h7M7.100 2v7"/><path d="M52.700 2.500h7M52.700 4.500h7M52.700 6.500h7M52.700 8.500h7"/><path d="M25 6h6"/><rect x="38.800" y="2.500" width="6.500" height="6.500"/></svg><div style="left:2997.8px;top:395.2px;width:62.7px;height:70px;border:1px solid rgba(255,255,255,.09);border-radius:3px;background:rgba(0,0,0,.06)"></div><div class="mb" style="left:2999.3px;top:397px;width:60.5px;height:13.5px;color:#9a9a9a;padding-left:13px"><i style="background:#c8a040;top:3.500px"></i>Strip Tools</div><svg style="position:absolute;left:2997.3px;top:452px" width="64" height="12" stroke="#0c0c0c" fill="none" stroke-width="1"><path d="M3.600 5.500h7M7.100 2v7"/><path d="M52.700 2.500h7M52.700 4.500h7M52.700 6.500h7M52.700 8.500h7"/><path d="M25 6h6"/><rect x="38.800" y="2.500" width="6.500" height="6.500"/></svg><div style="left:3071.8px;top:395.2px;width:62.7px;height:70px;border:1px solid rgba(255,255,255,.09);border-radius:3px;background:#1b1b1b"></div><svg style="position:absolute;left:3071.3px;top:452px" width="64" height="12" stroke="#4a4a4a" fill="none" stroke-width="1"><path d="M3.600 5.500h7M7.100 2v7"/><path d="M52.700 2.500h7M52.700 4.500h7M52.700 6.500h7M52.700 8.500h7"/></svg><div style="left:3145.8px;top:395.2px;width:62.7px;height:70px;border:1px solid rgba(255,255,255,.09);border-radius:3px;background:rgba(0,0,0,.06)"></div><div class="mb" style="left:3147.3px;top:397px;width:60.5px;height:13.5px;color:#9a9a9a;padding-left:13px"><i style="background:#c8a040;top:3.500px"></i>Strip Tools</div><div class="mb" style="left:3147.3px;top:415px;width:60.5px;height:13.5px;color:#9a9a9a;padding-left:13px"><i style="background:#c8a040;top:3.500px"></i>EqX</div><div class="mb" style="left:3147.3px;top:433px;width:60.5px;height:13.5px;color:#9a9a9a;padding-left:13px"><i style="background:#c8a040;top:3.500px"></i>Dynamics</div><svg style="position:absolute;left:3145.3px;top:452px" width="64" height="12" stroke="#0c0c0c" fill="none" stroke-width="1"><path d="M3.600 5.500h7M7.100 2v7"/><path d="M52.700 2.500h7M52.700 4.500h7M52.700 6.500h7M52.700 8.500h7"/><path d="M25 6h6"/><rect x="38.800" y="2.500" width="6.500" height="6.500"/></svg><div style="left:3219.8px;top:395.2px;width:62.7px;height:70px;border:1px solid rgba(255,255,255,.09);border-radius:3px;background:#1b1b1b"></div><svg style="position:absolute;left:3219.3px;top:452px" width="64" height="12" stroke="#4a4a4a" fill="none" stroke-width="1"><path d="M3.600 5.500h7M7.100 2v7"/><path d="M52.700 2.500h7M52.700 4.500h7M52.700 6.500h7M52.700 8.500h7"/></svg><div style="left:3293.8px;top:395.2px;width:62.7px;height:70px;border:1px solid rgba(255,255,255,.09);border-radius:3px;background:rgba(0,0,0,.06)"></div><div class="mb" style="left:3295.3px;top:397px;width:60.5px;height:13.5px;color:#9a9a9a;padding-left:13px"><i style="background:#c8a040;top:3.500px"></i>Bus Tools</div><svg style="position:absolute;left:3293.3px;top:452px" width="64" height="12" stroke="#0c0c0c" fill="none" stroke-width="1"><path d="M3.600 5.500h7M7.100 2v7"/><path d="M52.700 2.500h7M52.700 4.500h7M52.700 6.500h7M52.700 8.500h7"/><path d="M25 6h6"/><rect x="38.800" y="2.500" width="6.500" height="6.500"/></svg><div class="gv" style="left:2777.1px;top:477.4px;width:60.5px;height:12.4px;">-144.5</div><div class="gv" style="left:2851.1px;top:477.4px;width:60.5px;height:12.4px;">-144.5</div><div class="gv" style="left:2925.1px;top:477.4px;width:60.5px;height:12.4px;">-29.5</div><div class="gv" style="left:2999.1px;top:477.4px;width:60.5px;height:12.4px;">-30.1</div><div class="gv" style="left:3073.1px;top:477.4px;width:60.5px;height:12.4px;color:#f0b070">9R/78F</div><div class="gv" style="left:3147.1px;top:477.4px;width:60.5px;height:12.4px;">-22.0</div><div class="gv" style="left:3221.1px;top:477.4px;width:60.5px;height:12.4px;">-7.7</div><div class="gv" style="left:3295.1px;top:477.4px;width:76px;height:12.4px;">-5.5</div><div style="left:2792px;top:514px;width:3px;height:183px;background:#070707;border-radius:1.5px"></div><div style="left:2780.1px;top:514.6px;width:12px;height:1px;background:#0a0a0a;"></div><div class="sn" style="left:2808px;top:509.4px;width:14px;height:9px;color:#1c1030">12</div><div style="left:2787px;top:520.7px;width:5px;height:1px;background:#0a0a0a;"></div><div style="left:2787px;top:526.7px;width:5px;height:1px;background:#0a0a0a;"></div><div style="left:2780.1px;top:532.8px;width:12px;height:1px;background:#0a0a0a;"></div><div class="sn" style="left:2808px;top:527.6px;width:14px;height:9px;color:#1c1030">6</div><div style="left:2787px;top:538.8px;width:5px;height:1px;background:#0a0a0a;"></div><div style="left:2787px;top:544.7px;width:5px;height:1px;background:#0a0a0a;"></div><div style="left:2780.1px;top:550.7px;width:12px;height:1px;background:#0a0a0a;"></div><div class="sn" style="left:2808px;top:545.5px;width:14px;height:9px;color:#1c1030">0</div><div style="left:2787px;top:556.7px;width:5px;height:1px;background:#0a0a0a;"></div><div style="left:2787px;top:562.8px;width:5px;height:1px;background:#0a0a0a;"></div><div style="left:2780.1px;top:568.8px;width:12px;height:1px;background:#0a0a0a;"></div><div class="sn" style="left:2808px;top:563.6px;width:14px;height:9px;color:#1c1030">6</div><div style="left:2787px;top:574.9px;width:5px;height:1px;background:#0a0a0a;"></div><div style="left:2787px;top:580.9px;width:5px;height:1px;background:#0a0a0a;"></div><div style="left:2780.1px;top:587px;width:12px;height:1px;background:#0a0a0a;"></div><div class="sn" style="left:2808px;top:581.8px;width:14px;height:9px;color:#1c1030">12</div><div style="left:2787px;top:593px;width:5px;height:1px;background:#0a0a0a;"></div><div style="left:2787px;top:598.9px;width:5px;height:1px;background:#0a0a0a;"></div><div style="left:2780.1px;top:604.9px;width:12px;height:1px;background:#0a0a0a;"></div><div class="sn" style="left:2808px;top:599.7px;width:14px;height:9px;color:#1c1030">18</div><div style="left:2787px;top:611px;width:5px;height:1px;background:#0a0a0a;"></div><div style="left:2780.1px;top:617px;width:12px;height:1px;background:#0a0a0a;"></div><div class="sn" style="left:2808px;top:611.8px;width:14px;height:9px;color:#1c1030">24</div><div style="left:2787px;top:623px;width:5px;height:1px;background:#0a0a0a;"></div><div style="left:2780.1px;top:628.9px;width:12px;height:1px;background:#0a0a0a;"></div><div class="sn" style="left:2808px;top:623.7px;width:14px;height:9px;color:#1c1030">30</div><div style="left:2787px;top:635px;width:5px;height:1px;background:#0a0a0a;"></div><div style="left:2780.1px;top:641px;width:12px;height:1px;background:#0a0a0a;"></div><div class="sn" style="left:2808px;top:635.8px;width:14px;height:9px;color:#1c1030">36</div><div style="left:2787px;top:647px;width:5px;height:1px;background:#0a0a0a;"></div><div style="left:2780.1px;top:653.1px;width:12px;height:1px;background:#0a0a0a;"></div><div class="sn" style="left:2808px;top:647.9px;width:14px;height:9px;color:#1c1030">42</div><div style="left:2787px;top:659px;width:5px;height:1px;background:#0a0a0a;"></div><div style="left:2780.1px;top:664.9px;width:12px;height:1px;background:#0a0a0a;"></div><div class="sn" style="left:2808px;top:659.7px;width:14px;height:9px;color:#1c1030">48</div><div style="left:2787px;top:671px;width:5px;height:1px;background:#0a0a0a;"></div><div style="left:2780.1px;top:677px;width:12px;height:1px;background:#0a0a0a;"></div><div class="sn" style="left:2808px;top:671.8px;width:14px;height:9px;color:#1c1030">54</div><div style="left:2787px;top:683px;width:5px;height:1px;background:#0a0a0a;"></div><div style="left:2780.1px;top:689.1px;width:12px;height:1px;background:#0a0a0a;"></div><div class="sn" style="left:2808px;top:683.9px;width:14px;height:9px;color:#1c1030">60</div><div class="sn" style="left:2808px;top:689.5px;width:14px;height:9px;color:#1c1030">oo</div><div style="left:2780.1px;top:695.5px;width:12px;height:1px;background:#0a0a0a;"></div><div style="left:2786.3px;top:534.4px;width:15px;height:34px;border-radius:2px;background:repeating-linear-gradient(#8c8c8c 0 1.5px,#6a6a6a 1.5px 3px),#6a6a6a;border-top:2px solid #b0b0b0;border-bottom:2px solid #6a6a6a;box-shadow:0 0 2px rgba(0,0,0,.6)"></div><div style="left:2786.3px;top:550.8px;width:15px;height:1.2px;background:#0a0a0a;"></div><div style="left:2826px;top:505.8px;width:11.6px;height:191.5px;background:#141414;border-radius:3px"></div><div style="left:2826.5px;top:506.3px;width:10.6px;height:8px;background:#0c0c0c;border-radius:2.5px"></div><div style="left:2866px;top:514px;width:3px;height:183px;background:#070707;border-radius:1.5px"></div><div style="left:2854.1px;top:514.6px;width:12px;height:1px;background:#0a0a0a;"></div><div class="sn" style="left:2882px;top:509.4px;width:14px;height:9px;color:#1c1030">12</div><div style="left:2861px;top:520.7px;width:5px;height:1px;background:#0a0a0a;"></div><div style="left:2861px;top:526.7px;width:5px;height:1px;background:#0a0a0a;"></div><div style="left:2854.1px;top:532.8px;width:12px;height:1px;background:#0a0a0a;"></div><div class="sn" style="left:2882px;top:527.6px;width:14px;height:9px;color:#1c1030">6</div><div style="left:2861px;top:538.8px;width:5px;height:1px;background:#0a0a0a;"></div><div style="left:2861px;top:544.7px;width:5px;height:1px;background:#0a0a0a;"></div><div style="left:2854.1px;top:550.7px;width:12px;height:1px;background:#0a0a0a;"></div><div class="sn" style="left:2882px;top:545.5px;width:14px;height:9px;color:#1c1030">0</div><div style="left:2861px;top:556.7px;width:5px;height:1px;background:#0a0a0a;"></div><div style="left:2861px;top:562.8px;width:5px;height:1px;background:#0a0a0a;"></div><div style="left:2854.1px;top:568.8px;width:12px;height:1px;background:#0a0a0a;"></div><div class="sn" style="left:2882px;top:563.6px;width:14px;height:9px;color:#1c1030">6</div><div style="left:2861px;top:574.9px;width:5px;height:1px;background:#0a0a0a;"></div><div style="left:2861px;top:580.9px;width:5px;height:1px;background:#0a0a0a;"></div><div style="left:2854.1px;top:587px;width:12px;height:1px;background:#0a0a0a;"></div><div class="sn" style="left:2882px;top:581.8px;width:14px;height:9px;color:#1c1030">12</div><div style="left:2861px;top:593px;width:5px;height:1px;background:#0a0a0a;"></div><div style="left:2861px;top:598.9px;width:5px;height:1px;background:#0a0a0a;"></div><div style="left:2854.1px;top:604.9px;width:12px;height:1px;background:#0a0a0a;"></div><div class="sn" style="left:2882px;top:599.7px;width:14px;height:9px;color:#1c1030">18</div><div style="left:2861px;top:611px;width:5px;height:1px;background:#0a0a0a;"></div><div style="left:2854.1px;top:617px;width:12px;height:1px;background:#0a0a0a;"></div><div class="sn" style="left:2882px;top:611.8px;width:14px;height:9px;color:#1c1030">24</div><div style="left:2861px;top:623px;width:5px;height:1px;background:#0a0a0a;"></div><div style="left:2854.1px;top:628.9px;width:12px;height:1px;background:#0a0a0a;"></div><div class="sn" style="left:2882px;top:623.7px;width:14px;height:9px;color:#1c1030">30</div><div style="left:2861px;top:635px;width:5px;height:1px;background:#0a0a0a;"></div><div style="left:2854.1px;top:641px;width:12px;height:1px;background:#0a0a0a;"></div><div class="sn" style="left:2882px;top:635.8px;width:14px;height:9px;color:#1c1030">36</div><div style="left:2861px;top:647px;width:5px;height:1px;background:#0a0a0a;"></div><div style="left:2854.1px;top:653.1px;width:12px;height:1px;background:#0a0a0a;"></div><div class="sn" style="left:2882px;top:647.9px;width:14px;height:9px;color:#1c1030">42</div><div style="left:2861px;top:659px;width:5px;height:1px;background:#0a0a0a;"></div><div style="left:2854.1px;top:664.9px;width:12px;height:1px;background:#0a0a0a;"></div><div class="sn" style="left:2882px;top:659.7px;width:14px;height:9px;color:#1c1030">48</div><div style="left:2861px;top:671px;width:5px;height:1px;background:#0a0a0a;"></div><div style="left:2854.1px;top:677px;width:12px;height:1px;background:#0a0a0a;"></div><div class="sn" style="left:2882px;top:671.8px;width:14px;height:9px;color:#1c1030">54</div><div style="left:2861px;top:683px;width:5px;height:1px;background:#0a0a0a;"></div><div style="left:2854.1px;top:689.1px;width:12px;height:1px;background:#0a0a0a;"></div><div class="sn" style="left:2882px;top:683.9px;width:14px;height:9px;color:#1c1030">60</div><div class="sn" style="left:2882px;top:689.5px;width:14px;height:9px;color:#1c1030">oo</div><div style="left:2854.1px;top:695.5px;width:12px;height:1px;background:#0a0a0a;"></div><div style="left:2860.3px;top:534.4px;width:15px;height:34px;border-radius:2px;background:repeating-linear-gradient(#8c8c8c 0 1.5px,#6a6a6a 1.5px 3px),#6a6a6a;border-top:2px solid #b0b0b0;border-bottom:2px solid #6a6a6a;box-shadow:0 0 2px rgba(0,0,0,.6)"></div><div style="left:2860.3px;top:550.8px;width:15px;height:1.2px;background:#0a0a0a;"></div><div style="left:2900px;top:505.8px;width:11.6px;height:191.5px;background:#141414;border-radius:3px"></div><div style="left:2900.5px;top:506.3px;width:10.6px;height:8px;background:#0c0c0c;border-radius:2.5px"></div><div style="left:2940px;top:514px;width:3px;height:183px;background:#070707;border-radius:1.5px"></div><div style="left:2928.1px;top:514.6px;width:12px;height:1px;background:#0a0a0a;"></div><div class="sn" style="left:2956px;top:509.4px;width:14px;height:9px;color:#1c1030">12</div><div style="left:2935px;top:520.7px;width:5px;height:1px;background:#0a0a0a;"></div><div style="left:2935px;top:526.7px;width:5px;height:1px;background:#0a0a0a;"></div><div style="left:2928.1px;top:532.8px;width:12px;height:1px;background:#0a0a0a;"></div><div class="sn" style="left:2956px;top:527.6px;width:14px;height:9px;color:#1c1030">6</div><div style="left:2935px;top:538.8px;width:5px;height:1px;background:#0a0a0a;"></div><div style="left:2935px;top:544.7px;width:5px;height:1px;background:#0a0a0a;"></div><div style="left:2928.1px;top:550.7px;width:12px;height:1px;background:#0a0a0a;"></div><div class="sn" style="left:2956px;top:545.5px;width:14px;height:9px;color:#1c1030">0</div><div style="left:2935px;top:556.7px;width:5px;height:1px;background:#0a0a0a;"></div><div style="left:2935px;top:562.8px;width:5px;height:1px;background:#0a0a0a;"></div><div style="left:2928.1px;top:568.8px;width:12px;height:1px;background:#0a0a0a;"></div><div class="sn" style="left:2956px;top:563.6px;width:14px;height:9px;color:#1c1030">6</div><div style="left:2935px;top:574.9px;width:5px;height:1px;background:#0a0a0a;"></div><div style="left:2935px;top:580.9px;width:5px;height:1px;background:#0a0a0a;"></div><div style="left:2928.1px;top:587px;width:12px;height:1px;background:#0a0a0a;"></div><div class="sn" style="left:2956px;top:581.8px;width:14px;height:9px;color:#1c1030">12</div><div style="left:2935px;top:593px;width:5px;height:1px;background:#0a0a0a;"></div><div style="left:2935px;top:598.9px;width:5px;height:1px;background:#0a0a0a;"></div><div style="left:2928.1px;top:604.9px;width:12px;height:1px;background:#0a0a0a;"></div><div class="sn" style="left:2956px;top:599.7px;width:14px;height:9px;color:#1c1030">18</div><div style="left:2935px;top:611px;width:5px;height:1px;background:#0a0a0a;"></div><div style="left:2928.1px;top:617px;width:12px;height:1px;background:#0a0a0a;"></div><div class="sn" style="left:2956px;top:611.8px;width:14px;height:9px;color:#1c1030">24</div><div style="left:2935px;top:623px;width:5px;height:1px;background:#0a0a0a;"></div><div style="left:2928.1px;top:628.9px;width:12px;height:1px;background:#0a0a0a;"></div><div class="sn" style="left:2956px;top:623.7px;width:14px;height:9px;color:#1c1030">30</div><div style="left:2935px;top:635px;width:5px;height:1px;background:#0a0a0a;"></div><div style="left:2928.1px;top:641px;width:12px;height:1px;background:#0a0a0a;"></div><div class="sn" style="left:2956px;top:635.8px;width:14px;height:9px;color:#1c1030">36</div><div style="left:2935px;top:647px;width:5px;height:1px;background:#0a0a0a;"></div><div style="left:2928.1px;top:653.1px;width:12px;height:1px;background:#0a0a0a;"></div><div class="sn" style="left:2956px;top:647.9px;width:14px;height:9px;color:#1c1030">42</div><div style="left:2935px;top:659px;width:5px;height:1px;background:#0a0a0a;"></div><div style="left:2928.1px;top:664.9px;width:12px;height:1px;background:#0a0a0a;"></div><div class="sn" style="left:2956px;top:659.7px;width:14px;height:9px;color:#1c1030">48</div><div style="left:2935px;top:671px;width:5px;height:1px;background:#0a0a0a;"></div><div style="left:2928.1px;top:677px;width:12px;height:1px;background:#0a0a0a;"></div><div class="sn" style="left:2956px;top:671.8px;width:14px;height:9px;color:#1c1030">54</div><div style="left:2935px;top:683px;width:5px;height:1px;background:#0a0a0a;"></div><div style="left:2928.1px;top:689.1px;width:12px;height:1px;background:#0a0a0a;"></div><div class="sn" style="left:2956px;top:683.9px;width:14px;height:9px;color:#1c1030">60</div><div class="sn" style="left:2956px;top:689.5px;width:14px;height:9px;color:#1c1030">oo</div><div style="left:2928.1px;top:695.5px;width:12px;height:1px;background:#0a0a0a;"></div><div style="left:2934.3px;top:555.5px;width:15px;height:34px;border-radius:2px;background:repeating-linear-gradient(#8c8c8c 0 1.5px,#6a6a6a 1.5px 3px),#6a6a6a;border-top:2px solid #b0b0b0;border-bottom:2px solid #6a6a6a;box-shadow:0 0 2px rgba(0,0,0,.6)"></div><div style="left:2934.3px;top:571.9px;width:15px;height:1.2px;background:#0a0a0a;"></div><div style="left:2974px;top:505.8px;width:11.6px;height:191.5px;background:#141414;border-radius:3px"></div><div style="left:2974.5px;top:506.3px;width:10.6px;height:8px;background:#0c0c0c;border-radius:2.5px"></div><div style="left:3014px;top:514px;width:3px;height:183px;background:#070707;border-radius:1.5px"></div><div style="left:3002.1px;top:514.6px;width:12px;height:1px;background:#0a0a0a;"></div><div class="sn" style="left:3030px;top:509.4px;width:14px;height:9px;color:#0f2c28">12</div><div style="left:3009px;top:520.7px;width:5px;height:1px;background:#0a0a0a;"></div><div style="left:3009px;top:526.7px;width:5px;height:1px;background:#0a0a0a;"></div><div style="left:3002.1px;top:532.8px;width:12px;height:1px;background:#0a0a0a;"></div><div class="sn" style="left:3030px;top:527.6px;width:14px;height:9px;color:#0f2c28">6</div><div style="left:3009px;top:538.8px;width:5px;height:1px;background:#0a0a0a;"></div><div style="left:3009px;top:544.7px;width:5px;height:1px;background:#0a0a0a;"></div><div style="left:3002.1px;top:550.7px;width:12px;height:1px;background:#0a0a0a;"></div><div class="sn" style="left:3030px;top:545.5px;width:14px;height:9px;color:#0f2c28">0</div><div style="left:3009px;top:556.7px;width:5px;height:1px;background:#0a0a0a;"></div><div style="left:3009px;top:562.8px;width:5px;height:1px;background:#0a0a0a;"></div><div style="left:3002.1px;top:568.8px;width:12px;height:1px;background:#0a0a0a;"></div><div class="sn" style="left:3030px;top:563.6px;width:14px;height:9px;color:#0f2c28">6</div><div style="left:3009px;top:574.9px;width:5px;height:1px;background:#0a0a0a;"></div><div style="left:3009px;top:580.9px;width:5px;height:1px;background:#0a0a0a;"></div><div style="left:3002.1px;top:587px;width:12px;height:1px;background:#0a0a0a;"></div><div class="sn" style="left:3030px;top:581.8px;width:14px;height:9px;color:#0f2c28">12</div><div style="left:3009px;top:593px;width:5px;height:1px;background:#0a0a0a;"></div><div style="left:3009px;top:598.9px;width:5px;height:1px;background:#0a0a0a;"></div><div style="left:3002.1px;top:604.9px;width:12px;height:1px;background:#0a0a0a;"></div><div class="sn" style="left:3030px;top:599.7px;width:14px;height:9px;color:#0f2c28">18</div><div style="left:3009px;top:611px;width:5px;height:1px;background:#0a0a0a;"></div><div style="left:3002.1px;top:617px;width:12px;height:1px;background:#0a0a0a;"></div><div class="sn" style="left:3030px;top:611.8px;width:14px;height:9px;color:#0f2c28">24</div><div style="left:3009px;top:623px;width:5px;height:1px;background:#0a0a0a;"></div><div style="left:3002.1px;top:628.9px;width:12px;height:1px;background:#0a0a0a;"></div><div class="sn" style="left:3030px;top:623.7px;width:14px;height:9px;color:#0f2c28">30</div><div style="left:3009px;top:635px;width:5px;height:1px;background:#0a0a0a;"></div><div style="left:3002.1px;top:641px;width:12px;height:1px;background:#0a0a0a;"></div><div class="sn" style="left:3030px;top:635.8px;width:14px;height:9px;color:#0f2c28">36</div><div style="left:3009px;top:647px;width:5px;height:1px;background:#0a0a0a;"></div><div style="left:3002.1px;top:653.1px;width:12px;height:1px;background:#0a0a0a;"></div><div class="sn" style="left:3030px;top:647.9px;width:14px;height:9px;color:#0f2c28">42</div><div style="left:3009px;top:659px;width:5px;height:1px;background:#0a0a0a;"></div><div style="left:3002.1px;top:664.9px;width:12px;height:1px;background:#0a0a0a;"></div><div class="sn" style="left:3030px;top:659.7px;width:14px;height:9px;color:#0f2c28">48</div><div style="left:3009px;top:671px;width:5px;height:1px;background:#0a0a0a;"></div><div style="left:3002.1px;top:677px;width:12px;height:1px;background:#0a0a0a;"></div><div class="sn" style="left:3030px;top:671.8px;width:14px;height:9px;color:#0f2c28">54</div><div style="left:3009px;top:683px;width:5px;height:1px;background:#0a0a0a;"></div><div style="left:3002.1px;top:689.1px;width:12px;height:1px;background:#0a0a0a;"></div><div class="sn" style="left:3030px;top:683.9px;width:14px;height:9px;color:#0f2c28">60</div><div class="sn" style="left:3030px;top:689.5px;width:14px;height:9px;color:#0f2c28">oo</div><div style="left:3002.1px;top:695.5px;width:12px;height:1px;background:#0a0a0a;"></div><div style="left:3008.3px;top:534.4px;width:15px;height:34px;border-radius:2px;background:repeating-linear-gradient(#8c8c8c 0 1.5px,#6a6a6a 1.5px 3px),#6a6a6a;border-top:2px solid #b0b0b0;border-bottom:2px solid #6a6a6a;box-shadow:0 0 2px rgba(0,0,0,.6)"></div><div style="left:3008.3px;top:550.8px;width:15px;height:1.2px;background:#0a0a0a;"></div><div style="left:3048px;top:505.8px;width:11.6px;height:191.5px;background:#141414;border-radius:3px"></div><div style="left:3048.5px;top:506.3px;width:10.6px;height:8px;background:#0c0c0c;border-radius:2.5px"></div><div style="left:3088px;top:514px;width:3px;height:183px;background:#070707;border-radius:1.5px"></div><div style="left:3076.1px;top:514.6px;width:12px;height:1px;background:#8a8a8a;"></div><div class="sn" style="left:3104px;top:509.4px;width:14px;height:9px;color:#555">12</div><div style="left:3083px;top:520.7px;width:5px;height:1px;background:#8a8a8a;"></div><div style="left:3083px;top:526.7px;width:5px;height:1px;background:#8a8a8a;"></div><div style="left:3076.1px;top:532.8px;width:12px;height:1px;background:#8a8a8a;"></div><div class="sn" style="left:3104px;top:527.6px;width:14px;height:9px;color:#555">6</div><div style="left:3083px;top:538.8px;width:5px;height:1px;background:#8a8a8a;"></div><div style="left:3083px;top:544.7px;width:5px;height:1px;background:#8a8a8a;"></div><div style="left:3076.1px;top:550.7px;width:12px;height:1px;background:#8a8a8a;"></div><div class="sn" style="left:3104px;top:545.5px;width:14px;height:9px;color:#555">0</div><div style="left:3083px;top:556.7px;width:5px;height:1px;background:#8a8a8a;"></div><div style="left:3083px;top:562.8px;width:5px;height:1px;background:#8a8a8a;"></div><div style="left:3076.1px;top:568.8px;width:12px;height:1px;background:#8a8a8a;"></div><div class="sn" style="left:3104px;top:563.6px;width:14px;height:9px;color:#555">6</div><div style="left:3083px;top:574.9px;width:5px;height:1px;background:#8a8a8a;"></div><div style="left:3083px;top:580.9px;width:5px;height:1px;background:#8a8a8a;"></div><div style="left:3076.1px;top:587px;width:12px;height:1px;background:#8a8a8a;"></div><div class="sn" style="left:3104px;top:581.8px;width:14px;height:9px;color:#555">12</div><div style="left:3083px;top:593px;width:5px;height:1px;background:#8a8a8a;"></div><div style="left:3083px;top:598.9px;width:5px;height:1px;background:#8a8a8a;"></div><div style="left:3076.1px;top:604.9px;width:12px;height:1px;background:#8a8a8a;"></div><div class="sn" style="left:3104px;top:599.7px;width:14px;height:9px;color:#555">18</div><div style="left:3083px;top:611px;width:5px;height:1px;background:#8a8a8a;"></div><div style="left:3076.1px;top:617px;width:12px;height:1px;background:#8a8a8a;"></div><div class="sn" style="left:3104px;top:611.8px;width:14px;height:9px;color:#555">24</div><div style="left:3083px;top:623px;width:5px;height:1px;background:#8a8a8a;"></div><div style="left:3076.1px;top:628.9px;width:12px;height:1px;background:#8a8a8a;"></div><div class="sn" style="left:3104px;top:623.7px;width:14px;height:9px;color:#555">30</div><div style="left:3083px;top:635px;width:5px;height:1px;background:#8a8a8a;"></div><div style="left:3076.1px;top:641px;width:12px;height:1px;background:#8a8a8a;"></div><div class="sn" style="left:3104px;top:635.8px;width:14px;height:9px;color:#555">36</div><div style="left:3083px;top:647px;width:5px;height:1px;background:#8a8a8a;"></div><div style="left:3076.1px;top:653.1px;width:12px;height:1px;background:#8a8a8a;"></div><div class="sn" style="left:3104px;top:647.9px;width:14px;height:9px;color:#555">42</div><div style="left:3083px;top:659px;width:5px;height:1px;background:#8a8a8a;"></div><div style="left:3076.1px;top:664.9px;width:12px;height:1px;background:#8a8a8a;"></div><div class="sn" style="left:3104px;top:659.7px;width:14px;height:9px;color:#555">48</div><div style="left:3083px;top:671px;width:5px;height:1px;background:#8a8a8a;"></div><div style="left:3076.1px;top:677px;width:12px;height:1px;background:#8a8a8a;"></div><div class="sn" style="left:3104px;top:671.8px;width:14px;height:9px;color:#555">54</div><div style="left:3083px;top:683px;width:5px;height:1px;background:#8a8a8a;"></div><div style="left:3076.1px;top:689.1px;width:12px;height:1px;background:#8a8a8a;"></div><div class="sn" style="left:3104px;top:683.9px;width:14px;height:9px;color:#555">60</div><div class="sn" style="left:3104px;top:689.5px;width:14px;height:9px;color:#555">oo</div><div style="left:3076.1px;top:695.5px;width:12px;height:1px;background:#8a8a8a;"></div><div style="left:3076.1px;top:550.5px;width:12px;height:1.4px;background:#ddd;"></div><div style="left:3082.3px;top:565.6px;width:15px;height:34px;border-radius:2px;background:repeating-linear-gradient(#3838b8 0 1.5px,#24249a 1.5px 3px),#24249a;border-top:2px solid #5a5ad8;border-bottom:2px solid #24249a;box-shadow:0 0 2px rgba(0,0,0,.6)"></div><div style="left:3082.3px;top:582px;width:15px;height:1.2px;background:#0a0a0a;"></div><div style="left:3122px;top:505.8px;width:11.6px;height:191.5px;background:#141414;border-radius:3px"></div><div style="left:3122.5px;top:506.3px;width:10.6px;height:8px;background:#0c0c0c;border-radius:2.5px"></div><div style="left:3162px;top:514px;width:3px;height:183px;background:#070707;border-radius:1.5px"></div><div style="left:3150.1px;top:514.6px;width:12px;height:1px;background:#0a0a0a;"></div><div class="sn" style="left:3178px;top:509.4px;width:14px;height:9px;color:#333">12</div><div style="left:3157px;top:520.7px;width:5px;height:1px;background:#0a0a0a;"></div><div style="left:3157px;top:526.7px;width:5px;height:1px;background:#0a0a0a;"></div><div style="left:3150.1px;top:532.8px;width:12px;height:1px;background:#0a0a0a;"></div><div class="sn" style="left:3178px;top:527.6px;width:14px;height:9px;color:#333">6</div><div style="left:3157px;top:538.8px;width:5px;height:1px;background:#0a0a0a;"></div><div style="left:3157px;top:544.7px;width:5px;height:1px;background:#0a0a0a;"></div><div style="left:3150.1px;top:550.7px;width:12px;height:1px;background:#0a0a0a;"></div><div class="sn" style="left:3178px;top:545.5px;width:14px;height:9px;color:#333">0</div><div style="left:3157px;top:556.7px;width:5px;height:1px;background:#0a0a0a;"></div><div style="left:3157px;top:562.8px;width:5px;height:1px;background:#0a0a0a;"></div><div style="left:3150.1px;top:568.8px;width:12px;height:1px;background:#0a0a0a;"></div><div class="sn" style="left:3178px;top:563.6px;width:14px;height:9px;color:#333">6</div><div style="left:3157px;top:574.9px;width:5px;height:1px;background:#0a0a0a;"></div><div style="left:3157px;top:580.9px;width:5px;height:1px;background:#0a0a0a;"></div><div style="left:3150.1px;top:587px;width:12px;height:1px;background:#0a0a0a;"></div><div class="sn" style="left:3178px;top:581.8px;width:14px;height:9px;color:#333">12</div><div style="left:3157px;top:593px;width:5px;height:1px;background:#0a0a0a;"></div><div style="left:3157px;top:598.9px;width:5px;height:1px;background:#0a0a0a;"></div><div style="left:3150.1px;top:604.9px;width:12px;height:1px;background:#0a0a0a;"></div><div class="sn" style="left:3178px;top:599.7px;width:14px;height:9px;color:#333">18</div><div style="left:3157px;top:611px;width:5px;height:1px;background:#0a0a0a;"></div><div style="left:3150.1px;top:617px;width:12px;height:1px;background:#0a0a0a;"></div><div class="sn" style="left:3178px;top:611.8px;width:14px;height:9px;color:#333">24</div><div style="left:3157px;top:623px;width:5px;height:1px;background:#0a0a0a;"></div><div style="left:3150.1px;top:628.9px;width:12px;height:1px;background:#0a0a0a;"></div><div class="sn" style="left:3178px;top:623.7px;width:14px;height:9px;color:#333">30</div><div style="left:3157px;top:635px;width:5px;height:1px;background:#0a0a0a;"></div><div style="left:3150.1px;top:641px;width:12px;height:1px;background:#0a0a0a;"></div><div class="sn" style="left:3178px;top:635.8px;width:14px;height:9px;color:#333">36</div><div style="left:3157px;top:647px;width:5px;height:1px;background:#0a0a0a;"></div><div style="left:3150.1px;top:653.1px;width:12px;height:1px;background:#0a0a0a;"></div><div class="sn" style="left:3178px;top:647.9px;width:14px;height:9px;color:#333">42</div><div style="left:3157px;top:659px;width:5px;height:1px;background:#0a0a0a;"></div><div style="left:3150.1px;top:664.9px;width:12px;height:1px;background:#0a0a0a;"></div><div class="sn" style="left:3178px;top:659.7px;width:14px;height:9px;color:#333">48</div><div style="left:3157px;top:671px;width:5px;height:1px;background:#0a0a0a;"></div><div style="left:3150.1px;top:677px;width:12px;height:1px;background:#0a0a0a;"></div><div class="sn" style="left:3178px;top:671.8px;width:14px;height:9px;color:#333">54</div><div style="left:3157px;top:683px;width:5px;height:1px;background:#0a0a0a;"></div><div style="left:3150.1px;top:689.1px;width:12px;height:1px;background:#0a0a0a;"></div><div class="sn" style="left:3178px;top:683.9px;width:14px;height:9px;color:#333">60</div><div class="sn" style="left:3178px;top:689.5px;width:14px;height:9px;color:#333">oo</div><div style="left:3150.1px;top:695.5px;width:12px;height:1px;background:#0a0a0a;"></div><div style="left:3156.3px;top:546px;width:15px;height:34px;border-radius:2px;background:repeating-linear-gradient(#8c8c8c 0 1.5px,#6a6a6a 1.5px 3px),#6a6a6a;border-top:2px solid #b0b0b0;border-bottom:2px solid #6a6a6a;box-shadow:0 0 2px rgba(0,0,0,.6)"></div><div style="left:3156.3px;top:562.4px;width:15px;height:1.2px;background:#0a0a0a;"></div><div style="left:3196px;top:505.8px;width:11.6px;height:191.5px;background:#141414;border-radius:3px"></div><div style="left:3196.5px;top:506.3px;width:10.6px;height:8px;background:#0c0c0c;border-radius:2.5px"></div><div style="left:3236px;top:514px;width:3px;height:183px;background:#070707;border-radius:1.5px"></div><div style="left:3224.1px;top:514.6px;width:12px;height:1px;background:#8a8a8a;"></div><div class="sn" style="left:3252px;top:509.4px;width:14px;height:9px;color:#555">12</div><div style="left:3231px;top:520.7px;width:5px;height:1px;background:#8a8a8a;"></div><div style="left:3231px;top:526.7px;width:5px;height:1px;background:#8a8a8a;"></div><div style="left:3224.1px;top:532.8px;width:12px;height:1px;background:#8a8a8a;"></div><div class="sn" style="left:3252px;top:527.6px;width:14px;height:9px;color:#555">6</div><div style="left:3231px;top:538.8px;width:5px;height:1px;background:#8a8a8a;"></div><div style="left:3231px;top:544.7px;width:5px;height:1px;background:#8a8a8a;"></div><div style="left:3224.1px;top:550.7px;width:12px;height:1px;background:#8a8a8a;"></div><div class="sn" style="left:3252px;top:545.5px;width:14px;height:9px;color:#555">0</div><div style="left:3231px;top:556.7px;width:5px;height:1px;background:#8a8a8a;"></div><div style="left:3231px;top:562.8px;width:5px;height:1px;background:#8a8a8a;"></div><div style="left:3224.1px;top:568.8px;width:12px;height:1px;background:#8a8a8a;"></div><div class="sn" style="left:3252px;top:563.6px;width:14px;height:9px;color:#555">6</div><div style="left:3231px;top:574.9px;width:5px;height:1px;background:#8a8a8a;"></div><div style="left:3231px;top:580.9px;width:5px;height:1px;background:#8a8a8a;"></div><div style="left:3224.1px;top:587px;width:12px;height:1px;background:#8a8a8a;"></div><div class="sn" style="left:3252px;top:581.8px;width:14px;height:9px;color:#555">12</div><div style="left:3231px;top:593px;width:5px;height:1px;background:#8a8a8a;"></div><div style="left:3231px;top:598.9px;width:5px;height:1px;background:#8a8a8a;"></div><div style="left:3224.1px;top:604.9px;width:12px;height:1px;background:#8a8a8a;"></div><div class="sn" style="left:3252px;top:599.7px;width:14px;height:9px;color:#555">18</div><div style="left:3231px;top:611px;width:5px;height:1px;background:#8a8a8a;"></div><div style="left:3224.1px;top:617px;width:12px;height:1px;background:#8a8a8a;"></div><div class="sn" style="left:3252px;top:611.8px;width:14px;height:9px;color:#555">24</div><div style="left:3231px;top:623px;width:5px;height:1px;background:#8a8a8a;"></div><div style="left:3224.1px;top:628.9px;width:12px;height:1px;background:#8a8a8a;"></div><div class="sn" style="left:3252px;top:623.7px;width:14px;height:9px;color:#555">30</div><div style="left:3231px;top:635px;width:5px;height:1px;background:#8a8a8a;"></div><div style="left:3224.1px;top:641px;width:12px;height:1px;background:#8a8a8a;"></div><div class="sn" style="left:3252px;top:635.8px;width:14px;height:9px;color:#555">36</div><div style="left:3231px;top:647px;width:5px;height:1px;background:#8a8a8a;"></div><div style="left:3224.1px;top:653.1px;width:12px;height:1px;background:#8a8a8a;"></div><div class="sn" style="left:3252px;top:647.9px;width:14px;height:9px;color:#555">42</div><div style="left:3231px;top:659px;width:5px;height:1px;background:#8a8a8a;"></div><div style="left:3224.1px;top:664.9px;width:12px;height:1px;background:#8a8a8a;"></div><div class="sn" style="left:3252px;top:659.7px;width:14px;height:9px;color:#555">48</div><div style="left:3231px;top:671px;width:5px;height:1px;background:#8a8a8a;"></div><div style="left:3224.1px;top:677px;width:12px;height:1px;background:#8a8a8a;"></div><div class="sn" style="left:3252px;top:671.8px;width:14px;height:9px;color:#555">54</div><div style="left:3231px;top:683px;width:5px;height:1px;background:#8a8a8a;"></div><div style="left:3224.1px;top:689.1px;width:12px;height:1px;background:#8a8a8a;"></div><div class="sn" style="left:3252px;top:683.9px;width:14px;height:9px;color:#555">60</div><div class="sn" style="left:3252px;top:689.5px;width:14px;height:9px;color:#555">oo</div><div style="left:3224.1px;top:695.5px;width:12px;height:1px;background:#8a8a8a;"></div><div style="left:3224.1px;top:550.5px;width:12px;height:1.4px;background:#ddd;"></div><div style="left:3230.3px;top:534.2px;width:15px;height:34px;border-radius:2px;background:repeating-linear-gradient(#3838b8 0 1.5px,#24249a 1.5px 3px),#24249a;border-top:2px solid #5a5ad8;border-bottom:2px solid #24249a;box-shadow:0 0 2px rgba(0,0,0,.6)"></div><div style="left:3230.3px;top:550.6px;width:15px;height:1.2px;background:#0a0a0a;"></div><div style="left:3270px;top:505.8px;width:11.6px;height:191.5px;background:#141414;border-radius:3px"></div><div style="left:3270.5px;top:506.3px;width:10.6px;height:8px;background:#0c0c0c;border-radius:2.5px"></div><div style="left:3310px;top:514px;width:3px;height:183px;background:#070707;border-radius:1.5px"></div><div style="left:3298.1px;top:514.6px;width:12px;height:1px;background:#0a0a0a;"></div><div class="sn" style="left:3318px;top:509.4px;width:14px;height:9px;color:#1e1c40">12</div><div style="left:3305px;top:520.7px;width:5px;height:1px;background:#0a0a0a;"></div><div style="left:3305px;top:526.7px;width:5px;height:1px;background:#0a0a0a;"></div><div style="left:3298.1px;top:532.8px;width:12px;height:1px;background:#0a0a0a;"></div><div class="sn" style="left:3318px;top:527.6px;width:14px;height:9px;color:#1e1c40">6</div><div style="left:3305px;top:538.8px;width:5px;height:1px;background:#0a0a0a;"></div><div style="left:3305px;top:544.7px;width:5px;height:1px;background:#0a0a0a;"></div><div style="left:3298.1px;top:550.7px;width:12px;height:1px;background:#0a0a0a;"></div><div class="sn" style="left:3318px;top:545.5px;width:14px;height:9px;color:#1e1c40">0</div><div style="left:3305px;top:556.7px;width:5px;height:1px;background:#0a0a0a;"></div><div style="left:3305px;top:562.8px;width:5px;height:1px;background:#0a0a0a;"></div><div style="left:3298.1px;top:568.8px;width:12px;height:1px;background:#0a0a0a;"></div><div class="sn" style="left:3318px;top:563.6px;width:14px;height:9px;color:#1e1c40">6</div><div style="left:3305px;top:574.9px;width:5px;height:1px;background:#0a0a0a;"></div><div style="left:3305px;top:580.9px;width:5px;height:1px;background:#0a0a0a;"></div><div style="left:3298.1px;top:587px;width:12px;height:1px;background:#0a0a0a;"></div><div class="sn" style="left:3318px;top:581.8px;width:14px;height:9px;color:#1e1c40">12</div><div style="left:3305px;top:593px;width:5px;height:1px;background:#0a0a0a;"></div><div style="left:3305px;top:598.9px;width:5px;height:1px;background:#0a0a0a;"></div><div style="left:3298.1px;top:604.9px;width:12px;height:1px;background:#0a0a0a;"></div><div class="sn" style="left:3318px;top:599.7px;width:14px;height:9px;color:#1e1c40">18</div><div style="left:3305px;top:611px;width:5px;height:1px;background:#0a0a0a;"></div><div style="left:3298.1px;top:617px;width:12px;height:1px;background:#0a0a0a;"></div><div class="sn" style="left:3318px;top:611.8px;width:14px;height:9px;color:#1e1c40">24</div><div style="left:3305px;top:623px;width:5px;height:1px;background:#0a0a0a;"></div><div style="left:3298.1px;top:628.9px;width:12px;height:1px;background:#0a0a0a;"></div><div class="sn" style="left:3318px;top:623.7px;width:14px;height:9px;color:#1e1c40">30</div><div style="left:3305px;top:635px;width:5px;height:1px;background:#0a0a0a;"></div><div style="left:3298.1px;top:641px;width:12px;height:1px;background:#0a0a0a;"></div><div class="sn" style="left:3318px;top:635.8px;width:14px;height:9px;color:#1e1c40">36</div><div style="left:3305px;top:647px;width:5px;height:1px;background:#0a0a0a;"></div><div style="left:3298.1px;top:653.1px;width:12px;height:1px;background:#0a0a0a;"></div><div class="sn" style="left:3318px;top:647.9px;width:14px;height:9px;color:#1e1c40">42</div><div style="left:3305px;top:659px;width:5px;height:1px;background:#0a0a0a;"></div><div style="left:3298.1px;top:664.9px;width:12px;height:1px;background:#0a0a0a;"></div><div class="sn" style="left:3318px;top:659.7px;width:14px;height:9px;color:#1e1c40">48</div><div style="left:3305px;top:671px;width:5px;height:1px;background:#0a0a0a;"></div><div style="left:3298.1px;top:677px;width:12px;height:1px;background:#0a0a0a;"></div><div class="sn" style="left:3318px;top:671.8px;width:14px;height:9px;color:#1e1c40">54</div><div style="left:3305px;top:683px;width:5px;height:1px;background:#0a0a0a;"></div><div style="left:3298.1px;top:689.1px;width:12px;height:1px;background:#0a0a0a;"></div><div class="sn" style="left:3318px;top:683.9px;width:14px;height:9px;color:#1e1c40">60</div><div class="sn" style="left:3318px;top:689.5px;width:14px;height:9px;color:#1e1c40">oo</div><div style="left:3298.1px;top:695.5px;width:12px;height:1px;background:#0a0a0a;"></div><div style="left:3304.3px;top:534px;width:15px;height:34px;border-radius:2px;background:repeating-linear-gradient(#c03030 0 1.5px,#9a2020 1.5px 3px),#9a2020;border-top:2px solid #e05050;border-bottom:2px solid #9a2020;box-shadow:0 0 2px rgba(0,0,0,.6)"></div><div style="left:3304.3px;top:550.4px;width:15px;height:1.2px;background:#0a0a0a;"></div><div style="left:3336px;top:505.8px;width:35.5px;height:191.5px;background:#141414;border-radius:3px"></div><div style="left:3336.5px;top:506.3px;width:34.5px;height:8px;background:#0c0c0c;border-radius:2.5px"></div><div style="left:2976px;top:629.1px;width:7.2px;height:67.2px;background:#8aaa50;"></div><div style="left:2976px;top:625.9px;width:7.2px;height:2px;background:#a0c050;"></div><div style="left:3050px;top:635px;width:7.2px;height:61.3px;background:#8aaa50;"></div><div style="left:3050px;top:629px;width:7.2px;height:2px;background:#a0c050;"></div><div style="left:3123.3px;top:589.7px;width:4.6px;height:106.6px;background:#90c060;"></div><div style="left:3123.3px;top:579px;width:4.6px;height:2px;background:#90c060;"></div><div style="left:3128.9px;top:589.7px;width:4.6px;height:106.6px;background:#90c060;"></div><div style="left:3128.9px;top:579px;width:4.6px;height:2px;background:#90c060;"></div><div style="left:3197.3px;top:632.4px;width:4.6px;height:63.9px;background:#a2d8a2;"></div><div style="left:3197.3px;top:611.7px;width:4.6px;height:2px;background:#a2d8a2;"></div><div style="left:3202.9px;top:625.7px;width:4.6px;height:70.6px;background:#a2d8a2;"></div><div style="left:3202.9px;top:611.7px;width:4.6px;height:2px;background:#a2d8a2;"></div><div style="left:3271.3px;top:599px;width:4.6px;height:97.3px;background:#a2d8a2;"></div><div style="left:3271.3px;top:573.3px;width:4.6px;height:2px;background:#a2d8a2;"></div><div style="left:3276.9px;top:599px;width:4.6px;height:97.3px;background:#a2d8a2;"></div><div style="left:3276.9px;top:585px;width:4.6px;height:2px;background:#a2d8a2;"></div><div style="left:3338px;top:666.3px;width:1.1px;height:30px;background:#a2d8a2;"></div><div style="left:3340px;top:636.3px;width:1.1px;height:60px;background:#a2d8a2;"></div><div style="left:3342px;top:621.3px;width:1.1px;height:75px;background:#a2d8a2;"></div><div style="left:3344px;top:601.3px;width:1.1px;height:95px;background:#a2d8a2;"></div><div style="left:3346px;top:596.3px;width:1.1px;height:100px;background:#a2d8a2;"></div><div style="left:3348px;top:611.3px;width:1.1px;height:85px;background:#a2d8a2;"></div><div style="left:3350px;top:651.3px;width:1.1px;height:45px;background:#a2d8a2;"></div><div style="left:3352px;top:626.3px;width:1.1px;height:70px;background:#a2d8a2;"></div><div style="left:3354px;top:661.3px;width:1.1px;height:35px;background:#a2d8a2;"></div><div style="left:3356px;top:671.3px;width:1.1px;height:25px;background:#a2d8a2;"></div><div style="left:3358px;top:641.3px;width:1.1px;height:55px;background:#a2d8a2;"></div><div style="left:3360px;top:631.3px;width:1.1px;height:65px;background:#a2d8a2;"></div><div style="left:3362px;top:646.3px;width:1.1px;height:50px;background:#a2d8a2;"></div><div style="left:3364px;top:656.3px;width:1.1px;height:40px;background:#a2d8a2;"></div><div style="left:3366px;top:666.3px;width:1.1px;height:30px;background:#a2d8a2;"></div><div style="left:3368px;top:688.3px;width:1.1px;height:8px;background:#a2d8a2;"></div><div class="pm pp" style="left:3125.3px;top:703px;width:8px;height:8px;width:8px;height:8px;border-color:#555"></div><div class="pm pp" style="left:3273.3px;top:703px;width:8px;height:8px;width:8px;height:8px;border-color:#555"></div><div class="pm pp" style="left:3362.3px;top:703px;width:8px;height:8px;width:8px;height:8px;border-color:#555"></div><div class="t" style="top:718.4px;font-size:15px;line-height:20px;color:#1c1030;left:2589px;width:400px;text-align:center;">1</div><div style="left:2813px;top:715px;width:25px;height:24.5px;background:#262626;border:1.5px solid #090909;border-radius:3px"><div style="left:5.500px;top:5.300px;width:11px;height:11px;border-radius:6px;background:#0c0c0c"></div></div><div class="t" style="top:718.4px;font-size:15px;line-height:20px;color:#1c1030;left:2663px;width:400px;text-align:center;">2</div><div style="left:2887px;top:715px;width:25px;height:24.5px;background:#262626;border:1.5px solid #090909;border-radius:3px"><div style="left:5.500px;top:5.300px;width:11px;height:11px;border-radius:6px;background:#0c0c0c"></div></div><div class="t" style="top:718.4px;font-size:15px;line-height:20px;color:#1c1030;left:2737px;width:400px;text-align:center;">5</div><div style="left:2961px;top:715px;width:25px;height:24.5px;background:#262626;border:1.5px solid #090909;border-radius:3px"><div style="left:5.500px;top:5.300px;width:11px;height:11px;border-radius:6px;background:#0c0c0c"></div></div><div class="t" style="top:718.4px;font-size:15px;line-height:20px;color:#0f2c28;left:2811px;width:400px;text-align:center;">9</div><div style="left:3035px;top:715px;width:25px;height:24.5px;background:#262626;border:1.5px solid #090909;border-radius:3px"><div style="left:5.500px;top:5.300px;width:11px;height:11px;border-radius:6px;background:#0c0c0c"></div></div><div class="t" style="top:721.4px;font-size:11px;line-height:14px;color:#8a8a8a;left:2888.3px;width:400px;text-align:center;">MG1</div><div class="sf" style="left:3114px;top:720px;width:18px;height:16px;font-size:8.500px;line-height:14px;color:#999">OS</div><div style="left:3146.5px;top:720px;width:26px;height:18px;background:#101010;border-radius:2px;font-size:15px;line-height:19px;text-align:center;color:#8a8a8a">15</div><div style="left:3183px;top:715px;width:25px;height:24.5px;background:#262626;border:1.5px solid #090909;border-radius:3px"><div style="left:5.500px;top:5.300px;width:11px;height:11px;border-radius:6px;background:#0c0c0c"></div></div><div class="t" style="top:721.4px;font-size:11px;line-height:14px;color:#8a8a8a;left:3036.3px;width:400px;text-align:center;">MG2</div><div class="sf" style="left:3262px;top:720px;width:18px;height:16px;font-size:8.500px;line-height:14px;color:#999">OS</div><div class="t" style="top:721.4px;font-size:11px;line-height:14px;color:#26244e;left:3110.3px;width:400px;text-align:center;">MB2</div><div class="sf" style="left:3336px;top:720px;width:18px;height:16px;font-size:8.500px;line-height:14px;color:#999">OS</div><div class="nm" style="left:2776.5px;top:747.5px;width:61.5px;height:12.7px;">Guitar</div><div class="sm" style="left:2776.2px;top:767.5px;width:24.4px;height:23.8px;">S</div><div class="sm" style="left:2813px;top:767.5px;width:25px;height:23.8px;">M</div><div class="sf" style="left:2776.5px;top:798px;width:17px;height:16.3px;">SF</div><div class="sf" style="left:2798.5px;top:798px;width:17px;height:16.3px;">Ø</div><div class="sf" style="left:2820.5px;top:798px;width:17.5px;height:16.3px;">PF</div><div class="nm" style="left:2776.5px;top:825.4px;width:61.5px;height:13px;color:#ccc">Touch</div><div class="nm" style="left:2850.5px;top:747.5px;width:61.5px;height:12.7px;">Bdrum</div><div class="sm" style="left:2850.2px;top:767.5px;width:24.4px;height:23.8px;">S</div><div class="sm" style="left:2887px;top:767.5px;width:25px;height:23.8px;">M</div><div class="sf" style="left:2850.5px;top:798px;width:17px;height:16.3px;">SF</div><div class="sf" style="left:2872.5px;top:798px;width:17px;height:16.3px;">Ø</div><div class="sf" style="left:2894.5px;top:798px;width:17.5px;height:16.3px;">PF</div><div class="nm" style="left:2850.5px;top:825.4px;width:61.5px;height:13px;color:#ccc">Touch</div><div class="nm" style="left:2924.5px;top:747.5px;width:61.5px;height:12.7px;">Vocal 1</div><div class="sm" style="left:2924.2px;top:767.5px;width:24.4px;height:23.8px;">S</div><div class="sm" style="left:2961px;top:767.5px;width:25px;height:23.8px;">M</div><div class="sf" style="left:2924.5px;top:798px;width:17px;height:16.3px;">SF</div><div class="sf" style="left:2946.5px;top:798px;width:17px;height:16.3px;">Ø</div><div class="sf" style="left:2968.5px;top:798px;width:17.5px;height:16.3px;">PF</div><div class="nm" style="left:2924.5px;top:825.4px;width:61.5px;height:13px;color:#ccc">Touch</div><div class="nm" style="left:2998.5px;top:747.5px;width:61.5px;height:12.7px;">Mono</div><div class="sm" style="left:2998.2px;top:767.5px;width:24.4px;height:23.8px;">S</div><div class="sm" style="left:3035px;top:767.5px;width:25px;height:23.8px;">M</div><div class="sf" style="left:2998.5px;top:798px;width:17px;height:16.3px;">SF</div><div class="sf" style="left:3020.5px;top:798px;width:17px;height:16.3px;">Ø</div><div class="sf" style="left:3042.5px;top:798px;width:17.5px;height:16.3px;">PF</div><div class="nm" style="left:2998.5px;top:825.4px;width:61.5px;height:13px;color:#ccc">Touch</div><div class="nm" style="left:3072.5px;top:747.5px;width:61.5px;height:12.7px;">Mix Group</div><div class="sm" style="left:3072.2px;top:767.5px;width:24.4px;height:23.8px;">S</div><div class="sm" style="left:3109px;top:767.5px;width:25px;height:23.8px;">M</div><div class="sf" style="left:3072.5px;top:798px;width:17px;height:16.3px;">SF</div><div class="sf" style="left:3094.5px;top:798px;width:17px;height:16.3px;">RE</div><div class="sf" style="left:3116.5px;top:798px;width:17.5px;height:16.3px;">PF</div><div class="nm" style="left:3072.5px;top:825.4px;width:61.5px;height:13px;color:#ccc">Touch</div><div class="nm" style="left:3146.5px;top:747.5px;width:61.5px;height:12.7px;">Stereo</div><div class="sm" style="left:3146.2px;top:767.5px;width:24.4px;height:23.8px;">S</div><div class="sm" style="left:3183px;top:767.5px;width:25px;height:23.8px;">M</div><div class="sf" style="left:3146.5px;top:798px;width:17px;height:16.3px;">SF</div><div class="sf" style="left:3168.5px;top:798px;width:17px;height:16.3px;">Ø</div><div class="sf" style="left:3190.5px;top:798px;width:17.5px;height:16.3px;">PF</div><div class="nm" style="left:3146.5px;top:825.4px;width:61.5px;height:13px;color:#ccc">Touch</div><div class="nm" style="left:3220.5px;top:747.5px;width:61.5px;height:12.7px;">Mix Group</div><div class="sm" style="left:3220.2px;top:767.5px;width:24.4px;height:23.8px;">S</div><div class="sm" style="left:3257px;top:767.5px;width:25px;height:23.8px;">M</div><div class="sf" style="left:3220.5px;top:798px;width:17px;height:16.3px;">SF</div><div class="sf" style="left:3242.5px;top:798px;width:17px;height:16.3px;">RE</div><div class="sf" style="left:3264.5px;top:798px;width:17.5px;height:16.3px;">PF</div><div class="nm" style="left:3220.5px;top:825.4px;width:61.5px;height:13px;color:#ccc">Touch</div><div class="nm" style="left:3294.5px;top:747.5px;width:76px;height:12.7px;">ATMOS 9.1.6</div><div class="sf" style="left:3294.5px;top:798px;width:17px;height:16.3px;">SF</div><div class="sf" style="left:3316.5px;top:798px;width:17px;height:16.3px;">RE</div><div class="sf" style="left:3338.5px;top:798px;width:17.5px;height:16.3px;">DI</div><div class="nm" style="left:3294.5px;top:825.4px;width:76px;height:13px;color:#ccc">Touch</div><div class="cbt" style="left:3382px;top:507.8px;width:17px;height:16.5px;background:#5562e6;color:#1a1a60">O</div><div class="cbt" style="left:3382px;top:549.5px;width:17px;height:16.5px;background:#c030c0;color:#400040">SC</div><div class="cbt" style="left:3404px;top:549.5px;width:17px;height:16.5px;background:#e08020;color:#402000">BC</div><div class="cbt" style="left:3382px;top:571.6px;width:17px;height:16.5px;background:#e0b040;color:#403000">GC</div><div class="cbt" style="left:3404px;top:571.6px;width:17px;height:16.5px;background:#2a2a2a;color:#888">FL</div><div class="cbt" style="left:3382px;top:614px;width:17px;height:16.5px;background:#2a2a2a;color:#888">S1</div><div class="cbt" style="left:3404px;top:614px;width:17px;height:16.5px;background:#2a2a2a;color:#888">S2</div><div class="cbt" style="left:3382px;top:636px;width:17px;height:16.5px;background:#2a2a2a;color:#888">S3</div><div class="cbt" style="left:3404px;top:636px;width:17px;height:16.5px;background:#2a2a2a;color:#888">S4</div><div class="cbt" style="left:3382px;top:677.5px;width:17px;height:16.5px;background:#d0d0d0;color:#333">DC</div><div class="cbt" style="left:3404px;top:677.5px;width:17px;height:16.5px;background:#20c040;color:#003000">DS</div><div class="cbt" style="left:3382px;top:720px;width:17px;height:16.5px;background:#2a2a2a;color:#888">AC</div><div class="cbt" style="left:3382px;top:770px;width:17px;height:16.5px;background:#2a2a2a;color:#888">S</div><div class="cbt" style="left:3404px;top:770px;width:17px;height:16.5px;background:#2a2a2a;color:#888">M</div><div style="left:2577.5px;top:837.5px;width:853.5px;height:536.5px;background:#1e1e1e;border-left:1px solid #0c0c0c;border-top:1px solid #101010"></div><div class="no" style="left:2585px;top:842.6px;width:14.7px;height:14.5px;">&lt;</div><div class="no" style="left:2605.2px;top:842.6px;width:14.7px;height:14.5px;">&gt;</div><div class="t" style="top:840.6px;font-size:15.5px;line-height:20px;color:#d8d8d8;letter-spacing:-0.4px;left:2627.1px;">Strip Tools</div><div class="nf" style="left:3202.7px;top:842.7px;width:15px;height:14.5px;">1</div><div class="nf" style="left:3222.6px;top:842.7px;width:15px;height:14.5px;">2</div><div class="nf" style="left:3242.5px;top:842.7px;width:15px;height:14.5px;">3</div><div class="no" style="left:3262.5px;top:842.7px;width:15px;height:14.5px;">4</div><div class="no" style="left:3282.5px;top:842.7px;width:15px;height:14.5px;">5</div><div class="no" style="left:3308px;top:842.7px;width:15px;height:14.5px;">R</div><svg style="position:absolute;left:3345px;top:842px" width="86" height="16" fill="none" stroke="#c0c0c0" stroke-width="1.100"><path d="M4 2.500h4v4h-4z" fill="#c0c0c0"/><path d="M6 6.500v5M36.500 3h9M36.500 6h9M36.500 9h9M36.500 12h9M72 3l8.500 8.500M80.500 3l-8.500 8.500"/></svg><div style="left:2578.5px;top:864px;width:853.5px;height:23.4px;background:#181818;"></div><div class="st" style="left:2581px;top:864px;width:60.3px;height:23.4px;">1: Guitar</div><div class="st" style="left:2644.3px;top:864px;width:64.5px;height:23.4px;">2: Bdrum</div><div class="st" style="left:2711.8px;top:864px;width:58.2px;height:23.4px;">3: HiHat</div><div class="st" style="left:2773px;top:864px;width:56.8px;height:23.4px;">4: Bass</div><div class="st" style="left:2832.8px;top:864px;width:67.2px;height:23.4px;">5: Vocal 1</div><div class="st" style="left:2903px;top:864px;width:70.5px;height:23.4px;">6: Vocal 2</div><div class="st" style="left:2976.5px;top:864px;width:55.9px;height:23.4px;">7:</div><div class="st" style="left:3035.4px;top:864px;width:59.5px;height:23.4px;">8: Mono</div><div class="st" style="left:3097.9px;top:864px;width:58.8px;height:23.4px;background:#1e1e1e;color:#f0f0f0">9: Mono</div><div class="st" style="left:3159.7px;top:864px;width:66.2px;height:23.4px;">10: Mono</div><div class="st" style="left:3228.9px;top:864px;width:65.5px;height:23.4px;">11: Mono</div><div class="st" style="left:3297.4px;top:864px;width:66.5px;height:23.4px;">13: Mono</div><div class="st" style="left:3366.9px;top:864px;width:71.6px;height:23.4px;text-align:left;padding-left:7px">14: Stereo</div><div class="led" style="left:2601px;top:908px;width:14px;height:14.4px;background:#3a3a3a;"></div><div class="t" style="top:908.1px;font-size:11px;line-height:14px;color:#ddd;left:2618.6px;">Bypass</div><div style="left:2585.6px;top:938.3px;width:89px;height:63px;background:#242424;border-radius:6px"></div><div class="t" style="top:946.4px;font-size:11px;line-height:14px;color:#ddd;left:2428.7px;width:400px;text-align:center;">Routing</div><div class="led" style="left:2622.9px;top:969.3px;width:13.6px;height:13.8px;background:#9a9a9a;"></div><div class="t" style="top:984.2px;font-size:10px;line-height:13px;color:#ddd;left:2429.7px;width:400px;text-align:center;">C</div><div style="left:2685.8px;top:905.8px;width:703.4px;height:240.7px;background:#121212;border-radius:7px"></div><svg style="position:absolute;left:2686px;top:906px" width="703" height="240" viewBox="2686 906 703 240" fill="none"><g stroke="#353535" stroke-width="0.9"><path d="M2746.0 918.200V1118.800M2759.2 918.200V1118.800M2769.5 918.200V1118.800M2801.3 918.200V1118.800M2833.1 918.200V1118.800M2851.7 918.200V1118.800M2864.9 918.200V1118.800M2875.2 918.200V1118.800M2907.0 918.200V1118.800M2938.8 918.200V1118.800M2957.4 918.200V1118.800M2970.6 918.200V1118.800M2980.9 918.200V1118.800M3012.7 918.200V1118.800M2727.4 969.3H3045.200M2727.4 1071.5H3045.200"/></g><path d="M2727.4 1020.3L2729.4 1020.3L2731.4 1020.3L2733.3 1020.3L2735.3 1020.2L2737.3 1020.2L2739.3 1020.2L2741.3 1020.2L2743.3 1020.2L2745.2 1020.2L2747.2 1020.1L2749.2 1020.1L2751.2 1020.1L2753.2 1020.1L2755.1 1020.0L2757.1 1020.0L2759.1 1020.0L2761.1 1019.9L2763.1 1019.9L2765.1 1019.8L2767.0 1019.8L2769.0 1019.7L2771.0 1019.7L2773.0 1019.6L2775.0 1019.5L2776.9 1019.4L2778.9 1019.4L2780.9 1019.3L2782.9 1019.1L2784.9 1019.0L2786.9 1018.9L2788.8 1018.8L2790.8 1018.6L2792.8 1018.4L2794.8 1018.2L2796.8 1018.0L2798.7 1017.8L2800.7 1017.5L2802.7 1017.2L2804.7 1016.9L2806.7 1016.6L2808.7 1016.2L2810.6 1015.7L2812.6 1015.2L2814.6 1014.7L2816.6 1014.1L2818.6 1013.4L2820.5 1012.6L2822.5 1011.7L2824.5 1010.7L2826.5 1009.6L2828.5 1008.3L2830.5 1006.8L2832.4 1005.1L2834.4 1003.1L2836.4 1000.9L2838.4 998.3L2840.4 995.2L2842.3 991.7L2844.3 987.6L2846.3 982.9L2848.3 977.3L2850.3 971.0L2852.3 963.8L2854.2 955.9L2856.2 947.8L2858.2 940.4L2860.2 935.5L2862.2 934.6L2864.1 938.0L2866.1 944.6L2868.1 952.5L2870.1 960.6L2872.1 968.1L2874.1 974.8L2876.0 980.7L2878.0 985.7L2880.0 990.1L2882.0 993.9L2884.0 997.1L2886.0 999.9L2887.9 1002.3L2889.9 1004.3L2891.9 1006.1L2893.9 1007.7L2895.9 1009.1L2897.8 1010.3L2899.8 1011.3L2901.8 1012.2L2903.8 1013.1L2905.8 1013.8L2907.8 1014.4L2909.7 1015.0L2911.7 1015.5L2913.7 1016.0L2915.7 1016.4L2917.7 1016.8L2919.6 1017.1L2921.6 1017.4L2923.6 1017.7L2925.6 1017.9L2927.6 1018.1L2929.6 1018.3L2931.5 1018.5L2933.5 1018.7L2935.5 1018.8L2937.5 1019.0L2939.5 1019.1L2941.4 1019.2L2943.4 1019.3L2945.4 1019.4L2947.4 1019.5L2949.4 1019.6L2951.4 1019.6L2953.3 1019.7L2955.3 1019.8L2957.3 1019.8L2959.3 1019.9L2961.3 1019.9L2963.2 1020.0L2965.2 1020.0L2967.2 1020.0L2969.2 1020.1L2971.2 1020.1L2973.2 1020.1L2975.1 1020.1L2977.1 1020.2L2979.1 1020.2L2981.1 1020.2L2983.1 1020.2L2985.0 1020.2L2987.0 1020.2L2989.0 1020.3L2991.0 1020.3L2993.0 1020.3L2995.0 1020.3L2996.9 1020.3L2998.9 1020.3L3000.9 1020.3L3002.9 1020.3L3004.9 1020.3L3006.8 1020.3L3008.8 1020.3L3010.8 1020.3L3012.8 1020.3L3014.8 1020.4L3016.8 1020.4L3018.7 1020.4L3020.7 1020.4L3022.7 1020.4L3024.7 1020.4L3026.7 1020.4L3028.6 1020.4L3030.6 1020.4L3032.6 1020.4L3034.6 1020.4L3036.6 1020.4L3038.6 1020.4L3040.5 1020.4L3042.5 1020.4L3044.5 1020.4L3044.5 1020.4L2727.4 1020.4Z" fill="#5a1212" stroke="none"/><path d="M2727.4 1020.4L2729.4 1020.4L2731.4 1020.4L2733.3 1020.4L2735.3 1020.4L2737.3 1020.4L2739.3 1020.4L2741.3 1020.4L2743.3 1020.4L2745.2 1020.4L2747.2 1020.4L2749.2 1020.4L2751.2 1020.4L2753.2 1020.4L2755.1 1020.4L2757.1 1020.4L2759.1 1020.4L2761.1 1020.4L2763.1 1020.4L2765.1 1020.4L2767.0 1020.4L2769.0 1020.4L2771.0 1020.4L2773.0 1020.4L2775.0 1020.4L2776.9 1020.4L2778.9 1020.4L2780.9 1020.4L2782.9 1020.4L2784.9 1020.4L2786.9 1020.4L2788.8 1020.4L2790.8 1020.4L2792.8 1020.4L2794.8 1020.4L2796.8 1020.4L2798.7 1020.4L2800.7 1020.4L2802.7 1020.4L2804.7 1020.4L2806.7 1020.4L2808.7 1020.4L2810.6 1020.4L2812.6 1020.4L2814.6 1020.4L2816.6 1020.4L2818.6 1020.4L2820.5 1020.5L2822.5 1020.5L2824.5 1020.5L2826.5 1020.5L2828.5 1020.5L2830.5 1020.5L2832.4 1020.5L2834.4 1020.5L2836.4 1020.5L2838.4 1020.5L2840.4 1020.5L2842.3 1020.5L2844.3 1020.5L2846.3 1020.6L2848.3 1020.6L2850.3 1020.6L2852.3 1020.6L2854.2 1020.6L2856.2 1020.6L2858.2 1020.7L2860.2 1020.7L2862.2 1020.7L2864.1 1020.7L2866.1 1020.8L2868.1 1020.8L2870.1 1020.8L2872.1 1020.9L2874.1 1020.9L2876.0 1021.0L2878.0 1021.0L2880.0 1021.1L2882.0 1021.2L2884.0 1021.2L2886.0 1021.3L2887.9 1021.4L2889.9 1021.5L2891.9 1021.6L2893.9 1021.7L2895.9 1021.8L2897.8 1021.9L2899.8 1022.1L2901.8 1022.2L2903.8 1022.4L2905.8 1022.6L2907.8 1022.8L2909.7 1023.0L2911.7 1023.3L2913.7 1023.6L2915.7 1023.9L2917.7 1024.2L2919.6 1024.6L2921.6 1025.0L2923.6 1025.5L2925.6 1026.0L2927.6 1026.6L2929.6 1027.2L2931.5 1027.9L2933.5 1028.7L2935.5 1029.6L2937.5 1030.6L2939.5 1031.8L2941.4 1033.0L2943.4 1034.4L2945.4 1036.0L2947.4 1037.8L2949.4 1039.9L2951.4 1042.2L2953.3 1044.8L2955.3 1047.7L2957.3 1051.0L2959.3 1054.7L2961.3 1058.7L2963.2 1063.1L2965.2 1067.8L2967.2 1072.5L2969.2 1077.1L2971.2 1081.0L2973.2 1083.8L2975.1 1085.1L2977.1 1084.5L2979.1 1082.3L2981.1 1078.7L2983.1 1074.3L2985.0 1069.6L2987.0 1064.9L2989.0 1060.4L2991.0 1056.2L2993.0 1052.4L2995.0 1048.9L2996.9 1045.9L2998.9 1043.2L3000.9 1040.7L3002.9 1038.6L3004.9 1036.7L3006.8 1035.0L3008.8 1033.5L3010.8 1032.2L3012.8 1031.0L3014.8 1030.0L3016.8 1029.1L3018.7 1028.2L3020.7 1027.5L3022.7 1026.8L3024.7 1026.2L3026.7 1025.7L3028.6 1025.2L3030.6 1024.8L3032.6 1024.4L3034.6 1024.0L3036.6 1023.7L3038.6 1023.4L3040.5 1023.1L3042.5 1022.9L3044.5 1022.7L3044.5 1020.4L2727.4 1020.4Z" fill="#183a58" stroke="none"/><path d="M2727.4 1119.2L2776.9 1117.4L2778.9 1108.7L2780.9 1100.1L2782.9 1091.7L2784.9 1083.7L2786.9 1076.0L2788.8 1068.8L2790.8 1062.1L2792.8 1055.9L2794.8 1050.3L2796.8 1045.3L2798.7 1040.9L2800.7 1037.1L2802.7 1033.9L2804.7 1031.2L2806.7 1029.0L2808.7 1027.2L2810.6 1025.8L2812.6 1024.6L2814.6 1023.7L2816.6 1023.0L2818.6 1022.4L2820.5 1022.0L2822.5 1021.6L2824.5 1021.3L2826.5 1021.1L2828.5 1021.0L2830.5 1020.8L2832.4 1020.7L2834.4 1020.7L2836.4 1020.6L2838.4 1020.6L2840.4 1020.5L2842.3 1020.5L2844.3 1020.5L2846.3 1020.5L2848.3 1020.4L2850.3 1020.4L2852.3 1020.4L2854.2 1020.4L2856.2 1020.4L2858.2 1020.4L2860.2 1020.4L2862.2 1020.4L2864.1 1020.4L2866.1 1020.4L2868.1 1020.4L2870.1 1020.4L2872.1 1020.4L2874.1 1020.4L2876.0 1020.4L2878.0 1020.4L2880.0 1020.4L2882.0 1020.4L2884.0 1020.4L2886.0 1020.4L2887.9 1020.4L2889.9 1020.4L2891.9 1020.4L2893.9 1020.4L2895.9 1020.4L2897.8 1020.4L2899.8 1020.4L2901.8 1020.4L2903.8 1020.4L2905.8 1020.4L2907.8 1020.4L2909.7 1020.4L2911.7 1020.4L2913.7 1020.4L2915.7 1020.4L2917.7 1020.4L2919.6 1020.4L2921.6 1020.4L2923.6 1020.4L2925.6 1020.4L2927.6 1020.4L2929.6 1020.4L2931.5 1020.4L2933.5 1020.4L2935.5 1020.4L2937.5 1020.4L2939.5 1020.4L2941.4 1020.4L2943.4 1020.4L2945.4 1020.4L2947.4 1020.4L2949.4 1020.4L2951.4 1020.4L2953.3 1020.4L2955.3 1020.4L2957.3 1020.4L2959.3 1020.4L2961.3 1020.4L2963.2 1020.4L2965.2 1020.4L2967.2 1020.4L2969.2 1020.4L2971.2 1020.4L2973.2 1020.4L2975.1 1020.4L2977.1 1020.4L2979.1 1020.4L2981.1 1020.4L2983.1 1020.4L2985.0 1020.4L2987.0 1020.4L2989.0 1020.4L2991.0 1020.4L2993.0 1020.4L2995.0 1020.4L2996.9 1020.4L2998.9 1020.4L3000.9 1020.4L3002.9 1020.4L3004.9 1020.4L3006.8 1020.4L3008.8 1020.4L3010.8 1020.4L3012.8 1020.4L3014.8 1020.4L3016.8 1020.4L3018.7 1020.4L3020.7 1020.4L3022.7 1020.4L3024.7 1020.4L3026.7 1020.4L3028.6 1020.4L3030.6 1020.4L3032.6 1020.4L3034.6 1020.4L3036.6 1020.4L3038.6 1020.4L3040.5 1020.4L3042.5 1020.4L3044.5 1020.4 L3044.5 1020.4L2727.4 1020.4Z" fill="#52431a" stroke="none"/><path d="M2776.9 1117.4L2778.9 1108.7L2780.9 1100.1L2782.9 1091.7L2784.9 1083.7L2786.9 1076.0L2788.8 1068.8L2790.8 1062.1L2792.8 1055.9L2794.8 1050.3L2796.8 1045.3L2798.7 1040.9L2800.7 1037.1L2802.7 1033.9L2804.7 1031.2L2806.7 1029.0L2808.7 1027.2L2810.6 1025.8L2812.6 1024.6L2814.6 1023.7L2816.6 1023.0L2818.6 1022.4L2820.5 1022.0L2822.5 1021.6L2824.5 1021.3L2826.5 1021.1L2828.5 1021.0L2830.5 1020.8L2832.4 1020.7L2834.4 1020.7L2836.4 1020.6L2838.4 1020.6L2840.4 1020.5L2842.3 1020.5L2844.3 1020.5L2846.3 1020.5L2848.3 1020.4L2850.3 1020.4L2852.3 1020.4L2854.2 1020.4L2856.2 1020.4L2858.2 1020.4L2860.2 1020.4L2862.2 1020.4L2864.1 1020.4L2866.1 1020.4L2868.1 1020.4L2870.1 1020.4L2872.1 1020.4L2874.1 1020.4L2876.0 1020.4L2878.0 1020.4L2880.0 1020.4L2882.0 1020.4L2884.0 1020.4L2886.0 1020.4L2887.9 1020.4L2889.9 1020.4L2891.9 1020.4L2893.9 1020.4L2895.9 1020.4L2897.8 1020.4L2899.8 1020.4L2901.8 1020.4L2903.8 1020.4L2905.8 1020.4L2907.8 1020.4L2909.7 1020.4L2911.7 1020.4L2913.7 1020.4L2915.7 1020.4L2917.7 1020.4L2919.6 1020.4L2921.6 1020.4L2923.6 1020.4L2925.6 1020.4L2927.6 1020.4L2929.6 1020.4L2931.5 1020.4L2933.5 1020.4L2935.5 1020.4L2937.5 1020.4L2939.5 1020.4L2941.4 1020.4L2943.4 1020.4L2945.4 1020.4L2947.4 1020.4L2949.4 1020.4L2951.4 1020.4L2953.3 1020.4L2955.3 1020.4L2957.3 1020.4L2959.3 1020.4L2961.3 1020.4L2963.2 1020.4L2965.2 1020.4L2967.2 1020.4L2969.2 1020.4L2971.2 1020.4L2973.2 1020.4L2975.1 1020.4L2977.1 1020.4L2979.1 1020.4L2981.1 1020.4L2983.1 1020.4L2985.0 1020.4L2987.0 1020.4L2989.0 1020.4L2991.0 1020.4L2993.0 1020.4L2995.0 1020.4L2996.9 1020.4L2998.9 1020.4L3000.9 1020.4L3002.9 1020.4L3004.9 1020.4L3006.8 1020.4L3008.8 1020.4L3010.8 1020.4L3012.8 1020.4L3014.8 1020.4L3016.8 1020.4L3018.7 1020.4L3020.7 1020.4L3022.7 1020.4L3024.7 1020.4L3026.7 1020.4L3028.6 1020.4L3030.6 1020.4L3032.6 1020.4L3034.6 1020.4L3036.6 1020.4L3038.6 1020.4L3040.5 1020.4L3042.5 1020.4L3044.5 1020.4" stroke="#c8a020" stroke-width="1.300"/><path d="M2727.4 1020.3L2729.4 1020.3L2731.4 1020.3L2733.3 1020.3L2735.3 1020.2L2737.3 1020.2L2739.3 1020.2L2741.3 1020.2L2743.3 1020.2L2745.2 1020.2L2747.2 1020.1L2749.2 1020.1L2751.2 1020.1L2753.2 1020.1L2755.1 1020.0L2757.1 1020.0L2759.1 1020.0L2761.1 1019.9L2763.1 1019.9L2765.1 1019.8L2767.0 1019.8L2769.0 1019.7L2771.0 1019.7L2773.0 1019.6L2775.0 1019.5L2776.9 1019.4L2778.9 1019.4L2780.9 1019.3L2782.9 1019.1L2784.9 1019.0L2786.9 1018.9L2788.8 1018.8L2790.8 1018.6L2792.8 1018.4L2794.8 1018.2L2796.8 1018.0L2798.7 1017.8L2800.7 1017.5L2802.7 1017.2L2804.7 1016.9L2806.7 1016.6L2808.7 1016.2L2810.6 1015.7L2812.6 1015.2L2814.6 1014.7L2816.6 1014.1L2818.6 1013.4L2820.5 1012.6L2822.5 1011.7L2824.5 1010.7L2826.5 1009.6L2828.5 1008.3L2830.5 1006.8L2832.4 1005.1L2834.4 1003.1L2836.4 1000.9L2838.4 998.3L2840.4 995.2L2842.3 991.7L2844.3 987.6L2846.3 982.9L2848.3 977.3L2850.3 971.0L2852.3 963.8L2854.2 955.9L2856.2 947.8L2858.2 940.4L2860.2 935.5L2862.2 934.6L2864.1 938.0L2866.1 944.6L2868.1 952.5L2870.1 960.6L2872.1 968.1L2874.1 974.8L2876.0 980.7L2878.0 985.7L2880.0 990.1L2882.0 993.9L2884.0 997.1L2886.0 999.9L2887.9 1002.3L2889.9 1004.3L2891.9 1006.1L2893.9 1007.7L2895.9 1009.1L2897.8 1010.3L2899.8 1011.3L2901.8 1012.2L2903.8 1013.1L2905.8 1013.8L2907.8 1014.4L2909.7 1015.0L2911.7 1015.5L2913.7 1016.0L2915.7 1016.4L2917.7 1016.8L2919.6 1017.1L2921.6 1017.4L2923.6 1017.7L2925.6 1017.9L2927.6 1018.1L2929.6 1018.3L2931.5 1018.5L2933.5 1018.7L2935.5 1018.8L2937.5 1019.0L2939.5 1019.1L2941.4 1019.2L2943.4 1019.3L2945.4 1019.4L2947.4 1019.5L2949.4 1019.6L2951.4 1019.6L2953.3 1019.7L2955.3 1019.8L2957.3 1019.8L2959.3 1019.9L2961.3 1019.9L2963.2 1020.0L2965.2 1020.0L2967.2 1020.0L2969.2 1020.1L2971.2 1020.1L2973.2 1020.1L2975.1 1020.1L2977.1 1020.2L2979.1 1020.2L2981.1 1020.2L2983.1 1020.2L2985.0 1020.2L2987.0 1020.2L2989.0 1020.3L2991.0 1020.3L2993.0 1020.3L2995.0 1020.3L2996.9 1020.3L2998.9 1020.3L3000.9 1020.3L3002.9 1020.3L3004.9 1020.3L3006.8 1020.3L3008.8 1020.3L3010.8 1020.3L3012.8 1020.3L3014.8 1020.4L3016.8 1020.4L3018.7 1020.4L3020.7 1020.4L3022.7 1020.4L3024.7 1020.4L3026.7 1020.4L3028.6 1020.4L3030.6 1020.4L3032.6 1020.4L3034.6 1020.4L3036.6 1020.4L3038.6 1020.4L3040.5 1020.4L3042.5 1020.4L3044.5 1020.4" stroke="#d02020" stroke-width="1.300"/><path d="M2727.4 1020.4L2729.4 1020.4L2731.4 1020.4L2733.3 1020.4L2735.3 1020.4L2737.3 1020.4L2739.3 1020.4L2741.3 1020.4L2743.3 1020.4L2745.2 1020.4L2747.2 1020.4L2749.2 1020.4L2751.2 1020.4L2753.2 1020.4L2755.1 1020.4L2757.1 1020.4L2759.1 1020.4L2761.1 1020.4L2763.1 1020.4L2765.1 1020.4L2767.0 1020.4L2769.0 1020.4L2771.0 1020.4L2773.0 1020.4L2775.0 1020.4L2776.9 1020.4L2778.9 1020.4L2780.9 1020.4L2782.9 1020.4L2784.9 1020.4L2786.9 1020.4L2788.8 1020.4L2790.8 1020.4L2792.8 1020.4L2794.8 1020.4L2796.8 1020.4L2798.7 1020.4L2800.7 1020.4L2802.7 1020.4L2804.7 1020.4L2806.7 1020.4L2808.7 1020.4L2810.6 1020.4L2812.6 1020.4L2814.6 1020.4L2816.6 1020.4L2818.6 1020.4L2820.5 1020.5L2822.5 1020.5L2824.5 1020.5L2826.5 1020.5L2828.5 1020.5L2830.5 1020.5L2832.4 1020.5L2834.4 1020.5L2836.4 1020.5L2838.4 1020.5L2840.4 1020.5L2842.3 1020.5L2844.3 1020.5L2846.3 1020.6L2848.3 1020.6L2850.3 1020.6L2852.3 1020.6L2854.2 1020.6L2856.2 1020.6L2858.2 1020.7L2860.2 1020.7L2862.2 1020.7L2864.1 1020.7L2866.1 1020.8L2868.1 1020.8L2870.1 1020.8L2872.1 1020.9L2874.1 1020.9L2876.0 1021.0L2878.0 1021.0L2880.0 1021.1L2882.0 1021.2L2884.0 1021.2L2886.0 1021.3L2887.9 1021.4L2889.9 1021.5L2891.9 1021.6L2893.9 1021.7L2895.9 1021.8L2897.8 1021.9L2899.8 1022.1L2901.8 1022.2L2903.8 1022.4L2905.8 1022.6L2907.8 1022.8L2909.7 1023.0L2911.7 1023.3L2913.7 1023.6L2915.7 1023.9L2917.7 1024.2L2919.6 1024.6L2921.6 1025.0L2923.6 1025.5L2925.6 1026.0L2927.6 1026.6L2929.6 1027.2L2931.5 1027.9L2933.5 1028.7L2935.5 1029.6L2937.5 1030.6L2939.5 1031.8L2941.4 1033.0L2943.4 1034.4L2945.4 1036.0L2947.4 1037.8L2949.4 1039.9L2951.4 1042.2L2953.3 1044.8L2955.3 1047.7L2957.3 1051.0L2959.3 1054.7L2961.3 1058.7L2963.2 1063.1L2965.2 1067.8L2967.2 1072.5L2969.2 1077.1L2971.2 1081.0L2973.2 1083.8L2975.1 1085.1L2977.1 1084.5L2979.1 1082.3L2981.1 1078.7L2983.1 1074.3L2985.0 1069.6L2987.0 1064.9L2989.0 1060.4L2991.0 1056.2L2993.0 1052.4L2995.0 1048.9L2996.9 1045.9L2998.9 1043.2L3000.9 1040.7L3002.9 1038.6L3004.9 1036.7L3006.8 1035.0L3008.8 1033.5L3010.8 1032.2L3012.8 1031.0L3014.8 1030.0L3016.8 1029.1L3018.7 1028.2L3020.7 1027.5L3022.7 1026.8L3024.7 1026.2L3026.7 1025.7L3028.6 1025.2L3030.6 1024.8L3032.6 1024.4L3034.6 1024.0L3036.6 1023.7L3038.6 1023.4L3040.5 1023.1L3042.5 1022.9L3044.5 1022.7" stroke="#2a7acc" stroke-width="1.300"/><path d="M2727.4 1020.4H3045.200" stroke="#b060c8" stroke-width="1.800"/><path d="M2776.9 1116.5L2778.9 1107.6L2780.9 1098.9L2782.9 1090.5L2784.9 1082.3L2786.9 1074.6L2788.8 1067.2L2790.8 1060.3L2792.8 1053.9L2794.8 1048.1L2796.8 1042.9L2798.7 1038.3L2800.7 1034.3L2802.7 1030.8L2804.7 1027.8L2806.7 1025.2L2808.7 1023.0L2810.6 1021.1L2812.6 1019.5L2814.6 1018.0L2816.6 1016.7L2818.6 1015.4L2820.5 1014.2L2822.5 1013.0L2824.5 1011.7L2826.5 1010.4L2828.5 1008.9L2830.5 1007.3L2832.4 1005.5L2834.4 1003.5L2836.4 1001.2L2838.4 998.5L2840.4 995.5L2842.3 991.9L2844.3 987.8L2846.3 983.1L2848.3 977.5L2850.3 971.2L2852.3 964.0L2854.2 956.1L2856.2 948.0L2858.2 940.7L2860.2 935.8L2862.2 934.9L2864.1 938.3L2866.1 944.9L2868.1 952.9L2870.1 961.0L2872.1 968.6L2874.1 975.3L2876.0 981.2L2878.0 986.4L2880.0 990.8L2882.0 994.6L2884.0 997.9L2886.0 1000.8L2887.9 1003.2L2889.9 1005.4L2891.9 1007.3L2893.9 1009.0L2895.9 1010.5L2897.8 1011.8L2899.8 1013.0L2901.8 1014.1L2903.8 1015.1L2905.8 1016.0L2907.8 1016.8L2909.7 1017.7L2911.7 1018.4L2913.7 1019.2L2915.7 1019.9L2917.7 1020.6L2919.6 1021.3L2921.6 1022.0L2923.6 1022.8L2925.6 1023.5L2927.6 1024.3L2929.6 1025.2L2931.5 1026.1L2933.5 1027.0L2935.5 1028.1L2937.5 1029.2L2939.5 1030.5L2941.4 1031.8L2943.4 1033.3L2945.4 1035.0L2947.4 1036.9L2949.4 1039.1L2951.4 1041.4L2953.3 1044.1L2955.3 1047.1L2957.3 1050.4L2959.3 1054.2L2961.3 1058.2L2963.2 1062.7L2965.2 1067.4L2967.2 1072.2L2969.2 1076.7L2971.2 1080.7L2973.2 1083.6L2975.1 1084.8L2977.1 1084.3L2979.1 1082.0L2981.1 1078.5L2983.1 1074.1L2985.0 1069.4L2987.0 1064.7L2989.0 1060.2L2991.0 1056.1L2993.0 1052.3L2995.0 1048.8L2996.9 1045.8L2998.9 1043.1L3000.9 1040.7L3002.9 1038.5L3004.9 1036.6L3006.8 1035.0L3008.8 1033.5L3010.8 1032.2L3012.8 1031.0L3014.8 1030.0L3016.8 1029.0L3018.7 1028.2L3020.7 1027.5L3022.7 1026.8L3024.7 1026.2L3026.7 1025.7L3028.6 1025.2L3030.6 1024.7L3032.6 1024.3L3034.6 1024.0L3036.6 1023.7L3038.6 1023.4L3040.5 1023.1L3042.5 1022.9L3044.5 1022.7" stroke="#e4e4e4" stroke-width="1.500"/><circle cx="2861.6" cy="934.4" r="6" fill="#e01818" stroke="#e02828" stroke-width="1"/><circle cx="2799.400" cy="1020.4" r="5.500" stroke="#d8a020" stroke-width="1.600" fill="rgba(216,160,32,.25)"/><circle cx="2907.400" cy="1020.4" r="5.500" stroke="#8ab040" stroke-width="1.600" fill="rgba(138,176,64,.3)"/><circle cx="3031.600" cy="1020.4" r="5.500" stroke="#b040c0" stroke-width="1.600" fill="rgba(176,64,192,.3)"/><circle cx="2975.700" cy="1085.300" r="5.500" stroke="#3a8ad8" stroke-width="1.600" fill="rgba(58,138,216,.25)"/><path d="M3115.8 935.300V1136.900M3134.0 935.300V1136.900M3152.2 935.300V1136.900M3170.4 935.300V1136.900M3188.6 935.300V1136.900M3206.8 935.300V1136.900M3225.0 935.300V1136.900M3243.2 935.300V1136.900M3261.4 935.300V1136.900M3279.6 935.300V1136.900M3097.400 953.5H3299M3097.400 990.5H3299M3097.400 1008.6H3299M3097.400 1026.5H3299M3097.400 1045.7H3299M3097.400 1063.4H3299M3097.400 1081.5H3299M3097.400 1100.6H3299M3097.400 1118.5H3299" stroke="#2e2e2e" stroke-width="0.9"/><path d="M3097.400 971.100H3299" stroke="#4a4a4a" stroke-width="1"/><path d="M3330 971.1H3379M3330 953.5H3379M3330 990.5H3379M3330 1008.6H3379M3330 1026.5H3379M3330 1045.7H3379M3330 1063.4H3379M3330 1081.5H3379M3330 1100.6H3379M3330 1118.5H3379" stroke="#2a2a2a" stroke-width="0.9"/><path d="M3097.400 1136.900L3299.800 935.300" stroke="#2c2c2c" stroke-width="0.9"/><path d="M3097.400 1136.900L3180.600 1053.800" stroke="#e0e0e0" stroke-width="1.700"/><path d="M3180.600 1053.800L3298.500 1038.600" stroke="#e8d830" stroke-width="1.700"/><circle cx="3180.600" cy="1053.800" r="5" fill="#6a6010" stroke="#d8c830" stroke-width="1.600"/></svg><div class="db" style="left:2695.4px;top:917.8px;width:31.5px;height:12.7px;">12 dB</div><div class="db" style="left:2695.4px;top:1110px;width:31.5px;height:12.7px;">-12 dB</div><div class="db" style="left:3045.7px;top:917.8px;width:30.5px;height:12.7px;">12 dB</div><div class="db" style="left:3045.7px;top:1110px;width:30.5px;height:12.7px;">-12 dB</div><div class="t" style="top:963.6px;font-size:9.5px;line-height:12px;color:#d8d8d8;left:2325.4px;width:400px;text-align:right;">6 dB</div><div class="t" style="top:1014.4px;font-size:9.5px;line-height:12px;color:#d8d8d8;left:2325.4px;width:400px;text-align:right;">Bands</div><div class="t" style="top:1065.5px;font-size:9.5px;line-height:12px;color:#d8d8d8;left:2325.4px;width:400px;text-align:right;">-6 dB</div><div class="t" style="top:963.6px;font-size:9.5px;line-height:12px;color:#d8d8d8;left:3047px;">6 dB</div><div class="t" style="top:1014.4px;font-size:9.5px;line-height:12px;color:#d8d8d8;left:3047px;">Sum</div><div class="t" style="top:1065.5px;font-size:9.5px;line-height:12px;color:#d8d8d8;left:3047px;">-6 dB</div><div class="t" style="top:1124.9px;font-size:9.5px;line-height:12px;color:#d0d0d0;left:2531.4px;width:400px;text-align:center;">20</div><div class="t" style="top:1124.9px;font-size:9.5px;line-height:12px;color:#d0d0d0;left:2569px;width:400px;text-align:center;">50</div><div class="t" style="top:1124.9px;font-size:9.5px;line-height:12px;color:#d0d0d0;left:2600.8px;width:400px;text-align:center;">100</div><div class="t" style="top:1124.9px;font-size:9.5px;line-height:12px;color:#d0d0d0;left:2632.6px;width:400px;text-align:center;">200</div><div class="t" style="top:1124.9px;font-size:9.5px;line-height:12px;color:#d0d0d0;left:2674.7px;width:400px;text-align:center;">500</div><div class="t" style="top:1124.9px;font-size:9.5px;line-height:12px;color:#d0d0d0;left:2706.5px;width:400px;text-align:center;">1k</div><div class="t" style="top:1124.9px;font-size:9.5px;line-height:12px;color:#d0d0d0;left:2738.3px;width:400px;text-align:center;">2k</div><div class="t" style="top:1124.9px;font-size:9.5px;line-height:12px;color:#d0d0d0;left:2780.4px;width:400px;text-align:center;">5k</div><div class="t" style="top:1124.9px;font-size:9.5px;line-height:12px;color:#d0d0d0;left:2812.2px;width:400px;text-align:center;">10k</div><div class="t" style="top:1124.9px;font-size:9.5px;line-height:12px;color:#d0d0d0;left:2835.7px;width:400px;text-align:center;">20k</div><div class="t" style="top:915.5px;font-size:9.5px;line-height:12px;color:#d0d0d0;left:2902.4px;width:400px;text-align:center;">oo</div><div class="t" style="top:915.5px;font-size:9.5px;line-height:12px;color:#d0d0d0;left:2915.8px;width:400px;text-align:center;">80</div><div class="t" style="top:915.5px;font-size:9.5px;line-height:12px;color:#d0d0d0;left:2934px;width:400px;text-align:center;">70</div><div class="t" style="top:915.5px;font-size:9.5px;line-height:12px;color:#d0d0d0;left:2952.6px;width:400px;text-align:center;">60</div><div class="t" style="top:915.5px;font-size:9.5px;line-height:12px;color:#d0d0d0;left:2970.7px;width:400px;text-align:center;">50</div><div class="t" style="top:915.5px;font-size:9.5px;line-height:12px;color:#d0d0d0;left:2988.9px;width:400px;text-align:center;">40</div><div class="t" style="top:915.5px;font-size:9.5px;line-height:12px;color:#d0d0d0;left:3007.8px;width:400px;text-align:center;">30</div><div class="t" style="top:915.5px;font-size:9.5px;line-height:12px;color:#d0d0d0;left:3025.9px;width:400px;text-align:center;">20</div><div class="t" style="top:915.5px;font-size:9.5px;line-height:12px;color:#d0d0d0;left:3044.1px;width:400px;text-align:center;">10</div><div class="t" style="top:915.5px;font-size:9.5px;line-height:12px;color:#d0d0d0;left:3062.5px;width:400px;text-align:center;">0</div><div class="t" style="top:915.5px;font-size:9.5px;line-height:12px;color:#d0d0d0;left:3080.6px;width:400px;text-align:center;">+10</div><div class="t" style="top:915.5px;font-size:9.5px;line-height:12px;color:#d0d0d0;left:3114.1px;width:400px;text-align:center;">dB</div><div class="t" style="top:947.5px;font-size:9.5px;line-height:12px;color:#d0d0d0;left:3113.6px;width:400px;text-align:center;">+10</div><div class="t" style="top:965.1px;font-size:9.5px;line-height:12px;color:#d0d0d0;left:3113.6px;width:400px;text-align:center;">0</div><div class="t" style="top:984.5px;font-size:9.5px;line-height:12px;color:#d0d0d0;left:3113.6px;width:400px;text-align:center;">10</div><div class="t" style="top:1002.6px;font-size:9.5px;line-height:12px;color:#d0d0d0;left:3113.6px;width:400px;text-align:center;">20</div><div class="t" style="top:1020.5px;font-size:9.5px;line-height:12px;color:#d0d0d0;left:3113.6px;width:400px;text-align:center;">30</div><div class="t" style="top:1039.7px;font-size:9.5px;line-height:12px;color:#d0d0d0;left:3113.6px;width:400px;text-align:center;">40</div><div class="t" style="top:1057.4px;font-size:9.5px;line-height:12px;color:#d0d0d0;left:3113.6px;width:400px;text-align:center;">50</div><div class="t" style="top:1075.5px;font-size:9.5px;line-height:12px;color:#d0d0d0;left:3113.6px;width:400px;text-align:center;">60</div><div class="t" style="top:1094.6px;font-size:9.5px;line-height:12px;color:#d0d0d0;left:3113.6px;width:400px;text-align:center;">70</div><div class="t" style="top:1112.5px;font-size:9.5px;line-height:12px;color:#d0d0d0;left:3113.6px;width:400px;text-align:center;">80</div><div class="t" style="top:1128px;font-size:9.5px;line-height:12px;color:#d0d0d0;left:3113.6px;width:400px;text-align:center;">oo</div><div style="left:3335px;top:971px;width:16px;height:4px;background:linear-gradient(#4a4418 60%,transparent 60%);background-size:100% 2px"></div><div style="left:3335px;top:975px;width:16px;height:79px;background:linear-gradient(#e8d040 60%,transparent 60%);background-size:100% 2px"></div><div style="left:3335px;top:1054px;width:16px;height:83px;background:linear-gradient(#dcdcdc 60%,transparent 60%);background-size:100% 2px"></div><div style="left:3357px;top:971px;width:16px;height:71px;background:linear-gradient(#e85040 60%,transparent 60%);background-size:100% 2px"></div><div style="left:3357px;top:1042px;width:16px;height:95px;background:linear-gradient(#333 60%,transparent 60%);background-size:100% 2px"></div><div style="left:2711.6px;top:1258.5px;width:341.4px;height:96.6px;background:#242424;border-radius:7px"></div><svg style="position:absolute;left:2578px;top:1150px" width="853" height="224" viewBox="2578 1150 853 224"><defs><linearGradient id="kgrad" x1="0" y1="0" x2="0.6" y2="1"><stop offset="0" stop-color="#4c4c4c"/><stop offset="1" stop-color="#262626"/></linearGradient></defs><path d="M2627.4 1198.4A17.8 17.8 0 1 1 2652.6 1198.4" fill="none" stroke="#0b0b0b" stroke-width="3.0"/><path d="M2640.0 1168.0A17.8 17.8 0 0 1 2657.2 1181.2" fill="none" stroke="#f0b070" stroke-width="1.4"/><circle cx="2640.0" cy="1185.8" r="13.8" fill="url(#kgrad)"/><path d="M2647.1 1183.9L2651.4 1182.7" stroke="#ddd" stroke-width="1.1"/><path d="M2627.4 1324.3A17.8 17.8 0 1 1 2652.6 1324.3" fill="none" stroke="#0b0b0b" stroke-width="3.0"/><circle cx="2640.0" cy="1311.7" r="13.8" fill="url(#kgrad)"/><path d="M2640.0 1304.4L2640.0 1299.9" stroke="#ddd" stroke-width="1.1"/><path d="M2753.2 1198.4A17.8 17.8 0 1 1 2778.4 1198.4" fill="none" stroke="#0b0b0b" stroke-width="3.0"/><path d="M2765.8 1168.0A17.8 17.8 0 0 1 2781.2 1176.9" fill="none" stroke="#e02020" stroke-width="1.4"/><circle cx="2765.8" cy="1185.8" r="13.8" fill="url(#kgrad)"/><path d="M2772.1 1182.1L2776.0 1179.9" stroke="#ddd" stroke-width="1.1"/><path d="M2834.6 1198.4A17.8 17.8 0 1 1 2859.8 1198.4" fill="none" stroke="#0b0b0b" stroke-width="3.0"/><path d="M2834.6 1198.4A17.8 17.8 0 0 1 2841.1 1169.1" fill="none" stroke="#e02020" stroke-width="1.4"/><circle cx="2847.2" cy="1185.8" r="13.8" fill="url(#kgrad)"/><path d="M2844.7 1178.9L2843.2 1174.7" stroke="#ddd" stroke-width="1.1"/><path d="M2915.4 1198.4A17.8 17.8 0 1 1 2940.6 1198.4" fill="none" stroke="#0b0b0b" stroke-width="3.0"/><path d="M2915.4 1198.4A17.8 17.8 0 1 1 2940.6 1198.4" fill="none" stroke="#e02020" stroke-width="1.4"/><circle cx="2928.0" cy="1185.8" r="13.8" fill="url(#kgrad)"/><path d="M2921.4 1188.9L2917.3 1190.8" stroke="#ddd" stroke-width="1.1"/><path d="M2996.2 1198.4A17.8 17.8 0 1 1 3021.4 1198.4" fill="none" stroke="#0b0b0b" stroke-width="3.0"/><path d="M2997.4 1172.2A17.8 17.8 0 0 1 3004.2 1168.6" fill="none" stroke="#e02020" stroke-width="1.4"/><circle cx="3008.8" cy="1185.8" r="13.8" fill="url(#kgrad)"/><path d="M3006.3 1178.9L3004.8 1174.7" stroke="#ddd" stroke-width="1.1"/><path d="M2753.2 1324.3A17.8 17.8 0 1 1 2778.4 1324.3" fill="none" stroke="#0b0b0b" stroke-width="3.0"/><circle cx="2765.8" cy="1311.7" r="13.8" fill="url(#kgrad)"/><path d="M2765.8 1304.4L2765.8 1299.9" stroke="none" stroke-width="1.1"/><path d="M2834.6 1324.3A17.8 17.8 0 1 1 2859.8 1324.3" fill="none" stroke="#0b0b0b" stroke-width="3.0"/><circle cx="2847.2" cy="1311.7" r="13.8" fill="url(#kgrad)"/><path d="M2847.2 1304.4L2847.2 1299.9" stroke="none" stroke-width="1.1"/><path d="M2915.4 1324.3A17.8 17.8 0 1 1 2940.6 1324.3" fill="none" stroke="#0b0b0b" stroke-width="3.0"/><circle cx="2928.0" cy="1311.7" r="13.8" fill="url(#kgrad)"/><path d="M2928.0 1304.4L2928.0 1299.9" stroke="none" stroke-width="1.1"/><path d="M2996.2 1324.3A17.8 17.8 0 1 1 3021.4 1324.3" fill="none" stroke="#0b0b0b" stroke-width="3.0"/><circle cx="3008.8" cy="1311.7" r="13.8" fill="url(#kgrad)"/><path d="M3008.8 1304.4L3008.8 1299.9" stroke="none" stroke-width="1.1"/><path d="M3108.2 1198.0A17.8 17.8 0 1 1 3133.4 1198.0" fill="none" stroke="#0b0b0b" stroke-width="3.0"/><circle cx="3120.8" cy="1185.4" r="13.8" fill="url(#kgrad)"/><path d="M3120.8 1178.1L3120.8 1173.6" stroke="none" stroke-width="1.1"/><path d="M3203.1 1198.0A17.8 17.8 0 1 1 3228.3 1198.0" fill="none" stroke="#0b0b0b" stroke-width="3.0"/><path d="M3203.1 1198.0A17.8 17.8 0 0 1 3201.1 1195.6" fill="none" stroke="#e8d830" stroke-width="1.4"/><circle cx="3215.7" cy="1185.4" r="13.8" fill="url(#kgrad)"/><path d="M3209.7 1189.6L3206.0 1192.2" stroke="#ddd" stroke-width="1.1"/><path d="M3298.4 1198.0A17.8 17.8 0 1 1 3323.6 1198.0" fill="none" stroke="#0b0b0b" stroke-width="3.0"/><path d="M3298.4 1198.0A17.8 17.8 0 0 1 3294.9 1192.9" fill="none" stroke="#e0e0e0" stroke-width="1.4"/><circle cx="3311.0" cy="1185.4" r="13.8" fill="url(#kgrad)"/><path d="M3304.4 1188.5L3300.3 1190.4" stroke="#ddd" stroke-width="1.1"/><path d="M3108.2 1261.5A17.8 17.8 0 1 1 3133.4 1261.5" fill="none" stroke="#0b0b0b" stroke-width="3.0"/><circle cx="3120.8" cy="1248.9" r="13.8" fill="url(#kgrad)"/><path d="M3120.8 1241.6L3120.8 1237.1" stroke="none" stroke-width="1.1"/><path d="M3203.1 1261.5A17.8 17.8 0 1 1 3228.3 1261.5" fill="none" stroke="#0b0b0b" stroke-width="3.0"/><path d="M3203.1 1261.5A17.8 17.8 0 1 1 3233.4 1247.3" fill="none" stroke="#e8d830" stroke-width="1.4"/><circle cx="3215.7" cy="1248.9" r="13.8" fill="url(#kgrad)"/><path d="M3223.0 1248.3L3227.5 1247.9" stroke="#ddd" stroke-width="1.1"/><path d="M3298.4 1261.5A17.8 17.8 0 1 1 3323.6 1261.5" fill="none" stroke="#0b0b0b" stroke-width="3.0"/><path d="M3298.4 1261.5A17.8 17.8 0 0 1 3293.3 1247.3" fill="none" stroke="#e0e0e0" stroke-width="1.4"/><circle cx="3311.0" cy="1248.9" r="13.8" fill="url(#kgrad)"/><path d="M3303.7 1248.3L3299.2 1247.9" stroke="#ddd" stroke-width="1.1"/><path d="M3298.4 1324.4A17.8 17.8 0 1 1 3323.6 1324.4" fill="none" stroke="#0b0b0b" stroke-width="3.0"/><circle cx="3311.0" cy="1311.8" r="13.8" fill="url(#kgrad)"/><path d="M3305.8 1317.0L3302.7 1320.1" stroke="#ddd" stroke-width="1.1"/></svg><div class="led" style="left:2601px;top:1167px;width:14px;height:14px;background:#d8a838;"></div><div class="kv" style="left:2621px;top:1208.5px;width:38px;height:10.2px;">21.6 dB</div><div class="t" style="top:1222.9px;font-size:13px;line-height:17px;color:#d0d0d0;left:2440px;width:400px;text-align:center;">Input</div><div class="led" style="left:2601px;top:1256.8px;width:14px;height:14px;background:#3a3a3a;"></div><div class="t" style="top:1257px;font-size:10.5px;line-height:14px;color:#ddd;left:2618.7px;">Make Up</div><div class="led" style="left:2601px;top:1293.3px;width:14px;height:14px;background:#d8a838;"></div><div class="kv" style="left:2621px;top:1334.6px;width:38px;height:10.2px;">0.0 dB</div><div class="t" style="top:1349.2px;font-size:13px;line-height:17px;color:#d0d0d0;left:2440px;width:400px;text-align:center;">Output</div><div class="led" style="left:2722px;top:1167px;width:14px;height:14px;background:#d8a838;"></div><div class="kv" style="left:2746.8px;top:1208.5px;width:38px;height:10.2px;">10.1 dB</div><div class="kv" style="left:2828.2px;top:1208.5px;width:38px;height:10.2px;">372 Hz</div><div class="kv" style="left:2909px;top:1208.5px;width:38px;height:10.2px;">10.00</div><div class="kv" style="left:2989.8px;top:1208.5px;width:38px;height:10.2px;">Peak</div><div class="led" style="left:2722px;top:1232px;width:14px;height:14px;background:#d8a838;"></div><div class="t" style="top:1232px;font-size:10.5px;line-height:14px;color:#ddd;left:2739.4px;">EQ Pre Dyn</div><div class="led" style="left:2823px;top:1232px;width:14px;height:14px;background:#e01818;"></div><div class="t" style="top:1232px;font-size:10.5px;line-height:14px;color:#ddd;left:2840.3px;">Band On</div><div class="led" style="left:2909.8px;top:1232px;width:14.2px;height:14px;background:#e01818;"></div><div class="led" style="left:2935.6px;top:1232px;width:14.2px;height:14px;background:#6a5010;"></div><div class="led" style="left:2961.6px;top:1232px;width:14.2px;height:14px;background:#3a5a18;"></div><div class="led" style="left:2987.7px;top:1232px;width:14.2px;height:14px;background:#1a4a8a;"></div><div class="led" style="left:3013.5px;top:1232px;width:14.2px;height:14px;background:#4a1060;"></div><div class="t" style="top:1268.7px;font-size:10.3px;line-height:13px;color:#d0d0d0;left:2720.7px;">Side Chain</div><div class="kv" style="left:2791.2px;top:1269px;width:80.3px;height:11.7px;color:#aaa;line-height:11px">---</div><div class="led" style="left:2991.6px;top:1269px;width:14px;height:14px;background:#3a3a3a;"></div><div class="t" style="top:1269.8px;font-size:10.3px;line-height:13px;color:#d0d0d0;left:3009.5px;">Post FX</div><div class="led" style="left:2722px;top:1293.3px;width:14px;height:14px;background:#3a3a3a;"></div><div class="t" style="top:1311.2px;font-size:10.5px;line-height:14px;color:#d0d0d0;left:2721.3px;">EQ</div><div class="kv" style="left:2746.8px;top:1334.6px;width:38px;height:10.2px;color:#555;font-weight:normal">0.0 dB</div><div class="kv" style="left:2828.2px;top:1334.6px;width:38px;height:10.2px;color:#555;font-weight:normal">20 Hz</div><div class="kv" style="left:2909px;top:1334.6px;width:38px;height:10.2px;color:#555;font-weight:normal">10.00</div><div class="kv" style="left:2989.8px;top:1334.6px;width:38px;height:10.2px;color:#555;font-weight:normal">Peak</div><div class="led" style="left:3082px;top:1167px;width:14.5px;height:14px;background:#3a3a3a;"></div><div class="led" style="left:3176.6px;top:1167px;width:14.5px;height:14px;background:#e0d020;"></div><div class="kv" style="left:3101.8px;top:1207.9px;width:38px;height:10.2px;color:#555;font-weight:normal">-45.0 dB</div><div class="t" style="top:1204.5px;font-size:12px;line-height:16px;color:#d0d0d0;left:3145.5px;">Xpand</div><div class="kv" style="left:3196.7px;top:1207.9px;width:38px;height:10.2px;">-45.0 dB</div><div class="t" style="top:1204.5px;font-size:12px;line-height:16px;color:#d0d0d0;left:3240.8px;">Comp</div><div class="kv" style="left:3292px;top:1207.9px;width:38px;height:10.2px;">40.0 ms</div><div class="t" style="top:1204.5px;font-size:12px;line-height:16px;color:#d0d0d0;left:3336px;">Attack</div><div class="kv" style="left:3101.8px;top:1271.2px;width:38px;height:10.2px;color:#555;font-weight:normal">1.0</div><div class="t" style="top:1267.7px;font-size:12px;line-height:16px;color:#d0d0d0;left:3145.5px;">Ratio</div><div class="kv" style="left:3196.7px;top:1271.2px;width:38px;height:10.2px;">8.1</div><div class="t" style="top:1267.7px;font-size:12px;line-height:16px;color:#d0d0d0;left:3240.8px;">Ratio</div><div class="kv" style="left:3292px;top:1271.2px;width:38px;height:10.2px;">175.8 ms</div><div class="t" style="top:1267.7px;font-size:12px;line-height:16px;color:#d0d0d0;left:3336px;">Release</div><div class="led" style="left:3102px;top:1306.7px;width:14.5px;height:14px;background:#3a3a3a;"></div><div class="t" style="top:1307px;font-size:10.5px;line-height:14px;color:#d0d0d0;left:3119px;">DeExp</div><div class="led" style="left:3196.7px;top:1306.7px;width:14.5px;height:14px;background:#3a3a3a;"></div><div class="t" style="top:1307px;font-size:10.5px;line-height:14px;color:#d0d0d0;left:3214px;">DeComp</div><div class="kv" style="left:3292px;top:1334.1px;width:38px;height:10.2px;">1.3 ms</div><div class="t" style="top:1330px;font-size:12px;line-height:16px;color:#d0d0d0;left:3336px;">Hold</div></body></html>
